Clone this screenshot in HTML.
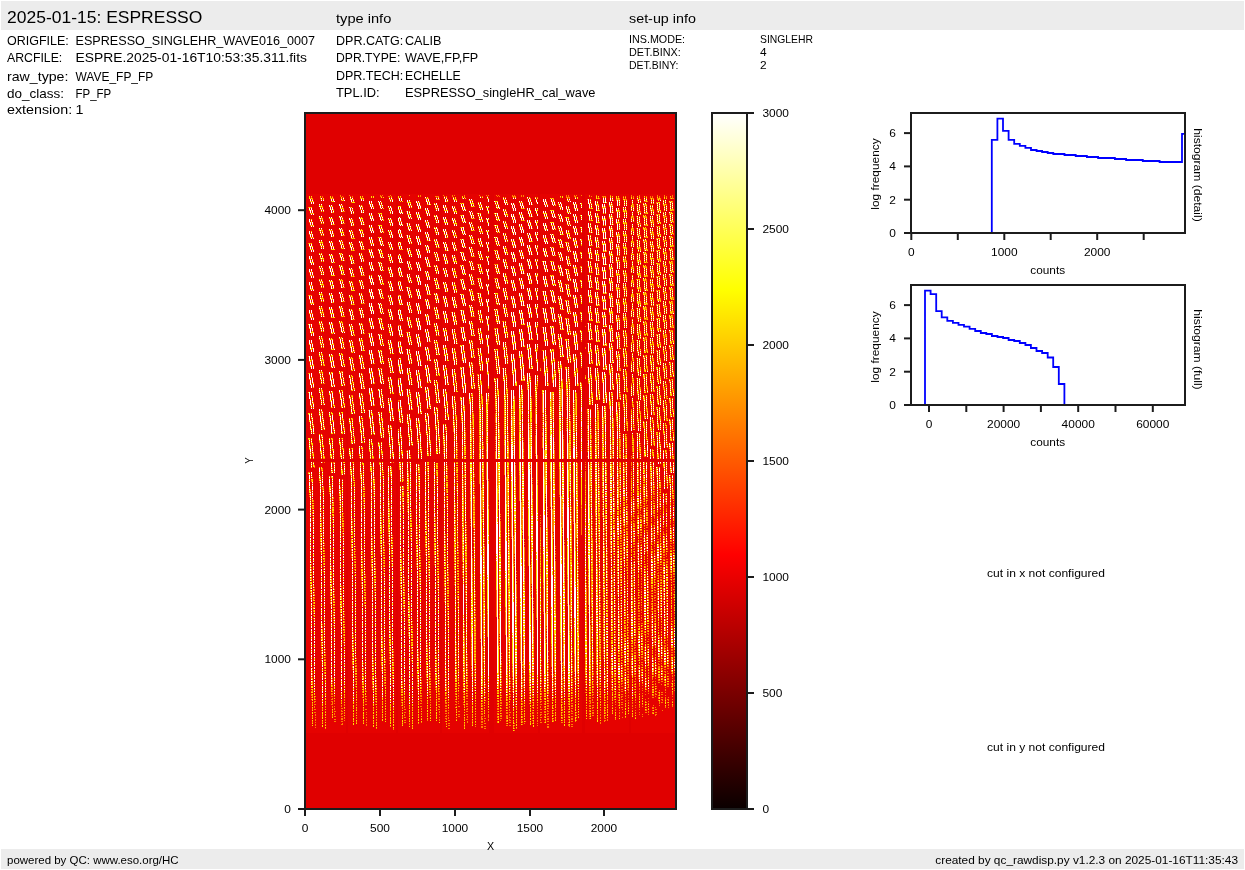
<!DOCTYPE html>
<html><head><meta charset="utf-8"><style>html,body{margin:0;padding:0;background:#fff;width:1245px;height:870px;overflow:hidden}svg{display:block;will-change:transform}text{font-family:"Liberation Sans",sans-serif}</style></head>
<body><svg width="1245" height="870" viewBox="0 0 1245 870" font-family="Liberation Sans, sans-serif" fill="#000"><rect x="1" y="1" width="1243" height="29" fill="#ececec"/>
<rect x="1" y="849" width="1243" height="20" fill="#ececec"/>
<text x="7" y="23" font-size="17.00" text-anchor="start" textLength="195.33" lengthAdjust="spacingAndGlyphs" >2025-01-15: ESPRESSO</text>
<text x="336" y="23" font-size="13.21" text-anchor="start" textLength="55.34" lengthAdjust="spacingAndGlyphs" >type info</text>
<text x="629" y="23" font-size="13.21" text-anchor="start" textLength="66.89" lengthAdjust="spacingAndGlyphs" >set-up info</text>
<text x="7" y="45.2" font-size="13.21" text-anchor="start" textLength="61.85" lengthAdjust="spacingAndGlyphs" >ORIGFILE:</text>
<text x="75.5" y="45.2" font-size="13.21" text-anchor="start" textLength="239.56" lengthAdjust="spacingAndGlyphs" >ESPRESSO_SINGLEHR_WAVE016_0007</text>
<text x="7" y="61.7" font-size="13.21" text-anchor="start" textLength="55.29" lengthAdjust="spacingAndGlyphs" >ARCFILE:</text>
<text x="75.5" y="61.7" font-size="13.21" text-anchor="start" textLength="231.44" lengthAdjust="spacingAndGlyphs" >ESPRE.2025-01-16T10:53:35.311.fits</text>
<text x="7" y="80.5" font-size="13.21" text-anchor="start" textLength="61.41" lengthAdjust="spacingAndGlyphs" >raw_type:</text>
<text x="75.5" y="80.5" font-size="13.21" text-anchor="start" textLength="77.83" lengthAdjust="spacingAndGlyphs" >WAVE_FP_FP</text>
<text x="7" y="97.7" font-size="13.21" text-anchor="start" textLength="57.07" lengthAdjust="spacingAndGlyphs" >do_class:</text>
<text x="75.5" y="97.7" font-size="13.21" text-anchor="start" textLength="35.71" lengthAdjust="spacingAndGlyphs" >FP_FP</text>
<text x="7" y="113.5" font-size="13.21" text-anchor="start" textLength="65.15" lengthAdjust="spacingAndGlyphs" >extension:</text>
<text x="75.5" y="113.5" font-size="13.21" text-anchor="start" textLength="7.95" lengthAdjust="spacingAndGlyphs" >1</text>
<text x="336" y="45" font-size="13.21" text-anchor="start" textLength="67.22" lengthAdjust="spacingAndGlyphs" >DPR.CATG:</text>
<text x="405" y="45" font-size="13.21" text-anchor="start" textLength="36.51" lengthAdjust="spacingAndGlyphs" >CALIB</text>
<text x="336" y="62.4" font-size="13.21" text-anchor="start" textLength="64.29" lengthAdjust="spacingAndGlyphs" >DPR.TYPE:</text>
<text x="405" y="62.4" font-size="13.21" text-anchor="start" textLength="73.28" lengthAdjust="spacingAndGlyphs" >WAVE,FP,FP</text>
<text x="336" y="80.3" font-size="13.21" text-anchor="start" textLength="67.25" lengthAdjust="spacingAndGlyphs" >DPR.TECH:</text>
<text x="405" y="80.3" font-size="13.21" text-anchor="start" textLength="55.75" lengthAdjust="spacingAndGlyphs" >ECHELLE</text>
<text x="336" y="97.2" font-size="13.21" text-anchor="start" textLength="43.63" lengthAdjust="spacingAndGlyphs" >TPL.ID:</text>
<text x="405" y="97.2" font-size="13.21" text-anchor="start" textLength="190.48" lengthAdjust="spacingAndGlyphs" >ESPRESSO_singleHR_cal_wave</text>
<text x="629" y="43.1" font-size="11.01" text-anchor="start" textLength="56.09" lengthAdjust="spacingAndGlyphs" >INS.MODE:</text>
<text x="760" y="43.1" font-size="11.01" text-anchor="start" textLength="53.01" lengthAdjust="spacingAndGlyphs" >SINGLEHR</text>
<text x="629" y="55.9" font-size="11.01" text-anchor="start" textLength="51.70" lengthAdjust="spacingAndGlyphs" >DET.BINX:</text>
<text x="760" y="55.9" font-size="11.01" text-anchor="start" textLength="6.63" lengthAdjust="spacingAndGlyphs" >4</text>
<text x="629" y="68.8" font-size="11.01" text-anchor="start" textLength="49.54" lengthAdjust="spacingAndGlyphs" >DET.BINY:</text>
<text x="760" y="68.8" font-size="11.01" text-anchor="start" textLength="6.63" lengthAdjust="spacingAndGlyphs" >2</text>
<text x="7" y="864" font-size="11.01" text-anchor="start" textLength="171.64" lengthAdjust="spacingAndGlyphs" >powered by QC: www.eso.org/HC</text>
<text x="1238" y="864" font-size="11.01" text-anchor="end" textLength="302.72" lengthAdjust="spacingAndGlyphs" >created by qc_rawdisp.py v1.2.3 on 2025-01-16T11:35:43</text>
<g id="img"><rect x="305" y="113" width="371" height="696" fill="#e00000"/><rect x="306" y="194" width="370" height="539" fill="#e50200"/><rect x="489" y="194" width="5" height="539" fill="#e00000"/><rect x="538" y="194" width="2" height="539" fill="#e00000"/><rect x="582" y="194" width="3" height="539" fill="#e00000"/><rect x="629" y="194" width="2" height="539" fill="#e00000"/><rect x="346" y="194" width="2" height="539" fill="#e00000"/><rect x="396" y="194" width="2" height="539" fill="#e00000"/><rect x="440" y="194" width="2" height="539" fill="#e00000"/><rect x="306" y="459" width="370" height="3" fill="#e00000"/><path d="M308.5 207v1m0 35v1m0 51v1m0 60v1m0 16v1m0 40v1m0 24v1m0 32v1M309.5 222v1m0 11v1m0 24v1m0 12v1m0 12v1m0 13v1m0 61v1m0 17v1m0 69v1m0 22v1m0 1v1m0 6v1m0 6v1m0 7v1M310.5 198v1m0 8v1m0 5v1m0 11v1m0 11v1m0 5v1m0 14v1m0 30v1m0 5v1m0 7v1m0 9v1m0 10v1m0 24v1m0 55v1m0 14v1m0 25v2m0 41v3m0 1v1m0 1v1m0 4v1m0 4v1m0 6v1m0 9v1m0 4v1m0 14v1m0 2v1m0 9v1m0 2v1m0 9v1m0 2v1m0 1v1m0 5v1m0 6v2m0 3v1m0 1v1m0 1v2m0 1v1M311.5 197v1m0 3v1m0 8v1m0 11v1m0 11v1m0 14v1m0 22v1m0 2v1m0 9v1m0 2v1m0 6v1m0 3v1m0 2v1m0 10v1m0 3v1m0 10v1m0 14v1m0 16v1m0 4v1m0 11v1m0 26v1m0 12v1m0 10v1m0 15v1m0 31v1m0 3v2m0 80v1m0 1v1m0 2v1m0 1v2m0 3v1m0 3v2m0 4v1m0 1v1m0 7v1m0 2v1m0 9v1m0 2v1m0 9v1m0 2v1m0 9v1m0 2v1m0 9v1m0 2v1m0 9v1m0 2v1m0 9v1m0 2v1m0 1v1m0 5v1m0 7v1m0 2v2m0 1v1m0 1v1M312.5 198v1m0 14v1m0 11v1m0 11v1m0 37v1m0 9v1m0 3v1m0 13v1m0 9v1m0 3v1m0 25v1m0 15v1m0 5v1m0 11v1m0 5v1m0 19v1m0 13v1m0 7v2m0 24v1m0 1v3m0 21v1m0 5v1m0 1v1m0 4v1m0 1v1m0 6v1m0 6v2m0 2v1m0 1v2m0 1v1m0 2v1m0 1v1m0 147v1m0 2v1m0 1v2m0 1v1m0 1v1m0 3v2m0 6v2m0 3v2m0 6v2m0 3v2m0 6v2m0 3v2M313.5 201v1m0 35v1m0 11v1m0 25v1m0 26v1m0 14v1m0 46v1m0 17v1m0 19v1m0 21v2m0 26v2m0 46v2m0 4v2m0 3v1m0 4v1m0 2v1m0 1v1m0 2v1m0 1v1m0 2v1m0 50v1m0 5v1m0 6v2m0 3v2m0 2v2m0 3v1m0 2v2m0 1v1m0 1v1m0 2v1M314.5 433v1m0 31v1m0 1v1m0 119v1m0 1v2m0 1v1m0 1v1m0 2v2m0 7v2m0 4v1m0 6v1m0 5v1m0 58v1m0 5v1m0 6v2m0 2v2m0 1v1m0 1v2m0 1v1m0 2v1M315.5 696v1m0 2v1m0 1v1m0 2v1m0 4v1m0 2v1m0 1v2m0 1v1m0 1v2m0 1v1m0 1v2m0 1v1M319.5 268v1m0 12v1m0 27v1m0 14v1m0 14v1m0 16v1m0 16v1m0 41v1m0 25v2m0 31v1m0 4v1m0 2v1M320.5 197v2m0 10v1m0 11v1m0 11v1m0 20v1m0 16v1m0 36v1m0 4v1m0 9v1m0 15v1m0 4v1m0 10v1m0 16v2m0 5v1m0 19v1m0 13v1m0 8v2m0 15v1m0 12v2m0 22v2m0 1v1m0 1v1m0 13v1m0 11v1m0 9v1m0 11v1m0 4v2m0 3v2m0 2v2m0 1v1m0 1v2m0 1v1M321.5 209v1m0 8v1m0 2v1m0 8v1m0 2v1m0 11v1m0 25v1m0 9v1m0 30v1m0 10v1m0 19v1m0 28v1m0 5v1m0 12v1m0 6v2m0 11v2m0 8v1m0 14v2m0 12v1m0 18v2m0 37v1m0 2v1m0 1v1m0 2v1m0 1v1m0 1v2m0 2v2m0 3v2m0 3v1m0 7v1m0 2v1m0 1v1m0 88v1m0 1v1m0 4v2m0 3v1m0 3v2m0 1v1m0 2v1m0 1v1M322.5 196v2m0 8v1m0 2v1m0 11v1m0 11v1m0 37v1m0 2v1m0 19v1m0 13v1m0 14v1m0 14v1m0 4v1m0 10v1m0 5v1m0 16v1m0 12v1m0 6v1m0 13v1m0 7v2m0 8v1m0 5v2m0 1v1m0 23v1m0 5v2m0 1v1m0 4v1m0 1v1m0 4v1m0 3v3m0 1v1m0 132v1m0 1v2m0 1v3m0 3v2m0 1v1m0 4v2m0 4v1m0 1v1m0 49v1m0 1v1m0 4v2m0 4v1m0 1v1m0 4v2M323.5 209v1m0 11v1m0 11v1m0 11v1m0 25v1m0 12v1m0 13v1m0 13v1m0 14v1m0 15v1m0 15v1m0 5v1m0 11v1m0 5v1m0 12v2m0 5v2m0 13v2m0 7v2m0 16v1m0 1v1m0 1v1m0 1v1m0 1v1m0 4v1m0 27v3m0 1v1m0 1v1m0 4v1m0 1v1m0 2v1m0 8v1m0 2v1m0 1v1m0 2v1m0 1v1m0 2v1m0 1v1m0 2v1m0 1v1m0 2v1m0 1v1m0 4v1m0 4v2m0 7v1m0 3v1m0 1v1m0 1v2m0 1v1m0 2v1m0 1v1M324.5 316v1m0 47v1m0 18v1m0 19v1m0 22v2m0 28v1m0 1v1m0 3v1m0 80v1m0 1v1m0 2v1m0 1v2m0 3v1m0 3v2m0 12v1m0 4v1m0 1v1m0 5v1m0 4v1m0 1v1m0 5v1m0 4v1m0 1v1m0 5v1m0 4v1m0 1v1m0 5v1m0 4v1m0 1v1m0 5v1m0 4v1m0 1v1m0 4v2m0 7v1m0 3v2m0 2v2m0 1v1m0 1v2m0 1v1m0 2v1M325.5 649v1m0 2v1m0 1v2m0 1v1m0 1v2m0 2v2m0 11v2m0 4v1m0 1v1m0 5v1m0 4v1m0 6v2m0 2v2m0 3v1m0 3v1m0 3v2m0 3v1m0 3v1M329.5 295v1m0 44v1m0 103v1m0 33v1m0 6v1m0 4v1m0 2v1M330.5 198v1m0 7v1m0 35v1m0 3v1m0 38v1m0 13v1m0 39v1m0 22v1m0 30v1m0 7v1m0 13v1m0 40v2m0 26v1m0 2v1m0 2v1m0 1v1m0 4v1m0 6v1m0 4v1m0 4v1m0 19v1m0 14v1m0 2v1m0 9v1m0 2v1m0 9v1m0 2v1m0 1v1m0 5v1m0 6v2m0 2v2m0 1v1m0 1v2M331.5 201v1m0 7v1m0 11v1m0 8v1m0 2v1m0 24v1m0 9v1m0 2v1m0 26v1m0 25v1m0 8v1m0 33v1m0 11v1m0 12v1m0 46v1m0 29v1m0 1v1m0 5v1m0 88v1m0 2v1m0 1v3m0 2v1m0 3v2m0 4v1m0 4v1m0 9v1m0 2v1m0 9v1m0 2v1m0 9v1m0 2v1m0 9v1m0 2v1m0 9v1m0 2v1m0 9v1m0 2v1m0 9v1m0 2v1m0 1v1m0 4v2m0 2v2m0 1v1m0 2v1m0 1v1m0 2v1M332.5 196v1m0 1v1m0 7v1m0 5v1m0 5v1m0 5v1m0 5v1m0 5v1m0 5v1m0 3v1m0 41v1m0 10v1m0 2v1m0 14v1m0 5v1m0 4v1m0 3v1m0 11v1m0 16v1m0 4v1m0 5v1m0 5v2m0 5v1m0 5v1m0 6v2m0 7v1m0 13v1m0 10v1m0 5v1m0 9v1m0 1v1m0 17v1m0 2v1m0 10v1m0 4v1m0 1v1m0 4v1m0 1v1m0 2v1m0 3v2m0 3v1m0 2v1m0 3v1m0 1v1m0 1v1m0 2v1m0 155v1m0 1v2m0 1v1m0 1v2m0 1v2m0 1v1m0 1v2m0 1v1m0 1v2m0 1v4m0 1v2m0 2v2m0 3v2M333.5 198v1m0 10v1m0 23v1m0 24v1m0 3v1m0 8v1m0 71v1m0 5v1m0 10v1m0 5v1m0 11v1m0 5v2m0 11v2m0 21v1m0 8v2m0 24v1m0 6v2m0 33v2m0 1v1m0 2v2m0 3v1m0 2v1m0 4v1m0 24v1m0 1v1m0 10v1m0 1v1m0 10v1m0 1v1m0 10v1m0 1v1m0 4v1m0 5v1m0 1v1m0 4v2m0 3v1m0 3v2m0 3v1m0 2v2m0 1v1m0 1v1m0 2v1M334.5 224v1m0 107v1m0 15v1m0 16v1m0 18v1m0 43v2m0 32v1m0 1v1m0 124v1m0 1v1m0 2v1m0 1v2m0 3v1m0 3v1m0 7v2m0 4v1m0 1v1m0 4v1m0 5v1m0 1v1m0 10v1m0 1v1m0 10v1m0 1v1m0 10v1m0 1v1m0 10v1m0 1v1m0 4v2m0 3v1m0 3v2m0 1v1m0 2v1m0 1v2m0 1v1m0 1v2m0 1v1m0 2v1m0 1v1M335.5 711v1m0 4v1m0 2v1m0 1v1M339.5 254v1m0 12v1m0 12v1m0 27v1m0 14v1m0 69v1m0 50v1m0 39v1m0 4v1m0 1v1m0 2v1m0 3v3m0 1v1m0 1v1m0 2v1m0 1v1m0 2v1M340.5 195v2m0 23v1m0 32v1m0 12v1m0 26v1m0 13v1m0 4v1m0 9v1m0 15v1m0 21v1m0 11v1m0 6v1m0 12v1m0 21v1m0 9v1m0 30v1m0 31v2m0 2v1m0 4v1m0 4v1m0 1v1m0 4v1m0 4v1m0 11v1m0 12v1m0 51v1m0 1v1m0 10v1m0 1v1m0 4v2m0 2v2m0 1v1m0 1v2m0 1v1M341.5 200v1m0 4v1m0 2v1m0 8v1m0 11v1m0 11v1m0 2v1m0 3v1m0 5v1m0 19v1m0 5v1m0 2v1m0 24v1m0 2v1m0 4v1m0 21v1m0 9v1m0 10v1m0 11v2m0 5v1m0 19v1m0 8v1m0 25v1m0 4v1m0 14v2m0 18v2m0 111v1m0 1v2m0 1v1m0 1v1m0 3v2m0 4v1m0 1v1m0 10v1m0 1v1m0 75v1m0 1v1m0 4v2m0 2v2m0 1v1m0 1v2m0 1v2m0 1v1m0 1v2m0 1v1m0 2v1M342.5 196v1m0 8v1m0 11v1m0 11v1m0 11v1m0 15v1m0 2v1m0 5v1m0 6v1m0 23v1m0 14v1m0 9v1m0 24v1m0 11v1m0 11v1m0 5v1m0 6v1m0 5v1m0 6v1m0 7v2m0 13v1m0 10v1m0 7v1m0 1v1m0 1v1m0 1v1m0 1v1m0 1v1m0 19v2m0 8v1m0 1v1m0 4v1m0 1v1m0 4v1m0 1v1m0 2v1m0 6v1m0 1v1m0 2v1m0 4v1m0 3v2m0 3v2m0 2v1m0 2v1m0 1v1m0 2v1m0 171v1m0 2v1m0 1v1m0 2v1m0 1v2m0 1v1m0 1v2M343.5 197v1m0 2v1m0 7v1m0 2v1m0 11v1m0 11v1m0 8v1m0 3v1m0 8v1m0 16v1m0 12v1m0 9v1m0 3v1m0 14v1m0 9v1m0 4v1m0 15v1m0 11v1m0 17v1m0 5v1m0 12v2m0 6v1m0 14v2m0 7v2m0 18v1m0 5v1m0 1v1m0 7v1m0 48v1m0 2v1m0 1v1m0 1v1m0 3v2m0 3v2m0 3v2m0 4v1m0 1v1m0 4v1m0 5v1m0 6v1m0 5v1m0 6v1m0 5v1m0 6v1m0 5v1m0 6v1m0 5v1m0 6v1m0 4v2m0 6v2m0 3v1m0 1v1m0 1v2m0 1v1m0 2v1m0 1v1M344.5 211v1m0 11v1m0 11v1m0 24v1m0 26v1m0 13v1m0 29v1m0 15v1m0 34v2m0 19v1m0 23v2m0 36v1m0 6v1m0 1v1m0 136v1m0 2v1m0 1v1m0 2v1m0 1v2m0 3v1m0 3v2m0 6v1m0 4v2m0 6v1m0 5v1m0 6v1m0 5v1m0 6v1m0 5v1m0 6v1m0 4v2m0 2v2m0 3v2m0 2v1m0 3v2m0 3v2m0 1v1M349.5 195v1m0 48v1m0 38v1m0 13v1m0 28v1m0 15v1m0 55v1m0 23v2m0 30v2M350.5 196v1m0 10v1m0 3v1m0 23v1m0 7v1m0 12v1m0 3v1m0 21v1m0 13v1m0 34v1m0 9v1m0 16v1m0 6v1m0 18v1m0 47v1m0 18v2m0 15v1m0 1v1m0 1v3M351.5 202v1m0 16v1m0 2v1m0 8v1m0 6v1m0 5v1m0 14v1m0 9v1m0 16v1m0 13v1m0 25v1m0 3v1m0 10v1m0 4v1m0 5v1m0 5v1m0 11v1m0 5v1m0 13v1m0 4v2m0 7v1m0 14v1m0 10v1m0 12v1m0 4v1m0 18v1m0 2v1m0 20v1m0 4v1m0 6v1m0 4v1m0 11v1m0 4v1m0 2v1m0 1v1m0 2v1m0 6v1m0 4v2m0 2v2m0 1v1m0 1v2m0 1v1M352.5 196v2m0 1v1m0 19v1m0 5v1m0 5v1m0 15v1m0 2v1m0 5v1m0 3v1m0 8v1m0 3v1m0 2v1m0 5v1m0 13v1m0 7v1m0 5v1m0 4v1m0 25v1m0 9v1m0 11v1m0 5v1m0 12v1m0 12v1m0 7v1m0 8v1m0 5v1m0 7v1m0 13v2m0 12v1m0 1v1m0 1v1m0 3v1m0 56v1m0 1v2m0 1v1m0 2v1m0 5v1m0 6v1m0 10v1m0 1v1m0 2v1m0 9v1m0 2v1m0 9v1m0 2v1m0 9v1m0 2v1m0 9v1m0 2v1m0 9v1m0 2v1m0 9v1m0 2v1m0 7v1m0 1v1m0 2v1m0 1v1m0 5v1m0 2v1m0 3v3m0 1v2m0 1v1M353.5 199v1m0 22v1m0 11v1m0 3v1m0 8v1m0 15v1m0 9v1m0 12v1m0 13v1m0 14v1m0 3v1m0 31v1m0 11v1m0 24v1m0 13v2m0 24v1m0 1v1m0 1v1m0 3v2m0 25v1m0 1v1m0 6v1m0 1v1m0 4v1m0 2v1m0 2v1m0 147v1m0 1v1m0 1v2m0 2v1m0 3v1m0 3v1m0 5v1m0 1v1m0 2v1m0 9v1m0 2v1m0 9v1m0 2v1m0 7v1m0 1v1m0 2v1m0 1v1m0 5v1m0 6v2m0 4v1M354.5 250v1m0 12v1m0 12v1m0 27v1m0 14v1m0 14v1m0 15v2m0 16v1m0 67v2m0 5v1m0 34v1m0 4v1m0 2v1m0 1v1m0 4v1m0 1v1m0 6v1m0 2v1m0 1v1m0 2v1m0 29v1m0 11v2m0 3v1m0 3v2m0 1v2m0 1v1m0 1v1m0 2v1m0 2v1M355.5 546v1m0 2v1m0 1v1m0 2v1m0 1v2m0 3v1m0 3v2m0 11v2m0 4v1m0 1v1m0 10v1m0 1v1m0 10v1m0 1v1m0 10v1m0 1v1m0 10v1m0 1v1m0 10v1m0 1v1m0 4v2m0 7v1m0 3v2m0 3v1m0 3v2m0 1v1m0 2v1m0 1v1M356.5 658v1m0 1v1m0 2v1m0 1v2m0 1v3m0 3v1m0 3v1m0 3v2m0 3v1m0 3v1m0 3v2m0 3v1m0 3v2m0 2v2m0 2v2m0 3v2m0 2v2M359.5 282v1m0 42v1m0 15v1m0 35v1m0 20v1m0 23v2m0 30v1m0 2v1M360.5 198v1m0 7v1m0 35v1m0 29v1m0 8v1m0 13v1m0 28v1m0 15v1m0 5v1m0 10v1m0 6v1m0 18v1m0 12v1m0 8v1m0 14v1m0 11v1m0 20v2m0 1v1m0 15v1m0 1v1m0 1v3M361.5 221v1m0 11v1m0 21v1m0 2v1m0 26v1m0 13v1m0 10v1m0 18v1m0 15v1m0 11v1m0 5v1m0 11v1m0 19v1m0 21v1m0 12v1m0 16v1m0 23v1m0 2v1m0 25v1m0 11v1m0 4v1m0 24v1m0 15v1m0 1v1m0 5v1m0 4v1m0 1v2m0 3v3m0 1v2m0 1v1m0 2v1M362.5 197v2m0 7v1m0 5v1m0 11v1m0 11v1m0 5v1m0 3v1m0 2v1m0 5v1m0 16v1m0 2v1m0 5v1m0 3v1m0 9v1m0 3v1m0 3v1m0 10v1m0 9v1m0 4v1m0 15v1m0 4v1m0 5v2m0 10v1m0 5v2m0 5v1m0 6v1m0 5v2m0 23v1m0 1v1m0 5v2m0 12v1m0 5v1m0 1v1m0 1v1m0 1v1m0 8v1m0 1v1m0 84v1m0 1v2m0 1v1m0 1v2m0 3v1m0 3v2m0 4v1m0 1v1m0 10v1m0 90v1m0 1v1m0 5v1m0 3v1m0 3v2m0 1v1m0 2v1M363.5 221v1m0 11v1m0 15v1m0 8v1m0 16v1m0 9v1m0 13v1m0 3v1m0 41v1m0 22v1m0 11v2m0 5v2m0 20v2m0 15v2m0 8v1m0 32v1m0 1v1m0 4v1m0 1v1m0 4v1m0 3v2m0 4v3m0 2v1m0 1v2m0 1v1m0 1v1m0 2v1m0 154v1m0 2v1m0 1v2m0 1v1m0 1v2m0 2v1m0 4v2m0 4v1m0 1v1m0 4v2m0 4v1m0 1v2m0 3v2m0 4v1m0 1v1m0 4v2M364.5 224v1m0 24v1m0 25v1m0 27v1m0 29v1m0 33v1m0 18v2m0 21v1m0 28v1m0 1v1m0 43v1m0 1v3m0 5v2m0 3v1m0 2v1m0 8v1m0 2v1m0 1v1m0 2v1m0 1v1m0 2v1m0 1v1m0 2v1m0 1v1m0 2v1m0 1v1m0 4v1m0 5v1m0 6v1m0 5v1m0 6v1m0 5v1m0 6v1m0 4v2m0 7v2m0 2v1m0 1v1m0 1v2m0 1v1M365.5 574v1m0 1v2m0 1v1m0 1v2m0 2v1m0 3v2m0 2v2m0 3v2m0 6v1m0 5v1m0 6v1m0 5v1m0 6v1m0 5v1m0 6v1m0 5v1m0 6v1m0 5v1m0 6v1m0 5v1m0 6v1m0 4v2m0 7v2m0 1v1m0 2v1m0 4v1M366.5 691v1m0 4v1m0 2v1m0 1v1m0 2v1m0 4v1m0 2v1m0 1v1m0 2v1m0 1v2m0 1v1m0 1v2M368.5 249v1m0 83v1m0 76v1M369.5 204v1m0 60v1m0 56v1m0 50v1m0 20v1m0 23v1m0 32v1M370.5 215v1m0 11v1m0 11v1m0 3v1m0 77v1m0 15v1m0 22v1m0 18v1m0 12v1m0 8v1m0 14v1m0 31v2m0 15v1m0 1v1m0 2v2M371.5 204v1m0 1v1m0 23v1m0 24v1m0 9v1m0 55v1m0 15v1m0 16v1m0 4v1m0 12v1m0 18v2m0 32v2m0 17v1m0 19v1m0 2v1m0 4v1m0 15v1m0 4v1m0 6v1m0 11v1m0 4v1m0 4v1m0 9v1m0 7v1m0 1v1m0 2v1m0 1v1m0 5v1m0 6v2m0 3v3m0 1v2m0 1v1m0 2v1M372.5 215v1m0 11v1m0 11v1m0 3v1m0 82v1m0 9v1m0 5v1m0 10v1m0 17v1m0 5v1m0 12v1m0 22v1m0 9v2m0 24v1m0 8v1m0 77v1m0 1v2m0 1v1m0 1v2m0 3v1m0 3v2m0 6v1m0 7v1m0 2v1m0 9v1m0 2v1m0 9v1m0 2v1m0 9v1m0 2v1m0 9v1m0 2v1m0 9v1m0 2v1m0 9v1m0 2v1m0 9v1m0 2v1m0 1v1m0 5v1m0 6v1m0 4v3m0 1v2m0 1v1M373.5 206v1m0 11v1m0 11v1m0 24v1m0 12v1m0 56v1m0 15v1m0 34v1m0 20v1m0 25v1m0 32v1m0 1v1m0 10v1m0 6v1m0 1v1m0 4v1m0 3v3m0 1v1m0 1v1m0 2v1m0 1v1m0 154v1m0 1v1m0 2v1m0 1v2m0 3v1m0 3v2m0 6v1m0 7v1m0 2v1m0 1v1m0 7v1m0 2v1m0 1v1m0 4v2m0 6v1m0 4v2M374.5 363v1m0 18v2m0 20v2m0 25v2m0 44v1m0 2v2m0 1v1m0 1v1m0 4v1m0 1v1m0 6v1m0 4v1m0 14v1m0 1v1m0 2v1m0 1v1m0 2v1m0 1v1m0 28v1m0 6v1m0 4v2m0 6v2m0 3v1m0 3v2m0 1v1m0 2v1m0 1v1M375.5 558v1m0 2v1m0 1v2m0 1v1m0 1v1m0 3v2m0 6v2m0 3v2m0 6v1m0 83v1m0 6v1m0 4v2m0 3v1m0 3v2m0 1v1m0 2v1M376.5 678v1m0 1v2m0 1v1m0 1v2m0 2v1m0 3v2m0 3v1m0 3v1m0 3v2m0 3v1m0 3v1m0 3v2m0 2v2m0 3v1M378.5 202v1m0 60v1m0 26v1m0 28v1m0 15v1m0 16v1m0 17v1m0 42v1m0 32v1M379.5 205v1m0 7v1m0 23v1m0 3v1m0 20v1m0 17v1m0 8v1m0 4v1m0 23v1m0 15v1m0 22v1m0 11v1m0 6v1m0 12v1m0 22v2m0 9v2m0 18v2m0 17v1m0 1v1M380.5 195v2m0 11v1m0 7v1m0 11v1m0 3v1m0 7v1m0 9v1m0 6v1m0 5v1m0 6v1m0 5v1m0 2v1m0 13v1m0 10v1m0 14v1m0 8v1m0 5v1m0 16v1m0 16v1m0 27v1m0 8v1m0 28v2m0 26v1m0 29v1m0 4v1m0 6v1m0 4v1m0 4v1m0 1v1m0 2v1m0 1v1m0 2v1m0 1v1m0 2v1m0 1v1m0 4v1m0 4v2m0 2v2m0 1v1m0 1v2m0 1v1M381.5 196v1m0 8v1m0 13v1m0 11v1m0 5v1m0 3v1m0 14v1m0 9v1m0 9v1m0 6v1m0 5v1m0 7v1m0 10v1m0 9v1m0 4v1m0 3v1m0 6v1m0 4v1m0 10v1m0 10v1m0 6v1m0 5v1m0 6v1m0 13v1m0 24v1m0 11v1m0 13v1m0 1v1m0 4v2m0 58v1m0 1v1m0 1v2m0 3v1m0 3v1m0 2v1m0 1v1m0 4v1m0 12v1m0 2v1m0 9v1m0 2v1m0 9v1m0 2v1m0 9v1m0 2v1m0 9v1m0 2v1m0 9v1m0 2v1m0 9v1m0 2v1m0 9v1m0 2v1m0 7v1m0 6v2m0 3v3m0 1v2m0 1v1M382.5 195v1m0 20v1m0 11v1m0 15v1m0 12v1m0 8v1m0 3v1m0 8v1m0 13v1m0 18v1m0 42v1m0 17v2m0 5v1m0 13v1m0 7v1m0 15v1m0 10v2m0 20v1m0 1v1m0 1v1m0 1v1m0 6v1m0 1v1m0 4v1m0 4v1m0 154v1m0 2v1m0 1v4m0 1v1m0 3v2m0 4v1m0 4v1m0 9v1m0 2v1m0 9v1m0 2v1m0 9v1m0 2v1m0 1v1m0 4v2m0 6v2m0 3v2M383.5 219v1m0 11v1m0 12v1m0 52v1m0 14v1m0 30v1m0 35v2m0 20v2m0 26v1m0 40v1m0 9v1m0 1v1m0 4v1m0 1v1m0 4v1m0 1v1m0 9v1m0 1v1m0 2v1m0 1v1m0 2v1m0 19v1m0 4v1m0 1v1m0 4v2m0 3v1m0 3v2m0 3v2m0 1v2m0 1v1m0 1v1m0 2v1M384.5 542v1m0 2v1m0 1v1m0 1v1m0 2v2m0 7v2m0 11v1m0 5v1m0 1v1m0 4v1m0 5v1m0 1v1m0 4v1m0 5v1m0 1v1m0 4v1m0 5v1m0 1v1m0 4v1m0 5v1m0 1v1m0 4v1m0 5v1m0 1v1m0 4v1m0 5v1m0 1v1m0 4v2m0 3v1m0 3v2m0 3v2m0 1v2m0 1v1M385.5 659v1m0 1v2m0 1v1m0 2v1m0 1v2m0 3v2m0 2v2m0 3v1m0 7v2m0 3v1m0 3v2m0 3v1m0 3v1m0 3v2m0 3v1M388.5 196v1m0 47v1m0 25v1m0 12v1m0 13v1m0 14v1m0 14v1m0 16v1m0 16v2m0 18v1m0 21v1m0 28v2m0 61v1m0 11v1m0 4v1m0 4v1m0 1v1m0 2v1m0 1v1m0 2v1m0 1v2m0 4v2m0 1v1m0 2v1m0 1v1M389.5 196v2m0 1v1m0 19v1m0 11v1m0 15v1m0 21v1m0 3v1m0 9v1m0 3v1m0 9v1m0 3v1m0 25v1m0 15v1m0 5v1m0 11v1m0 5v1m0 12v2m0 20v2m0 28v1m0 12v1m0 55v1m0 1v2m0 1v1m0 1v3m0 3v2m0 3v1m0 2v1m0 1v1m0 2v1m0 1v1m0 2v1m0 1v1m0 2v1m0 9v1m0 80v1m0 1v1m0 10v1m0 1v1m0 4v2m0 3v1m0 1v1m0 1v2m0 1v1m0 2v1M390.5 195v1m0 3v1m0 10v1m0 11v1m0 11v1m0 9v1m0 2v1m0 25v1m0 12v1m0 14v1m0 10v1m0 14v1m0 15v1m0 22v2m0 12v1m0 6v1m0 23v1m0 15v1m0 17v1m0 1v1m0 21v1m0 1v1m0 1v3m0 145v1m0 2v1m0 1v2m0 1v1m0 1v1m0 3v2m0 4v1m0 1v1m0 10v1m0 1v1m0 36v1m0 1v1m0 5v1m0 4v1m0 1v1m0 4v2m0 4v1m0 1v1m0 4v1M391.5 196v1m0 2v1m0 7v1m0 11v1m0 11v1m0 24v1m0 3v1m0 8v1m0 6v1m0 10v1m0 2v1m0 20v1m0 4v1m0 9v1m0 15v1m0 5v1m0 17v1m0 5v1m0 13v1m0 13v1m0 9v1m0 9v1m0 5v2m0 10v1m0 23v1m0 4v3m0 1v1m0 6v1m0 13v1m0 6v1m0 9v1m0 1v1m0 22v1m0 4v1m0 1v1m0 4v2m0 3v2m0 2v2m0 1v1m0 1v2m0 1v1m0 2v1M392.5 222v1m0 11v1m0 80v1m0 31v1m0 17v1m0 6v1m0 12v1m0 7v1m0 23v1m0 19v2m0 12v1m0 1v1m0 1v2m0 78v1m0 1v2m0 3v1m0 3v2m0 3v2m0 6v1m0 90v1m0 5v1m0 6v1m0 4v2m0 3v1m0 3v2m0 1v1m0 2v1m0 1v1M393.5 290v1m0 80v1m0 20v1m0 23v2m0 35v1m0 8v1m0 186v1m0 1v2m0 1v2m0 3v2m0 2v2m0 3v2m0 6v1m0 5v1m0 6v1m0 5v1m0 6v1m0 4v2m0 6v2m0 3v2m0 6v2M398.5 198v1m0 22v1m0 24v1m0 25v1m0 8v1m0 13v1m0 4v1m0 24v1m0 15v1m0 5v1m0 11v1m0 6v1m0 11v1m0 21v2m0 9v1m0 18v1m0 12v1M399.5 209v1m0 23v1m0 15v1m0 5v1m0 15v1m0 13v1m0 3v1m0 6v1m0 2v1m0 4v1m0 14v1m0 5v1m0 9v1m0 5v1m0 4v1m0 17v1m0 7v1m0 5v1m0 6v1m0 7v2m0 5v1m0 8v1m0 10v2m0 21v1m0 19v1m0 1v1m0 1v3M400.5 197v1m0 23v1m0 14v1m0 9v1m0 25v1m0 2v1m0 5v1m0 13v1m0 7v1m0 14v1m0 6v1m0 4v1m0 3v1m0 6v1m0 28v1m0 36v2m0 9v1m0 17v1m0 26v1m0 1v1m0 27v1m0 6v1m0 4v1m0 4v1m0 6v1m0 4v1m0 4v1m0 4v1m0 7v1m0 12v1m0 1v1m0 10v1m0 1v1m0 4v2m0 3v2m0 2v1m0 2v2m0 1v1m0 1v1m0 2v1M401.5 209v1m0 11v1m0 11v1m0 15v1m0 21v1m0 13v1m0 3v1m0 9v1m0 4v1m0 24v1m0 22v1m0 30v1m0 7v1m0 14v2m0 7v1m0 19v2m0 1v1m0 10v1m0 1v1m0 1v2m0 96v1m0 2v1m0 1v2m0 1v3m0 3v2m0 1v1m0 5v1m0 4v1m0 1v1m0 101v1m0 1v1m0 4v2m0 3v1m0 1v1m0 1v2m0 1v1m0 2v1M402.5 236v1m0 38v1m0 13v1m0 13v1m0 47v1m0 17v1m0 44v2m0 34v2m0 6v1m0 8v1m0 1v1m0 4v1m0 1v1m0 1v1m0 9v1m0 3v1m0 2v1m0 3v2m0 2v1m0 1v2m0 1v1m0 165v1m0 1v1m0 2v1m0 1v2m0 3v1m0 3v2m0 3v1m0 3v1m0 3v2m0 2v2m0 3v1m0 3v2m0 4v1m0 1v1M403.5 475v1m0 1v1m0 1v2m0 5v3m0 3v1m0 2v1m0 3v1m0 4v1m0 2v1m0 1v1m0 65v1m0 5v1m0 6v1m0 4v2m0 6v2m0 3v1m0 1v1m0 1v2m0 1v1M404.5 577v1m0 1v1m0 2v1m0 1v2m0 3v1m0 3v2m0 6v1m0 5v1m0 6v1m0 70v1m0 6v1m0 4v2m0 2v2m0 1v1m0 1v2m0 1v1m0 2v1m0 1v2m0 1v1m0 2v1m0 1v1M405.5 709v1m0 2v1m0 4v1m0 2v1m0 1v1M406.5 211v1m0 11v1m0 11v1m0 96v1m0 56v1m0 61v1M407.5 214v1m0 11v1m0 11v1m0 12v1m0 39v1m0 29v1m0 15v1m0 36v1m0 21v1m0 53v1m0 26v1m0 4v1m0 1v1m0 1v1m0 2v1m0 3v1m0 2v1m0 3v2m0 2v1m0 1v2m0 1v1m0 1v1M408.5 250v1m0 3v1m0 8v1m0 17v1m0 5v1m0 7v1m0 24v1m0 11v1m0 3v1m0 5v1m0 17v1m0 19v1m0 23v1m0 16v2m0 12v1m0 35v1m0 1v3m0 3v1m0 2v1m0 1v1m0 1v1m0 2v1m0 3v1m0 2v1m0 1v1m0 4v1m0 4v1m0 6v1m0 9v1m0 14v1m0 2v1m0 53v1m0 10v1m0 1v1m0 5v1m0 4v1m0 2v1m0 2v2m0 1v1m0 1v2m0 1v1M409.5 195v1m0 18v1m0 11v1m0 50v1m0 2v1m0 6v1m0 6v1m0 10v1m0 35v1m0 11v1m0 5v1m0 19v1m0 13v2m0 24v2m0 14v1m0 20v1m0 1v1m0 3v1m0 133v1m0 1v2m0 1v3m0 3v2m0 1v1m0 5v1m0 4v1m0 1v1m0 75v1m0 1v1m0 4v2m0 4v1m0 1v2m0 3v2m0 2v2M410.5 205v1m0 11v1m0 11v1m0 11v1m0 8v1m0 16v1m0 9v1m0 12v1m0 14v1m0 3v1m0 31v1m0 11v1m0 5v1m0 32v2m0 7v2m0 15v1m0 11v2m0 23v1m0 2v1m0 15v1m0 6v1m0 6v1m0 11v1m0 18v1m0 4v1m0 5v2m0 1v1m0 1v2m0 1v1M411.5 205v1m0 11v1m0 11v1m0 11v1m0 25v1m0 12v1m0 13v1m0 14v1m0 14v1m0 15v2m0 16v1m0 42v1m0 28v1m0 12v1m0 67v1m0 1v1m0 1v2m0 3v1m0 3v1m0 4v1m0 4v1m0 82v1m0 5v1m0 6v1m0 4v2m0 6v2m0 3v1m0 1v1m0 1v2m0 1v1m0 2v1m0 1v1M412.5 384v1m0 23v2m0 33v1m0 1v1m0 175v1m0 2v1m0 1v2m0 3v1m0 3v2m0 6v1m0 4v2m0 6v1m0 5v1m0 32v1m0 4v2m0 6v2m0 3v2m0 6v2m0 3v2M416.5 251v1m0 54v1m0 31v1m0 36v1m0 22v1m0 28v2m0 63v1m0 4v1m0 6v1m0 4v1m0 4v1m0 14v1m0 1v1m0 2v1m0 1v1m0 4v1m0 5v1m0 6v2m0 2v2m0 1v1m0 1v2m0 1v1M417.5 202v1m0 39v1m0 83v1m0 10v1m0 5v1m0 17v1m0 20v1m0 13v1m0 27v2m0 14v1m0 2v1m0 81v1m0 1v2m0 1v1m0 1v2m0 3v1m0 3v2m0 4v1m0 1v1m0 2v1m0 9v1m0 2v1m0 9v1m0 2v1m0 9v1m0 2v1m0 9v1m0 2v1m0 9v1m0 2v1m0 9v1m0 2v1m0 9v1m0 2v1m0 9v1m0 2v1m0 9v1m0 4v1m0 4v2m0 2v2m0 1v1m0 1v2m0 1v1M418.5 195v1m0 9v1m0 20v1m0 2v1m0 34v1m0 2v1m0 38v1m0 18v1m0 28v1m0 5v1m0 44v1m0 34v1m0 25v1m0 4v1m0 5v2m0 4v1m0 1v2m0 1v1m0 1v1m0 158v1m0 2v1m0 1v2m0 1v3m0 3v2m0 6v1m0 5v1m0 1v1m0 2v1m0 7v1m0 1v1m0 4v1m0 4v2m0 6v2m0 3v2m0 6v1M419.5 202v1m0 5v1m0 5v1m0 11v1m0 11v1m0 66v1m0 4v1m0 31v1m0 11v1m0 5v1m0 19v1m0 13v1m0 25v2m0 11v1m0 31v1m0 1v2m0 1v2m0 8v1m0 1v1m0 4v1m0 1v1m0 4v1m0 11v1m0 6v1m0 27v1m0 1v1m0 10v1m0 1v1m0 4v2m0 11v2m0 3v1m0 3v2m0 1v1m0 2v1M420.5 195v2m0 8v1m0 35v1m0 12v1m0 12v1m0 73v1m0 17v1m0 27v1m0 14v1m0 9v2m0 18v2m0 14v1m0 1v3m0 97v1m0 1v1m0 2v1m0 1v2m0 3v1m0 3v1m0 7v2m0 4v1m0 1v1m0 4v1m0 5v1m0 1v1m0 10v1m0 1v1m0 10v1m0 1v1m0 10v1m0 1v1m0 10v1m0 1v1m0 10v1m0 1v1m0 10v1m0 1v1m0 4v1m0 12v2m0 2v2m0 1v1m0 1v1m0 2v1m0 2v1M421.5 386v1m0 25v1m0 34v1m0 2v1m0 226v1m0 2v1m0 1v2m0 1v1m0 1v2m0 1v1m0 2v1m0 1v2m0 1v1m0 1v2m0 1v1m0 2v1m0 1v2m0 3v2m0 3v1m0 3v1M425.5 198v1m0 11v1m0 11v1m0 11v1m0 38v1m0 27v1m0 14v1m0 15v1m0 17v1m0 41v1m0 27v2m0 81v1m0 4v1m0 6v1m0 4v1m0 4v1m0 2v1m0 4v1m0 4v1m0 1v2m0 3v3m0 1v2m0 1v1m0 1v1M426.5 198v1m0 47v1m0 3v1m0 12v1m0 8v1m0 13v1m0 13v1m0 14v1m0 5v1m0 46v1m0 7v1m0 13v1m0 9v1m0 32v1m0 77v2m0 1v1m0 1v2m0 1v1m0 2v2m0 4v1m0 4v1m0 4v1m0 1v1m0 2v1m0 7v1m0 1v1m0 2v1m0 9v1m0 2v1m0 9v1m0 2v1m0 9v1m0 2v1m0 9v1m0 2v1m0 9v1m0 2v1m0 9v1m0 2v1m0 9v1m0 2v1m0 7v1m0 1v1m0 4v1m0 4v2m0 3v1m0 2v3m0 1v1m0 2v1M427.5 210v1m0 11v1m0 11v1m0 14v1m0 26v1m0 13v1m0 10v1m0 14v1m0 3v1m0 11v1m0 16v1m0 18v1m0 20v2m0 25v1m0 14v1m0 1v1m0 29v1m0 5v3m0 1v1m0 1v1m0 2v1m0 1v1m0 159v1m0 2v1m0 1v2m0 1v3m0 3v2m0 6v1m0 5v1m0 1v1m0 2v1m0 7v1m0 1v1m0 2v1m0 7v1m0 6v2m0 3v2m0 6v2m0 3v2M428.5 198v1m0 5v1m0 8v1m0 11v1m0 11v1m0 2v1m0 9v1m0 8v1m0 3v1m0 2v1m0 5v1m0 21v1m0 5v1m0 4v1m0 9v1m0 15v1m0 16v1m0 18v1m0 14v1m0 5v1m0 8v2m0 9v1m0 5v2m0 10v1m0 1v2m0 21v1m0 2v1m0 8v1m0 3v1m0 4v1m0 1v1m0 4v1m0 13v1m0 1v1m0 9v1m0 1v1m0 32v1m0 4v1m0 1v1m0 4v2m0 3v1m0 3v1m0 4v1m0 2v2m0 1v1m0 1v2m0 1v1m0 2v1M429.5 201v1m0 35v1m0 24v1m0 41v1m0 68v1m0 7v1m0 43v1m0 17v1m0 2v1m0 94v1m0 1v1m0 2v1m0 1v2m0 3v1m0 3v1m0 7v2m0 4v1m0 1v1m0 4v1m0 5v1m0 1v1m0 10v1m0 1v1m0 10v1m0 1v1m0 10v1m0 1v1m0 10v1m0 1v1m0 10v1m0 1v1m0 10v1m0 1v1m0 4v1m0 5v1m0 1v1m0 4v2m0 3v1m0 3v2m0 1v1m0 2v1M430.5 240v1m0 83v1m0 16v1m0 17v1m0 44v2m0 34v2m0 1v1m0 1v1m0 222v1m0 2v1m0 1v2m0 1v1m0 1v2m0 3v1m0 2v2m0 3v2m0 3v1m0 2v2m0 1v1m0 1v2m0 3v1m0 3v1m0 3v1M434.5 241v1m0 12v1m0 55v1m0 32v1m0 41v1m0 27v2m0 80v1m0 4v1m0 6v1m0 4v1m0 4v1m0 16v1m0 5v1m0 4v1m0 1v2m0 3v2m0 2v2m0 1v1m0 1v2m0 1v1M435.5 196v1m0 7v1m0 3v1m0 23v1m0 24v1m0 8v1m0 27v1m0 4v1m0 31v1m0 10v2m0 5v1m0 19v1m0 23v2m0 31v1m0 1v2m0 83v1m0 2v1m0 1v1m0 1v2m0 1v3m0 3v2m0 3v2m0 4v1m0 4v1m0 1v1m0 10v1m0 1v1m0 90v1m0 10v1m0 1v1m0 4v1m0 5v1m0 1v1m0 4v3m0 1v2m0 1v1M436.5 196v2m0 1v1m0 41v1m0 15v1m0 37v1m0 2v1m0 11v1m0 50v1m0 47v2m0 15v1m0 20v1m0 16v1m0 2v1m0 3v1m0 1v3m0 1v1m0 1v1m0 1v2m0 1v1m0 162v1m0 2v1m0 1v2m0 1v1m0 1v1m0 3v1m0 2v2m0 3v2m0 4v1m0 1v1m0 4v1m0 5v1m0 1v1m0 4v2m0 3v2m0 1v1m0 4v2m0 4v1m0 1v1M437.5 196v1m0 2v1m0 8v1m0 7v1m0 5v1m0 5v1m0 3v1m0 20v1m0 3v1m0 2v1m0 5v1m0 13v1m0 13v1m0 4v1m0 9v1m0 8v1m0 6v1m0 22v1m0 11v1m0 6v2m0 6v1m0 25v1m0 19v2m0 23v1m0 2v1m0 2v1m0 11v2m0 1v1m0 3v1m0 4v1m0 1v1m0 4v1m0 8v1m0 4v1m0 16v1m0 1v1m0 2v1m0 1v1m0 2v1m0 1v1m0 2v1m0 1v1m0 2v1m0 1v1m0 4v1m0 5v1m0 4v1m0 1v1m0 4v2m0 3v1m0 3v1m0 3v1m0 3v2m0 1v1m0 1v2m0 1v1m0 2v1m0 1v1M438.5 196v1m0 2v1m0 70v1m0 27v1m0 36v1m0 11v1m0 6v1m0 12v1m0 21v1m0 9v2m0 20v1m0 14v1m0 1v1m0 2v1m0 103v1m0 2v1m0 1v2m0 1v1m0 1v2m0 2v1m0 4v1m0 3v1m0 3v2m0 4v1m0 1v1m0 5v1m0 4v1m0 1v1m0 10v1m0 1v1m0 10v1m0 1v1m0 10v1m0 1v1m0 10v1m0 1v1m0 10v1m0 1v1m0 10v1m0 1v1m0 5v1m0 4v1m0 6v2m0 2v2m0 1v1m0 1v2m0 1v1m0 2v1m0 1v1m0 2v1M439.5 199v1m0 47v1m0 12v1m0 57v1m0 16v1m0 17v1m0 19v1m0 24v2m0 35v1m0 2v1m0 236v1m0 2v1m0 1v1m0 2v1m0 2v1m0 1v1m0 2v1m0 1v2m0 1v1m0 1v2m0 1v1m0 2v1m0 1v2m0 1v1m0 1v2m0 1v1m0 2v1m0 1v2M443.5 195v1m0 74v1m0 13v1m0 14v1m0 14v1m0 16v1m0 38v1m0 25v1m0 42v1m0 1v1m0 1v3m0 1v1m0 1v1m0 1v1m0 1v1M444.5 196v1m0 46v1m0 12v1m0 3v1m0 22v1m0 4v1m0 9v1m0 4v1m0 9v1m0 5v1m0 10v1m0 5v1m0 11v1m0 29v1m0 15v1m0 11v1m0 27v1m0 2v1m0 1v1m0 1v1m0 49v1m0 4v1m0 6v1m0 4v1m0 11v1m0 4v1m0 4v1m0 4v1m0 2v1m0 1v1m0 2v1m0 4v1m0 2v1m0 1v1m0 2v1m0 1v1m0 5v1m0 6v2m0 3v2m0 2v1m0 3v3m0 1v2m0 1v1m0 1v2m0 1v1m0 2v1m0 1v1M445.5 207v1m0 2v1m0 8v1m0 11v1m0 2v1m0 9v1m0 25v1m0 2v1m0 10v1m0 2v1m0 14v1m0 11v1m0 3v1m0 16v1m0 18v1m0 21v1m0 16v1m0 12v1m0 21v1m0 2v1m0 102v1m0 1v2m0 1v1m0 1v2m0 1v3m0 3v1m0 3v1m0 3v2m0 4v1m0 6v1m0 2v1m0 2v1m0 1v1m0 2v1m0 4v1m0 2v1m0 1v1m0 2v1m0 4v1m0 4v1m0 2v1m0 4v1m0 4v1m0 2v1m0 4v1m0 4v1m0 2v1m0 4v1m0 4v1m0 2v1m0 4v1m0 4v1m0 2v1m0 4v1m0 4v1m0 2v1m0 7v1m0 1v1m0 2v1m0 1v1m0 5v1m0 2v1m0 3v3m0 1v2m0 1v1m0 1v2m0 1v1m0 2v1m0 1v1m0 2v1M446.5 196v1m0 4v1m0 5v1m0 23v1m0 5v1m0 9v1m0 2v1m0 5v1m0 6v1m0 10v1m0 13v1m0 2v1m0 43v1m0 39v2m0 26v2m0 23v1m0 1v1m0 1v1m0 21v1m0 8v1m0 1v1m0 6v1m0 6v1m0 3v1m0 2v1m0 3v3m0 1v1m0 1v2m0 1v1m0 1v1m0 2v1m0 1v1m0 162v1m0 2v1m0 1v1m0 2v1m0 1v2m0 1v1m0 1v2m0 1v4m0 1v2m0 1v1m0 1v2m0 1v1m0 1v2m0 1v2m0 1v1m0 1v2m0 1v1m0 1v2m0 1v2m0 3v2M447.5 234v1m0 67v1m0 32v1m0 17v1m0 20v2m0 7v2m0 16v1m0 13v2m0 49v1m0 1v2m0 1v1m0 1v1m0 1v4m0 4v1m0 2v1m0 3v1m0 7v1m0 3v1m0 2v1m0 1v1m0 2v1m0 34v1m0 1v1m0 10v1m0 1v1m0 10v1m0 1v1m0 4v2m0 7v1m0 3v2m0 3v1m0 3v1m0 3v2m0 2v2m0 1v1m0 1v2m0 1v1m0 2v1m0 1v1m0 2v1M448.5 250v1m0 89v1m0 41v2m0 30v1m0 149v1m0 2v1m0 1v1m0 2v1m0 1v2m0 1v3m0 2v2m0 3v1m0 3v2m0 3v1m0 3v1m0 3v2m0 6v1m0 10v1m0 1v1m0 10v1m0 1v1m0 10v1m0 1v1m0 10v1m0 1v1m0 10v1m0 1v1m0 10v1m0 1v1m0 4v2m0 3v1m0 3v1m0 3v1m0 1v1m0 1v2m0 1v1m0 1v2m0 1v1m0 2v1m0 1v1m0 2v1M449.5 720v1m0 2v1m0 1v1m0 2v1M451.5 312v1M452.5 195v2m0 61v1m0 12v1m0 62v1m0 18v1m0 53v2M453.5 211v1m0 11v1m0 20v1m0 12v1m0 17v1m0 9v1m0 19v1m0 15v1m0 11v1m0 5v1m0 20v1m0 13v2m0 9v1m0 18v2m0 19v1m0 1v5M454.5 195v1m0 3v1m0 8v1m0 11v1m0 11v1m0 2v1m0 53v1m0 10v1m0 15v1m0 3v1m0 12v1m0 4v1m0 13v1m0 5v2m0 14v1m0 8v1m0 18v2m0 16v1m0 2v1m0 1v1m0 50v1m0 37v1m0 4v1m0 4v1m0 1v1m0 2v1m0 1v1m0 2v1m0 1v1m0 2v1m0 2v1m0 1v1m0 2v1m0 1v1m0 2v1m0 1v2m0 1v1m0 1v2m0 2v1m0 3v3m0 1v2m0 1v1m0 1v2m0 1v1m0 2v1m0 1v1M455.5 208v1m0 23v1m0 15v1m0 8v1m0 17v1m0 24v1m0 4v1m0 9v1m0 5v1m0 16v1m0 12v1m0 6v1m0 23v1m0 18v2m0 13v4m0 83v1m0 1v2m0 1v1m0 1v4m0 1v1m0 1v2m0 2v3m0 2v2m0 1v1m0 1v1m0 2v1m0 1v2m0 1v1m0 2v1m0 1v1m0 2v1m0 1v1m0 2v1m0 1v1m0 2v1m0 2v1m0 1v1m0 2v1m0 4v1m0 2v1m0 82v1m0 4v1m0 2v1m0 1v1m0 2v1m0 4v1m0 2v1m0 1v1m0 4v2m0 3v1m0 3v2m0 1v1m0 2v1m0 1v1m0 2v1m0 2v1M456.5 199v1m0 35v1m0 12v1m0 55v1m0 15v1m0 17v1m0 18v2m0 22v2m0 32v2m0 12v1m0 1v1m0 1v1m0 8v1m0 1v1m0 1v1m0 1v1m0 4v1m0 1v1m0 1v1m0 4v1m0 5v2m0 1v1m0 4v2m0 1v1m0 1v1m0 1v1m0 2v1m0 1v1m0 1v1m0 151v1m0 1v1m0 2v1m0 1v2m0 1v1m0 1v2m0 1v1m0 1v2m0 2v1m0 3v1m0 3v2m0 4v1m0 1v1m0 4v2m0 3v2m0 2v1m0 3v2m0 2v2m0 1v1m0 1v1m0 3v2m0 3v1m0 3v1M457.5 343v1m0 99v1m0 1v1m0 1v1m0 1v2m0 1v1m0 1v1m0 1v1m0 1v1m0 3v1m0 5v1m0 2v1m0 3v1m0 1v2m0 8v1m0 1v1m0 4v1m0 1v1m0 2v1m0 1v1m0 4v1m0 1v1m0 2v1m0 1v1m0 2v1m0 1v1m0 2v1m0 1v1m0 2v1m0 1v1m0 2v1m0 1v1m0 2v1m0 1v1m0 2v1m0 1v1m0 2v1m0 1v2m0 7v1m0 3v2m0 7v1m0 3v1m0 3v2m0 3v2m0 1v2m0 1v1m0 1v2m0 1v1m0 1v2m0 1v1m0 2v1m0 4v1M458.5 542v1m0 2v1m0 1v1m0 2v1m0 1v2m0 1v1m0 1v2m0 2v1m0 3v2m0 3v1m0 3v2m0 7v1m0 3v2m0 9v1m0 1v2m0 1v1m0 2v1m0 1v1m0 2v1m0 2v1m0 1v1m0 2v1m0 1v1m0 2v1m0 2v1m0 1v1m0 2v1m0 1v1m0 2v1m0 2v1m0 1v1m0 2v1m0 1v1m0 2v1m0 2v1m0 1v1m0 2v1m0 1v1m0 2v1m0 2v1m0 4v1m0 1v1m0 4v2m0 7v1m0 3v1m0 1v1m0 1v2m0 1v1m0 2v1m0 1v1m0 2v1m0 4v1m0 2v1m0 1v1M459.5 685v1m0 20v1m0 4v1m0 2v1m0 1v1M460.5 215v1m0 11v1m0 38v1m0 13v1m0 46v1m0 41v1m0 29v2M461.5 203v1m0 35v1m0 3v1m0 12v1m0 8v1m0 13v1m0 4v1m0 14v1m0 15v1m0 29v1m0 7v1m0 13v1m0 9v2m0 18v1m0 19v1m0 1v2m0 1v1M462.5 198v1m0 70v1m0 13v1m0 4v1m0 14v1m0 6v1m0 3v1m0 12v1m0 39v1m0 19v2m0 23v2m0 1v1m0 1v1m0 104v1m0 1v1m0 2v1m0 1v1m0 1v2m0 1v1m0 2v1m0 1v1m0 2v1m0 1v2m0 1v1m0 1v2m0 1v1m0 1v8m0 2v1m0 1v2m0 1v1m0 1v2m0 1v1m0 2v1M463.5 209v1m0 8v1m0 2v1m0 11v1m0 9v1m0 8v1m0 3v1m0 2v1m0 5v1m0 13v1m0 7v1m0 6v1m0 4v1m0 15v1m0 3v1m0 12v1m0 25v2m0 50v2m0 63v1m0 1v1m0 2v1m0 1v1m0 1v1m0 1v2m0 1v9m0 1v2m0 1v1m0 1v2m0 1v1m0 1v1m0 2v1m0 1v1m0 2v1m0 1v1m0 1v2m0 1v1m0 2v1m0 1v1m0 134v1m0 1v2m0 1v1m0 2v1m0 1v1m0 2v1m0 1v2m0 4v1m0 2v1m0 3v1m0 1v1m0 1v2m0 1v1m0 2v1m0 1v1M464.5 195v2m0 9v1m0 23v1m0 52v1m0 4v1m0 9v1m0 15v1m0 16v1m0 6v1m0 19v2m0 13v2m0 9v2m0 19v2m0 1v1m0 31v1m0 1v1m0 1v1m0 1v1m0 4v1m0 1v1m0 3v1m0 4v1m0 3v4m0 2v1m0 1v4m0 1v1m0 1v1m0 1v2m0 1v1m0 1v1m0 132v1m0 2v1m0 1v1m0 2v1m0 1v2m0 1v1m0 1v8m0 1v2m0 1v2m0 1v1m0 1v2m0 1v1m0 2v1m0 1v1m0 2v1m0 1v2m0 1v1m0 2v1m0 1v1m0 2v1m0 1v2m0 4v1m0 1v1m0 4v2m0 4v1m0 1v1m0 4v2m0 3v1m0 3v1m0 3v2m0 3v2m0 1v2M465.5 233v1m0 12v1m0 40v1m0 69v1m0 70v1m0 1v1m0 1v8m0 6v1m0 2v1m0 1v1m0 1v1m0 3v1m0 4v1m0 1v1m0 6v1m0 1v1m0 4v1m0 1v1m0 4v1m0 1v1m0 33v1m0 1v1m0 2v1m0 1v1m0 2v1m0 1v1m0 2v1m0 4v1m0 1v2m0 1v1m0 2v1m0 1v1m0 2v1m0 1v2m0 1v1m0 2v1m0 1v2m0 1v1m0 1v2m0 2v2m0 3v2m0 2v1m0 1v1m0 1v2m0 1v1m0 1v2m0 1v1m0 2v1m0 1v1m0 2v1M466.5 522v1m0 2v1m0 1v1m0 1v2m0 1v1m0 1v2m0 2v2m0 3v2m0 1v1m0 2v1m0 1v2m0 1v1m0 1v2m0 1v1m0 2v1m0 1v1m0 2v1m0 1v2m0 1v1m0 2v1m0 1v1m0 2v1m0 2v1m0 1v1m0 2v1m0 1v1m0 2v1m0 2v1m0 1v1m0 2v1m0 1v1m0 2v1m0 46v1m0 1v1m0 2v1m0 2v1m0 1v1m0 2v1m0 1v1m0 2v1m0 2v1m0 4v1m0 1v1m0 4v2m0 3v1m0 3v2m0 1v1m0 2v1m0 1v2m0 1v1m0 2v1m0 1v1m0 2v1m0 4v1M467.5 654v1m0 2v1m0 1v1m0 2v1m0 1v2m0 1v1m0 1v2m0 1v2m0 3v2m0 3v2m0 2v1m0 3v2m0 1v1m0 1v2m0 1v1m0 2v1m0 1v2m0 1v1m0 1v2m0 1v1m0 2v1m0 1v2m0 1v1m0 1v2M469.5 212v1m0 11v1m0 24v1m0 41v1m0 15v1m0 16v1m0 42v1m0 33v3M470.5 215v1m0 11v1m0 38v1m0 23v1m0 15v1m0 5v1m0 10v1m0 18v1m0 7v1m0 14v1m0 10v1m0 20v2m0 43v1m0 6v1m0 1v1m0 1v1m0 1v1m0 29v1m0 1v1m0 2v1m0 1v1m0 1v4m0 1v1m0 1v18m0 1v1m0 1v1m0 2v1M471.5 200v1m0 17v1m0 17v1m0 2v1m0 3v1m0 5v1m0 2v1m0 3v1m0 5v1m0 13v1m0 13v2m0 8v1m0 5v2m0 34v1m0 6v1m0 14v2m0 8v1m0 13v1m0 5v1m0 2v1m0 24v1m0 1v1m0 1v1m0 1v9m0 1v1m0 1v1m0 3v1m0 1v2m0 1v1m0 1v1m0 1v1m0 1v1m0 181v2m0 1v1m0 1v2m0 1v2m0 1v1m0 1v2m0 1v13m0 1v2m0 1v1m0 2v1m0 1v1M472.5 200v1m0 11v1m0 2v1m0 8v1m0 2v1m0 8v1m0 15v1m0 9v1m0 6v1m0 6v1m0 3v1m0 18v1m0 16v1m0 11v2m0 11v2m0 5v2m0 6v1m0 6v2m0 7v1m0 12v2m0 6v2m0 1v1m0 13v1m0 1v1m0 1v1m0 1v1m0 1v7m0 1v1m0 1v1m0 1v1m0 1v1m0 1v1m0 1v1m0 113v1m0 2v1m0 2v1m0 1v16m0 1v1m0 1v2m0 1v2m0 1v1m0 1v2m0 1v1m0 2v1m0 95v1m0 7v1m0 1v1m0 4v1m0 5v1m0 1v1m0 4v2m0 3v2m0 1v2M473.5 206v1m0 11v1m0 11v1m0 8v1m0 3v1m0 12v1m0 9v1m0 13v1m0 3v1m0 31v1m0 17v2m0 20v1m0 17v1m0 7v1m0 1v2m0 25v1m0 1v2m0 1v1m0 1v1m0 10v1m0 1v1m0 1v1m0 1v1m0 1v1m0 6v1m0 1v1m0 1v1m0 6v1m0 1v1m0 24v1m0 4v1m0 1v1m0 1v1m0 2v1m0 1v1m0 2v1m0 1v1m0 1v1m0 2v1m0 1v1m0 1v2m0 1v1m0 1v2m0 1v1m0 1v2m0 1v1m0 1v3m0 1v1m0 2v1m0 1v1m0 2v1m0 1v1m0 2v1m0 4v1M474.5 206v1m0 11v1m0 11v1m0 25v1m0 12v1m0 14v1m0 14v2m0 15v1m0 17v1m0 20v2m0 27v1m0 89v1m0 1v1m0 4v1m0 1v1m0 1v2m0 1v1m0 1v1m0 1v2m0 1v2m0 1v2m0 1v1m0 1v4m0 1v1m0 1v2m0 1v1m0 1v2m0 1v1m0 1v1m0 2v1m0 1v1m0 2v1m0 1v2m0 1v1m0 1v2m0 1v1m0 2v1m0 58v1m0 2v1m0 2v1m0 1v1m0 2v1m0 1v1m0 2v1m0 1v2m0 1v1m0 2v1m0 1v1m0 2v1m0 1v2m0 1v1m0 1v2m0 1v2m0 1v1m0 1v2m0 1v1m0 1v2m0 1v2m0 1v1m0 1v2m0 1v3m0 3v2m0 1v2m0 1v1m0 1v2m0 1v1m0 1v2m0 1v1m0 2v1m0 1v1m0 2v1M475.5 591v1m0 2v1m0 1v1m0 2v1m0 2v1m0 1v1m0 2v1m0 1v2m0 1v1m0 1v2m0 1v3m0 1v4m0 1v4m0 1v2m0 1v1m0 1v2m0 1v2m0 1v1m0 1v2m0 1v1m0 1v2m0 1v2m0 1v1m0 1v2m0 1v1m0 2v1m0 1v1m0 2v1m0 1v2m0 1v1m0 2v1m0 1v1m0 4v2m0 11v2m0 3v1m0 3v2m0 2v1m0 3v2m0 3v2m0 2v1m0 3v1M477.5 264v1m0 13v1m0 69v1m0 25v2M478.5 216v1m0 11v1m0 25v1m0 27v1m0 31v1m0 59v1m0 11v1m0 2v1M479.5 195v1m0 8v1m0 8v1m0 2v1m0 11v1m0 15v1m0 19v1m0 2v1m0 10v1m0 3v1m0 3v1m0 6v1m0 8v1m0 11v1m0 49v2m0 20v1m0 23v1m0 1v1m0 1v1m0 1v1m0 1v1m0 1v1m0 2v1m0 1v1m0 1v1m0 1v1m0 1v1m0 1v1m0 3v6m0 1v1m0 1v1m0 1v1m0 1v4m0 1v1m0 1v1m0 4v22M480.5 196v1m0 19v1m0 14v1m0 9v1m0 2v1m0 9v1m0 2v1m0 24v1m0 3v1m0 15v1m0 11v1m0 39v1m0 9v1m0 18v2m0 16v1m0 1v2m0 1v1m0 1v1m0 1v1m0 1v1m0 22v1m0 174v2m0 1v2m0 1v23m0 2v1M481.5 204v1m0 11v1m0 11v1m0 38v1m0 29v1m0 4v1m0 16v1m0 12v1m0 6v1m0 13v1m0 8v1m0 18v2m0 16v5m0 84v1m0 1v24m0 1v2m0 1v1m0 167v1m0 2v1m0 7v1m0 6v2m0 3v1m0 3v2m0 1v4m0 1v2m0 1v1m0 1v2M482.5 196v1m0 10v1m0 11v1m0 11v1m0 12v1m0 12v1m0 13v1m0 14v1m0 32v1m0 18v1m0 22v1m0 34v3m0 40v1m0 1v1m0 8v1m0 1v1m0 1v1m0 17v1m0 4v1m0 1v1m0 1v2m0 1v1m0 1v1m0 1v2m0 1v1m0 1v1m0 1v2m0 1v1m0 1v10m0 1v1m0 2v1m0 1v1m0 2v1m0 1v1m0 124v23m0 1v2m0 1v2m0 1v1m0 1v2m0 1v1m0 1v2m0 2v1m0 3v2m0 3v1m0 3v2m0 1v1m0 1v2m0 1v2m0 1v1m0 1v2m0 1v1m0 1v2m0 1v2m0 1v1m0 1v2M483.5 442v1m0 1v1m0 1v4m0 1v1m0 1v1m0 2v3m0 4v1m0 1v1m0 2v1m0 1v1m0 1v1m0 1v2m0 1v1m0 1v1m0 1v1m0 107v1m0 2v1m0 1v2m0 1v1m0 1v2m0 1v2m0 1v1m0 1v2m0 1v1m0 1v2m0 1v2m0 1v1m0 1v2m0 1v4m0 1v4m0 1v13m0 2v1m0 1v1m0 2v1m0 2v1m0 1v1m0 2v1M484.5 536v1m0 2v1m0 1v1m0 2v1m0 1v16m0 1v4m0 1v2m0 1v1m0 1v2m0 1v2m0 1v1m0 1v2m0 1v1m0 1v2m0 1v2m0 1v1m0 1v2m0 1v1m0 2v1m0 1v1m0 72v1m0 2v1m0 1v1m0 2v1m0 7v1m0 1v1m0 4v2m0 3v1m0 3v2m0 2v2m0 2v2m0 1v1m0 1v2m0 1v1m0 2v1m0 1v1M485.5 684v1m0 2v1m0 4v1m0 4v1m0 2v1m0 17v1m0 4v1m0 2v1m0 1v1M486.5 195v1m0 48v1m0 41v1m0 15v1m0 16v1m0 19v1m0 73v1m0 1v1m0 1v1m0 1v1m0 1v1m0 1v1m0 1v1m0 1v1m0 1v1m0 1v6m0 1v1m0 1v1m0 1v1m0 1v6m0 1v8m0 3v18M487.5 196v1m0 64v1m0 23v1m0 32v1m0 6v1m0 20v1m0 14v1m0 12v1m0 24v4m0 206v1m0 1v2m0 1v23M488.5 195v1m0 2v1m0 35v1m0 3v1m0 5v1m0 41v1m0 32v1m0 18v1m0 32v2m0 15v1m0 9v1m0 1v2m0 1v1m0 75v1m0 1v24m0 1v3m0 173v1m0 1v1m0 2v1m0 1v1m0 4v2m0 6v2m0 3v1m0 3v2m0 1v4m0 1v2M494.5 264v1m0 13v1m0 31v1m0 17v2m0 20v2m0 28v1M495.5 204v1m0 11v1m0 11v1m0 21v1m0 3v1m0 9v1m0 3v1m0 9v1m0 19v1m0 10v2m0 17v1m0 20v2m0 7v1m0 21v1m0 17v1m0 1v1m0 1v1m0 1v1m0 1v4m0 1v1m0 1v10m0 1v1m0 1v1m0 1v1m0 1v1m0 1v1m0 1v1m0 1v4m0 1v1m0 1v1m0 1v1m0 1v1m0 1v1m0 1v8M496.5 195v1m0 8v1m0 11v1m0 11v1m0 25v1m0 9v1m0 2v1m0 4v1m0 9v1m0 4v1m0 10v1m0 11v1m0 17v1m0 5v1m0 7v1m0 14v2m0 9v1m0 9v1m0 14v1m0 2v1m0 1v1m0 1v1m0 189v27M497.5 196v1m0 19v1m0 14v1m0 5v1m0 3v1m0 2v1m0 5v1m0 3v1m0 2v1m0 10v1m0 2v1m0 6v1m0 19v1m0 10v1m0 10v1m0 13v1m0 32v2m0 23v1m0 1v2m0 62v1m0 3v24m0 1v1m0 193v1m0 2v1m0 1v1m0 4v2m0 7v2m0 1v2m0 1v1m0 1v2m0 1v1m0 1v2m0 1v2m0 1v1m0 1v2M498.5 195v1m0 8v1m0 23v1m0 29v1m0 13v1m0 9v1m0 4v1m0 15v1m0 17v1m0 11v1m0 7v1m0 14v1m0 9v2m0 21v2m0 48v1m0 1v1m0 28v1m0 1v1m0 2v1m0 1v1m0 1v1m0 1v2m0 1v1m0 1v1m0 1v2m0 1v1m0 1v7m0 2v1m0 1v1m0 4v1m0 109v27m0 27v1m0 2v1m0 2v1m0 1v1m0 2v1m0 1v2m0 3v2m0 7v1m0 3v2m0 2v2m0 3v1m0 3v2M499.5 196v1m0 34v1m0 12v1m0 12v1m0 13v1m0 14v1m0 33v1m0 19v1m0 24v2m0 56v1m0 1v1m0 1v1m0 1v7m0 1v1m0 3v1m0 1v1m0 2v1m0 1v1m0 1v1m0 1v1m0 136v2m0 1v1m0 1v2m0 1v1m0 2v1m0 1v2m0 1v1m0 1v2m0 1v4m0 1v2m0 1v16m0 1v1m0 1v2m0 1v1m0 2v1m0 1v1m0 2v1M500.5 514v1m0 1v1m0 2v1m0 1v10m0 1v2m0 1v1m0 1v2m0 1v1m0 1v2m0 1v1m0 2v1m0 1v2m0 1v1m0 124v1m0 4v1m0 2v1m0 6v2m0 3v2m0 2v2m0 3v1m0 2v2m0 3v2m0 1v1m0 1v1M501.5 653v1m0 2v1m0 1v1m0 2v1m0 1v2m0 1v1m0 2v1m0 1v2m0 1v1m0 1v2m0 1v1m0 1v2m0 1v2m0 1v1m0 1v2m0 1v1m0 2v1m0 1v1m0 2v1m0 1v2m0 1v1m0 2v1m0 1v1m0 2v1m0 1v2m0 1v1M502.5 321v1m0 46v1M503.5 211v1m0 11v1m0 68v1m0 34v1m0 21v1m0 29v1M504.5 199v1m0 35v1m0 3v1m0 51v1m0 41v1m0 13v1m0 9v2m0 17v2m0 23v1m0 1v1m0 1v1m0 1v1m0 1v1m0 1v1m0 1v1m0 1v2m0 1v1m0 1v1m0 1v1m0 1v1m0 1v1m0 1v1m0 1v1m0 1v1m0 1v6m0 1v1m0 1v1m0 1v14m0 3v13M505.5 197v1m0 1v1m0 11v1m0 11v1m0 38v1m0 28v1m0 16v1m0 17v1m0 20v1m0 27v2m0 17v2m0 1v1m0 1v1m0 207v4m0 1v23M506.5 211v1m0 11v1m0 15v1m0 8v1m0 17v1m0 24v1m0 21v1m0 32v2m0 7v2m0 17v2m0 15v1m0 1v2m0 1v1m0 80v24m0 1v2m0 181v1m0 2v1m0 7v1m0 1v1m0 4v2m0 3v1m0 3v2m0 1v4m0 1v2m0 1v1m0 1v1M507.5 202v1m0 23v1m0 12v1m0 72v2m0 40v2m0 32v2m0 1v1m0 1v1m0 40v1m0 32v1m0 1v1m0 1v1m0 2v1m0 1v1m0 1v1m0 2v1m0 1v1m0 1v1m0 1v2m0 1v1m0 1v15m0 1v1m0 1v1m0 2v1m0 1v1m0 121v26m0 1v2m0 1v1m0 1v2m0 1v2m0 1v1m0 1v2m0 1v1m0 2v1m0 1v1m0 4v2m0 3v1m0 3v2m0 1v4m0 1v2m0 1v1m0 1v2m0 1v3m0 3v1m0 3v1M508.5 433v1m0 1v1m0 1v1m0 1v1m0 1v7m0 1v1m0 1v1m0 1v4m0 1v1m0 3v1m0 2v1m0 1v1m0 1v1m0 1v1m0 114v1m0 1v2m0 1v1m0 1v2m0 1v1m0 1v2m0 1v2m0 1v1m0 1v2m0 1v1m0 1v2m0 1v2m0 1v1m0 1v2m0 1v4m0 1v16m0 1v1m0 2v1m0 1v1m0 2v1m0 2v1m0 1v1m0 2v1M509.5 530v1m0 2v1m0 1v1m0 2v1m0 1v13m0 1v2m0 1v1m0 1v2m0 1v2m0 1v1m0 1v2m0 1v1m0 1v2m0 1v2m0 1v1m0 1v2m0 1v1m0 1v2m0 1v1m0 85v1m0 2v1m0 1v1m0 2v1m0 2v1m0 4v1m0 6v2m0 3v1m0 3v2m0 1v2m0 1v1m0 1v2m0 1v1m0 1v2m0 1v1m0 2v1M510.5 678v1m0 2v1m0 1v1m0 2v1m0 1v1m0 2v1m0 2v1m0 1v1m0 2v1m0 12v1m0 4v1m0 2v1m0 1v1m0 2v1M511.5 283v1m0 15v1m0 61v2m0 146v2m0 1v25m0 1v1M512.5 195v2m0 7v1m0 3v1m0 19v1m0 12v1m0 3v1m0 36v1m0 15v1m0 5v1m0 30v1m0 8v1m0 28v2m0 31v1m0 1v1m0 1v1m0 1v1m0 1v1m0 1v11m0 1v1m0 1v1m0 1v1m0 1v1m0 1v1m0 1v1m0 225v1m0 1v2m0 1v2m0 1v5m0 1v2m0 1v1m0 1v2m0 1v1m0 2v1m0 1v1M513.5 196v1m0 22v1m0 24v1m0 38v1m0 3v1m0 11v1m0 3v1m0 12v1m0 4v1m0 14v1m0 5v1m0 17v1m0 9v2m0 37v1m0 1v1m0 1v1m0 1v1m0 1v1m0 1v1m0 1v1m0 1v1m0 1v11m0 1v1m0 1v1m0 1v1m0 1v1m0 1v2m0 1v1m0 1v1m0 1v1m0 1v1m0 81v1m0 1v26m0 1v1m0 124v1m0 2v1m0 1v1m0 7v1m0 4v1m0 4v2m0 6v1m0 4v2M514.5 195v2m0 7v1m0 11v1m0 11v1m0 3v1m0 12v1m0 52v1m0 5v1m0 10v1m0 6v1m0 11v1m0 8v1m0 14v1m0 12v1m0 24v4m0 15v1m0 108v1m0 1v1m0 1v2m0 1v1m0 1v2m0 1v1m0 1v2m0 1v4m0 1v8m0 1v2m0 1v1m0 2v1m0 1v1m0 2v1m0 156v1m0 1v1m0 2v1m0 1v1M515.5 196v1m0 22v1m0 24v1m0 58v1m0 37v1m0 26v1m0 16v1m0 77v1m0 1v12m0 1v1m0 1v1m0 1v2m0 1v1m0 1v1m0 2v1m0 1v1m0 1v1m0 168v2m0 1v1m0 1v2m0 1v1m0 2v1m0 1v2m0 3v2m0 2v2m0 3v1m0 2v1m0 2v1m0 1v2m0 1v1m0 2v1m0 1v1M516.5 349v1m0 31v1m0 189v1m0 2v1m0 1v1m0 2v1m0 1v2m0 1v13m0 1v2m0 1v1m0 1v2m0 1v4m0 1v2m0 1v1m0 1v2m0 1v1m0 2v1m0 1v2m0 1v1m0 46v1m0 1v1m0 2v1m0 4v1m0 2v1m0 1v1m0 5v1m0 6v2m0 3v2m0 6v2m0 3v2m0 6v1M519.5 252v1m0 13v1m0 29v1m0 124v1m0 3v1m0 1v1m0 1v1m0 1v1m0 39v1m0 1v1m0 1v26M520.5 202v1m0 11v1m0 11v1m0 38v1m0 4v1m0 9v1m0 4v1m0 9v1m0 36v1m0 7v1m0 14v2m0 11v2m0 25v1m0 1v2m0 1v1m0 1v1m0 1v1m0 1v1m0 1v1m0 12v1m0 3v1m0 1v1m0 206v2m0 1v24m0 1v1M521.5 195v2m0 8v1m0 23v1m0 12v1m0 9v1m0 2v1m0 10v1m0 2v1m0 14v1m0 11v1m0 3v1m0 17v1m0 13v1m0 23v1m0 9v1m0 27v1m0 1v1m0 1v4m0 1v1m0 1v1m0 1v1m0 1v1m0 1v1m0 1v1m0 86v1m0 1v23m0 1v1m0 1v2m0 159v1m0 2v1m0 7v1m0 6v2m0 3v2m0 6v2M522.5 202v1m0 5v1m0 5v1m0 5v1m0 5v1m0 38v1m0 4v1m0 2v1m0 6v1m0 4v1m0 9v1m0 5v1m0 3v1m0 6v1m0 6v1m0 4v1m0 6v1m0 22v1m0 11v1m0 12v2m0 8v2m0 1v1m0 108v1m0 1v1m0 1v2m0 1v1m0 1v2m0 1v1m0 1v4m0 1v10m0 1v2m0 1v1m0 4v1m0 122v1m0 1v2m0 1v1m0 2v1m0 1v1m0 2v1m0 1v2m0 1v1m0 1v2m0 1v2m0 1v1m0 1v2m0 1v1m0 1v2m0 1v1m0 2v1m0 1v2m0 1v1m0 2v1m0 1v1m0 2v1m0 1v2m0 1v1m0 1v2m0 1v1M523.5 195v2m0 8v1m0 23v1m0 12v1m0 12v1m0 13v1m0 14v1m0 15v1m0 17v1m0 19v1m0 24v2m0 13v1m0 1v1m0 57v1m0 1v1m0 1v7m0 1v1m0 1v4m0 1v1m0 5v2m0 1v1m0 1v1m0 1v1m0 166v1m0 1v1m0 1v2m0 1v2m0 1v1m0 1v2m0 1v1m0 1v2m0 1v2m0 1v1m0 1v2m0 1v5m0 1v2m0 1v1m0 2v1m0 1v2m0 1v1m0 2v1m0 1v1M524.5 208v1m0 11v1m0 52v1m0 49v1m0 21v1m0 29v2m0 162v1m0 2v1m0 1v1m0 2v13m0 1v4m0 1v2m0 1v1m0 1v2m0 1v1m0 1v2m0 1v2m0 1v1m0 1v2m0 1v1m0 2v1m0 90v1m0 1v1m0 2v1m0 1v1m0 5v1m0 1v1m0 4v2m0 3v1m0 3v1m0 3v2m0 3v1m0 3v1M525.5 721v1M527.5 235v1m0 55v1m0 35v1m0 56v1m0 1v4M528.5 210v1m0 11v1m0 15v1m0 8v1m0 42v1m0 34v1m0 22v1m0 10v1m0 21v2m0 153v3m0 1v26M529.5 201v1m0 46v1m0 12v1m0 29v1m0 20v1m0 19v1m0 48v2m0 40v1m0 1v1m0 1v2m0 1v8m0 1v1m0 1v1m0 1v1m0 229v1m0 1v2m0 1v1m0 2v1m0 1v2m0 3v3m0 1v2m0 1v1m0 1v2m0 1v1m0 2v1M530.5 198v1m0 17v1m0 17v1m0 12v1m0 3v1m0 13v1m0 9v1m0 4v1m0 2v1m0 6v1m0 5v1m0 10v1m0 5v1m0 11v1m0 13v1m0 7v1m0 9v1m0 10v1m0 7v2m0 1v1m0 42v1m0 1v1m0 1v1m0 1v1m0 1v1m0 1v1m0 1v1m0 2v1m0 1v1m0 1v1m0 1v1m0 1v1m0 1v1m0 1v2m0 1v1m0 1v1m0 1v1m0 1v1m0 3v3m0 1v1m0 1v2m0 1v1m0 1v1m0 91v1m0 1v24m0 1v2m0 1v1m0 87v1m0 2v1m0 4v1m0 2v1m0 1v1m0 5v1m0 6v1m0 4v2m0 6v1M531.5 213v1m0 11v1m0 53v1m0 15v1m0 35v1m0 7v1m0 15v1m0 11v1m0 28v1m0 1v4m0 1v1m0 1v1m0 1v1m0 1v1m0 1v1m0 6v1m0 3v1m0 1v1m0 1v1m0 1v1m0 113v1m0 2v1m0 1v2m0 1v1m0 1v2m0 1v4m0 1v2m0 1v1m0 1v2m0 1v16m0 1v1m0 2v1m0 1v1m0 2v1m0 4v1M532.5 204v1m0 11v1m0 11v1m0 12v1m0 12v1m0 83v1m0 139v1m0 1v1m0 1v1m0 1v8m0 1v1m0 1v4m0 1v1m0 1v2m0 1v1m0 1v1m0 2v1m0 1v1m0 159v1m0 2v1m0 1v1m0 2v1m0 2v1m0 6v2m0 3v1m0 3v2m0 1v1m0 2v1m0 1v1m0 2v1m0 1v2m0 1v1m0 2v1m0 1v1m0 2v1M533.5 598v1m0 2v1m0 1v1m0 2v1m0 1v2m0 1v1m0 1v14m0 1v1m0 1v2m0 1v4m0 1v2m0 1v1m0 1v2m0 1v1m0 2v1m0 1v2m0 1v1m0 1v2m0 4v1m0 1v2m0 1v1m0 1v2m0 1v1m0 2v1m0 1v1m0 2v1m0 2v1m0 6v2m0 3v2m0 6v2m0 3v1m0 3v2m0 2v2m0 3v2M535.5 235v1m0 12v1m0 27v1m0 14v1m0 35v1m0 23v1m0 39v1m0 1v1m0 1v1m0 1v10m0 1v16m0 1v1m0 1v1m0 1v1m0 1v1m0 1v1m0 1v19m0 1v1M536.5 202v1m0 31v1m0 26v1m0 13v1m0 31v1m0 6v1m0 11v1m0 22v1m0 11v2m0 21v1m0 1v2m0 1v1m0 199v1m0 1v2m0 1v24m0 1v1M537.5 197v1m0 15v1m0 11v1m0 22v1m0 2v1m0 9v1m0 14v1m0 14v1m0 3v1m0 12v1m0 4v1m0 19v1m0 15v2m0 8v1m0 23v1m0 1v2m0 1v1m0 66v4m0 3v18m0 1v1m0 1v2m0 200v1m0 2v1m0 1v1m0 4v2m0 7v2m0 1v2m0 1v1m0 1v2m0 1v1m0 1v2m0 1v2m0 1v1m0 1v1M540.5 368v2m0 145v1m0 2v1m0 1v1m0 1v2m0 1v1m0 1v13m0 1v2m0 1v1m0 1v2m0 1v4m0 1v2m0 1v1m0 1v2m0 1v1m0 2v1m0 1v2m0 1v1m0 1v2m0 1v1m0 98v1m0 2v1m0 1v1m0 2v1m0 1v2m0 4v1m0 6v2m0 2v2m0 1v1m0 1v2m0 1v1m0 2v1m0 1v2m0 1v1m0 1v2m0 1v1M541.5 660v1m0 4v1m0 4v1m0 2v1m0 1v1m0 2v1m0 1v2m0 1v1m0 2v1m0 1v1m0 2v1m0 1v2m0 1v1m0 2v1m0 1v1m0 2v1m0 4v1m0 2v1m0 1v1m0 2v1m0 4v1M542.5 291v1m0 16v1m0 18v1m0 22v1m0 41v1m0 1v19m0 1v1m0 1v1m0 1v1m0 1v1m0 1v1m0 1v1m0 1v1m0 1v1m0 1v1m0 1v4m0 1v11M543.5 238v1m0 26v1m0 94v2m0 221v1m0 1v2m0 1v24m0 1v1M544.5 201v1m0 27v1m0 25v1m0 13v1m0 14v1m0 6v1m0 20v1m0 6v1m0 12v1m0 8v1m0 16v1m0 15v2m0 74v9m0 3v15m0 1v1m0 205v1m0 2v1m0 1v1m0 4v2m0 3v1m0 1v1m0 1v2m0 1v2m0 1v1m0 1v2m0 1v1m0 1v2m0 1v1m0 2v1M545.5 204v1m0 11v1m0 11v1m0 9v1m0 15v1m0 10v1m0 2v1m0 14v1m0 29v1m0 4v1m0 13v2m0 24v1m0 11v1m0 60v1m0 1v1m0 30v1m0 1v1m0 1v1m0 1v1m0 2v1m0 1v1m0 1v1m0 1v2m0 1v1m0 1v10m0 1v1m0 1v1m0 2v1m0 1v1m0 110v26m0 1v1m0 1v1m0 33v1m0 2v1m0 2v1m0 1v1m0 4v2m0 3v2m0 6v2m0 3v2m0 2v2m0 2v2m0 3v2M546.5 201v1m0 27v1m0 25v1m0 13v1m0 14v1m0 15v1m0 11v1m0 5v2m0 12v1m0 7v1m0 15v1m0 13v2m0 43v1m0 1v1m0 1v1m0 1v7m0 1v1m0 1v1m0 1v1m0 1v1m0 1v1m0 1v1m0 137v1m0 1v2m0 1v1m0 1v2m0 1v1m0 2v1m0 1v2m0 1v1m0 1v2m0 1v4m0 1v2m0 1v4m0 1v13m0 1v2m0 1v1m0 2v1m0 1v1m0 2v1m0 4v1M547.5 204v1m0 11v1m0 66v1m0 16v1m0 17v1m0 48v2m0 138v1m0 1v1m0 2v1m0 1v1m0 2v12m0 1v2m0 1v1m0 1v2m0 1v1m0 1v2m0 1v1m0 1v2m0 1v1m0 2v1m0 124v1m0 1v1m0 2v1m0 1v1m0 2v1m0 2v1m0 1v1m0 4v2m0 3v1m0 3v2m0 3v2m0 1v2m0 1v1m0 1v2m0 1v1m0 2v1m0 1v2M548.5 383v3m0 265v1m0 4v1m0 2v1m0 1v1m0 2v1m0 1v2m0 1v1m0 2v1m0 1v2m0 1v1m0 1v2m0 3v1m0 2v2m0 3v2m0 1v1m0 2v1m0 1v2m0 1v1m0 1v2m0 1v1m0 2v1m0 1v1m0 2v1m0 1v2m0 1v1m0 2v1m0 1v2M550.5 276v1m0 51v1m0 23v1m0 63v1m0 1v1m0 1v1m0 3v1m0 54v1m0 1v26m0 2v1M551.5 198v1m0 35v1m0 12v1m0 27v1m0 4v1m0 15v1m0 10v1m0 6v1m0 11v1m0 8v1m0 14v1m0 12v2m0 27v15m0 1v1m0 3v1m0 1v1m0 1v1m0 1v1m0 1v1m0 3v1m0 219v1m0 1v2m0 1v18m0 2v1m0 1v1m0 2v1M552.5 201v1m0 23v1m0 3v1m0 25v1m0 5v1m0 14v1m0 2v1m0 11v1m0 3v1m0 5v1m0 6v1m0 11v1m0 6v1m0 5v1m0 9v1m0 16v2m0 17v4m0 10v1m0 1v6m0 1v1m0 1v1m0 1v1m0 1v1m0 1v1m0 1v1m0 1v1m0 1v1m0 1v1m0 87v1m0 2v25m0 1v1m0 1v1m0 150v1m0 2v1m0 1v1m0 5v1m0 6v1m0 4v2m0 6v2M553.5 198v1m0 5v1m0 8v1m0 2v1m0 11v1m0 5v1m0 6v1m0 5v1m0 3v1m0 9v1m0 3v1m0 9v1m0 4v1m0 15v1m0 3v1m0 6v1m0 5v1m0 12v1m0 7v1m0 6v1m0 7v1m0 24v2m0 25v1m0 95v1m0 2v1m0 1v1m0 1v2m0 1v1m0 1v2m0 1v1m0 1v4m0 1v13m0 1v1m0 1v2m0 1v1m0 135v1m0 1v1m0 2v1m0 2v1m0 1v1m0 2v1m0 1v1m0 2v1m0 2v1m0 1v1m0 2v1m0 4v1m0 2v1m0 1v1m0 2v1m0 1v1m0 2v1m0 1v2M554.5 201v1m0 11v1m0 11v1m0 25v1m0 3v1m0 13v1m0 25v1m0 5v1m0 11v1m0 5v1m0 13v1m0 7v2m0 15v2m0 13v1m0 1v2m0 65v1m0 1v1m0 1v1m0 1v1m0 1v9m0 3v2m0 1v1m0 1v1m0 1v2m0 1v1m0 1v1m0 1v1m0 1v2m0 1v1m0 1v1m0 151v2m0 1v1m0 1v2m0 1v1m0 2v1m0 1v2m0 1v1m0 1v2m0 1v4m0 1v2m0 1v1m0 1v2m0 1v3m0 1v1m0 1v2m0 1v1m0 2v1m0 1v2m0 1v1m0 2v1M555.5 204v1m0 11v1m0 11v1m0 12v1m0 58v1m0 17v2m0 20v2m0 28v2m0 1v1m0 172v1m0 1v1m0 2v1m0 1v2m0 1v1m0 2v1m0 1v16m0 1v4m0 1v2m0 1v1m0 1v2m0 1v4m0 1v2m0 1v1m0 1v2m0 1v1m0 2v1m0 1v2m0 1v1m0 64v1m0 2v1m0 1v1m0 2v1m0 1v1m0 4v2m0 6v2m0 3v2m0 2v2m0 2v2m0 3v2M558.5 204v1m0 23v1m0 25v1m0 13v1m0 30v1m0 17v1m0 21v1m0 29v1m0 1v2M559.5 215v1m0 15v1m0 25v1m0 9v1m0 4v1m0 14v1m0 10v1m0 17v1m0 6v2m0 22v2m0 20v1m0 25v1m0 1v1m0 1v1m0 1v1m0 1v1m0 1v1m0 5v1m0 3v1m0 1v1m0 49v1m0 1v26m0 1v1M560.5 197v1m0 8v1m0 11v1m0 35v1m0 2v1m0 10v1m0 14v1m0 2v2m0 11v1m0 9v1m0 7v1m0 4v2m0 14v1m0 8v1m0 19v2m0 17v1m0 1v2m0 1v1m0 1v1m0 1v1m0 1v1m0 1v1m0 1v1m0 1v1m0 1v1m0 1v1m0 1v1m0 1v1m0 3v1m0 1v1m0 215v1m0 1v2m0 1v23m0 2v1M561.5 203v1m0 3v1m0 7v1m0 11v1m0 3v1m0 12v1m0 2v1m0 5v1m0 13v1m0 4v1m0 9v1m0 8v1m0 6v1m0 5v1m0 4v1m0 6v1m0 6v1m0 5v1m0 16v1m0 17v2m0 21v20m0 1v1m0 1v1m0 3v1m0 81v27m0 1v3m0 158v1m0 4v1m0 2v1m0 1v1m0 4v2m0 4v1m0 1v2m0 3v2m0 3v1m0 3v1M562.5 218v1m0 52v1m0 31v1m0 18v1m0 33v1m0 22v4m0 116v1m0 1v2m0 1v1m0 1v1m0 2v1m0 1v1m0 1v2m0 1v12m0 2v1m0 1v1m0 2v1m0 127v1m0 1v1m0 2v1m0 1v2m0 1v1m0 2v1m0 1v2m0 1v1m0 1v2m0 1v2m0 1v1m0 1v2m0 1v1m0 1v2m0 1v1m0 2v1m0 1v1m0 2v1m0 1v2m0 1v1m0 2v1m0 1v2m0 1v1m0 1v1M563.5 234v1m0 12v1m0 27v1m0 15v1m0 36v1m0 25v1m0 80v1m0 1v1m0 1v11m0 1v1m0 1v1m0 1v1m0 2v1m0 3v1m0 1v1m0 172v1m0 2v1m0 1v2m0 1v1m0 2v1m0 1v2m0 1v1m0 1v2m0 1v4m0 1v4m0 1v2m0 2v2m0 1v1m0 1v2m0 1v1m0 2v1m0 1v1m0 2v1M564.5 540v1m0 1v2m0 1v13m0 1v4m0 1v2m0 1v4m0 1v2m0 1v1m0 1v2m0 1v1m0 2v1m0 1v1m0 98v1m0 2v1m0 7v1m0 6v1m0 4v2m0 6v2m0 3v2M565.5 301v1m0 17v1m0 20v1m0 27v2M566.5 195v3m0 11v1m0 11v1m0 24v1m0 27v1m0 9v1m0 15v1m0 5v1m0 11v1m0 29v2m0 38v1m0 1v6m0 1v1m0 1v1m0 1v1m0 1v1m0 1v1m0 1v1m0 1v1m0 8v1m0 1v1m0 1v1m0 1v1m0 1v1m0 1v1m0 1v1M567.5 197v1m0 39v1m0 4v1m0 7v1m0 8v1m0 4v1m0 8v1m0 5v1m0 4v1m0 15v1m0 4v1m0 6v1m0 5v1m0 5v1m0 7v2m0 5v1m0 7v1m0 33v4m0 190v1m0 1v2m0 1v24m0 1v1M568.5 195v3m0 2v1m0 8v1m0 10v2m0 2v1m0 17v1m0 3v1m0 16v1m0 5v1m0 8v1m0 5v1m0 15v1m0 10v1m0 6v1m0 5v2m0 5v1m0 14v2m0 9v2m0 17v1m0 1v1m0 1v2m0 1v1m0 59v16m0 3v8m0 214v1m0 2v1m0 1v1m0 4v2m0 3v1m0 3v2m0 1v1m0 2v1m0 1v2m0 1v1m0 1v2m0 1v1m0 2v1m0 1v2M569.5 197v2m0 1v1m0 11v1m0 11v1m0 12v1m0 8v1m0 3v1m0 8v2m0 12v2m0 3v1m0 15v1m0 10v2m0 17v1m0 5v1m0 15v1m0 9v2m0 19v1m0 2v1m0 1v1m0 1v1m0 27v1m0 3v1m0 1v1m0 1v1m0 10v1m0 1v1m0 1v1m0 1v1m0 1v1m0 4v1m0 1v1m0 1v1m0 1v1m0 1v1m0 2v1m0 1v1m0 5v2m0 1v1m0 1v1m0 1v12m0 1v1m0 1v1m0 2v1m0 1v1m0 114v26m0 1v1m0 1v1m0 44v1m0 4v1m0 2v1m0 1v1m0 4v2m0 4v1m0 1v2m0 3v2m0 3v1m0 3v1m0 3v2m0 3v2M570.5 212v1m0 11v1m0 25v1m0 12v2m0 13v1m0 15v1m0 16v2m0 19v1m0 22v2m0 58v1m0 1v1m0 1v1m0 1v9m0 1v1m0 1v1m0 1v1m0 1v1m0 1v1m0 1v1m0 2v1m0 1v1m0 1v1m0 1v1m0 97v1m0 2v1m0 1v2m0 1v1m0 1v2m0 1v1m0 2v1m0 1v2m0 1v1m0 1v2m0 1v4m0 1v2m0 1v1m0 1v2m0 1v4m0 1v18m0 2v1m0 1v2m0 1v1m0 2v1m0 1v1m0 2v1M571.5 507v1m0 1v1m0 2v1m0 1v1m0 1v2m0 1v10m0 1v4m0 1v2m0 1v1m0 1v2m0 1v1m0 1v2m0 1v1m0 2v1m0 1v2m0 1v1m0 1v2m0 1v1m0 111v1m0 2v1m0 1v1m0 2v1m0 1v1m0 4v2m0 7v1m0 3v1m0 1v1m0 1v2m0 1v1m0 1v2m0 1v1m0 2v1m0 1v2m0 1v1m0 2v1m0 1v1M572.5 648v1m0 2v1m0 4v1m0 2v1m0 1v1m0 2v1m0 1v2m0 1v1m0 1v2m0 1v1m0 2v1m0 1v2m0 3v2m0 1v2m0 1v1m0 1v2m0 1v1m0 1v2m0 1v1m0 2v1m0 1v2m0 1v1m0 2v1m0 1v1m0 2v1m0 1v2m0 1v1m0 2v1m0 1v1M573.5 241v1m0 26v1m0 47v1m0 18v2m0 24v1m0 70v1m0 60v1m0 1v1m0 1v25m0 1v1M574.5 195v2m0 43v1m0 4v1m0 7v1m0 13v1m0 20v1m0 8v1m0 16v1m0 43v2m0 15v2m0 23v1m0 1v1m0 1v1m0 1v1m0 1v6m0 1v1m0 1v1m0 1v1m0 1v1m0 1v1m0 2v1m0 1v1m0 1v1m0 1v1m0 1v1m0 219v1m0 1v16m0 1v1m0 2v1m0 1v1m0 2v1M575.5 196v1m0 7v1m0 11v1m0 11v1m0 12v1m0 2v1m0 9v1m0 13v1m0 13v1m0 4v1m0 10v1m0 4v1m0 11v1m0 5v1m0 12v2m0 6v2m0 14v2m0 11v1m0 26v1m0 1v15m0 1v1m0 1v1m0 1v1m0 1v1m0 1v1m0 1v1m0 1v1m0 1v1m0 92v25m0 1v2m0 134v1m0 4v1m0 2v1m0 1v1m0 4v2m0 4v1m0 1v1m0 4v2m0 4v1m0 1v1M576.5 195v1m0 12v1m0 11v1m0 11v1m0 7v1m0 4v1m0 7v1m0 13v1m0 5v1m0 8v1m0 5v1m0 8v1m0 6v1m0 9v1m0 7v1m0 10v1m0 9v1m0 13v1m0 12v2m0 21v4m0 1v1m0 18v1m0 1v1m0 1v1m0 79v1m0 2v1m0 1v1m0 2v1m0 1v1m0 1v2m0 1v1m0 1v2m0 1v1m0 1v2m0 1v1m0 1v10m0 2v1m0 1v1m0 2v1m0 166v1m0 2v1m0 1v1m0 2v1M577.5 258v1m0 13v1m0 14v1m0 15v1m0 17v1m0 19v2m0 25v2m0 82v1m0 1v1m0 1v1m0 6v9m0 1v4m0 1v1m0 1v1m0 1v2m0 1v1m0 1v1m0 1v2m0 1v1m0 1v1m0 2v1m0 1v1m0 137v1m0 2v1m0 1v2m0 1v1m0 1v2m0 1v2m0 1v1m0 1v2m0 1v1m0 1v2m0 1v2m0 1v1m0 1v2m0 1v3m0 1v1m0 1v2m0 1v1m0 2v1m0 1v1m0 2v1M578.5 383v3m0 177v1m0 2v1m0 1v1m0 2v1m0 2v1m0 1v1m0 2v18m0 1v4m0 1v2m0 1v1m0 1v2m0 1v2m0 1v1m0 1v2m0 1v1m0 1v2m0 1v2m0 1v1m0 1v2m0 1v1m0 38v1m0 2v1m0 1v1m0 2v1m0 1v2m0 7v1m0 3v2m0 3v1m0 3v1m0 3v1m0 4v1m0 3v1M580.5 240v1m0 25v2m0 28v2m0 34v1m0 21v2m0 30v1m0 1v2M581.5 195v1m0 36v1m0 6v1m0 5v1m0 6v1m0 5v1m0 7v1m0 5v1m0 7v1m0 14v2m0 15v1m0 7v2m0 18v2m0 12v1m0 11v2m0 15v2m0 1v1m0 118v2m0 1v27M585.5 326v1m0 20v2m0 26v2m0 85v1m0 1v1m0 1v2m0 1v1m0 1v9m0 1v4m0 1v1m0 1v2m0 1v1m0 1v1m0 1v2m0 1v1m0 1v1m0 2v1m0 148v1m0 1v1m0 2v1m0 1v2m0 1v1m0 1v2m0 1v1m0 2v1m0 1v2m0 3v1m0 3v2m0 1v1m0 2v1m0 1v1m0 2v1M586.5 570v1m0 4v1m0 4v1m0 2v1m0 1v2m0 1v13m0 1v4m0 1v2m0 1v1m0 1v2m0 1v4m0 1v2m0 1v1m0 1v2m0 1v1m0 2v1m0 1v2m0 1v1m0 2v1m0 30v1m0 1v1m0 2v1m0 2v1m0 1v1m0 2v1m0 1v2m0 11v2m0 3v1m0 3v2m0 2v2m0 3v1M587.5 199v1m0 35v1m0 25v1m0 13v1m0 47v1m0 19v1m0 23v1m0 42v4m0 1v1m0 1v1m0 1v1m0 1v1m0 1v1m0 1v4m0 1v1m0 1v1m0 1v1m0 1v1m0 1v1m0 1v1m0 2v1m0 1v1m0 1v1m0 1v1m0 1v1m0 4v1M588.5 240v1m0 26v1m0 28v1m0 16v1m0 38v2m0 28v2m0 185v1m0 1v2m0 1v1m0 2v1m0 1v2m0 1v1m0 1v2m0 1v18m0 2v1m0 1v1m0 2v1M589.5 195v2m0 42v1m0 12v1m0 13v1m0 13v1m0 30v2m0 16v2m0 47v1m0 86v1m0 1v1m0 1v16m0 1v2m0 1v1m0 1v4m0 1v1m0 1v2m0 1v1m0 1v1m0 2v1m0 171v1m0 2v1m0 1v1m0 4v2m0 7v2m0 1v2m0 1v1m0 1v2m0 1v1m0 1v2m0 1v2m0 1v1m0 1v1M590.5 203v1m0 4v1m0 6v1m0 4v1m0 6v1m0 4v1m0 7v1m0 12v1m0 4v1m0 13v1m0 8v1m0 20v1m0 16v2m0 30v1m0 25v2m0 18v1m0 1v2m0 1v1m0 1v1m0 21v1m0 1v1m0 3v1m0 6v1m0 1v1m0 1v1m0 1v1m0 6v1m0 1v1m0 1v1m0 6v1m0 1v1m0 1v1m0 2v1m0 1v1m0 1v1m0 1v2m0 1v1m0 1v4m0 2v1m0 1v2m0 1v1m0 1v1m0 1v2m0 1v1m0 1v1m0 2v1m0 1v1m0 110v1m0 2v1m0 1v1m0 2v18m0 1v2m0 1v1m0 1v2m0 1v1m0 2v1m0 1v2m0 1v1m0 1v2m0 1v1m0 2v1m0 1v2m0 1v1m0 1v2m0 1v1m0 2v1m0 1v2m0 3v2m0 7v2m0 1v4m0 1v2m0 3v1m0 3v2M591.5 196v1m0 6v1m0 11v1m0 11v1m0 17v1m0 6v1m0 27v1m0 6v1m0 7v1m0 33v1m0 9v1m0 9v1m0 11v1m0 12v2m0 19v1m0 1v2m0 1v1m0 28v1m0 1v1m0 1v1m0 1v4m0 1v3m0 4v4m0 1v1m0 1v1m0 1v1m0 6v1m0 1v1m0 4v1m0 1v1m0 1v1m0 4v1m0 1v1m0 58v1m0 1v1m0 2v1m0 1v1m0 2v1m0 2v1m0 1v1m0 2v1m0 1v2m0 1v1m0 2v1m0 1v1m0 2v1m0 1v2m0 1v1m0 1v2m0 1v4m0 1v2m0 1v1m0 1v2m0 1v4m0 1v2m0 1v5m0 1v2m0 1v1m0 2v1m0 1v2m0 1v1m0 1v2m0 1v1m0 2v1m0 1v1m0 2v1m0 4v1m0 2v1M592.5 232v1m0 12v1m0 12v1m0 13v1m0 14v1m0 14v1m0 16v1m0 18v2m0 20v2m0 30v2m0 1v1m0 120v1m0 1v1m0 2v1m0 1v1m0 2v1m0 1v2m0 1v1m0 1v2m0 1v1m0 1v3m0 1v2m0 1v1m0 1v2m0 1v1m0 1v2m0 1v1m0 2v1m0 1v2m0 1v1m0 1v2m0 1v1m0 2v1m0 1v2m0 1v1m0 2v1m0 1v1m0 2v1m0 1v2m0 1v1m0 2v1m0 1v1m0 2v1m0 1v1m0 2v1m0 64v1m0 2v1m0 1v1m0 2v1m0 1v2m0 4v1m0 6v2m0 2v2m0 1v1m0 1v2m0 1v1m0 2v1m0 1v2m0 1v1m0 1v2m0 1v1M593.5 653v1m0 1v1m0 2v1m0 2v1m0 1v1m0 2v1m0 1v1m0 2v1m0 1v2m0 1v1m0 2v1m0 1v1m0 2v1m0 1v2m0 1v1m0 2v1m0 1v1m0 2v1m0 4v1m0 2v1m0 1v1m0 2v1m0 1v2m0 1v1M595.5 205v1m0 11v1m0 11v1m0 12v1m0 55v1m0 15v1m0 17v1m0 20v1m0 25v2m0 62v1m0 8v1m0 1v1m0 8v1m0 6v1m0 1v1m0 4v1m0 1v1m0 1v1m0 2v1m0 1v1m0 1v1m0 2v1m0 1v1m0 1v2m0 1v1m0 1v1m0 2v1m0 1v1m0 1v2m0 1v1m0 1v5m0 1v2m0 1v1m0 1v2m0 1v1m0 1v2m0 1v1m0 1v2m0 1v1m0 2v1m0 1v1M596.5 195v1m0 8v1m0 35v1m0 12v1m0 13v1m0 13v1m0 14v1m0 15v1m0 17v1m0 19v2m0 24v1m0 44v1m0 1v1m0 1v1m0 1v1m0 1v1m0 1v7m0 1v1m0 1v1m0 3v1m0 2v1m0 1v1m0 1v1m0 1v1m0 8v1m0 6v1m0 144v1m0 2v1m0 4v1m0 2v1m0 1v1m0 2v1m0 1v1m0 2v1m0 2v1m0 1v1m0 2v1m0 1v2m0 1v1m0 1v2m0 1v2m0 1v1m0 1v2m0 1v1m0 1v1m0 3v2m0 2v3m0 1v2m0 1v1m0 2v1m0 1v1M597.5 198v1m0 6v1m0 23v1m0 4v1m0 6v1m0 5v1m0 12v1m0 6v2m0 19v1m0 8v2m0 5v1m0 8v2m0 6v1m0 9v1m0 8v1m0 8v1m0 13v1m0 9v1m0 1v2m0 18v3m0 9v1m0 1v1m0 1v1m0 1v1m0 1v1m0 1v1m0 1v11m0 1v1m0 1v1m0 1v1m0 1v1m0 1v1m0 2v1m0 1v1m0 1v1m0 1v1m0 95v1m0 1v1m0 2v1m0 2v1m0 1v1m0 2v1m0 1v2m0 1v1m0 1v2m0 1v3m0 1v1m0 1v2m0 1v2m0 1v1m0 1v2m0 1v1m0 2v1m0 1v1m0 2v1m0 1v1m0 2v1m0 2v1m0 1v1m0 2v1m0 1v1m0 2v1m0 2v1m0 1v1m0 2v1m0 56v1m0 7v1m0 7v1m0 1v1m0 4v1m0 5v1m0 1v1m0 4v2m0 3v2m0 1v1M598.5 197v1m0 6v1m0 23v1m0 11v2m0 5v1m0 19v1m0 13v1m0 7v1m0 6v2m0 7v1m0 6v2m0 7v2m0 18v1m0 6v2m0 13v1m0 8v2m0 17v1m0 1v2m0 13v1m0 1v2m0 1v1m0 1v1m0 1v1m0 1v1m0 1v1m0 8v1m0 1v1m0 1v1m0 1v1m0 1v1m0 6v1m0 1v1m0 1v1m0 6v1m0 1v1m0 6v1m0 1v1m0 1v1m0 4v1m0 1v1m0 4v1m0 1v1m0 4v1m0 1v1m0 4v1m0 1v1m0 2v1m0 1v1m0 1v1m0 2v1m0 1v1m0 2v1m0 1v1m0 1v2m0 3v2m0 3v2m0 3v1m0 3v2m0 3v2m0 1v1m0 1v2m0 1v1m0 2v1m0 1v1m0 2v1m0 4v1M599.5 198v1m0 35v1m0 12v1m0 12v1m0 13v1m0 14v1m0 14v2m0 15v1m0 38v2m0 28v2m0 1v1m0 74v1m0 1v1m0 2v1m0 1v1m0 1v1m0 1v2m0 1v1m0 1v1m0 1v2m0 1v1m0 2v2m0 5v2m0 3v2m0 3v3m0 2v1m0 1v2m0 1v1m0 2v1m0 1v1m0 2v1m0 1v1m0 2v1m0 1v1m0 2v1m0 1v1m0 2v1m0 1v1m0 2v1m0 2v1m0 1v1m0 2v1m0 1v1m0 2v1m0 2v1m0 1v1m0 2v1m0 1v1m0 2v1m0 2v1m0 1v1m0 2v1m0 1v1m0 2v1m0 2v1m0 1v1m0 2v1m0 1v1m0 2v1m0 2v1m0 1v1m0 2v1m0 1v1m0 2v1m0 2v1m0 1v1m0 2v1m0 1v1m0 2v1m0 1v2m0 1v1m0 2v1m0 1v1m0 2v1m0 1v2m0 1v1m0 1v2m0 1v2m0 3v2m0 3v1m0 3v1m0 3v2m0 3v1m0 3v2m0 2v1m0 1v1m0 1v2m0 1v1m0 2v1m0 1v1m0 2v1m0 1v1M600.5 582v1m0 2v1m0 1v1m0 2v1m0 1v1m0 2v1m0 1v2m0 1v1m0 2v1m0 1v2m0 1v1m0 1v2m0 2v1m0 3v2m0 3v1m0 3v1m0 4v1m0 3v1m0 3v2m0 3v2m0 1v2m0 1v1m0 1v2m0 1v1m0 2v1m0 1v1m0 2v1m0 1v2m0 4v1m0 1v1m0 4v2m0 7v1m0 3v2m0 3v1m0 3v1m0 3v1m0 3v2m0 1v1m0 1v2m0 1v2m0 3v2M602.5 196v1m0 11v1m0 11v1m0 11v1m0 24v2m0 12v1m0 13v2m0 14v1m0 15v1m0 17v2m0 18v2m0 24v2m0 45v1m0 1v1m0 1v1m0 6v1m0 1v1m0 1v1m0 1v1m0 1v1m0 2v1m0 1v1m0 1v1m0 1v1m0 1v1m0 4v1m0 1v1m0 1v1m0 2v1m0 1v1m0 1v1m0 2v1m0 1v1m0 3v2m0 4v3m0 2v4m0 1v1m0 1v1m0 2v1m0 1v1m0 2v1m0 1v1m0 1v2m0 1v1M603.5 196v1m0 9v2m0 10v1m0 11v2m0 11v1m0 12v1m0 42v1m0 15v1m0 16v2m0 19v1m0 24v2m0 37v4m0 1v1m0 1v1m0 1v1m0 1v1m0 1v1m0 1v1m0 1v1m0 2v1m0 1v1m0 1v1m0 1v1m0 1v1m0 6v1m0 3v1m0 6v1m0 1v1m0 27v1m0 6v1m0 4v1m0 4v1m0 6v1m0 4v1m0 4v1m0 4v1m0 2v1m0 1v1m0 2v1m0 4v1m0 4v1m0 7v1m0 4v1m0 4v1m0 2v1m0 4v1m0 2v1m0 1v1m0 2v1m0 2v1m0 1v1m0 2v1m0 1v1m0 4v2m0 4v1m0 1v1m0 4v2m0 3v2m0 1v2m0 3v2m0 3v1m0 3v1m0 3v2m0 2v2m0 1v1m0 1v2m0 1v2m0 1v1m0 1v1m0 2v1M604.5 196v1m0 11v1m0 11v1m0 11v1m0 17v2m0 5v2m0 12v1m0 13v2m0 5v2m0 7v1m0 6v2m0 23v2m0 9v2m0 7v2m0 14v1m0 7v2m0 19v2m0 1v1m0 7v1m0 1v1m0 1v1m0 1v1m0 1v2m0 1v1m0 1v1m0 93v1m0 1v1m0 2v1m0 1v2m0 1v1m0 1v2m0 1v1m0 1v2m0 1v1m0 1v2m0 1v1m0 1v2m0 2v2m0 3v2m0 1v1m0 4v2m0 4v1m0 1v1m0 5v1m0 4v1m0 1v1m0 5v1m0 1v1m0 2v1m0 1v1m0 2v1m0 2v1m0 1v1m0 2v1m0 1v1m0 2v1m0 4v1m0 2v1m0 1v1m0 2v1m0 4v1m0 7v1m0 4v1m0 7v1m0 4v1m0 7v1m0 4v1m0 23v1m0 4v1m0 1v2m0 3v2m0 3v2m0 1v2m0 3v3m0 1v2M605.5 196v1m0 9v2m0 10v1m0 11v2m0 11v1m0 12v1m0 42v1m0 14v2m0 29v1m0 4v2m0 15v2m0 6v1m0 19v1m0 1v2m0 7v2m0 1v1m0 1v1m0 46v1m0 8v1m0 1v1m0 6v1m0 1v1m0 6v1m0 6v1m0 2v1m0 3v1m0 4v1m0 2v1m0 3v2m0 3v2m0 3v2m0 4v2m0 1v1m0 2v1m0 1v1m0 2v1m0 1v1m0 2v1m0 127v1m0 2v1m0 1v2m0 1v1m0 1v2m0 1v1m0 1v2m0 1v1m0 2v1m0 1v1m0 2v1m0 2v1m0 1v1m0 2v1m0 1v2m0 1v1m0 1v2m0 1v1m0 2v1m0 1v1M606.5 250v2m0 40v2m0 14v1m0 15v2m0 17v1m0 20v2m0 26v2m0 63v1m0 5v4m0 4v2m0 1v1m0 3v1m0 2v1m0 3v1m0 2v1m0 3v1m0 2v1m0 3v1m0 4v1m0 2v1m0 21v1m0 4v1m0 4v1m0 4v1m0 2v1m0 4v1m0 4v1m0 2v1m0 4v1m0 4v1m0 2v1m0 7v1m0 6v1m0 5v1m0 6v1m0 4v2m0 6v1m0 4v2m0 6v1m0 4v2m0 6v1m0 4v2m0 6v2m0 3v1m0 3v2m0 1v1m0 1v2m0 1v1m0 2v1m0 1v2m0 1v1m0 1v2m0 1v1m0 2v1M607.5 548v1m0 2v1m0 1v1m0 2v1m0 1v2m0 1v1m0 1v2m0 1v2m0 1v1m0 1v2m0 3v2m0 2v1m0 3v2m0 3v1m0 3v1m0 3v2m0 2v2m0 3v2m0 6v1m0 4v2m0 6v1m0 5v1m0 6v1m0 18v1m0 6v1m0 25v1m0 4v2m0 2v2m0 2v2m0 3v2m0 7v2M609.5 206v1m0 11v1m0 11v1m0 11v1m0 12v1m0 13v1m0 13v1m0 14v1m0 14v2m0 16v1m0 18v1m0 22v2m0 30v4M610.5 195v1m0 8v1m0 11v1m0 11v1m0 12v1m0 11v1m0 13v1m0 13v1m0 13v2m0 14v1m0 16v1m0 18v1m0 21v2m0 28v2m0 49v1m0 3v1m0 8v1m0 6v1m0 1v1m0 4v1m0 1v1m0 4v1m0 1v1m0 6v1m0 2v1m0 3v1m0 2v1m0 1v1m0 2v1m0 4v1m0 3v2m0 3v2m0 3v2m0 3v2m0 3v2m0 3v3m0 1v2m0 1v1m0 1v2m0 1v1m0 2v1M611.5 205v2m0 5v1m0 4v2m0 5v1m0 4v2m0 10v1m0 7v1m0 5v1m0 20v1m0 20v2m0 7v1m0 6v1m0 15v2m0 10v1m0 5v2m0 13v1m0 4v1m0 1v2m0 18v1m0 3v1m0 1v1m0 2v1m0 45v1m0 2v1m0 1v1m0 1v1m0 1v1m0 1v4m0 6v1m0 2v1m0 1v1m0 1v1m0 4v1m0 6v1m0 1v1m0 6v1m0 2v1m0 1v1m0 4v1m0 1v1m0 4v1m0 9v1m0 1v1m0 2v1m0 4v1m0 14v1m0 2v1m0 9v1m0 2v1m0 1v1m0 7v1m0 2v1m0 9v1m0 2v1m0 9v1m0 2v1m0 9v1m0 2v1m0 1v1m0 7v1m0 2v1m0 1v1m0 4v2m0 6v1m0 4v2m0 6v1m0 5v1m0 6v1m0 4v3m0 1v2m0 1v1m0 1v2m0 1v1m0 2v1m0 1v1M612.5 197v1m0 6v2m0 10v2m0 10v2m0 10v2m0 25v1m0 13v1m0 15v1m0 13v1m0 17v1m0 11v1m0 5v1m0 13v1m0 4v2m0 17v1m0 1v2m0 3v2m0 1v1m0 32v1m0 1v1m0 1v1m0 1v1m0 1v1m0 1v1m0 1v2m0 1v1m0 6v4m0 1v1m0 1v1m0 4v1m0 1v1m0 1v1m0 1v1m0 1v1m0 2v1m0 1v1m0 4v1m0 89v1m0 4v1m0 1v2m0 1v2m0 1v1m0 1v2m0 1v1m0 1v1m0 3v2m0 3v1m0 2v1m0 4v2m0 6v1m0 4v2m0 6v1m0 4v2m0 6v1m0 5v1m0 1v1m0 2v1m0 1v1m0 7v1m0 2v1m0 9v1m0 4v1m0 5v1m0 1v1m0 4v1m0 4v2m0 2v2m0 3v1m0 3v2M613.5 200v1m0 11v1m0 11v1m0 11v1m0 25v1m0 13v1m0 29v1m0 15v1m0 18v1m0 19v1m0 23v1m0 32v7m0 1v1m0 1v1m0 1v1m0 1v1m0 1v1m0 1v1m0 8v1m0 1v1m0 1v1m0 6v1m0 1v1m0 15v1m0 6v1m0 1v1m0 4v1m0 1v1m0 6v1m0 14v1m0 1v1m0 2v1m0 4v1m0 4v1m0 4v1m0 1v1m0 9v2m0 3v1m0 3v2m0 1v1m0 2v1m0 1v1m0 2v1m0 1v2m0 1v1m0 2v1m0 1v1m0 2v1m0 1v2m0 1v1m0 2v1m0 1v1m0 2v1M614.5 482v1m0 1v1m0 2v1m0 1v1m0 1v1m0 2v1m0 1v1m0 1v2m0 4v2m0 3v2m0 4v2m0 4v1m0 4v2m0 4v1m0 1v1m0 2v1m0 1v1m0 4v1m0 5v1m0 6v2m0 4v1m0 6v1m0 5v1m0 45v1m0 5v1m0 6v2m0 3v2m0 6v1m0 5v1m0 6v1m0 5v1m0 6v2m0 3v1m0 3v2m0 3v1m0 2v1m0 2v1m0 1v2m0 1v1M615.5 595v1m0 2v1m0 1v1m0 2v1m0 1v2m0 1v1m0 2v1m0 1v1m0 2v1m0 1v2m0 1v1m0 1v2m0 1v2m0 1v1m0 1v2m0 1v1m0 1v2m0 2v1m0 3v2m0 2v2m0 3v2m0 6v2m0 4v1m0 6v2m0 3v2m0 6v2m0 3v2m0 3v1m0 3v2m0 1v1m0 2v1m0 1v2m0 2v2m0 3v2M616.5 199v2m0 10v1m0 11v1m0 11v2m0 24v2m0 12v1m0 13v2m0 30v1m0 35v2m0 22v3m0 32v1m0 1v1m0 1v2m0 1v1m0 1v1M617.5 198v2m0 34v1m0 11v2m0 25v1m0 13v1m0 14v2m0 14v2m0 16v1m0 18v1m0 22v2m0 30v3m0 66v1m0 6v1m0 11v1m0 6v1m0 6v1m0 4v1m0 2v1m0 1v1m0 2v1m0 1v1m0 2v1m0 1v1m0 4v2m0 3v2m0 3v1m0 7v2m0 3v2m0 6v2m0 3v1m0 3v2m0 1v1m0 1v2m0 1v1m0 2v1m0 1v2m0 1v1M618.5 197v1m0 1v2m0 10v1m0 23v2m0 5v1m0 4v2m0 10v1m0 13v1m0 13v1m0 15v2m0 12v1m0 1v2m0 14v1m0 17v1m0 1v2m0 18v1m0 2v1m0 24v1m0 1v2m0 1v1m0 60v1m0 1v1m0 1v1m0 1v2m0 1v1m0 1v6m0 2v2m0 1v1m0 1v1m0 1v2m0 3v1m0 2v1m0 3v2m0 3v2m0 3v1m0 2v1m0 1v1m0 2v1m0 1v1m0 2v1m0 1v1m0 4v1m0 4v2m0 4v1m0 1v1m0 2v1m0 9v1m0 2v1m0 9v1m0 2v1m0 9v1m0 2v1m0 7v1m0 1v1m0 2v1m0 9v1m0 2v1m0 9v1m0 2v1m0 9v1m0 2v1m0 7v1m0 6v2m0 4v1m0 1v1m0 2v1m0 7v1m0 5v1m0 1v2m0 1v1m0 2v1m0 1v2m0 1v1m0 2v1m0 1v1m0 2v1M619.5 198v2m0 10v2m0 10v2m0 10v2m0 10v2m0 7v1m0 4v2m0 13v1m0 13v1m0 12v2m0 14v2m0 9v1m0 4v2m0 1v1m0 9v1m0 7v1m0 11v1m0 1v2m0 3v2m0 1v1m0 15v1m0 1v1m0 2v1m0 3v2m0 1v1m0 26v1m0 1v1m0 1v1m0 1v1m0 1v1m0 2v1m0 1v1m0 1v1m0 1v1m0 1v1m0 1v2m0 1v1m0 5v4m0 4v4m0 1v1m0 1v1m0 1v2m0 1v1m0 1v1m0 1v2m0 1v1m0 1v1m0 2v1m0 1v1m0 109v1m0 2v1m0 1v1m0 2v1m0 1v2m0 1v3m0 3v1m0 7v2m0 3v2m0 6v2m0 3v1m0 3v2m0 2v2m0 3v2m0 1v1m0 2v1m0 7v1m0 6v2m0 3v1m0 7v2m0 3v2m0 3v1m0 1v1m0 1v2m0 1v2M620.5 368v2m0 22v1m0 1v2m0 1v1m0 35v1m0 1v1m0 1v1m0 1v8m0 4v4m0 1v1m0 1v1m0 3v1m0 2v1m0 1v1m0 1v1m0 4v1m0 1v1m0 4v1m0 1v1m0 1v1m0 2v1m0 6v1m0 1v1m0 6v1m0 7v1m0 4v1m0 14v1m0 3v2m0 2v2m0 3v2m0 3v1m0 3v1m0 3v1m0 3v2m0 3v1m0 3v1m0 3v2m0 2v2m0 3v2m0 1v1m0 2v1m0 1v2m0 1v1m0 2v1m0 1v1m0 2v1m0 1v1m0 2v1m0 2v1m0 1v1m0 2v1M621.5 518v1m0 1v1m0 2v1m0 1v1m0 2v1m0 1v4m0 1v2m0 1v1m0 1v2m0 1v1m0 1v2m0 3v1m0 3v1m0 7v2m0 11v2m0 4v1m0 6v2m0 11v2m0 4v1m0 1v1m0 4v1m0 5v1m0 1v1m0 4v1m0 5v1m0 1v1m0 4v1m0 5v1m0 1v1m0 4v2m0 3v1m0 3v1m0 3v2m0 4v1m0 1v1m0 4v2m0 2v2m0 1v1m0 2v1m0 1v1m0 2v1m0 1v2m0 1v1m0 2v1m0 1v1m0 2v1M622.5 634v1m0 2v1m0 1v1m0 2v1m0 1v1m0 2v1m0 2v1m0 1v1m0 2v1m0 1v1m0 2v1m0 2v1m0 1v1m0 1v1m0 2v2m0 3v1m0 4v2m0 1v1m0 2v1m0 2v1m0 1v1m0 2v1m0 1v1m0 2v1m0 2v1m0 1v1m0 2v1m0 1v1m0 2v1m0 4v1M623.5 196v1m0 1v1m0 49v1m0 25v2m0 12v2m0 14v1m0 15v1m0 15v2m0 18v2m0 18v1m0 1v2m0 24v1m0 1v2m0 1v1m0 54v1m0 1v1m0 6v1m0 1v1m0 4v1m0 1v1m0 4v1m0 1v1m0 4v1m0 1v1m0 2v1m0 3v2m0 3v1m0 2v1m0 1v1m0 2v1m0 4v1m0 3v1m0 1v1m0 1v2m0 1v1m0 1v2m0 3v2m0 2v2m0 3v3m0 1v2m0 1v1m0 1v2m0 1v1M624.5 210v1m0 11v1m0 11v1m0 24v2m0 12v2m0 12v2m0 13v1m0 14v2m0 16v2m0 16v2m0 20v2m0 24v1m0 1v2m0 1v1m0 49v1m0 1v1m0 4v1m0 1v1m0 1v5m0 5v2m0 3v1m0 1v2m0 3v1m0 4v1m0 1v1m0 2v1m0 3v2m0 3v1m0 2v1m0 1v1m0 2v1m0 1v1m0 4v1m0 2v1m0 4v1m0 4v1m0 1v1m0 2v1m0 9v1m0 2v1m0 9v1m0 4v1m0 5v1m0 1v1m0 2v1m0 1v1m0 7v1m0 2v1m0 1v1m0 7v1m0 2v1m0 1v1m0 5v1m0 6v1m0 4v2m0 3v1m0 2v1m0 4v2m0 4v1m0 1v1m0 5v1m0 6v1m0 4v1m0 1v1m0 1v2m0 1v1m0 1v2m0 1v4m0 1v2m0 1v1m0 1v2m0 1v1M625.5 196v1m0 1v2m0 11v1m0 11v1m0 11v1m0 12v1m0 11v2m0 12v2m0 12v2m0 13v1m0 14v2m0 14v2m0 16v2m0 18v3m0 23v2m0 35v1m0 1v1m0 1v1m0 3v5m0 1v1m0 1v1m0 1v1m0 1v4m0 3v1m0 1v1m0 2v1m0 1v1m0 1v1m0 109v1m0 2v1m0 1v1m0 2v1m0 1v2m0 1v1m0 1v2m0 1v4m0 1v2m0 3v1m0 3v2m0 2v2m0 3v2m0 1v3m0 2v2m0 3v1m0 3v2m0 4v1m0 1v1m0 7v1m0 2v1m0 1v1m0 5v1m0 6v1m0 7v1m0 2v1m0 1v1m0 4v2m0 2v2m0 1v1m0 1v2m0 2v2m0 6v1m0 4v1M626.5 199v1m0 10v1m0 11v1m0 11v1m0 12v1m0 12v1m0 12v2m0 12v2m0 13v2m0 13v2m0 14v2m0 16v2m0 13v1m0 4v2m0 17v2m0 3v4m0 19v1m0 1v1m0 1v1m0 1v2m0 1v1m0 6v1m0 1v2m0 1v1m0 1v1m0 1v1m0 4v1m0 1v1m0 1v1m0 1v1m0 8v1m0 4v1m0 1v1m0 6v1m0 1v1m0 4v1m0 1v1m0 9v1m0 3v1m0 7v1m0 13v2m0 4v1m0 3v2m0 3v2m0 3v1m0 7v2m0 3v1m0 1v1m0 1v2m0 1v1m0 2v1m0 1v1m0 2v1M627.5 346v1m0 18v2m0 21v3m0 28v1m0 1v2m0 1v1m0 1v1m0 1v1m0 63v1m0 4v1m0 1v1m0 4v1m0 1v2m0 1v1m0 1v3m0 3v2m0 3v3m0 1v1m0 1v2m0 1v3m0 3v2m0 4v1m0 1v1m0 4v1m0 5v1m0 6v2m0 3v2m0 6v2m0 3v2m0 6v2m0 4v1m0 6v1m0 4v2m0 6v2m0 3v2m0 6v2m0 3v2m0 6v2m0 4v1m0 6v2m0 3v2m0 3v1m0 3v2m0 1v1m0 2v1m0 1v2m0 3v1m0 2v1m0 2v1m0 1v1M628.5 614v1m0 2v1m0 1v1m0 2v1m0 4v1m0 2v1m0 1v1m0 2v1m0 1v2m0 1v1m0 1v1m0 3v2m0 6v2m0 3v2m0 2v2m0 3v2m0 1v2m0 3v2m0 2v2m0 3v2m0 2v2m0 1v1m0 2v1m0 1v1m0 2v1m0 1v2m0 3v1m0 3v1M631.5 195v2m0 19v1m0 11v1m0 24v2m0 25v1m0 13v1m0 14v2m0 14v2m0 15v1m0 18v2m0 20v2m0 24v2m0 1v1m0 1v1m0 41v1m0 1v1m0 3v4m0 1v1m0 1v1m0 1v3m0 5v2m0 1v1m0 1v1m0 1v1m0 2v1m0 3v2m0 3v1m0 2v1m0 1v1m0 4v1m0 1v1m0 2v1m0 1v1m0 1v2m0 4v1m0 1v1m0 4v1m0 4v1m0 2v1m0 12v1m0 14v1m0 2v1m0 9v1m0 2v1m0 9v1m0 2v1m0 9v1m0 2v1m0 7v1m0 1v1m0 2v1m0 7v1m0 1v1m0 2v1m0 1v2m0 3v1m0 3v2m0 1v1m0 1v2m0 1v2m0 3v1m0 3v2m0 3v1m0 3v2m0 1v1M632.5 205v2m0 10v1m0 11v2m0 10v2m0 10v1m0 13v2m0 12v2m0 12v2m0 12v2m0 14v2m0 14v2m0 16v2m0 18v1m0 1v2m0 20v1m0 1v2m0 27v1m0 4v1m0 1v1m0 1v1m0 3v5m0 1v1m0 1v1m0 1v1m0 107v1m0 2v1m0 1v1m0 2v1m0 1v2m0 1v1m0 1v2m0 2v2m0 3v1m0 3v1m0 3v2m0 4v1m0 6v1m0 5v1m0 1v1m0 2v1m0 7v1m0 1v1m0 2v1m0 1v1m0 5v1m0 2v1m0 3v2m0 4v1m0 1v1m0 2v1m0 9v1m0 2v1m0 6v2m0 6v1m0 5v1m0 7v2m0 1v2m0 1v1m0 1v1m0 3v2M633.5 196v2m0 6v2m0 10v2m0 10v2m0 11v1m0 13v1m0 10v2m0 12v2m0 12v2m0 13v1m0 1v1m0 12v2m0 14v2m0 1v1m0 14v2m0 1v1m0 16v2m0 1v1m0 13v1m0 6v1m0 1v2m0 1v1m0 1v1m0 14v1m0 1v1m0 11v2m0 1v1m0 1v1m0 1v1m0 1v1m0 4v1m0 1v1m0 1v1m0 6v1m0 1v1m0 6v1m0 1v1m0 4v1m0 1v1m0 4v1m0 11v1m0 3v1m0 2v1m0 1v1m0 2v1m0 3v2m0 2v1m0 1v2m0 2v2m0 3v2m0 3v2m0 3v2m0 2v2m0 1v1m0 2v1m0 1v1m0 2v1m0 1v1m0 2v1m0 2v1m0 1v1m0 2v1m0 1v2m0 1v1m0 2v1m0 1v1m0 2v1m0 1v1m0 2v1M634.5 425v1m0 1v1m0 71v1m0 1v1m0 1v2m0 3v2m0 3v1m0 2v1m0 1v1m0 2v1m0 1v3m0 3v2m0 3v2m0 3v2m0 3v1m0 3v2m0 2v2m0 3v1m0 13v1m0 1v1m0 10v1m0 1v1m0 10v1m0 1v1m0 10v1m0 1v1m0 10v1m0 1v1m0 13v1m0 3v3m0 1v2m0 1v1m0 1v2m0 2v2m0 3v1m0 3v1m0 3v2m0 2v2m0 1v1m0 4v1m0 2v1m0 1v1m0 2v1m0 2v1m0 1v1M635.5 598v1m0 2v1m0 1v1m0 2v1m0 1v2m0 1v1m0 1v2m0 1v1m0 1v2m0 1v2m0 3v2m0 2v2m0 3v1m0 3v2m0 1v1m0 2v1m0 1v1m0 2v1m0 1v2m0 2v2m0 11v2m0 3v1m0 3v2m0 1v1m0 1v1m0 3v1m0 3v1m0 3v2m0 2v2m0 1v1m0 2v1m0 1v1m0 2v1m0 1v2m0 3v1M636.5 204v1m0 11v1m0 11v1m0 11v1m0 25v1m0 12v1m0 13v1m0 14v1m0 31v1m0 17v1m0 19v1m0 22v2m0 30v1M637.5 197v1m0 1v2m0 10v2m0 10v2m0 10v2m0 24v2m0 40v1m0 13v2m0 14v1m0 17v2m0 18v2m0 20v2m0 24v1m0 1v2m0 1v1m0 11v1m0 30v1m0 1v1m0 6v1m0 1v1m0 6v1m0 2v1m0 1v1m0 1v1m0 2v1m0 8v1m0 1v3m0 1v1m0 2v1m0 1v3m0 3v1m0 4v1m0 5v2m0 1v1m0 7v1m0 1v2m0 1v1m0 1v2m0 1v1m0 2v1m0 1v1m0 2v1M638.5 199v1m0 10v2m0 10v2m0 10v2m0 11v1m0 25v1m0 5v1m0 7v1m0 5v1m0 7v1m0 14v2m0 14v2m0 16v2m0 16v2m0 20v2m0 1v1m0 24v2m0 1v1m0 1v1m0 39v4m0 1v1m0 2v4m0 5v2m0 4v3m0 3v1m0 2v1m0 6v1m0 1v1m0 2v1m0 2v3m0 3v1m0 7v1m0 11v2m0 3v2m0 1v1m0 2v1m0 9v1m0 2v1m0 9v1m0 4v1m0 4v2m0 3v1m0 3v1m0 3v2m0 3v1m0 3v1m0 3v2m0 2v2m0 1v1m0 1v2m0 1v2m0 1v1m0 1v2m0 3v1m0 3v2m0 6v1m0 5v1m0 7v2m0 1v1m0 2v1m0 4v1m0 1v2m0 1v2m0 1v1m0 1v2m0 1v1M639.5 195v2m0 1v1m0 5v1m0 5v1m0 5v1m0 5v2m0 4v1m0 5v1m0 5v1m0 7v1m0 11v2m0 12v2m0 12v1m0 13v2m0 12v2m0 14v2m0 14v2m0 16v2m0 18v1m0 1v2m0 16v1m0 1v1m0 1v1m0 1v2m0 19v1m0 8v1m0 1v1m0 1v1m0 1v1m0 1v3m0 1v1m0 1v1m0 1v1m0 102v1m0 2v1m0 1v1m0 2v1m0 20v1m0 1v1m0 2v1m0 1v1m0 2v1m0 1v2m0 1v1m0 2v1m0 1v2m0 1v1m0 1v2m0 1v2m0 1v1m0 1v2m0 2v1m0 5v1m0 1v1m0 2v1m0 1v1m0 7v1m0 2v1m0 1v1m0 4v2m0 3v1m0 2v1m0 7v1m0 2v1m0 1v1m0 4v3m0 1v2m0 1v1m0 1v1m0 3v2m0 6v3m0 1v1m0 2v1m0 1v1M640.5 199v2m0 10v2m0 10v2m0 10v2m0 10v2m0 11v1m0 12v2m0 12v2m0 12v2m0 15v1m0 12v2m0 17v1m0 17v1m0 18v2m0 22v2m0 1v1m0 8v1m0 1v1m0 1v1m0 1v1m0 13v1m0 1v1m0 2v1m0 2v1m0 1v1m0 1v1m0 1v1m0 6v1m0 1v1m0 4v1m0 1v1m0 1v1m0 6v1m0 2v1m0 3v1m0 2v1m0 1v1m0 4v1m0 1v1m0 2v1m0 3v3m0 1v1m0 1v2m0 5v1m0 4v1m0 3v1m0 1v1m0 1v2m0 1v1m0 2v1m0 1v1m0 2v1m0 1v2m0 3v2m0 1v1m0 2v1m0 1v1m0 2v1m0 1v1m0 2v1M641.5 500v1m0 1v1m0 2v1m0 1v1m0 7v1m0 1v1m0 1v1m0 1v1m0 4v1m0 3v1m0 3v2m0 1v1m0 2v1m0 1v1m0 1v1m0 3v2m0 6v1m0 5v1m0 6v2m0 3v1m0 3v2m0 1v1m0 1v2m0 1v2m0 1v1m0 1v2m0 3v1m0 3v1m0 3v2m0 1v1m0 1v2m0 1v1m0 2v1m0 1v2m0 1v1m0 2v1m0 2v1m0 3v1m0 3v2m0 3v2m0 6v2m0 3v1m0 3v2m0 1v1m0 2v1m0 1v1m0 2v1m0 1v2m0 3v1m0 2v1m0 2v1M642.5 623v1m0 1v1m0 2v1m0 1v2m0 3v1m0 3v2m0 6v2m0 3v2m0 2v2m0 1v1m0 2v1m0 1v2m0 7v1m0 4v2m0 3v1m0 1v1m0 2v1m0 1v1m0 2v1m0 1v2m0 3v1m0 3v1m0 1v1m0 7v1m0 1v1M643.5 205v2m0 10v1m0 11v1m0 11v2m0 10v2m0 12v1m0 41v1m0 13v1m0 15v1m0 17v2m0 18v2m0 20v2m0 25v2m0 37v1m0 1v1m0 1v1m0 6v1m0 1v2m0 5v2m0 1v1m0 1v1m0 1v2m0 4v2m0 1v1m0 1v1m0 2v1m0 1v1m0 1v2m0 1v1m0 1v2m0 1v1m0 1v2m0 1v1m0 14v1m0 2v1M644.5 197v1m0 3v1m0 2v2m0 7v1m0 11v1m0 11v1m0 2v2m0 7v2m0 1v2m0 25v1m0 9v2m0 1v2m0 13v1m0 11v1m0 2v2m0 11v1m0 2v2m0 16v2m0 13v1m0 2v2m0 15v1m0 4v2m0 17v1m0 1v2m0 3v4m0 23v1m0 6v1m0 5v3m0 4v1m0 2v1m0 3v1m0 4v1m0 3v1m0 2v1m0 1v1m0 4v1m0 1v1m0 2v1m0 3v2m0 3v1m0 2v1m0 6v1m0 2v1m0 3v1m0 5v1m0 1v1m0 2v1m0 12v1m0 1v1m0 4v2m0 3v1m0 7v1m0 5v1m0 1v1m0 2v1m0 7v1m0 1v1m0 2v1m0 7v1m0 1v1m0 2v1m0 1v1m0 5v1m0 6v2m0 3v1m0 1v1m0 1v2m0 1v1m0 12v1m0 2v1m0 1v2m0 1v1m0 1v2m0 1v1M645.5 200v2m0 3v1m0 6v2m0 2v2m0 6v2m0 2v2m0 6v2m0 3v1m0 6v2m0 4v1m0 11v2m0 7v1m0 4v1m0 7v2m0 4v1m0 7v2m0 4v2m0 9v1m0 2v2m0 11v1m0 2v2m0 10v2m0 3v2m0 12v1m0 4v1m0 15v2m0 3v1m0 18v1m0 2v1m0 30v1m0 2v1m0 4v1m0 84v1m0 1v1m0 2v1m0 1v1m0 2v1m0 12v1m0 1v2m0 1v1m0 1v1m0 3v2m0 6v1m0 5v1m0 1v1m0 2v1m0 7v1m0 1v1m0 2v1m0 7v1m0 1v1m0 2v1m0 7v1m0 6v2m0 3v1m0 5v1m0 9v1m0 2v1m0 7v1m0 3v1m0 2v2m0 4v1m0 1v1m0 2v1m0 1v2m0 2v1m0 2v1m0 4v1m0 1v1m0 3v1m0 4v1m0 1v1M646.5 196v1m0 7v1m0 8v1m0 2v1m0 8v1m0 2v1m0 8v1m0 2v1m0 9v1m0 2v1m0 8v1m0 3v1m0 9v1m0 2v2m0 9v1m0 2v2m0 9v1m0 2v2m0 9v2m0 2v1m0 11v1m0 2v2m0 11v2m0 16v1m0 18v2m0 20v3m0 26v1m0 2v1m0 1v1m0 27v1m0 6v1m0 1v1m0 4v1m0 1v1m0 4v1m0 1v1m0 2v1m0 3v3m0 1v1m0 1v3m0 4v1m0 3v2m0 5v1m0 1v1m0 2v1m0 1v1m0 2v1m0 2v1m0 3v2m0 1v1m0 1v2m0 1v1m0 127v1m0 2v1m0 1v2m0 1v1m0 2v1m0 12v1m0 1v1m0 2v1m0 1v2m0 1v1M647.5 201v1m0 10v1m0 11v1m0 11v1m0 12v1m0 12v1m0 12v2m0 12v1m0 13v2m0 12v2m0 14v1m0 15v2m0 15v3m0 17v2m0 20v3m0 26v1m0 2v1m0 1v1m0 1v1m0 8v1m0 37v1m0 1v1m0 1v2m0 1v1m0 1v1m0 4v1m0 1v2m0 4v2m0 3v2m0 3v3m0 1v1m0 2v1m0 2v2m0 4v1m0 4v1m0 1v1m0 4v2m0 3v1m0 3v2m0 3v1m0 6v1m0 4v1m0 5v1m0 1v1m0 4v1m0 5v1m0 1v1m0 4v1m0 5v1m0 1v1m0 4v2m0 7v1m0 4v2m0 1v1m0 2v1m0 4v1m0 2v1m0 1v2m0 1v1m0 1v1m0 4v1m0 2v2m0 1v1m0 2v1M648.5 576v1m0 2v1m0 1v2m0 1v1m0 1v2m0 1v1m0 1v1m0 2v2m0 3v1m0 3v2m0 3v1m0 3v1m0 3v2m0 7v1m0 4v1m0 2v2m0 1v1m0 2v1m0 1v1m0 5v1m0 2v1m0 4v1m0 5v1m0 1v1m0 5v1m0 2v2m0 7v1m0 8v2m0 1v1m0 4v1m0 2v1m0 1v1m0 4v1m0 2v2m0 1v1M650.5 196v3m0 10v2m0 10v2m0 10v2m0 10v2m0 12v1m0 11v2m0 12v2m0 12v2m0 12v2m0 14v2m0 14v2m0 16v2m0 16v1m0 21v2m0 23v1m0 1v2m0 31v1m0 1v1m0 4v1m0 3v5m0 1v1m0 1v2m0 1v1m0 1v1M651.5 208v2m0 10v2m0 10v2m0 10v2m0 24v2m0 13v1m0 13v1m0 12v2m0 31v1m0 15v1m0 18v2m0 19v1m0 1v1m0 23v2m0 1v1m0 31v1m0 1v1m0 2v1m0 2v1m0 1v1m0 6v1m0 1v1m0 4v1m0 6v1m0 1v1m0 2v1m0 6v1m0 9v1m0 3v2m0 6v1m0 4v1m0 4v1m0 2v1m0 1v1m0 4v2m0 4v1m0 1v1m0 10v1m0 1v1m0 10v1m0 1v1m0 4v3m0 1v2m0 1v1m0 1v2m0 1v1m0 2v1m0 1v2m0 1v1m0 1v2m0 1v1m0 2v1m0 1v2m0 1v1m0 1v2m0 1v1m0 1v2m0 1v2m0 1v1m0 2v1m0 1v1M652.5 196v3m0 10v2m0 10v2m0 10v2m0 10v2m0 10v1m0 13v2m0 12v1m0 13v1m0 13v2m0 12v2m0 14v2m0 14v2m0 16v2m0 18v2m0 18v1m0 1v1m0 1v2m0 26v1m0 1v1m0 1v3m0 72v1m0 2v1m0 1v2m0 1v1m0 1v2m0 1v1m0 2v1m0 4v1m0 1v2m0 1v1m0 1v1m0 3v1m0 5v1m0 1v1m0 4v1m0 5v1m0 1v1m0 4v2m0 3v1m0 3v1m0 3v2m0 3v2m0 1v1m0 4v1m0 5v1m0 1v1m0 23v1m0 1v1m0 4v2m0 4v1m0 1v1m0 12v1m0 4v3m0 1v2m0 3v1m0 3v2m0 3v1m0 1v1m0 9v2m0 1v1m0 1v2M653.5 198v1m0 10v1m0 10v2m0 10v2m0 11v1m0 13v1m0 10v2m0 12v2m0 12v2m0 12v2m0 13v1m0 14v2m0 9v1m0 4v2m0 1v1m0 9v1m0 4v2m0 1v1m0 11v1m0 4v2m0 1v1m0 11v1m0 1v2m0 5v2m0 1v1m0 14v1m0 1v1m0 1v3m0 8v1m0 4v1m0 8v1m0 1v1m0 6v1m0 1v1m0 2v1m0 1v1m0 1v1m0 2v1m0 3v3m0 1v1m0 1v1m0 1v2m0 3v2m0 3v4m0 1v1m0 9v1m0 2v1m0 1v1m0 2v1m0 1v1m0 2v1m0 98v1m0 2v1m0 1v1m0 2v1m0 12v1m0 1v2m0 2v2m0 4v1m0 2v2m0 1v1m0 4v1m0 2v1m0 1v2m0 2v2m0 2v2m0 1v1m0 7v1m0 1v2m0 3v1M654.5 390v2m0 20v2m0 25v1m0 2v1m0 39v1m0 1v1m0 1v2m0 1v1m0 1v1m0 1v2m0 1v1m0 1v1m0 2v1m0 5v1m0 3v2m0 3v3m0 1v1m0 1v2m0 2v1m0 4v1m0 9v2m0 2v2m0 1v1m0 1v1m0 3v2m0 4v1m0 1v1m0 5v1m0 4v1m0 1v1m0 4v2m0 3v1m0 3v2m0 1v1m0 2v1m0 1v2m0 1v1m0 2v1m0 1v1m0 2v1m0 1v2m0 1v1m0 1v2m0 1v1m0 2v1m0 1v2m0 3v2m0 2v1m0 1v1m0 1v2m0 1v1m0 1v2m0 1v1M655.5 556v1m0 1v1m0 2v1m0 1v2m0 1v1m0 2v1m0 1v2m0 1v1m0 1v2m0 1v1m0 2v1m0 1v1m0 2v1m0 2v1m0 1v1m0 2v1m0 1v1m0 2v1m0 2v1m0 1v1m0 2v1m0 1v2m0 3v1m0 3v2m0 4v1m0 1v1m0 5v1m0 4v1m0 1v1m0 4v2m0 2v2m0 1v1m0 1v2m0 2v2m0 4v1m0 1v1m0 5v1m0 3v1m0 1v1m0 2v1m0 1v2m0 4v1m0 3v2m0 1v1m0 10v1m0 1v1m0 2v1m0 1v2M656.5 202v2m0 10v2m0 10v1m0 11v2m0 10v2m0 24v2m0 12v2m0 12v2m0 12v2m0 14v2m0 14v2m0 16v2m0 16v1m0 21v2m0 23v1m0 2v1m0 31v1m0 1v1m0 1v3m0 1v1m0 188v1m0 2v1m0 1v1m0 2v1m0 12v1m0 1v1m0 2v1m0 2v1m0 14v1m0 2v1m0 1v1M657.5 195v2m0 1v2m0 2v1m0 7v2m0 2v1m0 7v2m0 2v1m0 7v2m0 2v1m0 7v2m0 2v1m0 21v2m0 2v1m0 9v1m0 3v1m0 9v1m0 3v1m0 9v2m0 2v1m0 11v1m0 3v1m0 11v1m0 3v1m0 11v2m0 16v1m0 5v1m0 15v2m0 4v1m0 15v1m0 1v2m0 5v1m0 1v1m0 21v1m0 10v1m0 1v1m0 4v1m0 13v1m0 1v1m0 4v1m0 6v1m0 4v1m0 1v1m0 1v1m0 5v1m0 1v1m0 4v1m0 4v1m0 2v1m0 2v2m0 1v1m0 1v1m0 9v1m0 1v1m0 2v1m0 1v1m0 4v1m0 1v1m0 1v2m0 1v1m0 2v1m0 1v1m0 2v1m0 1v2m0 1v1m0 1v2m0 1v2m0 1v1m0 1v2m0 1v1m0 1v2m0 1v1m0 2v1m0 1v2m0 1v1M658.5 198v1m0 10v2m0 3v1m0 6v2m0 3v1m0 6v2m0 10v2m0 16v2m0 6v2m0 17v1m0 13v1m0 8v2m0 13v1m0 5v1m0 9v1m0 16v2m0 16v2m0 18v2m0 22v2m0 28v3m0 1v1m0 63v2m0 1v1m0 1v4m0 1v2m0 1v1m0 4v1m0 1v2m0 2v1m0 5v1m0 1v1m0 2v1m0 1v1m0 4v1m0 3v2m0 1v1m0 1v2m0 2v2m0 12v1m0 1v1m0 2v1m0 9v1m0 2v1m0 7v1m0 1v1m0 4v2m0 3v1m0 7v1m0 7v1m0 2v1m0 7v1m0 3v1m0 1v1m0 1v2m0 1v3m0 6v2m0 2v2m0 1v1m0 9v1m0 2v1m0 1v2m0 1v1M659.5 196v2m0 1v1m0 47v1m0 3v1m0 7v2m0 2v1m0 13v1m0 7v2m0 12v2m0 12v2m0 12v1m0 15v2m0 14v2m0 16v2m0 16v1m0 1v2m0 19v2m0 23v1m0 1v1m0 2v1m0 23v1m0 1v1m0 4v1m0 3v1m0 2v1m0 2v1m0 2v1m0 1v1m0 1v1m0 2v1m0 1v1m0 1v2m0 1v1m0 128v1m0 1v2m0 2v2m0 6v1m0 4v2m0 2v2m0 1v1m0 2v1m0 1v3m0 6v2m0 3v1m0 1v1m0 7v1m0 2v2m0 6v3m0 1v1M660.5 198v2m0 46v2m0 10v2m0 25v1m0 12v2m0 12v2m0 15v1m0 12v2m0 14v2m0 16v2m0 17v1m0 1v1m0 18v3m0 7v1m0 1v1m0 13v1m0 2v1m0 34v1m0 2v2m0 1v1m0 3v2m0 6v1m0 3v1m0 2v1m0 3v1m0 1v1m0 1v1m0 1v1m0 13v1m0 4v2m0 3v2m0 4v1m0 1v1m0 4v1m0 5v1m0 2v1m0 5v1m0 1v1m0 2v1m0 1v2m0 1v1m0 1v2m0 1v2m0 3v1m0 3v2m0 3v1m0 3v2m0 3v2m0 1v2m0 1v1m0 2v1m0 1v1M661.5 543v1m0 2v1m0 1v2m0 3v1m0 3v1m0 3v2m0 1v1m0 2v1m0 1v1m0 2v1m0 2v1m0 1v1m0 1v1m0 3v1m0 3v1m0 3v2m0 4v1m0 1v1m0 4v1m0 5v1m0 1v1m0 4v2m0 3v1m0 3v2m0 3v1m0 3v1m0 2v1m0 10v1m0 1v1m0 4v2m0 2v2m0 1v1m0 1v1m0 3v2m0 7v1m0 2v1m0 2v1m0 7v1m0 1v1m0 2v1m0 1v1m0 2v1M662.5 642v1m0 2v1m0 1v2m0 1v1m0 1v2m0 1v1m0 2v1m0 7v1m0 1v1m0 1v1m0 3v1m0 3v2m0 1v1m0 10v1m0 1v1m0 2v1m0 1v2m0 1v1m0 7v1M663.5 205v1m0 10v2m0 10v2m0 10v2m0 24v1m0 25v2m0 12v2m0 28v2m0 14v2m0 16v2m0 16v2m0 18v1m0 1v2m0 21v2m0 28v1m0 2v2m0 30v1m0 4v1m0 1v1m0 2v1m0 1v1m0 4v1m0 11v1m0 1v1m0 1v3m0 4v1m0 1v1m0 2v1m0 1v1m0 4v2m0 2v2m0 1v1m0 1v2m0 2v2m0 4v1m0 1v1m0 4v2m0 4v1m0 2v1m0 3v3m0 1v2m0 1v1m0 1v2m0 1v1m0 2v1M664.5 195v2m0 7v1m0 10v2m0 10v2m0 11v1m0 11v1m0 12v2m0 11v1m0 12v2m0 12v2m0 13v1m0 14v2m0 14v2m0 15v1m0 18v2m0 18v2m0 22v1m0 1v1m0 1v1m0 3v1m0 23v1m0 4v1m0 52v1m0 12v1m0 1v3m0 6v1m0 4v3m0 1v2m0 1v1m0 1v1m0 3v2m0 4v1m0 64v1m0 1v1m0 4v3m0 1v3m0 1v1m0 10v1m0 1v1m0 3v2m0 1v1m0 1v1m0 2v1m0 1v1m0 3v1m0 1v1m0 1v2M665.5 203v1m0 11v1m0 11v1m0 11v1m0 11v1m0 1v1m0 11v2m0 10v1m0 13v1m0 13v1m0 13v1m0 13v1m0 1v2m0 12v1m0 15v1m0 1v2m0 14v1m0 2v1m0 14v1m0 1v2m0 19v1m0 2v1m0 24v2m0 1v1m0 40v1m0 1v2m0 1v1m0 107v1m0 2v1m0 1v1m0 2v1m0 1v2m0 1v1m0 1v1m0 3v2m0 2v2m0 1v1m0 1v2m0 1v1m0 2v1m0 1v2m0 1v1m0 1v1m0 4v1m0 4v1m0 1v1m0 4v1m0 1v1m0 1v2m0 2v1m0 5v1m0 5v1m0 1v2m0 1v1m0 2v1m0 1v3m0 1v1m0 4v2M666.5 196v2m0 6v2m0 10v2m0 11v1m0 10v2m0 10v2m0 13v1m0 10v2m0 12v2m0 13v1m0 12v2m0 12v2m0 1v1m0 12v2m0 14v2m0 1v1m0 7v1m0 6v2m0 1v1m0 7v1m0 1v2m0 3v1m0 2v1m0 11v1m0 1v2m0 5v1m0 1v1m0 1v1m0 1v1m0 1v1m0 6v1m0 1v1m0 2v1m0 3v3m0 1v1m0 1v1m0 1v1m0 6v1m0 1v1m0 4v1m0 3v1m0 1v3m0 1v1m0 10v1m0 3v1m0 2v1m0 1v1m0 1v1m0 1v1m0 1v3m0 8v1m0 4v1m0 3v1m0 1v2m0 2v1m0 10v1m0 7v2m0 1v1m0 2v1m0 1v2m0 2v1m0 4v2m0 6v1m0 4v2m0 7v1m0 3v1m0 1v1m0 1v2m0 1v1m0 1v2m0 1v1m0 2v1m0 1v2m0 1v1m0 2v1m0 1v1m0 2v1M667.5 378v1m0 17v1m0 21v2m0 22v1m0 2v1m0 1v1m0 25v1m0 1v3m0 1v1m0 1v1m0 1v1m0 2v1m0 1v1m0 52v1m0 1v1m0 2v1m0 1v2m0 1v1m0 7v1m0 1v2m0 1v1m0 1v1m0 3v2m0 6v1m0 4v2m0 6v1m0 4v2m0 6v1m0 5v1m0 6v1m0 5v1m0 6v1m0 4v2m0 2v2m0 1v1m0 1v2m0 2v2m0 6v1m0 5v1m0 3v1m0 1v1m0 2v1m0 1v1m0 4v2m0 3v2m0 1v1m0 12v1m0 2v1M668.5 650v1m0 1v2m0 3v2m0 2v1m0 3v2m0 1v1m0 4v1m0 2v1m0 1v2m0 3v2m0 1v1m0 10v1m0 1v2m0 3v2m0 1v1M669.5 202v1m0 10v2m0 10v2m0 10v2m0 11v1m0 12v1m0 11v2m0 12v1m0 13v1m0 13v2m0 12v2m0 14v2m0 14v1m0 17v2m0 18v2m0 18v1m0 1v2m0 22v1m0 2v1m0 25v1m0 4v1m0 2v1M670.5 197v2m0 2v1m0 10v2m0 7v2m0 1v2m0 7v2m0 1v2m0 11v1m0 9v1m0 11v2m0 1v2m0 9v1m0 27v1m0 13v1m0 2v2m0 11v1m0 2v2m0 11v1m0 2v2m0 11v1m0 4v2m0 13v1m0 2v2m0 15v2m0 3v2m0 16v1m0 1v1m0 3v2m0 1v1m0 1v1m0 17v1m0 1v1m0 1v2m0 2v1m0 1v2m0 2v1m0 8v1m0 6v1m0 4v1m0 1v1m0 2v1m0 6v1m0 6v3m0 2v2m0 1v1m0 11v1m0 1v1m0 1v2m0 1v1m0 1v1m0 4v1m0 6v1m0 5v1m0 2v2m0 1v1m0 2v1m0 1v1M671.5 202v1m0 6v1m0 10v2m0 10v2m0 11v1m0 4v1m0 11v2m0 6v2m0 16v2m0 7v1m0 4v2m0 7v1m0 4v2m0 8v2m0 2v2m0 9v1m0 4v1m0 10v1m0 16v2m0 3v1m0 12v2m0 21v1m0 21v2m0 27v1m0 2v1m0 45v1m0 12v1m0 1v3m0 3v2m0 2v2m0 1v1m0 2v1m0 1v1m0 1v1m0 4v1m0 1v1m0 2v1m0 7v1m0 1v1m0 4v2m0 3v1m0 3v1m0 3v2m0 4v1m0 6v2m0 4v1m0 2v1m0 3v2m0 3v1m0 7v1m0 7v1m0 2v1m0 7v1m0 2v2m0 1v1m0 1v2m0 2v2m0 6v2m0 3v1m0 1v1m0 9v1m0 2v1M672.5 195v4m0 2v2m0 7v1m0 3v1m0 23v1m0 7v1m0 2v2m0 7v2m0 1v2m0 13v1m0 7v2m0 2v1m0 9v2m0 1v2m0 9v2m0 1v2m0 9v2m0 2v1m0 9v2m0 4v1m0 9v2m0 4v1m0 9v2m0 16v2m0 16v1m0 1v2m0 17v1m0 2v1m0 20v1m0 1v1m0 1v2m0 19v1m0 1v1m0 4v1m0 1v1m0 4v1m0 3v3m0 122v1m0 2v1m0 1v1m0 1v1m0 4v1m0 6v1m0 5v1m0 2v2m0 1v1m0 1v2m0 3v1m0 1v1m0 2v1m0 7v1m0 2v2m0 1v1m0 1v1m0 4v1m0 6v3m0 1v1m0 2v1m0 1v1m0 3v2M673.5 198v1m0 10v2m0 10v2m0 10v2m0 10v2m0 10v2m0 13v1m0 10v2m0 12v2m0 12v2m0 12v2m0 13v1m0 14v2m0 14v2m0 16v2m0 18v2m0 19v1m0 2v1m0 20v1m0 2v1m0 6v1m0 6v1m0 18v2m0 4v2m0 4v2m0 14v1m0 3v1m0 1v2m0 2v1m0 4v1m0 4v2m0 3v1m0 1v1m0 1v2m0 3v1m0 3v2m0 4v1m0 1v1m0 4v2m0 2v2m0 1v1m0 2v1m0 1v1m0 2v1m0 4v1m0 4v1m0 2v1M674.5 550v1m0 2v1m0 2v2m0 3v1m0 3v1m0 3v2m0 2v2m0 1v1m0 1v2m0 1v1m0 2v1m0 1v2m0 1v1m0 1v2m0 2v2m0 3v1m0 3v1m0 3v2m0 2v2m0 1v1m0 1v2m0 2v2m0 6v1m0 10v1m0 1v1m0 4v2m0 2v2m0 1v1m0 1v1m0 3v2m0 4v1m0 2v1m0 2v1m0 2v1m0 4v1m0 2v1m0 1v1m0 2v1m0 1v1M675.5 631v1m0 1v1m0 2v1m0 1v2m0 1v1m0 1v2m0 1v1m0 2v1m0 4v1m0 2v1m0 2v2m0 7v1m0 2v1m0 2v1m0 4v1m0 1v2m0 2v2m0 2v2m0 1v1m0 7v1m0 1v2m0 3v1" stroke="#ff8000" stroke-width="1" fill="none"/><path d="M308.5 324v1m0 67v1m0 20v1m0 24v1m0 34v1M309.5 196v3m0 8v1m0 2v1m0 32v1m0 2v1m0 48v1m0 17v1m0 14v1m0 15v1m0 28v1m0 39v1m0 6v2m0 16v2m0 1v1m0 1v1m0 1v1m0 1v2m0 30v1m0 6v1m0 3v3m0 1v1M310.5 201v1m0 47v1m0 9v1m0 15v1m0 9v1m0 13v1m0 17v1m0 42v2m0 3v2m0 11v2m0 18v2m0 24v1m0 1v1m0 1v2m0 18v1m0 3v1m0 1v1m0 1v1m0 1v1m0 39v1m0 3v1m0 4v1m0 2v1m0 4v1m0 19v1m0 4v1m0 6v1m0 5v1m0 6v1m0 4v2m0 7v1m0 3v1m0 3v2m0 1v1m0 2v1m0 1v1M311.5 196v1m0 1v1m0 8v1m0 5v1m0 5v1m0 1v1m0 3v1m0 5v1m0 1v1m0 3v1m0 5v1m0 2v1m0 15v1m0 8v1m0 17v1m0 13v1m0 23v1m0 4v2m0 14v2m0 9v1m0 24v1m0 10v2m0 8v1m0 1v1m0 5v1m0 1v1m0 2v1m0 11v1m0 1v1m0 5v1m0 1v1m0 1v2m0 19v1m0 1v1m0 1v1m0 6v1m0 4v1m0 92v1m0 2v1m0 1v1m0 2v1m0 1v2m0 3v1m0 3v2m0 6v1m0 5v1m0 6v1m0 5v1m0 6v1m0 5v1m0 6v1m0 5v1m0 6v1m0 5v1m0 6v1m0 5v1m0 7v1m0 3v1m0 3v2m0 1v1m0 2v1M312.5 199v1m0 1v1m0 44v1m0 2v1m0 9v1m0 2v1m0 36v1m0 31v2m0 14v2m0 47v2m0 3v1m0 17v1m0 1v1m0 1v1m0 19v3m0 1v1m0 1v1m0 29v3m0 13v1m0 4v2m0 1v1m0 1v1m0 2v1m0 170v1m0 1v1m0 2v1m0 1v2m0 1v1m0 2v1m0 1v1m0 2v1m0 1v2m0 1v1m0 2v1m0 1v1m0 2v1m0 1v2m0 1v1m0 2v1m0 1v1m0 2v1m0 1v1M313.5 213v1m0 11v1m0 36v1m0 26v1m0 13v1m0 28v1m0 32v1m0 17v1m0 3v1m0 15v1m0 3v1m0 19v1m0 4v1m0 21v3m0 1v1m0 3v1m0 1v3m0 36v1m0 1v1m0 2v1m0 3v1m0 4v1m0 13v1m0 4v1m0 4v2m0 4v1m0 6v2m0 4v1m0 6v2m0 4v1m0 7v1m0 3v1m0 3v2m0 6v1m0 2v1m0 4v1m0 2v1M314.5 466v1m0 128v1m0 4v1m0 1v2m0 1v1m0 4v2m0 3v2m0 3v1m0 3v1m0 7v2m0 4v1m0 6v2m0 4v1m0 6v2m0 4v1m0 6v2m0 4v1m0 7v1m0 3v1m0 3v2m0 1v1m0 2v1M319.5 205v1m0 11v2m0 10v2m0 10v1m0 11v1m0 13v1m0 11v1m0 13v1m0 13v1m0 13v1m0 1v1m0 13v1m0 15v1m0 1v1m0 15v1m0 17v1m0 1v1m0 19v1m0 1v1m0 20v1m0 5v1m0 26v1m0 4v1m0 3v1m0 1v1m0 1v1M320.5 196v1m0 9v2m0 11v1m0 11v1m0 10v2m0 1v1m0 9v1m0 1v2m0 10v1m0 11v1m0 1v1m0 10v2m0 1v1m0 11v1m0 1v1m0 13v1m0 1v2m0 12v1m0 1v1m0 13v1m0 1v1m0 15v1m0 1v1m0 14v2m0 1v1m0 1v1m0 16v2m0 24v2m0 1v1m0 1v1m0 1v1m0 3v1m0 26v1m0 4v1m0 2v1m0 1v1m0 4v1m0 6v1m0 1v1m0 2v1m0 4v1m0 8v2m0 3v2m0 4v1m0 2v1m0 2v1m0 1v1m0 2v1M321.5 199v1m0 5v2m0 4v1m0 5v1m0 5v1m0 5v1m0 5v1m0 5v2m0 4v1m0 5v1m0 5v1m0 1v1m0 5v1m0 5v1m0 5v1m0 4v2m0 1v1m0 5v2m0 3v2m0 1v1m0 5v2m0 4v1m0 1v1m0 5v1m0 7v1m0 1v1m0 5v2m0 6v1m0 1v1m0 5v2m0 5v2m0 1v1m0 1v1m0 5v1m0 7v1m0 1v1m0 1v1m0 5v2m0 10v1m0 1v1m0 5v1m0 12v1m0 3v1m0 1v1m0 5v1m0 16v2m0 1v1m0 1v1m0 1v1m0 8v2m0 54v1m0 2v1m0 1v1m0 2v1m0 3v1m0 3v2m0 11v2m0 4v1m0 1v1m0 4v2m0 4v1m0 1v1m0 4v2m0 4v1m0 1v1m0 4v2m0 4v1m0 1v1m0 4v2m0 4v1m0 1v1m0 4v2m0 4v1m0 1v1m0 4v2m0 3v1m0 3v1m0 2v1m0 2v1m0 1v1m0 2v1M322.5 207v1m0 10v2m0 10v2m0 10v2m0 1v1m0 9v1m0 1v2m0 10v1m0 11v1m0 1v2m0 10v1m0 1v2m0 10v1m0 1v2m0 12v1m0 1v1m0 11v1m0 1v1m0 13v1m0 1v1m0 1v1m0 12v2m0 1v1m0 15v1m0 1v1m0 1v2m0 16v1m0 1v1m0 1v1m0 22v1m0 1v1m0 1v3m0 23v1m0 2v2m0 5v1m0 151v1m0 1v1m0 2v1m0 1v2m0 7v1m0 7v2m0 4v1m0 1v1m0 4v2m0 4v1m0 1v1m0 4v2m0 4v1m0 1v1m0 4v2m0 3v1m0 3v2m0 1v1m0 2v1m0 1v2m0 1v1m0 1v2m0 1v1m0 2v1m0 1v2M323.5 198v2m0 11v1m0 11v1m0 11v1m0 11v1m0 10v2m0 1v1m0 11v1m0 11v1m0 1v1m0 11v1m0 1v1m0 11v1m0 1v1m0 13v1m0 1v1m0 13v1m0 1v1m0 12v2m0 1v2m0 14v1m0 1v1m0 17v1m0 1v1m0 19v1m0 1v1m0 1v1m0 20v1m0 8v3m0 31v1m0 4v2m0 10v2m0 4v1m0 24v1m0 4v1m0 5v1m0 1v2m0 1v1m0 2v1m0 1v1M324.5 365v1m0 63v1m0 27v1m0 95v1m0 2v1m0 1v1m0 2v1m0 1v2m0 3v1m0 3v1m0 8v1m0 3v1m0 8v1m0 3v1m0 8v1m0 3v1m0 8v1m0 3v1m0 8v1m0 3v1m0 8v1m0 7v2m0 1v1m0 2v1m0 1v1m0 2v1M325.5 662v1m0 2v1m0 1v2m0 1v1m0 1v2m0 6v2m0 3v1m0 3v1m0 3v2m0 3v2m0 1v1m0 2v1m0 4v1m0 2v1m0 1v1m0 2v1m0 4v1m0 2v1m0 1v1M329.5 218v1m0 11v1m0 24v1m0 12v1m0 12v1m0 27v1m0 14v1m0 31v1m0 17v1m0 18v2m0 18v1m0 1v2m0 21v1m0 1v1m0 1v1m0 33v1m0 6v1m0 3v3m0 1v1M330.5 196v2m0 20v1m0 2v1m0 8v1m0 24v1m0 25v1m0 13v1m0 13v1m0 3v1m0 10v1m0 31v1m0 4v1m0 12v1m0 5v1m0 19v1m0 16v1m0 3v1m0 1v2m0 18v2m0 4v1m0 1v1m0 1v1m0 1v1m0 30v1m0 1v1m0 10v1m0 2v1m0 8v1m0 4v1m0 2v1m0 1v1m0 2v1m0 1v1m0 2v1m0 1v1m0 4v1m0 4v1m0 5v1m0 6v1m0 5v1m0 6v1m0 4v2m0 7v1m0 3v1m0 1v1m0 1v2m0 1v1m0 2v1M331.5 198v1m0 7v1m0 11v1m0 23v1m0 6v1m0 5v1m0 6v1m0 12v1m0 5v1m0 3v1m0 8v2m0 13v1m0 3v1m0 3v1m0 10v1m0 9v2m0 4v1m0 4v1m0 5v1m0 5v1m0 10v2m0 12v1m0 13v1m0 6v1m0 4v2m0 11v1m0 7v1m0 4v1m0 15v3m0 1v1m0 3v1m0 4v1m0 4v1m0 3v1m0 97v1m0 2v1m0 1v1m0 2v1m0 1v2m0 7v2m0 3v2m0 6v1m0 5v1m0 6v1m0 5v1m0 6v1m0 5v1m0 6v1m0 5v1m0 6v1m0 5v1m0 6v1m0 5v1m0 7v2m0 1v1m0 2v1M332.5 197v1m0 3v1m0 47v1m0 5v1m0 2v1m0 9v1m0 6v1m0 5v1m0 2v2m0 12v1m0 10v1m0 3v1m0 10v1m0 8v1m0 5v1m0 9v1m0 5v2m0 3v1m0 31v1m0 20v2m0 5v1m0 12v1m0 5v2m0 1v1m0 1v1m0 1v1m0 2v1m0 20v1m0 6v2m0 1v1m0 3v1m0 13v1m0 6v1m0 1v1m0 1v2m0 1v1m0 1v1m0 194v1m0 2v1m0 1v1m0 2v1M333.5 201v1m0 8v1m0 1v1m0 8v1m0 2v1m0 9v1m0 1v1m0 9v1m0 2v1m0 22v1m0 2v1m0 12v1m0 13v1m0 10v1m0 3v1m0 10v1m0 3v1m0 11v1m0 3v1m0 55v2m0 15v1m0 5v1m0 21v2m0 2v1m0 3v1m0 44v1m0 2v1m0 1v1m0 1v2m0 1v1m0 1v2m0 4v2m0 3v2m0 3v2m0 4v1m0 11v2m0 11v2m0 11v2m0 12v1m0 3v1m0 3v2m0 4v1m0 1v1m0 2v1m0 4v1m0 2v1M334.5 249v1m0 12v1m0 12v1m0 41v1m0 48v1m0 38v2m0 24v1m0 1v1m0 32v1m0 1v1m0 2v1m0 127v1m0 2v1m0 1v1m0 2v1m0 1v2m0 7v1m0 3v1m0 4v1m0 3v1m0 7v2m0 11v2m0 11v2m0 11v2m0 3v1m0 3v2m0 6v1m0 2v1M339.5 217v1m0 11v1m0 36v1m0 55v1m0 15v1m0 15v2m0 16v2m0 18v1m0 19v1m0 1v2m0 23v1m0 1v1m0 1v1m0 38v1m0 10v1m0 1v1m0 1v1M340.5 205v1m0 2v1m0 23v1m0 8v1m0 2v1m0 9v1m0 2v1m0 12v1m0 9v1m0 27v1m0 18v1m0 15v1m0 34v1m0 19v2m0 16v1m0 3v1m0 1v1m0 19v3m0 1v1m0 1v1m0 1v1m0 1v1m0 1v1m0 1v1m0 33v1m0 1v3m0 3v1m0 6v2m0 3v1m0 4v1m0 2v1m0 1v1m0 2v1m0 4v1m0 1v1m0 2v1m0 1v1m0 4v1m0 5v1m0 4v1m0 1v1m0 5v1m0 4v1m0 1v1m0 5v1m0 4v1m0 1v1m0 5v1m0 11v2m0 2v2m0 3v2m0 1v1m0 2v1M341.5 197v2m0 21v1m0 11v1m0 20v1m0 6v1m0 4v1m0 4v1m0 8v1m0 13v1m0 3v1m0 9v1m0 4v1m0 8v2m0 14v1m0 15v2m0 5v1m0 23v2m0 4v1m0 15v1m0 5v1m0 10v2m0 6v1m0 23v1m0 1v1m0 8v1m0 1v1m0 1v3m0 121v1m0 1v1m0 2v1m0 1v2m0 1v1m0 1v1m0 3v2m0 12v1m0 4v1m0 1v1m0 5v1m0 4v1m0 1v1m0 5v1m0 4v1m0 1v1m0 5v1m0 4v1m0 1v1m0 5v1m0 4v1m0 1v1m0 5v1m0 3v1m0 3v1m0 2v1m0 2v1M342.5 200v1m0 6v2m0 2v1m0 7v2m0 2v1m0 7v2m0 2v1m0 7v1m0 4v1m0 6v1m0 11v1m0 1v2m0 3v1m0 5v2m0 1v1m0 3v1m0 7v1m0 5v1m0 7v1m0 1v1m0 4v1m0 6v1m0 1v1m0 5v1m0 7v1m0 1v2m0 5v1m0 5v2m0 1v1m0 7v1m0 7v1m0 1v1m0 15v1m0 1v1m0 1v1m0 16v2m0 4v2m0 12v2m0 4v1m0 9v1m0 22v3m0 9v2m0 5v2m0 10v2m0 4v2m0 3v2m0 1v1m0 1v1m0 2v1m0 1v1m0 2v1M343.5 199v1m0 9v1m0 10v2m0 10v2m0 11v1m0 1v1m0 11v1m0 10v2m0 1v1m0 11v1m0 13v1m0 13v1m0 1v1m0 11v1m0 1v1m0 12v2m0 1v1m0 15v1m0 1v2m0 14v1m0 1v1m0 17v1m0 1v1m0 1v1m0 18v1m0 1v1m0 1v1m0 22v2m0 1v1m0 5v1m0 3v1m0 58v1m0 1v1m0 2v1m0 1v1m0 2v1m0 7v1m0 8v1m0 3v1m0 8v1m0 3v1m0 8v1m0 3v1m0 8v1m0 3v1m0 8v1m0 3v1m0 3v2m0 3v2m0 4v1m0 1v2m0 1v1m0 2v1m0 1v1M344.5 316v1m0 47v2m0 19v1m0 18v2m0 1v1m0 21v2m0 1v1m0 29v1m0 4v1m0 2v1m0 153v1m0 2v1m0 1v1m0 2v1m0 1v2m0 1v1m0 1v2m0 6v2m0 3v1m0 3v1m0 8v1m0 3v1m0 8v1m0 3v1m0 3v2m0 3v2m0 1v1m0 2v1m0 4v1m0 4v1m0 2v1m0 4v1M349.5 256v1m0 25v1m0 13v1m0 14v1m0 46v2m0 58v1m0 1v1m0 27v1m0 1v1m0 1v1M350.5 198v2m0 19v1m0 2v1m0 8v1m0 2v1m0 9v1m0 2v1m0 21v1m0 3v1m0 12v1m0 13v1m0 14v1m0 10v1m0 3v1m0 11v1m0 3v2m0 16v1m0 12v2m0 18v2m0 5v2m0 15v2m0 1v1m0 6v1m0 21v2m0 2v1m0 8v1m0 4v1M351.5 207v1m0 35v1m0 6v1m0 4v2m0 3v1m0 15v1m0 4v1m0 8v1m0 4v2m0 7v1m0 4v1m0 15v1m0 9v1m0 21v1m0 6v1m0 10v1m0 7v2m0 21v1m0 1v1m0 3v2m0 4v1m0 12v1m0 1v1m0 1v1m0 1v1m0 1v1m0 1v2m0 26v1m0 2v2m0 1v1m0 1v1m0 4v1m0 1v1m0 1v1m0 2v1m0 8v1m0 2v1m0 8v1m0 2v1m0 1v1m0 2v1m0 4v1m0 8v1m0 3v2m0 1v1m0 1v2m0 1v1m0 2v1M352.5 202v1m0 6v1m0 11v1m0 11v1m0 4v1m0 6v1m0 11v1m0 1v1m0 3v1m0 7v1m0 11v1m0 1v2m0 3v1m0 6v1m0 1v2m0 10v1m0 1v1m0 5v1m0 7v1m0 1v2m0 12v1m0 1v2m0 5v1m0 5v2m0 1v1m0 8v1m0 5v2m0 1v1m0 1v1m0 7v2m0 5v2m0 1v1m0 1v2m0 16v2m0 1v1m0 1v1m0 2v1m0 14v1m0 5v2m0 2v1m0 73v1m0 2v1m0 1v2m0 1v1m0 1v2m0 3v1m0 3v2m0 11v1m0 5v1m0 6v1m0 5v1m0 6v1m0 5v1m0 6v1m0 5v1m0 6v1m0 5v1m0 6v1m0 5v1m0 6v2m0 7v1m0 4v2m0 1v2m0 1v1m0 2v1m0 1v1M353.5 201v2m0 8v1m0 1v1m0 9v1m0 1v1m0 9v1m0 1v1m0 11v2m0 10v1m0 13v2m0 10v1m0 1v2m0 10v1m0 1v2m0 12v1m0 12v2m0 1v2m0 11v2m0 1v1m0 15v1m0 1v2m0 13v2m0 1v1m0 1v1m0 17v1m0 1v1m0 1v2m0 16v1m0 6v1m0 27v1m0 4v1m0 2v1m0 5v3m0 1v1m0 159v1m0 2v1m0 2v1m0 1v1m0 1v1m0 3v1m0 3v1m0 3v2m0 4v1m0 6v1m0 5v1m0 6v2m0 7v1m0 4v2m0 1v2m0 1v1m0 1v2m0 1v1m0 2v1m0 1v2m0 1v1m0 1v2M354.5 202v1m0 35v1m0 51v1m0 44v1m0 33v1m0 18v2m0 20v2m0 1v1m0 24v2m0 1v1m0 38v1m0 1v1m0 1v2m0 4v2m0 5v2m0 4v1m0 5v1m0 4v2m0 3v2m0 3v2m0 3v2m0 3v2m0 3v1m0 3v2m0 3v2m0 1v1m0 2v1m0 1v1m0 2v1M355.5 559v1m0 2v1m0 1v1m0 2v1m0 1v2m0 3v2m0 7v1m0 3v1m0 3v2m0 3v1m0 3v1m0 3v2m0 3v1m0 3v1m0 3v2m0 3v1m0 3v1m0 3v2m0 3v1m0 3v1m0 3v2m0 3v1m0 3v1m0 7v2m0 1v1m0 2v1m0 1v1m0 2v1m0 1v1m0 2v1M356.5 671v1m0 1v1m0 2v1m0 2v1m0 1v1m0 2v1m0 1v1m0 2v1m0 2v1m0 1v1m0 2v1m0 1v1m0 2v1m0 4v1m0 2v1m0 4v1m0 4v1m0 2v1M359.5 255v1m0 12v1m0 12v1m0 13v1m0 13v2m0 46v2m0 38v1m0 49v1m0 7v1M360.5 196v2m0 11v1m0 8v1m0 2v1m0 8v1m0 2v1m0 12v1m0 8v1m0 29v1m0 13v1m0 14v1m0 10v1m0 3v1m0 11v1m0 3v1m0 17v1m0 12v2m0 19v1m0 23v2m0 3v1m0 1v1m0 1v2m0 26v1m0 4v1m0 1v1m0 1v1m0 7v1M361.5 198v1m0 6v1m0 11v2m0 10v2m0 10v1m0 7v1m0 3v1m0 13v2m0 6v1m0 5v1m0 11v1m0 1v1m0 7v1m0 5v1m0 13v1m0 15v2m0 14v1m0 17v1m0 8v2m0 9v1m0 10v2m0 3v1m0 1v1m0 6v1m0 13v1m0 1v1m0 6v1m0 6v1m0 24v1m0 2v1m0 2v1m0 1v1m0 1v1m0 2v1m0 1v1m0 4v1m0 1v1m0 6v1m0 2v1m0 1v1m0 2v1m0 13v1m0 4v1m0 10v1m0 4v1m0 1v1m0 4v2m0 7v1m0 3v1m0 3v2m0 1v1m0 2v1m0 1v1M362.5 196v1m0 10v1m0 1v1m0 8v2m0 1v1m0 8v2m0 1v1m0 9v1m0 1v1m0 11v1m0 10v2m0 1v1m0 11v1m0 13v1m0 13v1m0 1v1m0 11v1m0 1v1m0 12v2m0 1v1m0 15v1m0 1v2m0 14v1m0 1v1m0 17v1m0 1v1m0 1v2m0 9v1m0 5v1m0 4v1m0 1v1m0 16v1m0 5v1m0 6v1m0 2v1m0 4v1m0 95v1m0 2v1m0 1v1m0 2v1m0 1v2m0 3v1m0 3v2m0 6v1m0 5v1m0 4v1m0 1v1m0 5v1m0 4v1m0 1v1m0 5v1m0 4v1m0 1v1m0 5v1m0 4v1m0 1v1m0 5v1m0 4v1m0 1v1m0 5v1m0 4v1m0 1v1m0 4v2m0 3v1m0 3v1m0 3v1m0 1v1m0 1v1m0 2v1M363.5 198v2m0 11v1m0 11v1m0 11v1m0 11v1m0 11v1m0 1v1m0 11v1m0 13v1m0 13v1m0 13v1m0 1v1m0 11v1m0 1v1m0 1v1m0 13v1m0 1v2m0 11v2m0 1v1m0 1v1m0 15v1m0 1v1m0 16v2m0 1v1m0 1v1m0 24v1m0 1v1m0 2v1m0 25v3m0 1v1m0 5v2m0 5v2m0 7v1m0 1v1m0 4v1m0 179v1m0 1v2m0 1v1m0 2v1m0 1v2m0 1v1m0 1v2m0 1v1m0 2v1m0 1v2m0 1v1m0 2v1m0 1v1m0 2v1m0 1v2m0 1v1m0 1v2m0 1v1m0 2v1M364.5 350v1m0 60v1m0 25v1m0 4v1m0 46v1m0 1v1m0 1v1m0 2v1m0 3v2m0 4v2m0 4v1m0 24v1m0 4v1m0 3v1m0 8v1m0 3v1m0 8v1m0 3v1m0 3v2m0 3v2m0 1v1m0 2v1m0 1v2m0 1v1m0 4v1M365.5 584v1m0 2v1m0 4v1m0 2v1m0 1v1m0 4v2m0 3v1m0 3v1m0 8v1m0 3v1m0 8v1m0 3v1m0 8v1m0 3v1m0 8v1m0 3v1m0 8v1m0 3v1m0 8v1m0 5v1m0 1v2m0 1v1M369.5 215v1m0 11v1m0 11v1m0 9v1m0 2v1m0 22v1m0 16v1m0 28v1m0 11v1m0 3v1m0 16v1m0 38v1m0 23v1m0 23v1m0 1v1m0 1v1m0 1v1m0 1v2M370.5 255v1m0 9v1m0 12v1m0 3v1m0 13v1m0 9v1m0 18v2m0 15v1m0 16v1m0 12v2m0 19v1m0 23v1m0 6v1m0 1v2m0 22v1m0 1v1m0 1v1m0 1v1m0 1v1m0 4v1m0 4v2M371.5 196v2m0 5v1m0 11v1m0 2v1m0 8v1m0 11v1m0 3v1m0 5v1m0 2v1m0 15v1m0 6v1m0 16v1m0 17v1m0 42v1m0 17v1m0 6v2m0 20v2m0 9v1m0 1v2m0 13v1m0 1v1m0 1v1m0 1v1m0 5v1m0 1v2m0 22v1m0 1v3m0 3v1m0 4v1m0 1v1m0 4v1m0 8v1m0 2v1m0 3v1m0 2v1m0 1v1m0 2v1m0 4v1m0 19v1m0 12v1m0 3v1m0 3v2m0 1v1m0 2v1m0 1v1M372.5 255v1m0 9v1m0 12v1m0 3v1m0 13v1m0 9v1m0 14v1m0 3v1m0 11v1m0 3v1m0 49v1m0 5v2m0 15v2m0 3v1m0 1v1m0 21v3m0 1v1m0 3v1m0 1v1m0 1v3m0 88v1m0 2v1m0 1v1m0 2v1m0 1v2m0 3v1m0 3v2m0 6v1m0 5v1m0 6v1m0 5v1m0 6v1m0 5v1m0 6v1m0 5v1m0 6v1m0 5v1m0 6v1m0 5v1m0 6v1m0 4v2m0 7v1m0 3v1m0 3v2m0 1v1m0 1v2m0 1v1M373.5 196v2m0 9v1m0 35v1m0 66v1m0 47v2m0 3v1m0 13v1m0 5v1m0 15v1m0 5v1m0 16v1m0 2v1m0 6v2m0 23v1m0 4v1m0 4v1m0 3v1m0 8v3m0 1v1m0 1v1m0 176v1m0 2v1m0 1v1m0 2v1m0 1v2m0 3v1m0 3v2m0 3v1m0 3v1m0 3v2m0 3v1m0 3v2m0 1v1m0 2v1m0 1v2m0 1v1m0 1v2m0 1v1m0 2v1m0 1v2M374.5 434v1m0 44v1m0 2v1m0 4v2m0 5v2m0 6v1m0 4v1m0 3v1m0 4v1m0 19v1m0 4v2m0 4v1m0 6v2m0 3v1m0 8v1m0 7v2m0 1v1m0 2v1m0 1v1m0 2v1M375.5 569v1m0 1v1m0 2v1m0 1v2m0 1v1m0 9v2m0 3v1m0 3v2m0 6v2m0 3v2m0 6v2m0 3v2m0 6v2m0 3v2m0 6v2m0 3v2m0 6v2m0 3v2m0 6v2m0 3v1m0 8v1m0 5v1m0 1v1m0 2v1M376.5 688v1m0 2v1m0 4v1m0 2v1m0 1v1m0 2v1m0 4v1m0 2v1m0 1v1m0 2v1m0 4v1m0 2v1m0 1v1M378.5 213v1m0 11v1m0 11v1m0 12v1m0 25v1m0 27v1m0 46v1m0 17v1m0 20v1m0 23v1m0 27v1m0 1v2M379.5 225v1m0 27v1m0 12v1m0 41v1m0 10v1m0 3v1m0 15v1m0 11v1m0 23v1m0 21v1m0 19v1m0 3v1m0 23v1m0 3v1m0 1v1m0 1v1m0 4v1m0 4v1M380.5 213v1m0 11v1m0 18v1m0 8v1m0 8v1m0 3v1m0 16v1m0 13v1m0 14v1m0 5v1m0 4v1m0 15v1m0 4v1m0 5v1m0 5v1m0 5v1m0 12v1m0 6v1m0 14v1m0 24v2m0 1v1m0 1v1m0 5v1m0 30v1m0 2v1m0 1v1m0 1v1m0 4v1m0 1v1m0 4v1m0 1v1m0 4v1m0 8v1m0 2v1m0 8v1m0 16v1m0 3v2m0 1v1m0 1v2m0 1v1m0 2v1M381.5 197v1m0 4v1m0 1v1m0 8v2m0 1v1m0 8v2m0 1v1m0 9v1m0 1v1m0 9v1m0 1v2m0 10v1m0 13v1m0 11v1m0 1v1m0 11v1m0 1v1m0 5v1m0 7v1m0 1v1m0 13v1m0 1v1m0 5v1m0 7v1m0 1v1m0 7v1m0 7v1m0 1v1m0 17v1m0 1v1m0 1v1m0 9v2m0 6v1m0 1v1m0 1v1m0 1v2m0 13v2m0 1v1m0 5v1m0 1v1m0 5v3m0 67v1m0 2v1m0 1v1m0 1v2m0 1v1m0 1v2m0 3v1m0 3v2m0 3v2m0 6v1m0 5v1m0 6v1m0 5v1m0 6v1m0 5v1m0 6v1m0 5v1m0 6v1m0 5v1m0 6v1m0 5v1m0 6v1m0 4v2m0 6v2m0 3v1m0 1v1m0 1v2m0 1v1m0 2v1m0 1v1M382.5 206v1m0 11v1m0 11v1m0 11v1m0 10v2m0 1v1m0 11v1m0 11v1m0 1v2m0 10v1m0 1v2m0 10v1m0 1v1m0 12v2m0 1v2m0 12v1m0 1v2m0 12v1m0 1v1m0 1v2m0 14v1m0 1v1m0 17v1m0 1v1m0 1v1m0 18v2m0 2v1m0 1v1m0 1v2m0 23v1m0 9v1m0 5v1m0 1v1m0 1v1m0 1v1m0 167v1m0 1v1m0 2v1m0 1v2m0 3v2m0 2v2m0 3v2m0 6v1m0 5v1m0 6v1m0 4v2m0 7v2m0 1v1m0 2v1m0 1v2m0 1v1m0 2v1m0 1v1m0 2v1m0 1v2M383.5 197v1m0 10v1m0 11v1m0 11v1m0 37v1m0 12v2m0 13v1m0 28v2m0 15v1m0 16v2m0 19v1m0 21v1m0 1v1m0 21v1m0 2v1m0 1v1m0 1v1m0 1v1m0 34v1m0 1v1m0 2v2m0 5v2m0 5v2m0 6v1m0 3v2m0 10v1m0 4v2m0 3v2m0 3v2m0 3v1m0 4v1m0 3v2m0 4v1m0 1v1m0 2v1m0 4v1M384.5 550v1m0 4v1m0 1v2m0 1v1m0 2v1m0 1v2m0 3v2m0 3v1m0 3v1m0 8v1m0 3v1m0 8v1m0 3v1m0 8v1m0 3v1m0 8v1m0 3v1m0 8v1m0 3v1m0 8v1m0 3v1m0 3v2m0 4v1m0 1v1m0 2v1m0 4v1M385.5 672v1m0 4v1m0 2v1m0 1v1m0 2v1m0 1v2m0 1v1m0 2v1m0 1v1m0 2v1m0 4v1m0 2v1m0 1v1m0 2v1m0 4v1m0 2v1m0 1v1M388.5 207v1m0 11v1m0 11v1m0 11v1m0 11v1m0 11v1m0 1v1m0 11v1m0 13v1m0 13v1m0 1v1m0 13v1m0 15v1m0 1v1m0 15v1m0 17v1m0 1v1m0 19v1m0 1v1m0 2v1m0 23v1m0 1v1m0 36v1m0 4v1m0 1v1m0 1v1m0 4v1m0 1v1m0 4v1m0 1v1m0 2v1m0 3v1m0 2v1m0 1v1m0 2v1m0 3v2m0 3v2m0 4v2m0 1v1m0 1v2m0 1v1m0 2v1m0 1v1M389.5 209v1m0 11v1m0 11v1m0 11v1m0 10v2m0 1v2m0 10v1m0 13v1m0 13v1m0 13v1m0 1v2m0 12v1m0 1v2m0 12v1m0 1v1m0 15v1m0 1v1m0 17v1m0 1v1m0 1v2m0 22v2m0 18v1m0 2v1m0 1v1m0 6v1m0 2v1m0 64v1m0 1v1m0 2v1m0 1v1m0 1v2m0 3v2m0 3v1m0 8v1m0 5v1m0 4v1m0 1v1m0 5v1m0 4v1m0 1v1m0 5v1m0 4v1m0 1v1m0 5v1m0 4v1m0 1v1m0 5v1m0 4v1m0 1v1m0 5v1m0 4v1m0 1v1m0 5v1m0 11v2m0 2v2m0 3v2m0 1v1m0 2v1m0 1v1M390.5 201v1m0 9v1m0 1v1m0 5v1m0 3v1m0 1v1m0 5v1m0 3v1m0 1v1m0 11v1m0 6v1m0 4v1m0 13v1m0 7v1m0 3v1m0 1v1m0 7v1m0 5v1m0 13v1m0 1v1m0 13v1m0 1v1m0 12v2m0 1v1m0 1v1m0 6v1m0 8v1m0 1v1m0 7v1m0 9v1m0 1v1m0 1v1m0 7v1m0 11v1m0 1v1m0 9v1m0 2v1m0 15v1m0 4v1m0 4v1m0 1v1m0 1v1m0 8v1m0 4v1m0 159v1m0 1v1m0 2v1m0 1v2m0 1v1m0 1v1m0 3v2m0 12v1m0 4v1m0 1v1m0 5v1m0 4v1m0 1v1m0 5v1m0 11v1m0 3v2m0 1v1m0 1v2m0 1v1m0 2v1m0 1v2m0 1v1m0 1v2m0 1v1M391.5 197v1m0 49v1m0 25v1m0 9v1m0 13v1m0 3v1m0 25v1m0 3v1m0 11v1m0 16v1m0 18v1m0 5v1m0 15v1m0 7v1m0 19v1m0 6v1m0 2v1m0 30v1m0 2v1m0 2v1m0 3v1m0 2v1m0 3v1m0 2v1m0 3v1m0 2v1m0 4v1m0 3v1m0 7v1m0 4v1m0 4v1m0 4v1m0 8v1m0 3v2m0 4v1m0 1v1m0 2v1M392.5 199v1m0 47v1m0 12v1m0 12v1m0 27v1m0 14v1m0 14v1m0 16v1m0 4v1m0 12v1m0 4v1m0 14v1m0 5v1m0 15v2m0 5v1m0 2v1m0 21v1m0 1v1m0 1v1m0 4v1m0 4v1m0 85v1m0 2v1m0 1v1m0 9v2m0 3v1m0 3v2m0 6v1m0 4v2m0 6v1m0 4v2m0 6v1m0 4v2m0 6v1m0 4v2m0 6v1m0 4v2m0 6v1m0 4v2m0 7v1m0 3v1m0 3v2m0 3v2m0 1v1m0 2v1m0 1v1m0 2v1M393.5 353v1m0 39v1m0 25v1m0 32v1m0 2v1m0 201v1m0 4v1m0 2v1m0 1v1m0 4v2m0 3v1m0 3v1m0 8v1m0 3v1m0 4v1m0 3v2m0 4v1m0 1v2m0 1v1m0 2v1m0 1v1m0 2v1m0 1v2m0 1v1M398.5 196v2m0 8v1m0 2v1m0 23v1m0 8v1m0 2v1m0 9v1m0 15v1m0 13v1m0 13v1m0 30v1m0 34v1m0 13v1m0 5v2m0 22v2m0 18v1m0 2v1m0 6v1m0 1v1m0 2v1M399.5 206v1m0 11v1m0 2v1m0 8v1m0 27v1m0 3v1m0 5v1m0 6v1m0 5v1m0 13v1m0 7v1m0 5v2m0 3v1m0 32v1m0 4v1m0 12v1m0 5v1m0 38v1m0 7v1m0 23v1m0 2v1m0 6v1m0 1v1m0 1v1m0 7v1m0 1v1M400.5 196v1m0 4v1m0 4v1m0 2v1m0 2v1m0 11v1m0 8v1m0 8v1m0 2v1m0 3v1m0 5v1m0 15v1m0 13v1m0 3v1m0 9v1m0 14v1m0 4v1m0 9v1m0 5v1m0 9v2m0 11v2m0 3v2m0 6v1m0 11v2m0 7v2m0 25v2m0 1v1m0 9v1m0 1v1m0 2v1m0 24v1m0 4v1m0 2v1m0 1v1m0 1v1m0 2v1m0 1v1m0 1v1m0 4v1m0 1v1m0 2v1m0 3v1m0 2v1m0 8v1m0 4v1m0 2v1m0 4v1m0 4v1m0 4v1m0 4v1m0 1v1m0 4v1m0 5v1m0 11v2m0 3v1m0 3v1m0 2v1m0 2v1m0 1v1m0 2v1m0 2v1M401.5 258v1m0 3v1m0 12v1m0 27v1m0 10v1m0 31v1m0 4v1m0 17v2m0 38v1m0 3v1m0 2v1m0 23v1m0 4v1m0 1v1m0 4v1m0 109v1m0 1v1m0 2v1m0 1v2m0 2v1m0 4v1m0 7v2m0 4v1m0 1v1m0 5v1m0 4v1m0 1v1m0 5v1m0 4v1m0 1v1m0 5v1m0 4v1m0 1v1m0 5v1m0 4v1m0 1v1m0 5v1m0 4v1m0 1v1m0 5v1m0 4v1m0 1v1m0 4v2m0 7v1m0 2v1m0 2v1m0 1v1M402.5 201v1m0 10v1m0 11v1m0 24v1m0 68v2m0 14v2m0 54v2m0 25v1m0 1v1m0 1v1m0 30v2m0 2v1m0 5v1m0 2v1m0 5v1m0 7v3m0 5v1m0 5v2m0 1v1m0 1v1m0 2v1m0 182v1m0 2v1m0 1v1m0 2v1m0 1v1m0 2v1m0 2v1m0 1v1m0 2v1m0 4v1m0 2v1m0 1v1m0 2v1m0 1v2m0 1v1m0 1v1M403.5 489v1m0 1v1m0 1v2m0 1v1m0 3v1m0 4v1m0 5v2m0 3v2m0 3v1m0 4v1m0 4v2m0 3v2m0 4v1m0 6v1m0 4v2m0 6v1m0 4v2m0 7v1m0 3v1m0 3v2m0 3v2m0 4v1m0 1v2m0 1v1m0 2v1m0 1v1M404.5 587v1m0 2v1m0 1v1m0 2v1m0 1v2m0 3v2m0 2v1m0 3v1m0 4v1m0 3v2m0 6v1m0 4v2m0 6v1m0 4v2m0 6v1m0 4v2m0 6v1m0 4v2m0 6v1m0 4v1m0 4v1m0 3v2m0 1v1m0 2v1M406.5 287v1m0 61v1M407.5 202v1m0 47v1m0 26v1m0 27v1m0 14v1m0 11v1m0 3v1m0 17v1m0 18v1m0 21v1m0 18v1m0 1v1m0 3v1m0 1v2m0 28v1m0 10v1m0 4v1m0 1v1m0 1v1m0 2v1m0 3v1m0 1v1m0 5v2m0 3v1m0 1v2m0 1v1m0 1v1m0 2v1M408.5 202v1m0 2v1m0 8v1m0 2v1m0 8v1m0 2v1m0 8v1m0 28v1m0 12v1m0 13v1m0 10v1m0 19v1m0 28v1m0 18v2m0 20v2m0 27v1m0 1v1m0 6v1m0 2v1m0 39v1m0 1v1m0 1v2m0 1v1m0 1v1m0 1v2m0 1v1m0 3v1m0 5v2m0 3v1m0 4v1m0 2v1m0 4v1m0 9v1m0 4v1m0 4v1m0 6v1m0 5v1m0 4v1m0 1v1m0 5v1m0 4v1m0 1v1m0 5v1m0 4v1m0 1v1m0 5v1m0 4v1m0 6v2m0 3v1m0 3v1m0 3v1m0 1v1m0 1v2m0 1v1m0 2v1M409.5 201v2m0 2v1m0 5v1m0 1v1m0 9v1m0 1v1m0 9v1m0 1v2m0 2v1m0 7v1m0 4v1m0 6v1m0 1v1m0 3v1m0 7v1m0 13v1m0 13v1m0 5v1m0 7v1m0 1v2m0 4v1m0 7v1m0 1v2m0 5v1m0 6v1m0 1v1m0 8v1m0 8v1m0 1v2m0 7v1m0 8v1m0 1v1m0 11v2m0 12v1m0 16v1m0 2v1m0 1v1m0 1v1m0 12v1m0 149v1m0 1v1m0 2v1m0 1v2m0 1v2m0 4v1m0 3v1m0 3v2m0 4v1m0 1v1m0 5v1m0 4v1m0 1v1m0 5v1m0 4v1m0 1v1m0 5v1m0 4v1m0 1v1m0 5v1m0 4v1m0 1v1m0 4v2m0 3v1m0 3v1m0 2v1m0 2v1m0 1v2m0 1v1m0 2v1m0 1v1m0 2v1m0 4v1M410.5 202v2m0 11v1m0 11v1m0 11v1m0 11v1m0 1v2m0 10v1m0 13v1m0 11v1m0 1v1m0 13v1m0 12v2m0 1v1m0 12v2m0 1v1m0 15v1m0 1v1m0 15v1m0 1v1m0 1v2m0 16v1m0 1v1m0 1v1m0 19v1m0 6v1m0 1v1m0 28v1m0 5v1m0 1v1m0 1v1m0 4v1m0 3v1m0 2v1m0 3v1m0 2v1m0 3v1m0 2v1m0 3v1m0 4v1m0 2v1m0 3v2m0 3v2m0 4v2m0 1v1m0 1v2m0 1v1M411.5 207v1m0 35v1m0 11v1m0 13v1m0 11v1m0 13v1m0 1v1m0 13v1m0 13v1m0 1v1m0 15v1m0 15v1m0 1v1m0 1v1m0 14v2m0 1v1m0 1v1m0 16v1m0 2v1m0 1v1m0 3v1m0 19v1m0 2v1m0 1v1m0 1v1m0 4v1m0 2v1m0 73v1m0 2v1m0 1v1m0 1v2m0 3v1m0 4v1m0 3v2m0 4v1m0 6v1m0 4v2m0 6v1m0 4v2m0 6v1m0 4v2m0 6v1m0 4v2m0 6v1m0 4v2m0 7v1m0 3v1m0 3v2m0 3v2m0 4v1m0 1v2m0 1v1m0 2v1m0 1v1M412.5 442v1m0 186v1m0 2v1m0 1v1m0 2v1m0 1v2m0 1v1m0 1v2m0 6v2m0 3v1m0 3v1m0 7v1m0 4v2m0 6v1m0 4v2m0 7v1m0 7v2m0 1v1m0 2v1m0 1v1m0 2v1m0 1v2m0 1v1m0 2v1m0 1v1m0 2v1M416.5 214v1m0 11v1m0 37v1m0 12v1m0 13v1m0 29v1m0 15v1m0 17v1m0 41v1m0 23v1m0 1v1m0 1v1m0 41v1m0 1v1m0 1v1m0 4v1m0 1v1m0 4v1m0 1v1m0 4v1m0 8v1m0 2v1m0 8v1m0 4v1m0 2v1m0 1v1m0 2v1m0 1v1m0 10v1m0 4v1m0 2v2m0 1v1m0 1v2m0 1v1m0 2v1M417.5 214v1m0 2v1m0 8v1m0 2v1m0 8v1m0 12v1m0 25v1m0 3v1m0 9v1m0 3v1m0 14v1m0 10v1m0 33v1m0 18v2m0 5v1m0 15v1m0 7v2m0 19v2m0 8v1m0 1v1m0 2v1m0 93v1m0 2v1m0 1v1m0 2v1m0 2v1m0 7v2m0 3v2m0 6v1m0 5v1m0 6v1m0 5v1m0 6v1m0 5v1m0 6v1m0 5v1m0 6v1m0 5v1m0 6v1m0 5v1m0 6v1m0 5v1m0 6v2m0 3v2m0 2v2m0 3v2m0 1v1m0 2v1M418.5 196v1m0 5v1m0 11v1m0 2v1m0 20v1m0 12v1m0 2v1m0 26v1m0 13v1m0 14v1m0 9v2m0 14v2m0 4v1m0 18v1m0 10v2m0 7v1m0 12v2m0 17v1m0 7v2m0 16v1m0 2v1m0 6v1m0 1v1m0 1v1m0 4v1m0 5v1m0 3v1m0 1v1m0 1v1m0 1v1m0 1v1m0 2v1m0 1v1m0 178v1m0 1v1m0 2v1m0 1v2m0 1v1m0 1v1m0 3v1m0 7v2m0 3v1m0 4v1m0 3v1m0 2v1m0 2v1m0 1v2m0 1v1m0 2v1m0 1v1m0 2v1m0 1v2m0 1v1M419.5 254v1m0 9v1m0 12v1m0 3v1m0 9v1m0 14v1m0 66v2m0 21v1m0 5v2m0 18v2m0 3v1m0 1v1m0 1v1m0 2v1m0 34v1m0 2v1m0 4v2m0 5v2m0 10v1m0 2v1m0 3v1m0 4v1m0 2v1m0 4v1m0 4v1m0 3v2m0 3v2m0 4v1m0 11v2m0 3v1m0 3v2m0 6v2m0 3v2m0 1v1m0 2v1m0 1v1m0 2v1M420.5 208v1m0 8v1m0 11v1m0 12v1m0 52v1m0 14v1m0 14v1m0 16v1m0 3v1m0 13v1m0 18v2m0 5v1m0 17v1m0 1v1m0 1v1m0 26v1m0 6v1m0 1v1m0 1v1m0 113v1m0 2v1m0 1v1m0 2v1m0 1v2m0 7v1m0 3v1m0 4v1m0 3v1m0 7v2m0 11v2m0 11v2m0 11v2m0 11v2m0 11v2m0 12v1m0 3v1m0 3v2m0 1v1m0 2v1M421.5 365v1m0 45v1m0 37v1m0 1v1m0 1v1m0 1v1m0 1v1m0 253v1m0 4v1m0 2v1m0 1v1M425.5 246v1m0 25v1m0 13v1m0 13v1m0 67v2m0 20v2m0 22v1m0 3v1m0 47v1m0 1v1m0 1v1m0 4v1m0 1v1m0 1v1m0 2v1m0 1v1m0 1v1m0 2v1m0 1v1m0 4v1m0 1v1m0 2v1m0 3v1m0 4v1m0 2v1m0 4v1m0 3v2m0 3v1m0 4v1m0 1v1m0 1v2m0 1v1m0 2v1m0 1v1M426.5 210v1m0 2v1m0 8v1m0 2v1m0 8v1m0 2v1m0 21v1m0 16v1m0 13v1m0 14v1m0 10v1m0 3v1m0 11v1m0 4v1m0 11v2m0 4v1m0 36v1m0 5v1m0 20v2m0 1v1m0 1v1m0 6v1m0 2v1m0 86v1m0 2v1m0 1v2m0 1v1m0 1v2m0 3v2m0 3v1m0 3v2m0 3v1m0 7v1m0 5v1m0 6v1m0 5v1m0 6v1m0 5v1m0 6v1m0 5v1m0 6v1m0 5v1m0 6v1m0 5v1m0 6v1m0 5v1m0 6v2m0 3v1m0 3v2m0 3v2m0 1v1m0 2v1m0 1v1m0 2v1M427.5 197v2m0 2v1m0 2v1m0 16v1m0 18v1m0 9v1m0 8v1m0 6v1m0 27v1m0 20v1m0 15v1m0 28v1m0 6v1m0 7v2m0 5v1m0 16v2m0 7v1m0 6v1m0 16v1m0 2v1m0 1v1m0 1v1m0 1v1m0 6v1m0 1v1m0 1v1m0 1v2m0 6v1m0 1v1m0 1v1m0 1v1m0 182v1m0 1v1m0 2v1m0 1v2m0 1v1m0 1v1m0 3v1m0 7v2m0 3v1m0 7v2m0 3v1m0 3v2m0 1v1m0 2v1m0 1v1m0 2v1m0 1v2m0 1v1m0 2v1m0 1v1M428.5 201v1m0 44v1m0 2v1m0 23v1m0 2v1m0 9v1m0 3v1m0 10v1m0 18v1m0 28v1m0 3v2m0 18v2m0 14v1m0 34v1m0 2v1m0 25v1m0 1v1m0 6v1m0 1v1m0 4v2m0 5v2m0 5v1m0 2v1m0 3v1m0 7v1m0 3v1m0 7v1m0 3v2m0 3v1m0 4v1m0 4v1m0 4v2m0 3v1m0 4v1m0 3v1m0 7v1m0 2v1m0 2v1m0 1v1m0 2v1M429.5 213v1m0 11v1m0 37v1m0 12v1m0 13v1m0 3v1m0 10v1m0 14v1m0 15v2m0 3v1m0 12v1m0 4v2m0 35v2m0 7v2m0 20v2m0 1v1m0 1v1m0 1v1m0 6v1m0 2v1m0 106v1m0 2v1m0 1v1m0 2v1m0 1v2m0 7v1m0 3v1m0 4v1m0 11v2m0 11v2m0 11v2m0 11v2m0 11v2m0 11v2m0 7v1m0 4v1m0 3v1m0 3v2m0 1v1m0 2v1m0 1v1m0 2v1M430.5 204v1m0 61v1m0 27v1m0 85v2m0 25v1m0 34v1m0 4v1m0 4v1m0 1v1m0 226v1m0 2v1m0 4v1m0 4v1m0 2v1m0 9v1m0 2v1m0 1v1m0 2v1m0 2v1m0 1v1M434.5 203v1m0 11v1m0 11v1m0 11v1m0 13v1m0 11v1m0 13v1m0 13v1m0 13v1m0 1v1m0 13v1m0 1v2m0 14v1m0 17v1m0 1v2m0 18v1m0 1v1m0 27v1m0 51v1m0 1v1m0 1v1m0 4v1m0 1v1m0 4v1m0 1v1m0 1v1m0 2v1m0 1v1m0 1v1m0 2v1m0 8v1m0 2v1m0 4v1m0 8v2m0 3v2m0 3v2m0 4v1m0 3v1m0 1v1m0 1v2m0 1v1m0 2v1m0 1v1m0 2v1M435.5 205v1m0 1v1m0 8v2m0 1v1m0 8v2m0 1v1m0 9v1m0 1v1m0 11v1m0 11v1m0 1v1m0 10v2m0 1v1m0 11v1m0 1v1m0 13v1m0 1v1m0 13v1m0 1v1m0 15v1m0 1v1m0 15v1m0 1v1m0 1v1m0 16v2m0 1v1m0 1v1m0 1v1m0 20v2m0 10v1m0 2v1m0 98v1m0 1v1m0 2v1m0 1v1m0 2v1m0 1v2m0 3v2m0 3v1m0 3v2m0 11v1m0 5v1m0 1v1m0 4v1m0 5v1m0 1v1m0 4v1m0 5v1m0 1v1m0 4v1m0 5v1m0 1v1m0 4v1m0 5v1m0 1v1m0 4v1m0 5v1m0 1v1m0 4v1m0 5v1m0 6v2m0 3v1m0 3v1m0 4v1m0 3v1m0 1v1m0 1v2m0 1v1M436.5 209v1m0 11v1m0 11v1m0 10v2m0 1v1m0 5v1m0 5v1m0 10v2m0 1v1m0 6v1m0 3v2m0 1v1m0 11v1m0 1v1m0 7v1m0 4v2m0 1v1m0 7v1m0 4v2m0 1v1m0 1v1m0 5v2m0 5v2m0 1v1m0 1v1m0 14v2m0 1v1m0 1v1m0 1v1m0 5v2m0 9v2m0 1v1m0 1v1m0 1v1m0 1v2m0 4v1m0 17v1m0 2v1m0 1v1m0 1v1m0 1v1m0 6v1m0 1v1m0 1v1m0 3v1m0 1v3m0 9v1m0 1v2m0 1v1m0 1v1m0 1v1m0 185v1m0 1v1m0 2v1m0 2v1m0 1v1m0 2v1m0 1v2m0 3v2m0 3v1m0 3v1m0 1v1m0 1v2m0 1v1m0 2v1m0 1v1m0 2v1m0 1v2m0 1v1m0 2v1m0 1v2m0 1v1m0 1v2m0 1v1M437.5 205v1m0 1v1m0 11v1m0 11v1m0 9v1m0 2v1m0 22v1m0 2v1m0 10v1m0 2v1m0 3v1m0 6v1m0 17v2m0 14v2m0 11v2m0 3v1m0 6v1m0 6v1m0 20v2m0 5v2m0 17v2m0 1v1m0 1v1m0 3v1m0 1v2m0 27v1m0 1v2m0 11v1m0 2v1m0 1v1m0 1v1m0 1v4m0 4v2m0 5v1m0 2v1m0 8v1m0 2v1m0 3v2m0 3v1m0 30v1m0 3v1m0 4v1m0 3v2m0 4v1m0 1v1m0 2v1m0 2v1m0 1v1m0 2v1M438.5 197v1m0 46v1m0 2v1m0 9v1m0 26v1m0 3v1m0 10v1m0 14v1m0 3v1m0 11v2m0 21v1m0 19v2m0 15v2m0 5v1m0 22v1m0 2v1m0 1v1m0 1v1m0 6v1m0 2v1m0 1v1m0 118v1m0 2v1m0 1v1m0 2v1m0 2v1m0 1v1m0 4v2m0 3v1m0 3v1m0 4v1m0 3v1m0 3v2m0 11v2m0 11v2m0 11v2m0 11v2m0 11v2m0 3v1m0 3v1m0 3v1m0 4v1m0 3v2m0 1v1m0 2v1M439.5 288v1m0 85v2m0 61v1m0 2v1m0 1v1m0 4v1m0 1v1m0 1v1m0 1v1m0 268v1M443.5 219v1m0 11v1m0 24v1m0 41v1m0 31v1m0 17v2m0 44v1m0 29v1m0 8v1m0 1v1m0 1v1m0 2v1m0 1v1M444.5 198v1m0 8v1m0 2v1m0 11v1m0 11v1m0 12v1m0 22v1m0 13v1m0 17v1m0 11v1m0 3v1m0 35v2m0 13v2m0 5v2m0 17v2m0 10v1m0 28v1m0 1v1m0 4v1m0 2v1m0 1v1m0 1v1m0 1v1m0 4v1m0 8v1m0 1v1m0 1v1m0 4v1m0 1v1m0 4v1m0 1v1m0 1v1m0 2v1m0 8v1m0 2v1m0 8v1m0 2v1m0 1v1m0 2v1m0 4v1m0 4v1m0 4v1m0 11v2m0 3v1m0 3v1m0 4v1m0 3v1m0 3v2m0 1v1m0 2v1m0 1v1m0 2v1m0 2v1m0 1v1M445.5 222v1m0 20v1m0 6v1m0 9v1m0 8v1m0 4v1m0 8v1m0 4v1m0 24v1m0 15v2m0 5v1m0 10v2m0 18v2m0 9v1m0 12v2m0 12v1m0 2v1m0 3v1m0 1v1m0 3v1m0 5v1m0 1v1m0 2v1m0 117v1m0 1v1m0 2v1m0 2v1m0 1v1m0 2v1m0 1v2m0 1v1m0 1v2m0 3v1m0 3v1m0 3v1m0 3v2m0 11v1m0 5v1m0 6v1m0 5v1m0 6v1m0 5v1m0 6v1m0 5v1m0 6v1m0 5v1m0 6v1m0 5v1m0 6v2m0 12v1m0 2v2m0 1v1m0 2v1m0 1v1M446.5 197v1m0 12v1m0 8v1m0 2v1m0 34v1m0 2v1m0 12v1m0 13v1m0 10v2m0 18v1m0 11v2m0 16v2m0 3v2m0 13v2m0 22v2m0 7v2m0 16v1m0 7v1m0 1v1m0 4v1m0 6v1m0 1v1m0 1v1m0 1v1m0 4v1m0 3v1m0 1v1m0 8v1m0 1v2m0 5v3m0 1v1m0 1v1m0 1v2m0 1v1m0 1v1m0 231v1m0 4v1M447.5 199v1m0 1v1m0 8v1m0 11v1m0 12v1m0 1v1m0 9v1m0 12v1m0 2v1m0 27v1m0 11v1m0 14v2m0 35v1m0 3v2m0 41v2m0 1v1m0 1v1m0 5v2m0 65v1m0 1v1m0 1v2m0 1v1m0 1v1m0 1v2m0 3v2m0 5v1m0 5v1m0 4v2m0 3v2m0 3v1m0 4v2m0 3v2m0 4v1m0 7v1m0 3v2m0 3v1m0 3v1m0 3v2m0 3v1m0 3v2m0 6v2m0 1v1m0 2v1m0 1v1m0 2v1m0 1v1m0 2v1m0 2v1m0 1v1m0 2v1M448.5 360v1m0 54v2m0 163v1m0 4v1m0 2v1m0 1v1m0 2v1m0 1v1m0 2v1m0 2v1m0 1v1m0 4v2m0 3v1m0 3v2m0 3v1m0 3v1m0 3v2m0 3v1m0 3v1m0 3v2m0 11v2m0 11v2m0 11v2m0 3v1m0 3v1m0 7v1m0 2v1m0 2v1m0 1v1M452.5 208v1m0 11v1m0 11v1m0 24v1m0 27v1m0 14v1m0 15v1m0 16v1m0 41v2m0 28v1M453.5 197v1m0 1v1m0 35v1m0 12v1m0 12v1m0 9v1m0 17v1m0 62v2m0 5v1m0 23v1m0 22v2m0 1v1m0 5v1m0 3v1m0 1v1m0 1v1m0 2v1M454.5 206v1m0 4v1m0 6v1m0 4v1m0 6v1m0 11v1m0 1v1m0 11v1m0 4v1m0 6v1m0 1v2m0 3v1m0 6v1m0 1v2m0 12v1m0 5v2m0 6v1m0 1v1m0 6v1m0 8v1m0 1v1m0 6v1m0 8v1m0 1v2m0 18v1m0 1v2m0 10v2m0 10v1m0 1v1m0 1v2m0 20v1m0 1v1m0 2v1m0 6v1m0 1v1m0 1v1m0 1v1m0 6v1m0 1v1m0 1v1m0 1v1m0 4v1m0 3v1m0 4v1m0 1v1m0 1v1m0 6v1m0 4v1m0 1v1m0 4v1m0 1v1m0 2v1m0 1v1m0 1v1m0 2v1m0 1v1m0 2v1m0 1v1m0 1v2m0 3v1m0 4v1m0 5v1m0 4v1m0 4v1m0 3v1m0 1v1m0 1v2m0 1v1m0 1v2m0 1v1m0 2v1m0 1v1m0 2v1m0 2v1m0 1v1M455.5 197v3m0 10v2m0 8v1m0 1v2m0 10v2m0 10v1m0 11v1m0 1v2m0 9v2m0 1v1m0 10v2m0 1v2m0 12v1m0 1v1m0 11v1m0 1v1m0 1v1m0 12v2m0 1v1m0 15v1m0 1v1m0 1v1m0 16v2m0 1v1m0 1v1m0 1v2m0 22v1m0 1v1m0 1v1m0 1v1m0 1v1m0 1v2m0 104v1m0 4v1m0 2v1m0 1v1m0 1v2m0 1v1m0 2v1m0 1v2m0 3v2m0 3v1m0 4v1m0 3v1m0 3v1m0 3v2m0 6v1m0 2v1m0 1v2m0 1v1m0 2v1m0 1v1m0 2v1m0 1v2m0 1v1m0 2v1m0 1v1m0 2v1m0 1v2m0 1v1m0 2v1m0 1v1m0 2v1m0 1v2m0 1v1m0 2v1m0 1v1m0 2v1m0 1v2m0 1v1m0 2v1m0 1v1m0 2v1m0 1v2m0 1v1m0 2v1m0 1v1m0 4v2m0 7v1m0 3v2m0 3v1m0 3v2m0 1v1m0 2v1m0 1v1m0 2v1M456.5 200v1m0 10v2m0 10v2m0 11v1m0 13v1m0 10v2m0 12v2m0 12v2m0 1v1m0 13v1m0 15v1m0 1v1m0 15v1m0 1v1m0 17v1m0 1v1m0 1v1m0 19v1m0 1v1m0 1v1m0 1v2m0 25v3m0 1v1m0 1v1m0 1v1m0 1v1m0 7v1m0 4v1m0 9v3m0 3v1m0 1v1m0 4v1m0 1v1m0 1v1m0 2v1m0 1v1m0 1v1m0 187v1m0 2v1m0 2v1m0 1v1m0 2v1m0 1v2m0 1v1m0 1v2m0 1v1m0 2v1m0 1v1m0 2v1m0 2v1m0 1v1m0 2v1m0 7v1m0 1v1m0 2v1m0 1v1m0 2v1m0 2v1M457.5 391v1m0 71v1m0 1v1m0 1v1m0 1v2m0 1v1m0 1v1m0 1v1m0 2v1m0 3v3m0 5v2m0 4v2m0 4v2m0 4v1m0 10v1m0 4v1m0 4v1m0 3v2m0 3v2m0 3v2m0 6v2m0 1v1m0 2v1m0 1v1m0 2v1m0 1v2m0 1v1m0 2v1m0 1v1m0 2v1m0 4v1M458.5 560v1m0 2v1m0 4v1m0 2v1m0 1v1m0 2v1m0 1v2m0 1v1m0 2v1m0 1v1m0 2v1m0 1v2m0 3v2m0 6v2m0 3v1m0 3v1m0 3v1m0 4v1m0 3v1m0 8v1m0 3v1m0 8v1m0 3v1m0 8v1m0 3v1m0 3v2m0 3v1m0 5v1m0 1v2m0 1v1m0 2v1m0 1v1M460.5 203v1m0 35v1m0 25v1m0 13v1m0 30v1m0 34v2m0 20v2m0 28v2M461.5 215v1m0 2v1m0 8v1m0 24v1m0 16v1m0 13v1m0 10v1m0 32v1m0 41v1m0 29v1m0 5v1m0 1v1m0 5v1m0 1v2m0 1v1M462.5 196v2m0 5v1m0 2v1m0 2v1m0 5v1m0 5v1m0 5v1m0 2v1m0 2v1m0 9v1m0 8v1m0 6v1m0 13v1m0 13v1m0 6v1m0 3v2m0 15v1m0 3v2m0 11v2m0 4v1m0 6v1m0 6v2m0 5v2m0 15v2m0 36v1m0 4v1m0 1v1m0 10v1m0 1v1m0 1v1m0 1v1m0 6v1m0 1v1m0 1v1m0 1v1m0 4v1m0 1v1m0 6v1m0 1v1m0 1v1m0 4v1m0 1v1m0 1v1m0 2v1m0 1v1m0 1v1m0 2v1m0 1v1m0 1v1m0 2v1m0 1v1m0 2v1m0 1v1m0 1v2m0 1v1m0 1v1m0 1v2m0 1v1m0 1v2m0 1v1m0 1v1m0 4v1m0 1v1m0 1v1m0 2v1m0 1v2m0 1v1m0 1v2m0 1v1m0 2v1m0 1v1m0 2v1m0 1v1M463.5 203v1m0 2v1m0 23v1m0 8v1m0 6v1m0 19v1m0 6v1m0 6v1m0 17v1m0 4v1m0 6v1m0 3v1m0 35v2m0 22v2m0 10v2m0 18v1m0 1v2m0 88v1m0 2v1m0 1v1m0 2v1m0 1v1m0 1v2m0 1v1m0 1v2m0 1v1m0 1v1m0 2v1m0 1v2m0 4v2m0 1v1m0 1v2m0 1v1m0 2v1m0 1v2m0 1v1m0 1v2m0 1v1m0 2v1m0 1v1m0 2v1m0 1v2m0 1v1m0 2v1m0 1v1m0 2v1m0 1v2m0 1v1m0 2v1m0 1v1m0 31v1m0 1v1m0 2v1m0 1v1m0 2v1m0 1v2m0 1v1m0 2v1m0 1v1m0 2v1m0 1v2m0 1v1m0 2v1m0 1v2m0 1v1m0 1v2m0 1v1m0 1v2m0 1v2m0 8v1m0 1v1m0 1v2m0 1v1m0 2v1m0 1v2m0 1v1m0 2v1m0 1v1M464.5 197v1m0 20v1m0 27v1m0 9v1m0 12v1m0 3v1m0 10v1m0 18v1m0 28v1m0 18v2m0 54v1m0 1v2m0 10v1m0 1v1m0 1v1m0 1v1m0 1v1m0 1v1m0 1v1m0 2v1m0 1v1m0 8v4m0 1v1m0 1v1m0 1v1m0 1v1m0 4v1m0 1v1m0 4v1m0 173v1m0 2v1m0 2v1m0 1v1m0 2v1m0 1v2m0 1v1m0 1v2m0 1v1m0 2v1m0 1v2m0 3v1m0 8v1m0 3v1m0 5v1m0 1v2m0 1v1m0 1v2m0 1v1m0 2v1m0 1v1m0 2v1m0 2v1m0 1v1m0 2v1m0 1v1m0 2v1m0 2v1M465.5 198v1m0 10v1m0 11v1m0 37v1m0 13v1m0 14v1m0 30v2m0 16v2m0 19v1m0 24v2m0 56v1m0 1v1m0 1v1m0 1v2m0 1v1m0 1v1m0 1v1m0 3v1m0 7v1m0 1v2m0 5v2m0 5v1m0 6v1m0 2v1m0 1v1m0 2v1m0 1v1m0 1v1m0 2v1m0 1v1m0 2v1m0 1v1m0 1v1m0 2v1m0 1v1m0 5v1m0 4v1m0 4v1m0 3v2m0 7v2m0 3v2m0 1v1m0 2v1m0 1v2m0 1v1m0 2v1m0 1v1m0 2v1m0 4v1m0 4v1M466.5 537v1m0 2v1m0 1v1m0 2v1m0 1v2m0 1v1m0 2v1m0 1v1m0 2v1m0 1v2m0 3v2m0 6v2m0 3v1m0 3v1m0 8v1m0 3v1m0 8v1m0 3v2m0 1v1m0 2v1m0 1v1m0 2v1m0 1v2m0 1v1m0 2v1m0 1v1m0 2v1m0 1v2m0 1v1m0 2v1m0 1v1m0 2v1m0 1v2m0 1v1m0 5v1m0 3v1m0 8v1m0 3v1m0 3v2m0 3v2m0 1v1m0 2v1m0 1v1m0 2v1M467.5 675v1m0 4v1m0 4v1m0 2v1M469.5 200v1m0 35v1m0 25v1m0 13v1m0 29v1m0 36v1m0 22v1m0 32v2M470.5 200v1m0 2v1m0 32v1m0 2v1m0 12v1m0 9v1m0 13v1m0 3v1m0 10v1m0 3v1m0 15v1m0 17v1m0 13v1m0 5v1m0 16v1m0 8v1m0 23v3m0 13v1m0 1v1m0 1v1m0 3v1m0 1v1m0 1v1m0 1v1m0 4v1m0 1v1m0 1v1m0 1v1m0 3v1m0 1v2m0 8v3m0 3v1m0 1v4m0 1v1m0 1v1m0 1v12m0 1v1m0 1v2m0 1v1m0 1v1m0 4v1m0 1v1M471.5 203v1m0 2v1m0 15v1m0 4v1m0 2v1m0 17v1m0 17v1m0 7v1m0 5v1m0 3v1m0 10v1m0 15v1m0 4v1m0 5v2m0 5v1m0 5v1m0 4v1m0 9v1m0 6v1m0 4v1m0 12v2m0 9v2m0 7v1m0 41v1m0 1v1m0 1v1m0 1v1m0 1v1m0 2v1m0 1v1m0 1v1m0 1v1m0 1v3m0 3v1m0 1v4m0 1v1m0 1v1m0 1v2m0 1v1m0 1v1m0 1v1m0 112v1m0 2v1m0 1v2m0 1v1m0 1v2m0 1v2m0 1v1m0 1v2m0 1v1m0 1v2m0 1v4m0 1v13m0 2v1m0 1v1m0 2v1m0 2v1m0 1v1m0 2v1M472.5 202v2m0 2v1m0 7v1m0 3v1m0 7v1m0 3v1m0 7v2m0 9v2m0 5v1m0 7v1m0 13v1m0 5v1m0 6v2m0 1v2m0 12v1m0 1v2m0 11v2m0 1v1m0 8v1m0 8v1m0 1v1m0 10v1m0 8v1m0 1v1m0 1v1m0 2v1m0 13v1m0 7v1m0 2v1m0 1v1m0 1v1m0 1v1m0 1v1m0 1v1m0 4v1m0 1v1m0 1v1m0 156v1m0 1v1m0 2v1m0 2v1m0 1v1m0 2v1m0 1v2m0 1v13m0 1v4m0 1v2m0 1v1m0 1v2m0 1v2m0 1v1m0 1v2m0 1v1m0 2v1m0 1v1m0 38v1m0 2v1m0 1v1m0 2v1m0 2v1m0 1v1m0 4v1m0 8v1m0 4v2m0 1v2m0 1v1m0 1v2m0 1v1m0 2v1m0 1v1m0 2v1m0 2v1M473.5 203v2m0 11v1m0 10v2m0 11v1m0 1v1m0 11v1m0 13v1m0 13v1m0 12v2m0 1v1m0 12v2m0 1v1m0 14v2m0 1v1m0 16v2m0 1v1m0 1v2m0 17v1m0 2v1m0 1v1m0 1v1m0 2v1m0 31v1m0 1v1m0 1v9m0 11v2m0 1v1m0 7v1m0 2v1m0 10v1m0 1v1m0 1v1m0 1v2m0 1v1m0 1v1m0 1v4m0 3v3m0 5v2m0 4v1m0 1v1m0 1v1m0 1v2m0 1v1m0 1v1m0 2v1m0 1v1m0 2v1m0 1v1m0 2v1m0 1v1M474.5 383v1m0 2v1m0 1v1m0 108v1m0 2v1m0 1v1m0 4v1m0 1v1m0 2v1m0 1v1m0 2v1m0 1v1m0 1v2m0 3v2m0 12v1m0 2v4m0 1v2m0 1v1m0 1v2m0 1v1m0 1v2m0 1v2m0 1v1m0 1v2m0 1v1m0 1v2m0 1v2m0 1v1m0 1v2m0 1v1m0 1v2m0 1v2m0 1v1m0 1v2m0 1v1m0 1v2m0 2v1m0 3v1m0 4v1m0 3v2m0 6v2m0 3v2m0 1v1m0 2v1m0 1v1m0 2v1m0 2v1m0 1v1m0 2v1m0 1v1m0 2v1m0 2v1m0 1v1m0 2v1m0 4v1M475.5 620v1m0 4v1m0 4v1m0 2v1m0 1v1m0 2v1m0 2v1m0 1v1m0 2v1m0 1v1m0 2v1m0 2v1m0 1v1m0 2v1m0 1v2m0 3v2m0 6v2m0 3v1m0 7v2m0 3v2m0 1v1m0 2v1m0 1v1m0 2v1m0 4v1m0 2v1m0 4v1m0 4v1m0 2v1M477.5 213v1m0 79v1M478.5 202v1m0 1v1m0 9v1m0 11v1m0 11v1m0 1v2m0 10v1m0 11v1m0 1v1m0 11v1m0 1v1m0 13v1m0 1v1m0 13v1m0 1v1m0 15v1m0 1v1m0 1v2m0 14v1m0 1v1m0 1v1m0 1v2m0 20v1m0 1v1m0 1v1m0 1v1m0 1v1m0 2v1M479.5 206v1m0 11v1m0 11v1m0 11v1m0 11v1m0 1v1m0 11v1m0 1v1m0 13v1m0 12v2m0 1v1m0 15v1m0 1v1m0 15v1m0 1v1m0 1v1m0 17v1m0 1v1m0 1v1m0 1v1m0 22v1m0 2v1m0 1v1m0 1v1m0 1v1m0 1v1m0 1v1m0 1v1m0 1v1m0 1v1m0 1v1m0 1v2m0 1v1m0 1v1m0 1v1m0 1v1m0 1v1m0 1v2m0 1v1m0 1v1m0 1v1m0 1v1m0 1v1m0 1v1m0 1v1m0 6v1m0 1v1m0 1v1m0 1v1m0 4v1m0 1v1m0 1v1M480.5 204v1m0 2v2m0 4v1m0 5v2m0 7v1m0 3v1m0 13v1m0 11v1m0 5v1m0 2v1m0 3v2m0 5v1m0 9v1m0 4v1m0 3v1m0 6v1m0 8v1m0 5v2m0 1v1m0 8v2m0 6v2m0 1v1m0 10v1m0 9v1m0 2v1m0 1v1m0 1v1m0 9v3m0 22v1m0 1v1m0 6v1m0 1v1m0 1v1m0 1v1m0 1v2m0 1v1m0 1v1m0 1v1m0 1v1m0 1v1m0 3v1m0 4v1m0 1v1m0 1v1m0 1v1m0 125v2m0 1v1m0 1v2m0 1v28m0 2v1m0 2v1M481.5 207v1m0 11v1m0 11v1m0 9v1m0 2v1m0 9v1m0 2v1m0 10v1m0 2v1m0 10v1m0 3v1m0 11v1m0 15v1m0 3v1m0 14v1m0 4v1m0 15v2m0 5v1m0 21v2m0 9v5m0 115v1m0 2v1m0 1v28m0 1v2m0 1v1m0 1v2m0 121v1m0 1v1m0 2v1m0 2v1m0 6v2m0 3v1m0 3v2m0 1v1m0 2v1m0 1v1m0 2v1M482.5 197v1m0 34v1m0 25v1m0 13v1m0 29v1m0 17v1m0 18v1m0 22v2m0 6v1m0 28v6m0 1v1m0 3v1m0 1v1m0 1v1m0 1v1m0 1v1m0 1v1m0 1v1m0 1v1m0 1v1m0 1v1m0 1v1m0 4v1m0 1v1m0 5v1m0 1v4m0 7v2m0 5v1m0 1v4m0 1v1m0 2v4m0 1v1m0 1v1m0 2v1m0 1v1m0 1v1m0 2v1m0 1v1m0 1v1m0 2v1m0 1v1m0 169v1m0 2v1m0 2v1m0 1v1m0 2v1m0 1v1m0 2v1m0 2v1m0 1v1m0 2v1m0 1v1m0 2v1M483.5 455v1m0 6v1m0 1v1m0 1v2m0 1v1m0 1v1m0 1v1m0 2v1m0 1v1m0 3v3m0 1v1m0 1v2m0 1v1m0 1v1m0 1v2m0 1v1m0 1v2m0 1v1m0 1v1m0 1v2m0 1v1m0 1v2m0 1v1m0 1v2m0 1v1m0 1v1m0 2v1m0 1v1m0 2v1m0 1v2m0 1v1m0 1v2m0 1v1m0 1v2m0 1v1m0 1v2m0 1v2m0 1v1m0 1v2m0 1v1m0 1v2m0 1v2m0 1v1m0 1v2m0 1v1m0 1v2m0 1v4m0 1v2m0 1v4m0 2v2m0 1v1m0 2v1m0 1v1m0 2v1m0 2v1m0 1v1m0 2v1m0 1v1m0 2v1m0 2v1m0 1v1m0 2v1m0 4v1m0 4v1M484.5 562v1m0 4v1m0 2v1m0 1v1m0 2v1m0 2v1m0 1v1m0 2v1m0 1v1m0 2v1m0 2v1m0 1v1m0 2v1m0 1v2m0 3v3m0 1v2m0 1v4m0 1v2m0 1v1m0 1v2m0 1v1m0 1v2m0 1v2m0 1v1m0 1v2m0 1v1m0 1v2m0 1v2m0 1v1m0 1v2m0 1v1m0 1v2m0 1v2m0 1v1m0 1v2m0 1v1m0 1v2m0 1v2m0 1v1m0 1v2m0 3v1m0 3v1m0 3v2m0 3v1m0 3v2m0 4v1m0 1v1m0 2v1m0 4v1m0 2v1M486.5 207v1m0 11v1m0 11v1m0 25v1m0 13v1m0 66v1m0 23v2m0 38v1m0 1v9m0 1v1m0 1v1m0 1v1m0 1v1m0 1v1m0 1v1m0 1v1m0 1v1m0 1v1m0 6v1m0 1v1m0 1v1m0 1v1m0 6v1M487.5 198v1m0 8v1m0 2v1m0 11v1m0 8v1m0 12v1m0 12v1m0 17v1m0 14v1m0 10v1m0 4v1m0 17v1m0 13v1m0 6v1m0 16v1m0 9v2m0 29v7m0 1v1m0 1v1m0 1v1m0 1v1m0 1v1m0 1v1m0 1v1m0 1v1m0 1v1m0 1v1m0 1v1m0 4v1m0 1v1m0 1v1m0 1v1m0 132v1m0 1v2m0 1v29m0 1v1m0 2v1M488.5 207v1m0 2v1m0 2v1m0 5v1m0 2v1m0 8v1m0 15v1m0 3v1m0 5v1m0 13v1m0 7v1m0 10v1m0 3v1m0 11v1m0 11v1m0 5v1m0 5v1m0 14v1m0 7v1m0 6v2m0 11v1m0 12v2m0 6v1m0 1v2m0 1v1m0 105v1m0 3v26m0 1v4m0 1v3m0 132v1m0 2v1m0 1v1m0 8v1m0 2v1m0 2v1m0 1v2m0 1v1m0 2v1m0 1v1m0 2v1M494.5 213v1m0 11v1m0 24v1m0 127v1m0 2v1M495.5 201v2m0 11v1m0 11v1m0 10v2m0 1v2m0 10v1m0 13v1m0 13v1m0 1v1m0 10v2m0 1v1m0 15v1m0 1v1m0 15v1m0 1v1m0 1v2m0 16v1m0 1v1m0 1v1m0 2v1m0 19v1m0 2v1m0 1v1m0 1v1m0 1v1m0 1v1m0 1v1m0 1v1m0 1v1m0 2v1m0 1v1m0 1v1m0 1v1M496.5 201v1m0 4v1m0 6v1m0 4v1m0 6v1m0 4v1m0 11v1m0 1v1m0 5v1m0 5v1m0 11v1m0 1v1m0 7v1m0 5v1m0 1v1m0 6v1m0 6v1m0 1v2m0 11v2m0 1v1m0 1v2m0 14v1m0 1v1m0 1v1m0 8v1m0 10v1m0 1v1m0 1v1m0 1v1m0 2v1m0 25v1m0 1v1m0 4v1m0 1v1m0 1v1m0 1v1m0 1v1m0 1v1m0 1v1m0 1v1m0 6v1m0 1v1m0 3v1m0 1v1m0 1v1m0 1v1m0 118v1m0 1v2m0 1v1m0 1v29M497.5 201v1m0 2v1m0 2v2m0 10v2m0 4v1m0 2v1m0 3v1m0 25v1m0 5v1m0 7v1m0 9v1m0 5v1m0 4v2m0 9v1m0 5v1m0 3v2m0 6v1m0 5v1m0 12v2m0 1v1m0 4v2m0 5v2m0 12v1m0 1v1m0 5v1m0 9v1m0 1v2m0 1v1m0 92v1m0 1v29m0 1v4m0 1v1m0 149v2m0 1v1m0 1v2m0 7v1m0 2v1m0 2v1m0 1v2m0 1v1M498.5 216v1m0 2v1m0 24v1m0 9v1m0 13v1m0 17v1m0 11v1m0 3v1m0 12v1m0 4v1m0 13v1m0 5v1m0 16v2m0 32v4m0 1v1m0 15v1m0 3v1m0 1v1m0 1v1m0 1v1m0 1v1m0 1v1m0 1v1m0 4v1m0 1v1m0 1v1m0 5v1m0 1v2m0 1v1m0 1v1m0 1v1m0 1v1m0 1v2m0 5v6m0 2v1m0 1v2m0 1v1m0 1v1m0 1v1m0 2v1m0 1v1m0 1v1m0 2v1m0 1v1m0 153v27m0 1v1m0 3v1m0 3v2m0 1v1m0 2v1m0 1v1m0 2v1m0 1v2m0 1v1m0 2v1m0 1v1m0 2v1m0 4v1m0 2v1m0 1v1m0 2v1m0 1v2M499.5 207v1m0 11v1m0 12v1m0 25v1m0 13v1m0 163v1m0 1v1m0 1v1m0 1v1m0 1v2m0 1v1m0 1v1m0 4v4m0 5v1m0 1v2m0 1v1m0 1v1m0 1v1m0 2v1m0 1v1m0 1v1m0 1v2m0 1v1m0 52v2m0 1v1m0 1v2m0 1v1m0 2v1m0 1v2m0 1v1m0 1v2m0 1v4m0 1v2m0 1v1m0 1v2m0 1v4m0 1v2m0 1v4m0 1v5m0 2v1m0 1v1m0 2v1m0 1v2m0 1v1m0 2v1m0 1v1m0 2v1m0 4v1m0 2v1M500.5 531v1m0 2v1m0 1v1m0 2v1m0 1v1m0 2v1m0 1v2m0 1v1m0 2v1m0 1v3m0 1v4m0 1v2m0 1v1m0 1v2m0 1v4m0 1v2m0 1v1m0 1v2m0 1v1m0 2v1m0 1v2m0 1v1m0 1v2m0 1v1m0 2v1m0 1v2m0 1v1m0 2v1m0 1v1m0 54v1m0 1v2m0 1v1m0 2v1m0 1v1m0 4v2m0 3v1m0 3v2m0 4v1m0 1v1m0 2v1m0 4v1m0 2v1m0 4v1M503.5 197v1m0 1v1m0 35v1m0 26v1m0 28v1m0 15v2m0 12v1m0 25v2m0 28v1m0 2v1M504.5 211v1m0 11v1m0 24v1m0 3v1m0 13v1m0 9v1m0 19v1m0 16v1m0 12v2m0 21v1m0 28v2m0 15v1m0 1v1m0 1v2m0 1v1m0 1v1m0 1v1m0 1v1m0 1v1m0 1v1m0 1v1m0 2v1m0 1v1m0 1v1m0 1v1m0 1v1m0 1v1m0 1v1m0 1v1m0 1v1m0 6v1m0 1v1m0 1v1M505.5 202v1m0 6v1m0 4v1m0 6v1m0 4v1m0 6v1m0 1v1m0 3v1m0 7v2m0 10v1m0 1v1m0 11v1m0 1v2m0 3v1m0 8v1m0 15v1m0 1v1m0 5v1m0 7v1m0 1v1m0 1v1m0 6v2m0 9v1m0 1v1m0 10v2m0 11v1m0 1v1m0 1v1m0 22v1m0 1v1m0 2v1m0 1v1m0 1v1m0 1v1m0 1v1m0 1v1m0 1v1m0 1v2m0 1v1m0 1v1m0 1v1m0 1v1m0 1v1m0 1v1m0 1v1m0 1v1m0 1v1m0 4v1m0 131v1m0 1v2m0 1v1m0 1v29m0 4v1M506.5 201v1m0 11v2m0 10v2m0 10v1m0 11v1m0 1v2m0 9v2m0 1v1m0 10v2m0 1v2m0 12v1m0 1v2m0 11v2m0 1v1m0 14v2m0 1v1m0 1v2m0 16v1m0 1v1m0 1v1m0 22v2m0 1v1m0 1v1m0 1v1m0 1v1m0 1v1m0 1v2m0 1v1m0 108v1m0 2v29m0 1v2m0 1v4m0 134v1m0 1v1m0 2v1m0 2v1m0 6v2m0 3v1m0 1v1m0 1v2m0 1v1m0 2v1m0 1v1m0 2v1M507.5 203v1m0 10v2m0 11v1m0 13v1m0 10v2m0 13v1m0 12v2m0 1v1m0 12v2m0 1v1m0 15v1m0 16v2m0 1v1m0 1v1m0 19v1m0 1v1m0 1v1m0 1v1m0 26v1m0 1v1m0 2v1m0 1v1m0 1v1m0 1v1m0 1v1m0 1v1m0 1v1m0 1v1m0 1v1m0 1v1m0 1v1m0 1v1m0 1v1m0 1v1m0 1v1m0 1v1m0 4v1m0 1v1m0 3v1m0 1v1m0 1v1m0 1v4m0 1v1m0 1v1m0 1v1m0 1v4m0 1v1m0 3v4m0 2v1m0 1v1m0 1v2m0 1v1m0 1v1m0 1v2m0 1v1m0 1v1m0 1v1m0 2v1m0 1v1m0 171v1m0 2v1m0 1v1m0 2v1m0 2v1m0 1v1m0 2v1m0 1v2m0 1v1m0 1v2m0 1v1m0 2v1m0 1v1m0 2v1m0 20v1m0 1v1m0 2v1M508.5 448v1m0 1v1m0 1v1m0 4v1m0 5v2m0 1v1m0 1v1m0 1v1m0 1v3m0 1v1m0 1v4m0 1v1m0 1v1m0 1v2m0 1v1m0 1v4m0 1v1m0 1v2m0 1v1m0 1v1m0 2v1m0 1v1m0 1v2m0 1v1m0 1v2m0 1v1m0 1v2m0 1v1m0 1v2m0 1v1m0 1v2m0 1v1m0 1v2m0 1v1m0 1v2m0 1v1m0 2v1m0 1v2m0 1v1m0 1v2m0 1v1m0 1v2m0 1v2m0 1v1m0 1v2m0 1v4m0 1v4m0 1v2m0 1v3m0 1v1m0 2v1m0 1v1m0 2v1m0 1v1m0 2v1m0 2v1m0 1v1m0 2v1m0 1v1m0 2v1m0 2v1m0 1v1m0 2v1m0 4v1M509.5 553v1m0 2v1m0 1v1m0 2v1m0 2v1m0 1v1m0 2v1m0 1v1m0 2v1m0 2v1m0 1v1m0 2v1m0 1v1m0 2v1m0 1v3m0 1v2m0 1v4m0 1v4m0 1v2m0 1v1m0 1v2m0 1v2m0 1v1m0 1v2m0 1v1m0 1v2m0 1v2m0 1v1m0 1v2m0 1v1m0 1v2m0 1v2m0 1v1m0 1v2m0 1v1m0 1v2m0 1v2m0 1v1m0 1v2m0 1v1m0 1v2m0 1v2m0 1v1m0 1v2m0 3v1m0 3v1m0 3v1m0 4v1m0 3v2m0 1v1m0 2v1m0 1v1m0 2v1M511.5 241v1m0 74v1m0 18v2m0 72v1m0 1v1m0 1v1m0 1v1m0 1v1m0 1v1m0 6v1m0 1v1m0 1v1m0 1v1m0 1v1m0 1v1m0 1v1m0 2v1m0 1v1m0 28v1m0 1v1m0 1v4m0 1v28m0 2v1M512.5 216v1m0 2v1m0 12v1m0 21v1m0 3v1m0 9v1m0 14v1m0 3v1m0 11v1m0 3v1m0 17v2m0 20v1m0 16v2m0 9v1m0 55v1m0 1v1m0 1v1m0 1v1m0 1v1m0 1v1m0 1v3m0 1v1m0 1v1m0 1v1m0 1v1m0 183v1m0 1v2m0 1v26m0 1v1m0 2v1m0 2v1M513.5 197v1m0 43v1m0 3v1m0 22v1m0 3v1m0 62v1m0 7v1m0 15v1m0 12v2m0 25v1m0 1v8m0 1v1m0 1v1m0 1v1m0 1v1m0 1v1m0 1v1m0 1v1m0 1v1m0 139v1m0 1v27m0 1v1m0 1v2m0 1v3m0 78v1m0 1v1m0 2v1m0 2v1m0 11v2m0 3v1m0 3v2m0 1v1m0 2v1m0 1v2m0 1v1m0 1v2m0 1v1m0 2v1m0 1v1M514.5 241v1m0 12v1m0 3v1m0 9v1m0 3v1m0 10v1m0 3v1m0 15v1m0 17v1m0 13v1m0 6v1m0 16v1m0 9v2m0 29v12m0 1v1m0 3v1m0 1v1m0 1v1m0 1v1m0 1v1m0 1v1m0 1v1m0 1v1m0 4v1m0 1v1m0 1v1m0 1v1m0 1v1m0 42v1m0 2v1m0 1v1m0 1v1m0 2v1m0 1v1m0 1v2m0 1v1m0 1v2m0 1v1m0 1v4m0 1v4m0 1v3m0 1v1m0 1v1m0 2v1m0 1v1m0 2v1m0 1v1m0 2v1m0 4v1M515.5 197v1m0 60v1m0 13v1m0 14v1m0 33v1m0 20v1m0 6v1m0 19v1m0 13v2m0 92v1m0 1v1m0 1v1m0 2v1m0 1v1m0 1v2m0 1v1m0 1v1m0 1v3m0 1v4m0 1v1m0 1v2m0 1v1m0 1v4m0 1v1m0 1v2m0 1v1m0 1v2m0 1v1m0 1v2m0 1v1m0 84v2m0 1v1m0 2v1m0 1v2m0 1v1m0 1v2m0 1v1m0 2v1m0 1v2m0 1v1m0 1v2m0 1v4m0 1v2m0 1v1m0 1v2m0 1v4m0 8v1m0 1v2m0 1v1m0 2v1m0 1v1m0 2v1m0 4v1m0 2v1M516.5 382v4m0 211v1m0 2v1m0 1v1m0 2v1m0 4v1m0 2v1m0 1v1m0 2v1m0 1v2m0 1v1m0 2v1m0 2v2m0 1v4m0 1v2m0 1v1m0 1v2m0 1v4m0 1v2m0 1v1m0 1v2m0 1v1m0 2v1m0 1v2m0 1v1m0 1v2m0 1v1m0 5v1m0 3v2m0 7v1m0 3v1m0 3v2m0 6v1m0 2v1m0 1v2m0 1v1m0 2v1m0 1v1m0 2v1m0 1v2m0 1v1M519.5 202v1m0 11v1m0 11v1m0 12v1m0 40v1m0 32v1m0 18v2m0 22v2m0 40v1m0 1v1m0 1v1m0 1v1m0 1v1m0 1v13m0 1v3m0 1v1m0 1v1m0 1v1m0 1v27m0 3v9m0 1v1m0 1v1M520.5 242v1m0 9v1m0 13v1m0 17v1m0 11v1m0 3v2m0 16v2m0 38v1m0 7v1m0 32v1m0 1v1m0 1v1m0 1v1m0 1v1m0 1v11m0 3v1m0 5v1m0 1v1m0 1v1m0 4v1m0 1v1m0 157v4m0 1v2m0 1v28m0 2v1M521.5 202v1m0 5v1m0 5v1m0 2v1m0 2v1m0 5v1m0 12v1m0 16v1m0 13v1m0 9v1m0 31v2m0 10v1m0 14v2m0 13v2m0 11v2m0 11v1m0 9v1m0 1v1m0 2v1m0 1v1m0 127v1m0 1v1m0 2v28m0 1v4m0 1v2m0 113v1m0 1v1m0 2v1m0 2v1m0 6v2m0 3v1m0 1v1m0 1v2m0 1v1m0 2v1m0 1v1m0 2v1m0 1v2m0 1v1m0 2v1m0 1v1M522.5 242v1m0 9v1m0 13v1m0 17v1m0 11v1m0 3v1m0 17v1m0 13v1m0 5v2m0 15v2m0 7v2m0 25v1m0 1v2m0 1v1m0 1v1m0 1v1m0 1v1m0 1v1m0 3v1m0 1v1m0 3v1m0 1v1m0 1v1m0 3v1m0 8v1m0 1v1m0 1v1m0 1v1m0 1v1m0 26v1m0 1v1m0 1v1m0 1v2m0 1v1m0 1v1m0 1v2m0 1v1m0 1v1m0 1v2m0 1v1m0 1v1m0 1v2m0 1v1m0 1v3m0 1v1m0 1v1m0 2v1m0 1v1m0 2v1m0 1v1m0 4v1M523.5 208v1m0 8v1m0 2v1m0 35v1m0 13v1m0 53v1m0 21v1m0 19v1m0 9v1m0 2v1m0 69v1m0 1v1m0 4v1m0 1v1m0 3v1m0 2v1m0 1v1m0 1v1m0 1v3m0 1v1m0 1v1m0 1v2m0 1v1m0 1v1m0 1v2m0 1v1m0 1v1m0 1v2m0 1v1m0 1v1m0 2v1m0 1v1m0 1v2m0 75v1m0 1v2m0 1v1m0 1v2m0 1v2m0 1v1m0 1v2m0 1v1m0 1v2m0 1v2m0 1v1m0 1v2m0 1v1m0 1v2m0 1v2m0 1v1m0 1v2m0 1v4m0 1v4m0 1v1m0 1v1m0 1v1m0 2v1m0 2v1m0 1v1m0 2v1m0 1v1m0 2v1m0 2v1m0 1v1m0 2v1M524.5 305v1m0 18v1m0 21v1m0 30v2m0 1v1m0 179v1m0 4v1m0 2v1m0 1v1m0 2v1m0 1v1m0 2v1m0 2v1m0 1v1m0 2v1m0 1v2m0 2v4m0 1v2m0 1v4m0 1v2m0 1v1m0 1v2m0 1v1m0 1v2m0 1v2m0 1v1m0 1v2m0 1v1m0 1v2m0 1v2m0 1v1m0 1v2m0 1v1m0 2v1m0 1v1m0 20v1m0 2v1m0 1v1m0 2v1m0 1v2m0 1v1m0 10v1m0 3v1m0 3v2m0 4v1m0 1v1m0 2v1m0 2v1m0 1v1m0 2v1m0 1v1m0 2v1M527.5 198v1m0 11v1m0 11v1m0 11v1m0 26v1m0 28v1m0 35v1m0 21v2m0 32v1m0 2v1M528.5 251v1m0 13v1m0 9v1m0 31v1m0 4v2m0 12v1m0 5v2m0 24v1m0 24v2m0 1v1m0 1v1m0 21v1m0 3v1m0 1v1m0 1v1m0 3v1m0 77v2m0 1v1m0 1v2m0 1v28m0 3v1M529.5 197v1m0 15v1m0 2v1m0 8v1m0 12v1m0 8v1m0 27v1m0 3v2m0 14v1m0 11v1m0 17v2m0 20v2m0 8v2m0 9v1m0 8v1m0 1v2m0 57v1m0 1v1m0 1v1m0 1v15m0 4v2m0 1v1m0 1v1m0 193v2m0 1v4m0 1v3m0 1v1m0 2v1m0 1v2m0 1v1m0 2v1m0 1v1M530.5 199v1m0 1v1m0 8v1m0 2v1m0 8v1m0 2v1m0 9v1m0 2v1m0 2v1m0 19v1m0 17v1m0 11v1m0 3v1m0 35v2m0 22v1m0 22v1m0 2v1m0 15v1m0 1v1m0 1v1m0 1v1m0 1v1m0 1v1m0 1v1m0 1v11m0 1v1m0 1v1m0 1v1m0 1v1m0 1v1m0 1v1m0 1v2m0 1v1m0 1v1m0 1v1m0 1v1m0 1v1m0 1v1m0 2v1m0 1v1m0 1v1m0 1v1m0 133v1m0 2v1m0 1v29m0 1v4m0 1v1m0 41v1m0 2v1m0 1v1m0 2v1m0 6v2m0 3v1m0 3v1m0 3v1m0 1v1m0 1v2m0 1v1m0 1v2m0 1v1m0 2v1m0 1v2m0 1v1m0 1v2M531.5 241v1m0 9v1m0 13v1m0 17v1m0 28v2m0 3v1m0 38v2m0 7v1m0 2v1m0 33v1m0 1v1m0 1v1m0 1v1m0 1v1m0 1v6m0 1v3m0 8v1m0 1v1m0 1v1m0 2v1m0 1v1m0 1v1m0 1v1m0 1v1m0 59v1m0 1v1m0 2v1m0 1v1m0 1v2m0 1v1m0 1v2m0 1v1m0 1v2m0 1v1m0 1v2m0 1v1m0 1v2m0 1v4m0 2v2m0 1v1m0 2v1m0 1v1m0 2v1m0 4v1m0 2v1m0 1v1m0 2v1M532.5 339v1m0 26v2m0 124v1m0 1v1m0 4v1m0 1v1m0 2v1m0 1v1m0 1v2m0 1v1m0 1v3m0 1v1m0 1v2m0 1v1m0 1v2m0 1v1m0 1v2m0 1v1m0 1v2m0 1v1m0 1v2m0 1v1m0 2v1m0 1v2m0 1v1m0 93v1m0 1v1m0 2v1m0 1v2m0 1v1m0 1v2m0 1v1m0 2v1m0 1v2m0 1v1m0 1v2m0 2v2m0 3v1m0 3v1m0 3v2m0 1v1m0 2v1m0 1v1m0 2v1M533.5 627v1m0 1v1m0 2v1m0 4v1m0 2v1m0 1v1m0 2v1m0 1v2m0 1v1m0 2v1m0 1v1m0 3v3m0 11v2m0 3v1m0 3v1m0 3v2m0 9v1m0 1v2m0 1v1m0 2v1m0 1v1m0 2v1m0 4v1m0 2v1m0 1v1m0 2v1m0 1v2M535.5 197v1m0 63v1m0 13v1m0 31v2m0 40v1m0 35v1m0 1v1m0 1v1m0 2v1m0 1v1m0 1v1M536.5 199v1m0 10v1m0 2v1m0 8v1m0 2v1m0 9v1m0 2v1m0 12v1m0 13v1m0 14v1m0 10v1m0 3v2m0 16v1m0 13v1m0 5v2m0 15v2m0 7v1m0 28v1m0 1v2m0 1v1m0 1v1m0 1v1m0 1v1m0 1v1m0 1v1m0 1v1m0 1v1m0 1v1m0 1v1m0 1v1m0 10v1m0 1v1m0 1v1m0 123v2m0 1v4m0 1v29m0 1v1m0 2v1M537.5 198v1m0 10v2m0 10v2m0 10v1m0 11v1m0 1v1m0 11v1m0 5v1m0 7v1m0 1v1m0 13v1m0 15v1m0 1v1m0 15v1m0 1v2m0 18v1m0 1v2m0 11v2m0 13v1m0 1v1m0 1v1m0 1v2m0 1v1m0 95v1m0 1v1m0 2v28m0 1v2m0 1v1m0 1v2m0 154v1m0 1v2m0 1v1m0 1v2m0 7v1m0 2v1m0 2v1m0 1v2m0 1v1M540.5 370v1m0 169v1m0 2v1m0 1v1m0 2v1m0 4v1m0 2v1m0 1v1m0 2v1m0 1v2m0 1v1m0 2v1m0 1v1m0 2v1m0 1v3m0 1v2m0 1v4m0 1v4m0 1v2m0 1v1m0 1v2m0 1v4m0 1v2m0 1v1m0 1v2m0 1v2m0 1v1m0 1v2m0 1v1m0 1v2m0 1v1m0 2v1m0 1v2m0 1v1m0 1v2m0 1v1m0 2v1m0 1v2m0 1v1m0 1v2m0 1v1m0 2v1m0 1v2m0 1v1m0 1v2m0 1v1m0 2v1m0 1v2m0 3v1m0 4v1m0 6v2m0 1v1m0 1v2m0 1v1m0 2v1M542.5 261v1m0 128v2m0 1v1M543.5 213v1m0 37v1m0 43v1m0 17v1m0 19v1m0 16v1m0 8v1m0 30v1m0 1v1m0 20v1m0 3v1m0 1v1m0 1v1m0 3v1m0 1v1m0 119v1m0 1v1m0 1v2m0 1v29m0 1v1m0 2v1M544.5 213v1m0 2v1m0 8v1m0 12v1m0 22v1m0 17v1m0 15v1m0 4v1m0 17v1m0 14v1m0 6v1m0 18v2m0 11v2m0 103v1m0 1v31m0 1v4m0 159v1m0 1v2m0 1v1m0 1v2m0 7v2m0 1v1m0 2v1m0 1v1M545.5 213v1m0 27v1m0 6v1m0 2v1m0 12v1m0 19v1m0 10v1m0 4v1m0 7v1m0 3v1m0 27v1m0 15v2m0 13v2m0 35v1m0 1v1m0 1v1m0 1v1m0 1v1m0 1v1m0 1v1m0 1v1m0 4v1m0 1v1m0 5v1m0 1v1m0 1v1m0 1v2m0 1v1m0 1v1m0 1v1m0 1v6m0 1v1m0 4v2m0 1v1m0 1v1m0 1v1m0 1v2m0 1v1m0 1v1m0 1v1m0 2v1m0 1v1m0 155v1m0 1v1m0 1v32m0 2v1m0 3v1m0 3v2m0 1v1m0 2v1m0 1v1m0 2v1m0 1v2m0 1v1m0 2v1m0 1v1m0 2v1m0 4v1m0 2v1m0 1v1m0 2v1M546.5 204v1m0 8v1m0 2v1m0 8v1m0 2v1m0 9v1m0 12v1m0 2v1m0 13v1m0 10v2m0 14v2m0 41v1m0 18v2m0 7v1m0 1v2m0 58v1m0 1v1m0 1v1m0 1v1m0 1v1m0 1v1m0 1v5m0 1v1m0 1v1m0 1v4m0 1v1m0 1v1m0 4v3m0 1v1m0 1v1m0 1v1m0 2v1m0 1v1m0 1v1m0 2v1m0 1v1m0 1v1m0 43v1m0 1v2m0 1v1m0 1v2m0 1v1m0 1v2m0 1v1m0 1v2m0 1v4m0 1v2m0 1v1m0 1v2m0 1v4m0 1v2m0 1v4m0 1v3m0 1v1m0 2v1m0 1v1m0 2v1m0 1v2m0 1v1m0 2v1m0 1v1m0 2v1m0 4v1m0 2v1m0 4v1M547.5 241v1m0 42v1m0 54v2m0 28v2m0 1v1m0 9v1m0 1v1m0 144v1m0 2v1m0 1v1m0 2v1m0 1v1m0 2v1m0 1v1m0 2v1m0 1v2m0 2v2m0 1v4m0 1v4m0 1v2m0 1v1m0 1v2m0 1v4m0 1v2m0 1v1m0 1v2m0 1v1m0 2v1m0 1v2m0 1v1m0 1v2m0 1v1m0 2v1m0 1v2m0 1v1m0 2v1m0 1v1m0 49v1m0 1v1m0 2v1m0 1v2m0 1v1m0 10v1m0 3v1m0 3v2m0 4v1m0 1v1m0 2v1m0 4v1M548.5 682v1m0 2v1m0 4v1M550.5 198v1m0 11v1m0 11v1m0 38v1m0 13v1m0 15v1m0 16v1m0 18v1m0 23v1m0 47v1m0 1v6m0 1v1m0 1v1m0 1v1m0 1v1m0 7v1m0 3v1m0 1v1m0 1v6m0 1v1m0 1v1m0 1v1m0 1v1m0 1v4m0 1v9m0 3v17m0 1v1M551.5 210v1m0 2v1m0 8v1m0 2v1m0 12v1m0 12v1m0 9v1m0 3v1m0 25v1m0 21v1m0 13v1m0 6v1m0 16v1m0 9v2m0 44v1m0 1v3m0 1v1m0 1v1m0 1v1m0 4v1m0 3v1m0 1v1m0 1v1m0 1v2m0 173v2m0 1v4m0 1v29m0 1v1m0 2v1M552.5 198v1m0 11v1m0 2v1m0 8v1m0 24v1m0 3v1m0 13v1m0 3v1m0 5v1m0 8v1m0 22v1m0 5v1m0 5v1m0 14v1m0 7v1m0 6v2m0 11v1m0 14v2m0 13v1m0 1v1m0 139v1m0 1v1m0 1v29m0 1v2m0 1v4m0 103v1m0 1v1m0 2v1m0 2v1m0 7v1m0 3v1m0 1v1m0 1v2m0 1v1m0 1v2m0 1v1m0 2v1m0 1v2m0 1v1m0 2v1M553.5 199v1m0 1v1m0 8v1m0 11v1m0 2v1m0 9v1m0 2v1m0 30v1m0 9v1m0 4v1m0 6v1m0 3v1m0 23v1m0 7v1m0 5v1m0 8v1m0 7v2m0 7v2m0 15v4m0 12v2m0 1v1m0 1v1m0 1v1m0 3v1m0 1v1m0 1v1m0 1v1m0 1v1m0 1v1m0 1v1m0 1v1m0 1v1m0 1v1m0 6v1m0 1v1m0 1v1m0 1v1m0 1v1m0 17v1m0 1v1m0 1v1m0 4v1m0 1v1m0 1v1m0 1v1m0 2v1m0 1v1m0 1v1m0 1v2m0 1v1m0 1v1m0 1v2m0 1v1m0 1v4m0 1v1m0 2v2m0 1v1m0 1v1m0 2v1m0 1v1m0 2v1m0 1v1m0 4v1M554.5 241v1m0 23v1m0 17v2m0 54v1m0 20v2m0 7v1m0 1v2m0 1v1m0 89v1m0 1v1m0 1v1m0 2v1m0 1v1m0 1v1m0 1v1m0 2v1m0 1v1m0 2v4m0 1v4m0 1v1m0 1v4m0 1v1m0 1v2m0 1v1m0 1v2m0 1v1m0 1v1m0 2v1m0 1v1m0 1v2m0 1v1m0 45v2m0 1v1m0 1v2m0 1v1m0 2v1m0 1v2m0 1v1m0 1v2m0 1v1m0 2v1m0 1v2m0 1v1m0 1v2m0 1v4m0 1v2m0 1v1m0 1v2m0 1v4m0 1v2m0 1v1m0 1v2m0 1v5m0 2v1m0 1v1m0 2v1m0 1v2m0 1v1m0 2v1m0 1v1m0 2v1m0 4v1m0 2v1m0 1v1m0 2v1M555.5 205v1m0 23v1m0 25v1m0 13v1m0 14v1m0 16v1m0 70v1m0 2v1m0 1v1m0 199v1m0 4v1m0 2v1m0 1v1m0 2v1m0 4v1m0 2v1m0 1v1m0 2v1m0 1v2m0 1v1m0 2v1m0 1v3m0 1v4m0 1v2m0 1v1m0 1v2m0 1v4m0 1v2m0 1v1m0 1v2m0 1v4m0 1v2m0 1v1m0 1v2m0 1v1m0 2v1m0 1v2m0 1v1m0 1v2m0 1v1m0 2v1m0 1v2m0 3v1m0 8v1m0 7v2m0 1v1m0 2v1m0 1v1m0 2v1m0 4v1m0 2v1m0 1v1m0 2v1M558.5 203v1m0 11v1m0 11v1m0 11v1m0 13v1m0 11v1m0 1v1m0 13v1m0 15v1m0 17v1m0 19v1m0 1v1m0 23v1m0 1v1m0 1v1m0 1v1m0 2v1M559.5 205v1m0 11v1m0 11v1m0 10v2m0 1v2m0 10v1m0 13v1m0 1v1m0 10v2m0 1v1m0 13v1m0 1v1m0 1v2m0 12v1m0 1v1m0 1v1m0 16v2m0 1v1m0 1v1m0 1v1m0 22v1m0 2v1m0 1v1m0 1v1m0 1v1m0 1v1m0 1v1m0 1v1m0 1v1m0 1v1m0 1v1m0 1v1m0 1v1m0 13v1m0 1v1m0 3v1m0 5v40m0 3v5m0 1v1M560.5 196v1m0 10v1m0 1v1m0 9v1m0 1v1m0 9v1m0 1v1m0 6v1m0 4v1m0 1v1m0 11v1m0 13v1m0 1v1m0 6v1m0 6v1m0 1v1m0 13v1m0 1v1m0 8v1m0 8v1m0 1v1m0 1v1m0 7v1m0 8v1m0 2v1m0 1v1m0 1v1m0 1v1m0 9v2m0 23v1m0 1v1m0 1v1m0 1v1m0 1v1m0 1v1m0 1v1m0 1v1m0 1v1m0 1v1m0 1v1m0 2v1m0 5v1m0 1v1m0 1v2m0 1v1m0 1v1m0 1v1m0 165v2m0 1v4m0 1v29m0 1v1m0 2v1M561.5 234v1m0 5v1m0 16v1m0 29v1m0 34v1m0 14v1m0 7v1m0 10v1m0 9v2m0 13v6m0 136v1m0 3v29m0 1v2m0 1v4m0 116v1m0 1v1m0 4v2m0 7v1m0 2v1m0 2v1m0 1v2m0 1v1m0 2v1m0 1v1m0 2v1m0 1v1m0 2v1M562.5 196v2m0 33v1m0 2v1m0 12v1m0 9v1m0 29v1m0 16v1m0 4v1m0 19v1m0 15v2m0 8v1m0 27v6m0 28v1m0 1v1m0 1v1m0 1v1m0 1v1m0 1v1m0 1v1m0 32v1m0 1v1m0 1v2m0 1v1m0 1v1m0 1v1m0 2v1m0 1v1m0 1v1m0 1v2m0 1v1m0 1v1m0 1v2m0 1v1m0 1v4m0 2v1m0 2v1m0 1v1m0 1v2m0 1v1m0 1v1m0 2v1M563.5 309v1m0 19v1m0 25v1m0 94v1m0 1v1m0 1v1m0 1v2m0 5v1m0 1v5m0 1v1m0 1v4m0 1v1m0 1v1m0 1v2m0 1v1m0 1v1m0 2v1m0 1v1m0 1v1m0 2v1m0 1v1m0 2v1m0 80v1m0 1v1m0 2v1m0 1v2m0 1v1m0 2v1m0 1v2m0 1v1m0 1v2m0 1v1m0 2v1m0 1v2m0 1v1m0 1v2m0 1v4m0 1v4m0 1v2m0 1v4m0 2v2m0 1v1m0 2v1m0 1v2m0 1v1m0 2v1m0 1v1m0 2v1m0 4v1m0 4v1m0 2v1M564.5 558v1m0 4v1m0 2v1m0 4v1m0 2v1m0 1v1m0 2v1m0 1v2m0 1v1m0 1v3m0 1v2m0 1v4m0 1v2m0 1v1m0 1v2m0 1v4m0 1v2m0 1v1m0 1v2m0 1v1m0 2v1m0 1v2m0 1v1m0 1v2m0 1v1m0 2v1m0 1v1m0 2v1m0 1v2m0 22v1m0 1v2m0 1v1m0 2v1m0 1v1m0 2v1m0 1v2m0 6v2m0 3v1m0 3v2m0 3v2m0 1v1m0 2v1m0 1v2m0 1v1m0 2v1m0 1v1m0 2v1m0 1v2M565.5 217v1m0 24v1m0 41v1m0 15v1m0 17v1m0 20v1m0 27v1M566.5 217v1m0 15v1m0 8v1m0 26v1m0 19v1m0 34v2m0 13v2m0 26v2m0 13v1m0 1v4m0 1v1M567.5 198v1m0 1v1m0 11v1m0 4v1m0 6v1m0 8v1m0 12v1m0 22v1m0 4v1m0 3v1m0 10v1m0 4v1m0 11v1m0 41v1m0 9v2m0 25v4m0 1v1m0 1v1m0 1v1m0 1v1m0 22v1m0 1v1m0 1v1m0 1v1m0 1v1m0 110v2m0 1v4m0 1v29m0 1v1m0 2v1M568.5 206v1m0 1v1m0 3v1m0 4v2m0 11v1m0 1v2m0 10v1m0 5v1m0 5v1m0 1v2m0 4v1m0 5v1m0 1v1m0 13v1m0 1v2m0 4v1m0 7v1m0 1v1m0 7v1m0 7v1m0 1v1m0 9v1m0 7v1m0 1v1m0 1v1m0 23v1m0 1v1m0 1v1m0 1v1m0 4v1m0 90v28m0 1v1m0 1v2m0 1v1m0 1v1m0 164v1m0 2v1m0 1v1m0 2v1m0 1v2m0 3v1m0 3v2m0 1v1m0 2v1m0 1v1m0 2v1M569.5 210v1m0 11v1m0 10v2m0 1v1m0 11v1m0 13v1m0 13v1m0 12v2m0 1v1m0 15v1m0 1v2m0 14v1m0 1v1m0 2v1m0 15v2m0 1v1m0 1v1m0 1v1m0 24v1m0 1v1m0 4v1m0 1v1m0 1v1m0 1v1m0 1v1m0 1v1m0 1v1m0 1v1m0 1v1m0 1v1m0 1v1m0 1v1m0 1v1m0 3v1m0 7v8m0 6v1m0 1v1m0 1v4m0 1v1m0 1v1m0 1v1m0 1v1m0 1v2m0 1v1m0 1v1m0 3v1m0 2v1m0 1v1m0 1v1m0 161v1m0 1v1m0 1v27m0 1v2m0 1v1m0 1v2m0 1v1m0 1v2m0 1v2m0 3v2m0 3v1m0 3v1m0 5v1m0 1v2m0 1v1m0 2v1m0 1v1m0 2v1m0 1v1m0 2v1m0 2v1m0 1v1m0 2v1m0 1v1M570.5 237v2m0 41v1m0 15v1m0 34v1m0 2v1m0 22v2m0 1v1m0 1v1m0 67v1m0 1v1m0 1v1m0 1v1m0 1v1m0 1v1m0 1v2m0 1v1m0 1v1m0 1v1m0 1v5m0 1v1m0 5v2m0 1v1m0 1v1m0 1v4m0 1v1m0 1v1m0 1v2m0 1v1m0 1v1m0 1v2m0 1v1m0 1v1m0 1v2m0 1v1m0 1v1m0 2v1m0 1v1m0 1v2m0 1v1m0 1v2m0 1v1m0 1v1m0 2v1m0 1v1m0 2v1m0 1v4m0 1v4m0 1v2m0 1v1m0 1v2m0 1v1m0 1v2m0 2v2m0 1v1m0 2v1m0 1v1m0 2v1m0 1v2m0 1v1m0 2v1m0 1v1m0 2v1m0 4v1m0 2v1m0 1v1m0 2v1m0 4v1M571.5 529v1m0 4v1m0 2v1m0 1v1m0 2v1m0 1v1m0 2v1m0 1v2m0 1v1m0 2v1m0 1v1m0 2v1m0 1v3m0 1v4m0 1v2m0 1v4m0 1v2m0 1v1m0 1v2m0 1v4m0 1v2m0 1v1m0 1v2m0 1v2m0 1v1m0 1v2m0 1v1m0 1v2m0 1v1m0 2v1m0 1v2m0 1v1m0 1v2m0 1v1m0 2v1m0 1v2m0 1v1m0 1v2m0 1v1m0 2v1m0 1v2m0 1v1m0 1v2m0 1v1m0 2v1m0 1v2m0 1v1m0 1v2m0 1v1m0 2v1m0 1v2m0 3v1m0 3v2m0 3v1m0 5v1m0 1v2m0 1v1m0 2v1m0 1v1M572.5 682v1M573.5 204v1m0 11v1m0 11v1m0 24v2m0 12v1m0 14v1m0 14v2m0 16v1m0 43v2m0 42v1m0 1v1m0 1v1m0 1v1m0 1v1m0 1v1m0 1v1m0 1v1m0 1v1m0 1v1m0 1v2m0 1v1m0 1v1m0 1v1m0 3v1m0 1v1m0 1v1m0 1v2m0 1v1m0 1v1m0 1v1m0 10v1m0 3v2m0 1v28m0 1v1m0 1v1M574.5 208v1m0 11v1m0 11v1m0 8v1m0 45v1m0 15v2m0 10v1m0 5v2m0 11v2m0 7v2m0 16v1m0 9v1m0 1v2m0 39v1m0 1v1m0 1v1m0 1v1m0 1v1m0 1v2m0 1v1m0 1v1m0 1v1m0 4v1m0 1v1m0 1v2m0 1v1m0 1v1m0 172v3m0 1v2m0 1v1m0 1v27m0 1v1M575.5 197v1m0 42v1m0 4v1m0 12v1m0 8v1m0 4v2m0 40v1m0 18v1m0 22v2m0 14v2m0 1v1m0 16v6m0 1v1m0 148v1m0 2v31m0 1v2m0 1v1m0 90v1m0 2v1m0 1v1m0 4v2m0 3v1m0 3v2m0 1v1m0 2v1m0 1v2m0 1v1m0 1v2m0 1v1m0 2v1m0 1v2m0 1v1M576.5 204v1m0 11v1m0 11v1m0 15v1m0 9v1m0 3v1m0 9v1m0 3v1m0 14v1m0 10v1m0 4v1m0 11v1m0 5v1m0 12v1m0 7v1m0 15v1m0 9v2m0 27v1m0 1v17m0 7v1m0 1v1m0 1v1m0 1v1m0 1v1m0 4v1m0 1v1m0 1v1m0 1v1m0 1v1m0 1v1m0 2v1m0 1v1m0 1v1m0 1v1m0 1v2m0 3v1m0 1v1m0 1v2m0 1v1m0 1v1m0 1v1m0 2v1m0 1v1m0 1v1m0 1v2m0 1v1m0 1v1m0 1v2m0 1v1m0 1v4m0 1v1m0 2v2m0 1v1m0 1v2m0 1v1m0 1v1m0 2v1m0 1v1m0 2v1m0 1v1m0 2v1m0 1v1M577.5 197v2m0 9v1m0 11v1m0 11v1m0 12v1m0 42v1m0 15v1m0 17v1m0 20v1m0 26v3m0 11v2m0 86v1m0 4v1m0 1v1m0 1v1m0 2v1m0 1v1m0 1v1m0 2v1m0 1v1m0 1v2m0 1v1m0 2v2m0 1v1m0 1v4m0 1v1m0 1v2m0 1v1m0 1v2m0 1v1m0 1v2m0 1v1m0 1v2m0 1v1m0 1v2m0 1v1m0 1v2m0 1v1m0 2v1m0 1v2m0 1v1m0 1v2m0 1v1m0 1v2m0 1v2m0 1v1m0 1v2m0 1v1m0 1v2m0 1v2m0 1v1m0 1v2m0 1v1m0 1v2m0 1v2m0 1v1m0 1v2m0 1v1m0 1v2m0 1v2m0 1v1m0 1v2m0 1v1m0 1v2m0 1v2m0 1v1m0 1v2m0 1v1m0 1v2m0 1v4m0 1v2m0 1v5m0 1v2m0 1v1m0 2v1m0 1v1m0 2v1m0 2v1m0 1v1m0 2v1m0 1v1m0 2v1m0 2v1m0 1v1m0 2v1M578.5 597v1m0 4v1m0 2v1m0 1v1m0 2v1m0 2v1m0 1v1m0 2v1m0 1v1m0 2v1m0 2v1m0 1v1m0 2v1m0 1v3m0 1v4m0 1v2m0 1v4m0 1v2m0 1v1m0 1v2m0 1v1m0 1v2m0 1v2m0 1v1m0 1v2m0 3v1m0 3v1m0 7v2m0 4v1m0 1v1m0 2v1m0 1v1m0 2v1m0 2v1m0 1v1m0 2v1m0 1v1m0 2v1m0 2v1M580.5 215v1m0 11v1m0 24v2m0 26v2m0 30v2m0 16v1m0 21v1m0 29v1m0 1v1m0 2v1M581.5 203v2m0 1v1m0 9v1m0 1v1m0 9v1m0 1v1m0 9v1m0 1v1m0 1v1m0 9v1m0 1v1m0 11v1m0 1v1m0 11v1m0 1v1m0 1v2m0 10v1m0 1v1m0 1v2m0 10v1m0 1v1m0 1v1m0 12v2m0 1v1m0 1v1m0 1v1m0 14v1m0 2v1m0 1v1m0 1v1m0 1v1m0 1v1m0 20v1m0 2v1m0 1v1m0 1v1m0 1v1m0 1v1m0 1v1m0 1v1m0 1v1m0 1v1m0 1v1m0 5v1m0 1v1m0 1v1m0 1v1m0 1v1m0 6v1m0 1v1m0 1v1m0 1v1m0 1v1m0 1v1m0 4v1m0 1v1m0 1v1m0 1v1m0 1v1m0 19v2m0 1v1m0 1v1m0 1v28m0 2v1M585.5 377v2m0 101v1m0 4v1m0 1v1m0 2v1m0 1v1m0 1v1m0 2v1m0 1v1m0 1v2m0 2v4m0 1v1m0 1v2m0 1v1m0 1v2m0 1v1m0 1v4m0 1v1m0 2v1m0 1v2m0 1v1m0 1v2m0 1v1m0 1v2m0 1v1m0 2v1m0 1v1m0 2v1m0 1v2m0 1v1m0 2v1m0 1v1m0 2v1m0 1v2m0 1v1m0 2v1m0 1v1m0 2v1m0 1v2m0 1v1m0 2v1m0 1v1m0 2v1m0 1v2m0 1v1m0 1v2m0 1v1m0 2v1m0 1v2m0 1v1m0 1v2m0 1v1m0 2v1m0 1v2m0 1v1m0 1v2m0 1v4m0 1v2m0 1v1m0 1v2m0 1v4m0 1v2m0 1v3m0 3v2m0 1v1m0 2v1m0 1v1m0 2v1m0 1v2m0 1v1m0 2v1m0 1v1m0 2v1M586.5 601v1m0 4v1m0 2v1m0 1v1m0 2v1m0 4v1m0 2v1m0 1v1m0 2v1m0 1v2m0 1v1m0 2v1m0 1v2m0 2v4m0 1v2m0 1v4m0 1v4m0 1v2m0 1v1m0 1v2m0 1v2m0 4v1m0 3v1m0 3v2m0 6v2m0 1v1m0 1v2m0 1v1m0 2v1m0 1v1m0 2v1m0 4v1m0 2v1m0 1v1m0 2v1M587.5 409v1M588.5 215v1m0 36v2m0 12v1m0 13v2m0 30v1m0 17v2m0 46v1m0 1v2m0 28v1m0 1v1m0 1v1m0 1v1m0 1v1m0 1v1m0 1v1m0 1v1m0 6v1m0 1v1m0 1v1m0 1v1m0 1v1m0 6v1m0 1v1m0 1v1m0 72v1m0 1v1m0 2v1m0 1v2m0 1v1m0 1v2m0 1v1m0 1v2m0 1v1m0 1v2m0 1v1m0 1v2m0 1v2m0 1v1m0 1v11m0 1v1m0 2v1m0 1v2m0 1v1m0 2v1m0 1v1m0 2v1M589.5 203v1m0 4v1m0 11v1m0 6v1m0 4v1m0 7v1m0 17v1m0 13v1m0 22v2m0 5v1m0 17v1m0 30v2m0 26v2m0 1v1m0 15v1m0 1v1m0 1v1m0 1v1m0 80v1m0 2v1m0 1v1m0 4v1m0 1v1m0 2v1m0 1v1m0 1v2m0 1v12m0 1v4m0 1v4m0 1v4m0 1v2m0 1v1m0 1v2m0 1v1m0 1v2m0 1v1m0 2v1m0 1v2m0 110v1m0 2v1m0 1v2m0 1v1m0 1v2m0 7v1m0 2v1m0 2v1m0 1v2m0 1v1M590.5 199v1m0 1v1m0 9v1m0 1v1m0 9v1m0 1v1m0 9v1m0 1v1m0 1v1m0 5v1m0 3v1m0 1v1m0 9v1m0 1v1m0 1v2m0 8v1m0 1v1m0 1v1m0 7v1m0 3v1m0 1v1m0 1v2m0 10v1m0 1v1m0 1v2m0 10v1m0 1v1m0 1v1m0 1v2m0 8v1m0 3v1m0 1v1m0 1v1m0 1v2m0 12v1m0 3v1m0 1v1m0 1v1m0 1v1m0 1v2m0 24v1m0 1v1m0 5v1m0 8v1m0 1v1m0 1v1m0 1v1m0 5v1m0 3v5m0 8v4m0 6v2m0 3v1m0 1v1m0 1v1m0 1v2m0 1v1m0 1v1m0 1v1m0 2v1m0 1v1m0 4v1m0 157v1m0 2v1m0 1v1m0 2v1m0 1v2m0 1v1m0 2v1m0 1v1m0 2v1m0 1v2m0 1v1m0 2v1m0 1v1m0 2v1m0 1v2m0 1v1m0 2v1m0 1v1m0 2v1m0 1v2m0 1v1m0 12v1m0 2v1m0 1v1m0 2v1m0 1v1M591.5 205v1m0 1v2m0 8v1m0 1v2m0 8v1m0 1v1m0 8v2m0 1v1m0 9v1m0 1v1m0 1v1m0 8v2m0 1v1m0 1v2m0 8v1m0 1v1m0 1v1m0 10v2m0 1v1m0 1v1m0 10v2m0 1v1m0 1v1m0 1v2m0 9v2m0 1v1m0 1v1m0 1v1m0 12v2m0 1v1m0 1v1m0 1v1m0 1v1m0 2v1m0 13v2m0 1v1m0 1v1m0 1v1m0 1v1m0 1v1m0 1v1m0 1v1m0 1v2m0 1v1m0 47v1m0 1v1m0 4v1m0 1v1m0 1v1m0 1v2m0 8v2m0 7v2m0 5v2m0 1v1m0 1v1m0 1v2m0 1v1m0 1v1m0 2v1m0 1v1m0 1v2m0 1v1m0 1v1m0 2v1m0 1v1m0 2v1m0 1v1m0 1v2m0 1v1m0 1v2m0 1v1m0 1v2m0 1v1m0 1v2m0 1v3m0 3v1m0 4v1m0 3v1m0 3v2m0 6v2m0 1v1m0 1v2m0 1v1m0 2v1m0 1v1m0 2v1m0 4v1m0 2v1m0 1v1m0 2v1m0 4v1m0 2v1M592.5 208v1m0 11v1m0 99v1m0 41v2m0 30v1m0 1v2m0 1v1m0 1v1m0 1v1m0 137v1m0 2v1m0 1v1m0 2v1m0 1v1m0 2v1m0 1v2m0 1v1m0 2v1m0 1v1m0 2v1m0 1v2m0 1v1m0 2v1m0 1v2m0 3v2m0 6v2m0 3v2m0 3v1m0 3v2m0 1v4m0 1v2m0 1v1m0 1v2m0 1v1m0 2v1m0 1v2m0 1v1m0 1v2m0 1v1m0 2v1m0 1v2m0 1v1m0 1v2m0 1v1m0 2v1m0 1v2m0 1v1m0 1v2m0 1v1m0 2v1m0 1v2m0 3v1m0 3v2m0 6v2m0 1v1m0 1v2m0 1v1m0 2v1M595.5 241v1m0 12v1m0 12v2m0 13v1m0 14v1m0 15v1m0 17v1m0 19v2m0 24v2m0 39v1m0 3v1m0 1v1m0 1v1m0 1v1m0 1v1m0 1v1m0 2v1m0 1v1m0 1v1m0 1v1m0 3v1m0 1v2m0 1v1m0 5v1m0 1v1m0 6v1m0 1v2m0 5v2m0 6v2m0 1v1m0 1v1m0 1v2m0 1v1m0 1v1m0 2v1m0 1v1m0 1v2m0 1v1m0 1v1m0 2v1m0 1v1M596.5 196v3m0 17v1m0 11v1m0 12v1m0 5v1m0 6v1m0 34v1m0 7v1m0 7v1m0 7v1m0 8v1m0 8v1m0 9v1m0 10v1m0 12v1m0 11v3m0 17v3m0 38v1m0 1v1m0 1v1m0 1v1m0 1v2m0 1v1m0 1v1m0 1v1m0 2v3m0 6v1m0 1v2m0 3v1m0 1v1m0 2v1m0 1v1m0 1v1m0 2v1m0 1v1m0 1v1m0 2v1m0 1v1m0 4v1m0 1v1m0 2v1m0 1v1m0 4v1m0 1v1m0 2v1m0 1v1m0 2v1m0 1v1m0 2v1m0 1v1m0 2v1m0 1v1m0 2v1m0 1v1m0 2v1m0 2v1m0 1v1m0 2v1m0 1v1m0 2v1m0 1v1m0 2v1m0 2v1m0 1v1m0 2v1m0 1v1m0 2v1m0 2v1m0 1v1m0 2v1m0 1v1m0 2v1m0 2v1m0 1v1m0 2v1m0 1v1m0 2v1m0 2v1m0 1v1m0 2v1m0 1v2m0 1v1m0 2v1m0 2v1m0 3v2m0 3v1m0 3v2m0 3v2m0 1v2m0 1v1m0 1v2m0 1v1m0 2v1m0 1v1m0 2v1m0 2v1m0 1v1m0 2v1m0 1v1m0 2v1m0 4v1M597.5 201v1m0 1v2m0 5v1m0 2v1m0 1v2m0 5v1m0 2v1m0 1v2m0 8v1m0 1v1m0 11v1m0 1v2m0 8v1m0 1v1m0 8v1m0 2v1m0 1v1m0 1v2m0 6v1m0 3v1m0 1v1m0 9v1m0 3v1m0 1v1m0 10v1m0 2v1m0 1v1m0 1v2m0 10v1m0 3v1m0 1v1m0 2v1m0 13v2m0 3v1m0 1v1m0 2v1m0 23v2m0 5v1m0 4v1m0 1v1m0 1v1m0 1v1m0 1v1m0 151v1m0 1v1m0 2v1m0 2v1m0 1v1m0 2v1m0 1v2m0 1v1m0 1v2m0 1v1m0 1v1m0 3v1m0 3v2m0 3v1m0 3v1m0 3v1m0 3v2m0 1v1m0 2v1m0 1v1m0 2v1m0 1v2m0 1v1m0 2v1m0 1v1m0 2v1m0 1v2m0 1v1m0 2v1m0 1v1m0 2v1m0 1v1m0 2v1m0 2v1m0 1v1m0 2v1m0 1v1m0 5v1m0 1v1m0 4v2m0 3v1m0 3v1m0 4v2m0 1v2m0 1v1m0 1v2m0 1v1m0 2v1m0 1v1m0 2v1m0 1v2M598.5 196v1m0 1v1m0 6v1m0 1v1m0 1v2m0 5v2m0 1v1m0 1v2m0 6v1m0 1v1m0 1v1m0 9v1m0 1v1m0 8v2m0 1v1m0 1v1m0 8v2m0 1v1m0 1v2m0 7v2m0 1v1m0 1v1m0 11v1m0 1v1m0 1v1m0 11v1m0 1v1m0 1v1m0 10v2m0 1v1m0 1v1m0 1v1m0 1v2m0 9v2m0 1v1m0 1v1m0 1v1m0 1v1m0 1v2m0 11v2m0 1v1m0 1v1m0 1v1m0 1v1m0 1v1m0 1v1m0 1v2m0 1v1m0 19v1m0 1v1m0 1v1m0 1v1m0 1v1m0 1v7m0 11v2m0 1v1m0 7v1m0 2v1m0 7v2m0 7v2m0 5v2m0 5v2m0 5v2m0 5v1m0 5v2m0 1v1m0 1v2m0 1v1m0 1v1m0 2v1m0 1v1m0 2v1m0 1v1m0 2v1m0 1v1m0 2v1m0 4v1M599.5 210v1m0 11v1m0 99v1m0 17v2m0 20v2m0 1v1m0 26v1m0 2v1m0 1v1m0 1v1m0 91v1m0 2v1m0 1v1m0 1v1m0 2v1m0 1v1m0 2v1m0 1v1m0 4v1m0 1v1m0 2v1m0 1v2m0 3v2m0 4v1m0 4v1m0 3v2m0 3v1m0 3v1m0 4v1m0 3v1m0 3v1m0 4v1m0 3v1m0 3v1m0 4v1m0 3v1m0 3v1m0 4v1m0 3v1m0 3v1m0 4v1m0 3v1m0 3v1m0 4v1m0 3v1m0 7v2m0 3v2m0 1v1m0 2v1m0 1v1m0 2v1m0 2v1m0 1v1m0 2v1m0 1v1m0 2v1m0 2v1m0 1v1m0 2v1m0 1v1m0 2v1m0 4v1M600.5 613v1m0 2v1m0 4v1m0 2v1m0 1v1m0 2v1m0 1v1m0 2v1m0 2v1m0 1v1m0 2v1m0 1v1m0 2v1m0 2v1m0 1v1m0 2v1m0 1v2m0 3v2m0 7v1m0 3v1m0 7v2m0 1v1m0 2v1m0 1v1m0 2v1m0 1v1m0 2v1m0 2v1m0 1v1m0 2v1m0 12v1M602.5 207v1m0 11v1m0 11v1m0 11v2m0 54v2m0 14v1m0 17v1m0 19v1m0 25v2m0 37v1m0 1v1m0 1v1m0 1v1m0 1v1m0 7v4m0 6v1m0 1v1m0 1v2m0 1v1m0 1v1m0 1v1m0 1v1m0 4v1m0 1v1m0 1v1m0 1v2m0 1v1m0 1v1m0 1v2m0 1v1m0 1v1m0 1v1m0 2v1m0 1v1m0 4v1M603.5 197v1m0 15v1m0 5v1m0 5v1m0 25v1m0 5v1m0 12v2m0 12v2m0 7v1m0 7v1m0 7v1m0 6v2m0 7v1m0 8v2m0 9v1m0 8v2m0 11v1m0 1v1m0 11v1m0 17v1m0 1v1m0 19v1m0 1v1m0 1v1m0 1v1m0 1v1m0 1v1m0 1v1m0 1v2m0 1v1m0 1v1m0 1v1m0 4v4m0 3v1m0 3v1m0 8v1m0 2v1m0 1v1m0 1v1m0 2v1m0 1v1m0 1v1m0 4v1m0 1v1m0 2v1m0 3v1m0 2v1m0 4v1m0 3v1m0 4v1m0 2v1m0 4v1m0 4v1m0 4v1m0 11v1m0 5v1m0 4v1m0 1v1m0 5v1m0 4v1m0 6v2m0 3v1m0 3v1m0 3v1m0 3v2m0 1v1m0 1v2m0 1v1m0 2v1m0 1v2m0 1v1m0 1v2m0 1v1m0 2v1m0 1v1m0 2v1m0 2v1m0 1v1m0 2v1m0 1v1m0 2v1m0 2v1m0 1v1m0 2v1M604.5 202v1m0 4v1m0 11v1m0 11v1m0 6v1m0 4v2m0 19v1m0 13v1m0 20v2m0 14v2m0 9v1m0 24v1m0 16v1m0 6v2m0 23v1m0 1v1m0 4v1m0 4v1m0 1v1m0 1v1m0 129v1m0 2v1m0 1v1m0 2v1m0 1v2m0 1v1m0 2v1m0 1v2m0 1v1m0 1v2m0 1v2m0 1v1m0 1v2m0 1v1m0 1v2m0 1v2m0 3v2m0 3v1m0 3v1m0 4v1m0 3v1m0 3v2m0 11v2m0 4v1m0 1v1m0 5v1m0 4v1m0 1v1m0 5v1m0 4v1m0 1v1m0 4v2m0 4v1m0 1v1m0 5v1m0 4v1m0 1v1m0 4v1m0 3v2m0 1v1m0 2v1m0 1v1m0 2v1m0 1v1m0 2v1m0 2v1m0 1v1M605.5 197v1m0 15v1m0 5v1m0 5v1m0 25v1m0 5v1m0 12v2m0 12v2m0 7v1m0 7v1m0 7v1m0 7v1m0 7v2m0 5v2m0 9v1m0 8v2m0 11v2m0 7v1m0 2v1m0 15v1m0 2v1m0 11v1m0 1v1m0 2v1m0 1v1m0 1v1m0 1v1m0 1v1m0 1v1m0 8v1m0 1v1m0 1v1m0 1v1m0 1v1m0 4v1m0 1v1m0 1v1m0 1v1m0 4v1m0 5v1m0 2v1m0 5v1m0 2v1m0 6v1m0 6v1m0 5v1m0 5v2m0 1v1m0 1v2m0 1v1m0 1v1m0 2v1m0 1v1m0 2v1m0 1v1m0 2v1m0 1v1M606.5 202v1m0 35v1m0 25v1m0 13v1m0 30v1m0 34v2m0 21v1m0 26v2m0 1v1m0 70v1m0 1v1m0 2v1m0 1v1m0 1v1m0 1v2m0 1v1m0 3v2m0 5v2m0 5v1m0 4v2m0 4v2m0 3v2m0 3v1m0 4v1m0 4v2m0 3v2m0 4v1m0 6v1m0 4v2m0 6v1m0 4v2m0 6v1m0 4v1m0 8v1m0 3v1m0 3v2m0 3v1m0 7v2m0 3v2m0 6v2m0 3v2m0 6v2m0 3v2m0 1v1m0 2v1m0 1v2m0 1v1m0 2v1m0 1v1m0 2v1M607.5 574v1m0 4v1m0 2v1m0 4v1m0 2v1m0 1v1m0 2v1m0 4v1m0 2v1m0 1v1m0 2v1m0 1v2m0 1v1m0 1v2m0 6v2m0 3v1m0 3v1m0 8v1m0 3v2m0 6v2m0 3v1m0 8v1m0 3v2m0 6v1m0 4v2m0 3v1m0 3v2m0 1v1m0 2v1m0 4v1m0 2v1m0 1v1m0 2v1m0 1v2m0 1v1M609.5 205v1m0 11v1m0 11v1m0 11v1m0 12v1m0 12v2m0 12v2m0 13v2m0 14v1m0 16v2m0 17v2m0 20v3m0 28v4M610.5 196v2m0 7v1m0 11v1m0 11v1m0 12v1m0 11v2m0 12v1m0 13v1m0 14v1m0 14v2m0 15v2m0 17v2m0 21v2m0 28v5m0 10v1m0 3v1m0 1v1m0 1v1m0 1v1m0 1v1m0 8v1m0 1v1m0 1v1m0 1v1m0 8v1m0 3v1m0 8v1m0 2v1m0 6v1m0 5v1m0 6v2m0 4v2m0 5v2m0 3v2m0 4v1m0 1v1m0 1v1m0 2v1m0 1v1m0 2v1m0 1v1m0 2v1m0 1v1m0 2v1m0 1v1m0 2v1m0 1v1M611.5 203v1m0 11v1m0 11v1m0 11v1m0 2v1m0 8v1m0 1v1m0 11v1m0 1v2m0 10v1m0 1v2m0 10v1m0 1v1m0 13v1m0 1v2m0 12v1m0 1v1m0 15v1m0 1v1m0 19v1m0 2v1m0 25v1m0 1v1m0 65v1m0 1v1m0 1v2m0 1v1m0 1v1m0 1v3m0 5v2m0 5v2m0 4v2m0 4v1m0 7v1m0 3v2m0 3v2m0 4v1m0 3v1m0 4v1m0 4v1m0 5v1m0 6v1m0 4v2m0 11v2m0 6v1m0 5v1m0 6v1m0 5v1m0 6v1m0 5v1m0 11v2m0 3v1m0 3v1m0 2v1m0 2v1m0 1v2m0 1v1m0 1v2m0 1v1m0 2v1m0 1v2m0 3v1m0 3v1m0 1v1m0 1v2m0 1v1m0 1v2m0 1v1M612.5 196v1m0 2v1m0 7v1m0 1v1m0 1v1m0 7v1m0 1v1m0 1v1m0 7v1m0 1v1m0 1v1m0 7v1m0 1v1m0 1v1m0 1v1m0 4v2m0 1v1m0 1v1m0 1v1m0 7v1m0 1v1m0 1v1m0 1v1m0 7v1m0 1v1m0 1v1m0 1v1m0 6v1m0 2v1m0 1v1m0 1v1m0 1v1m0 6v2m0 1v1m0 1v1m0 1v1m0 1v1m0 6v1m0 2v1m0 1v1m0 1v1m0 1v1m0 1v1m0 6v1m0 2v1m0 1v1m0 1v1m0 1v1m0 1v1m0 1v1m0 2v1m0 6v1m0 1v1m0 1v1m0 1v1m0 1v1m0 1v1m0 1v1m0 1v1m0 2v1m0 7v1m0 2v1m0 1v1m0 1v1m0 1v1m0 1v1m0 5v1m0 1v1m0 1v1m0 1v1m0 1v1m0 1v1m0 1v4m0 2v1m0 1v1m0 1v1m0 1v1m0 1v1m0 1v1m0 2v1m0 1v1m0 1v1m0 1v1m0 142v1m0 1v1m0 2v1m0 1v1m0 2v1m0 1v2m0 1v1m0 2v1m0 1v2m0 1v1m0 1v2m0 1v1m0 2v1m0 1v2m0 1v1m0 1v2m0 1v1m0 2v1m0 1v2m0 1v1m0 1v2m0 2v1m0 4v1m0 7v2m0 6v1m0 4v2m0 2v2m0 3v1m0 3v1m0 3v2m0 1v1m0 1v2m0 1v1m0 2v1m0 4v1m0 2v1m0 1v1m0 2v1M613.5 340v1m0 19v1m0 23v1m0 2v1m0 1v1m0 35v1m0 1v1m0 1v1m0 8v1m0 1v2m0 1v1m0 7v1m0 2v1m0 10v1m0 1v1m0 1v1m0 2v1m0 3v1m0 15v2m0 6v1m0 4v1m0 3v1m0 5v2m0 3v2m0 1v1m0 1v2m0 3v2m0 3v2m0 3v2m0 1v1m0 2v1m0 1v1m0 2v1M614.5 501v1m0 1v1m0 2v1m0 1v1m0 2v1m0 1v1m0 4v1m0 1v1m0 2v1m0 1v1m0 2v1m0 1v2m0 8v1m0 4v1m0 3v1m0 3v2m0 7v1m0 3v2m0 3v1m0 3v1m0 7v2m0 3v2m0 6v2m0 3v2m0 6v2m0 3v2m0 7v1m0 3v1m0 3v2m0 11v2m0 3v1m0 3v1m0 8v1m0 3v1m0 3v2m0 1v1m0 2v1m0 1v1m0 2v1m0 4v1m0 2v1M615.5 639v1m0 2v1m0 4v1m0 2v1m0 1v1m0 4v2m0 7v1m0 3v2m0 4v1m0 1v1m0 2v1m0 1v2m0 6v1m0 2v1m0 1v1m0 2v1m0 12v1m0 2v1m0 1v1M616.5 196v3m0 48v2m0 24v2m0 12v2m0 14v2m0 14v2m0 16v2m0 16v1m0 23v2m0 31v1m0 1v2m0 1v1m0 1v1M617.5 210v2m0 10v2m0 11v1m0 19v1m0 4v2m0 12v2m0 12v2m0 31v1m0 15v1m0 1v1m0 16v2m0 1v1m0 20v2m0 1v1m0 15v1m0 13v4m0 1v1m0 1v1m0 1v1m0 1v1m0 1v1m0 1v1m0 1v1m0 8v1m0 1v1m0 1v1m0 1v1m0 4v1m0 1v1m0 1v1m0 1v1m0 6v1m0 1v1m0 4v1m0 1v1m0 4v1m0 3v1m0 2v1m0 3v1m0 2v1m0 1v1m0 6v1m0 2v1m0 3v3m0 1v1m0 1v2m0 18v2m0 1v1m0 2v1m0 1v1m0 2v1m0 1v1m0 2v1m0 1v2m0 1v1m0 2v1m0 1v1m0 2v1m0 1v2m0 1v1m0 2v1m0 1v1m0 2v1M618.5 196v1m0 1v1m0 10v2m0 8v1m0 1v2m0 10v2m0 10v1m0 11v1m0 2v1m0 10v1m0 2v1m0 10v1m0 2v1m0 10v1m0 1v1m0 13v1m0 2v1m0 14v1m0 2v1m0 14v1m0 2v1m0 18v1m0 2v1m0 25v1m0 1v1m0 82v1m0 2v1m0 1v1m0 1v1m0 2v1m0 1v1m0 1v2m0 1v1m0 1v1m0 2v1m0 1v1m0 2v1m0 1v1m0 1v2m0 18v2m0 1v1m0 2v1m0 2v1m0 7v1m0 5v1m0 6v1m0 5v1m0 6v1m0 5v1m0 6v1m0 4v1m0 7v1m0 5v1m0 6v1m0 5v1m0 6v1m0 5v1m0 6v2m0 3v1m0 1v1m0 1v2m0 1v1m0 2v1m0 2v1m0 7v2m0 3v1m0 1v1m0 1v2M619.5 201v1m0 1v1m0 1v1m0 7v1m0 1v1m0 1v1m0 7v1m0 1v1m0 1v1m0 7v1m0 1v1m0 1v1m0 6v2m0 1v1m0 1v1m0 9v1m0 1v1m0 1v1m0 6v1m0 2v1m0 1v1m0 1v1m0 6v1m0 2v1m0 1v1m0 1v1m0 1v1m0 6v2m0 1v1m0 1v1m0 1v1m0 9v1m0 1v1m0 1v1m0 1v1m0 8v1m0 2v1m0 1v1m0 1v1m0 1v1m0 2v1m0 5v1m0 2v1m0 1v1m0 1v1m0 1v1m0 1v1m0 2v1m0 7v1m0 2v1m0 1v1m0 1v1m0 1v1m0 1v1m0 1v1m0 1v1m0 2v1m0 1v1m0 7v1m0 1v2m0 1v1m0 1v1m0 1v1m0 1v1m0 1v1m0 1v1m0 1v1m0 1v1m0 4v1m0 1v1m0 8v1m0 1v2m0 1v1m0 1v1m0 1v1m0 1v1m0 1v1m0 2v1m0 1v1m0 8v1m0 1v1m0 153v1m0 1v1m0 2v1m0 1v2m0 1v1m0 2v1m0 1v1m0 2v1m0 1v2m0 1v1m0 2v1m0 1v1m0 2v1m0 4v1m0 2v1m0 1v1m0 8v2m0 3v1m0 3v2m0 1v1m0 2v1m0 1v1m0 2v1m0 1v2m0 1v1m0 2v1m0 1v1m0 2v1m0 1v1m0 10v1M620.5 348v1m0 21v1m0 25v1m0 2v1m0 48v1m0 1v1m0 4v1m0 1v1m0 5v2m0 1v1m0 3v4m0 4v2m0 6v2m0 4v2m0 5v2m0 4v2m0 1v1m0 1v2m0 1v1m0 1v2m0 4v2m0 3v2m0 3v1m0 3v1m0 2v1m0 4v1m0 4v1m0 2v1m0 1v1m0 2v1m0 2v1m0 1v1m0 2v1m0 1v1m0 2v1m0 2v1m0 1v1m0 2v1m0 4v1M621.5 548v1m0 2v1m0 1v1m0 2v1m0 1v2m0 6v2m0 3v2m0 6v2m0 3v2m0 6v2m0 3v2m0 7v1m0 3v1m0 4v1m0 3v1m0 3v1m0 4v1m0 3v1m0 3v1m0 4v1m0 3v1m0 3v2m0 1v1m0 2v1m0 1v1m0 2v1m0 2v1m0 7v1m0 3v2m0 4v1M622.5 668v1m0 4v1m0 2v1m0 1v1M623.5 197v1m0 1v1m0 8v1m0 1v2m0 8v1m0 1v2m0 8v1m0 1v2m0 8v1m0 1v2m0 8v1m0 1v1m0 1v2m0 8v1m0 1v1m0 11v1m0 1v1m0 11v1m0 1v1m0 1v2m0 10v1m0 1v1m0 1v2m0 10v1m0 1v1m0 1v1m0 13v1m0 1v1m0 1v1m0 1v2m0 14v1m0 1v1m0 1v1m0 2v1m0 16v1m0 1v1m0 1v1m0 1v1m0 1v1m0 2v1m0 29v1m0 1v1m0 4v1m0 1v1m0 1v1m0 1v1m0 4v1m0 1v1m0 1v1m0 4v1m0 5v1m0 2v1m0 5v2m0 5v2m0 6v1m0 4v2m0 1v1m0 1v1m0 2v1m0 1v1m0 1v2m0 3v2m0 3v2m0 1v1m0 1v1m0 12v1m0 4v1m0 2v1m0 1v1M624.5 199v2m0 1v1m0 1v1m0 6v2m0 1v1m0 1v1m0 6v2m0 1v1m0 1v1m0 6v2m0 1v1m0 1v1m0 6v2m0 1v1m0 1v1m0 1v1m0 6v2m0 1v1m0 1v1m0 9v1m0 1v1m0 1v1m0 9v1m0 1v1m0 1v1m0 1v1m0 6v2m0 1v1m0 1v1m0 1v1m0 8v2m0 1v1m0 1v1m0 1v1m0 11v1m0 1v1m0 1v1m0 1v1m0 1v1m0 8v2m0 1v1m0 1v1m0 1v1m0 1v1m0 1v1m0 10v2m0 1v1m0 1v1m0 1v1m0 1v1m0 1v1m0 1v1m0 14v1m0 2v1m0 1v1m0 1v1m0 1v1m0 1v1m0 6v1m0 1v1m0 1v1m0 1v1m0 42v1m0 1v1m0 1v1m0 2v1m0 1v1m0 1v1m0 2v1m0 4v2m0 4v2m0 1v1m0 1v1m0 2v1m0 3v1m0 11v1m0 3v1m0 1v1m0 1v2m0 4v1m0 7v1m0 5v1m0 6v1m0 4v2m0 3v1m0 3v1m0 3v1m0 4v1m0 3v1m0 3v2m0 11v2m0 3v1m0 3v1m0 3v1m0 3v2m0 1v1m0 1v2m0 1v1m0 2v1m0 1v1m0 2v1m0 1v2m0 1v1m0 2v1m0 1v2m0 3v1m0 3v1m0 3v2m0 1v1m0 1v2m0 1v1M625.5 197v1m0 10v1m0 1v1m0 9v1m0 1v1m0 9v1m0 1v1m0 9v1m0 1v2m0 8v1m0 1v2m0 10v1m0 1v2m0 10v1m0 1v2m0 10v1m0 1v3m0 11v1m0 1v2m0 12v1m0 1v2m0 14v1m0 1v2m0 18v2m0 22v4m0 36v1m0 1v1m0 1v1m0 1v1m0 1v1m0 164v1m0 2v1m0 1v1m0 2v1m0 4v1m0 7v1m0 4v1m0 2v1m0 1v1m0 5v1m0 7v2m0 11v1m0 1v1m0 1v2m0 3v1m0 3v2m0 13v1m0 9v1m0 2v1m0 1v2m0 1v1m0 1v2m0 1v1M626.5 200v1m0 1v1m0 1v1m0 6v2m0 1v1m0 1v1m0 6v2m0 1v1m0 1v1m0 6v2m0 1v1m0 1v1m0 7v3m0 1v1m0 1v1m0 6v2m0 1v1m0 1v1m0 8v2m0 1v1m0 1v1m0 8v2m0 1v1m0 1v1m0 1v1m0 7v1m0 1v1m0 1v1m0 1v1m0 8v2m0 1v1m0 1v1m0 1v1m0 8v2m0 1v1m0 1v1m0 1v1m0 1v3m0 6v2m0 1v1m0 1v1m0 1v1m0 1v1m0 1v2m0 7v4m0 1v1m0 1v1m0 1v1m0 1v1m0 1v4m0 9v4m0 1v1m0 1v1m0 1v1m0 1v1m0 1v1m0 1v1m0 1v1m0 2v1m0 1v1m0 1v1m0 14v1m0 1v1m0 1v1m0 1v4m0 7v3m0 7v2m0 5v1m0 2v1m0 5v2m0 6v1m0 3v1m0 7v2m0 1v1m0 1v2m0 4v2m0 3v2m0 5v1m0 1v1m0 2v1m0 1v1m0 2v1m0 1v1m0 2v1m0 1v1m0 2v1m0 1v2m0 1v1m0 2v1m0 1v1M627.5 391v1m0 31v1m0 1v1m0 1v1m0 1v2m0 83v1m0 1v1m0 2v1m0 1v1m0 12v1m0 1v1m0 5v1m0 3v2m0 3v1m0 3v1m0 3v2m0 1v1m0 2v1m0 1v1m0 2v1m0 1v2m0 1v1m0 2v1m0 1v1m0 4v2m0 7v1m0 3v2m0 3v1m0 7v2m0 6v1m0 2v1m0 1v2m0 1v1m0 2v1m0 1v1m0 2v1m0 1v2m0 7v1m0 3v2m0 9v1m0 1v1m0 2v1m0 12v1m0 2v1M628.5 643v1m0 1v1m0 2v1m0 1v2m0 1v1m0 2v1m0 1v1m0 2v1m0 4v1m0 7v1m0 4v1m0 2v1m0 1v1m0 2v1m0 17v1m0 2v1m0 1v1m0 2v1M631.5 197v2m0 6v2m0 1v1m0 1v1m0 6v2m0 1v1m0 8v2m0 1v1m0 1v1m0 6v2m0 1v1m0 1v1m0 9v1m0 1v1m0 8v2m0 1v1m0 1v1m0 8v2m0 1v1m0 1v1m0 8v2m0 1v1m0 1v1m0 11v1m0 1v1m0 1v1m0 11v1m0 1v1m0 1v1m0 10v2m0 1v1m0 1v1m0 1v1m0 12v2m0 1v1m0 1v1m0 1v1m0 14v2m0 1v1m0 1v1m0 1v1m0 1v1m0 16v1m0 1v1m0 2v1m0 1v1m0 1v1m0 1v1m0 1v1m0 1v1m0 47v1m0 1v1m0 1v1m0 2v1m0 1v1m0 1v1m0 1v2m0 1v1m0 1v1m0 2v1m0 1v1m0 1v2m0 4v2m0 9v1m0 2v1m0 1v2m0 5v1m0 4v1m0 6v1m0 4v2m0 2v2m0 1v1m0 1v2m0 2v2m0 4v1m0 6v1m0 5v1m0 6v1m0 5v1m0 6v1m0 5v1m0 6v2m0 11v2m0 3v1m0 3v1m0 5v1m0 1v1m0 2v1m0 12v1m0 2v1m0 1v1m0 2v1m0 1v1m0 2v1M632.5 201v1m0 1v2m0 8v1m0 1v2m0 8v1m0 1v2m0 8v1m0 1v2m0 8v1m0 1v1m0 2v1m0 6v1m0 1v1m0 1v2m0 8v1m0 1v1m0 1v2m0 8v1m0 1v1m0 1v2m0 8v1m0 1v1m0 1v1m0 11v1m0 1v1m0 1v2m0 10v1m0 1v1m0 1v2m0 12v1m0 1v1m0 1v2m0 16v1m0 1v2m0 1v1m0 18v1m0 1v2m0 1v1m0 30v4m0 1v1m0 1v1m0 1v1m0 1v1m0 136v1m0 2v1m0 1v1m0 2v1m0 2v1m0 1v1m0 2v1m0 1v2m0 1v1m0 1v2m0 1v1m0 1v1m0 3v1m0 3v1m0 3v2m0 3v1m0 3v1m0 4v1m0 2v2m0 1v1m0 2v1m0 1v1m0 2v1m0 1v2m0 7v1m0 5v1m0 6v3m0 1v1m0 2v1m0 1v2m0 3v1m0 3v1m0 3v2m0 1v1m0 10v1m0 1v1m0 2v1M633.5 198v1m0 7v2m0 1v1m0 8v2m0 1v1m0 8v2m0 1v1m0 8v2m0 1v1m0 8v1m0 2v1m0 1v1m0 8v2m0 1v1m0 10v2m0 1v1m0 10v2m0 1v1m0 1v1m0 8v1m0 2v1m0 1v1m0 10v2m0 1v1m0 1v1m0 1v1m0 8v1m0 2v1m0 1v1m0 1v1m0 1v1m0 8v1m0 2v1m0 1v1m0 1v1m0 1v1m0 1v1m0 8v1m0 1v2m0 1v1m0 1v1m0 1v1m0 1v1m0 1v1m0 12v1m0 4v1m0 1v1m0 1v1m0 1v2m0 1v1m0 1v1m0 2v1m0 1v1m0 1v1m0 10v1m0 1v1m0 1v1m0 1v1m0 1v4m0 6v1m0 8v1m0 2v1m0 5v2m0 5v1m0 6v3m0 3v2m0 11v1m0 3v1m0 2v1m0 6v1m0 2v1m0 1v1m0 4v1m0 2v1m0 1v1m0 2v1M634.5 429v1m0 76v1m0 4v1m0 14v1m0 1v1m0 12v1m0 1v1m0 2v1m0 4v1m0 2v1m0 1v1m0 2v1m0 1v1m0 3v2m0 3v1m0 3v1m0 3v2m0 3v1m0 3v1m0 3v2m0 3v1m0 3v1m0 3v2m0 3v1m0 3v1m0 3v2m0 3v1m0 3v1m0 3v2m0 3v1m0 1v1m0 2v1m0 1v1m0 12v1m0 2v1m0 1v1m0 2v1m0 2v1m0 1v1m0 2v1M635.5 624v1m0 4v1m0 2v1m0 1v1m0 2v1m0 17v1m0 2v1m0 1v2m0 3v2m0 6v1m0 2v1m0 7v1m0 1v1m0 2v1m0 2v1m0 1v1m0 2v1m0 17v1m0 2v1M637.5 196v1m0 8v1m0 1v1m0 1v1m0 7v1m0 1v1m0 1v1m0 7v1m0 1v1m0 1v1m0 7v1m0 1v1m0 1v1m0 1v2m0 4v1m0 1v1m0 1v1m0 1v2m0 6v1m0 1v1m0 1v1m0 1v2m0 4v1m0 1v1m0 1v1m0 1v1m0 1v2m0 4v1m0 1v1m0 1v1m0 1v1m0 1v2m0 6v1m0 1v1m0 1v1m0 1v1m0 9v1m0 1v1m0 1v1m0 1v1m0 2v1m0 6v1m0 1v1m0 1v1m0 1v1m0 1v1m0 9v1m0 1v1m0 1v1m0 1v1m0 1v1m0 1v2m0 8v1m0 1v1m0 1v1m0 1v1m0 1v1m0 1v1m0 1v2m0 8v1m0 1v1m0 1v1m0 1v1m0 1v1m0 1v1m0 1v1m0 1v1m0 1v1m0 2v1m0 13v1m0 3v1m0 1v1m0 6v1m0 1v1m0 1v1m0 6v1m0 3v1m0 2v1m0 5v1m0 2v1m0 5v2m0 4v2m0 1v1m0 1v1m0 1v2m0 4v2m0 2v1m0 1v1m0 12v1m0 1v1m0 1v2m0 1v1m0 1v2m0 1v1M638.5 201v1m0 11v1m0 11v1m0 11v1m0 10v2m0 1v1m0 8v2m0 1v1m0 10v2m0 1v1m0 10v2m0 1v1m0 10v2m0 1v1m0 13v1m0 1v1m0 12v2m0 1v1m0 15v1m0 1v1m0 14v2m0 1v1m0 1v1m0 16v1m0 2v1m0 1v1m0 1v1m0 20v1m0 4v1m0 1v1m0 42v1m0 4v1m0 1v1m0 1v1m0 2v1m0 1v1m0 4v1m0 1v1m0 1v2m0 4v2m0 4v2m0 1v1m0 4v1m0 1v1m0 1v1m0 3v1m0 4v1m0 4v2m0 2v1m0 2v1m0 1v1m0 8v1m0 5v1m0 6v1m0 4v2m0 3v1m0 1v1m0 1v2m0 1v1m0 2v1m0 1v1m0 2v1m0 2v1m0 1v1m0 2v1m0 1v1m0 2v1m0 2v1m0 1v1m0 2v1m0 17v1m0 2v1m0 1v1m0 2v1m0 1v2m0 3v1m0 2v2m0 1v1m0 1v2m0 1v1M639.5 197v1m0 1v1m0 6v1m0 1v1m0 2v1m0 6v1m0 1v1m0 9v1m0 1v1m0 2v1m0 6v1m0 1v1m0 1v2m0 5v2m0 1v1m0 1v1m0 7v1m0 1v1m0 1v1m0 1v2m0 5v2m0 1v1m0 1v1m0 1v2m0 5v2m0 1v1m0 1v1m0 1v2m0 6v1m0 1v1m0 1v1m0 1v2m0 8v1m0 1v1m0 1v1m0 1v2m0 8v1m0 1v1m0 1v1m0 1v2m0 10v1m0 1v1m0 1v1m0 1v2m0 12v1m0 1v1m0 1v1m0 1v2m0 1v1m0 14v1m0 1v1m0 4v1m0 1v1m0 23v1m0 1v2m0 1v1m0 4v1m0 1v1m0 1v1m0 176v1m0 1v2m0 1v2m0 13v1m0 7v1m0 2v1m0 2v1m0 1v1m0 2v1m0 1v1m0 4v1m0 10v1m0 10v1m0 1v1m0 2v1m0 1v2m0 1v1M640.5 202v1m0 11v1m0 11v1m0 11v1m0 10v2m0 10v2m0 1v1m0 10v2m0 12v2m0 12v2m0 1v1m0 10v1m0 2v1m0 12v2m0 1v1m0 1v1m0 10v1m0 2v1m0 1v1m0 12v1m0 1v2m0 1v1m0 1v1m0 14v2m0 1v1m0 1v1m0 1v1m0 1v1m0 14v1m0 1v5m0 1v1m0 25v1m0 1v2m0 1v1m0 9v1m0 5v1m0 9v1m0 5v1m0 5v2m0 4v1m0 6v1m0 1v1m0 1v1m0 9v1m0 1v2m0 3v2m0 3v1m0 20v1M641.5 520v1m0 1v1m0 1v2m0 1v1m0 1v1m0 2v1m0 12v1m0 6v1m0 4v1m0 3v1m0 3v2m0 4v1m0 1v1m0 2v1m0 17v1m0 2v1m0 1v1m0 2v1m0 22v1m0 2v1m0 2v1m0 1v1m0 9v2m0 4v1m0 1v1m0 2v1m0 17v1m0 2v1M642.5 633v1m0 2v1m0 1v1m0 2v1m0 1v2m0 1v1m0 2v1m0 1v1m0 2v1m0 12v1m0 1v2m0 3v1m0 7v1m0 15v1m0 2v1m0 1v1M643.5 203v1m0 11v2m0 10v2m0 10v1m0 25v2m0 12v2m0 12v2m0 12v2m0 12v1m0 2v1m0 12v1m0 2v1m0 14v1m0 19v2m0 18v1m0 1v2m0 22v1m0 1v3m0 37v1m0 6v3m0 2v1m0 1v1m0 2v1m0 1v1m0 1v1m0 2v1m0 1v1m0 1v1m0 2v1m0 1v1M644.5 196v1m0 2v1m0 7v1m0 1v1m0 1v1m0 4v2m0 1v1m0 1v1m0 1v1m0 4v2m0 1v1m0 1v1m0 1v1m0 7v1m0 1v1m0 1v1m0 7v1m0 1v1m0 1v1m0 1v2m0 3v2m0 1v1m0 1v1m0 1v1m0 1v2m0 3v2m0 1v1m0 1v1m0 1v1m0 6v2m0 1v1m0 1v1m0 1v1m0 1v2m0 3v2m0 1v1m0 1v1m0 1v1m0 1v2m0 5v2m0 1v1m0 1v1m0 1v1m0 1v2m0 5v2m0 1v1m0 1v1m0 1v1m0 1v1m0 1v2m0 6v1m0 1v1m0 1v1m0 1v1m0 1v1m0 1v2m0 5v2m0 1v1m0 1v1m0 1v1m0 1v1m0 1v1m0 1v1m0 2v1m0 5v2m0 1v1m0 1v1m0 1v1m0 1v1m0 1v1m0 1v1m0 1v1m0 2v1m0 9v3m0 1v1m0 1v1m0 1v1m0 1v1m0 1v1m0 6v1m0 1v1m0 3v1m0 1v3m0 10v1m0 1v1m0 1v2m0 1v1m0 4v3m0 1v1m0 1v1m0 1v1m0 5v2m0 4v2m0 1v1m0 1v1m0 2v1m0 7v1m0 2v1m0 7v1m0 2v1m0 1v2m0 7v1m0 4v1m0 9v1m0 1v1m0 2v1m0 1v1m0 2v1m0 1v2m0 3v1m0 3v1m0 7v2m0 3v1m0 7v2m0 3v1m0 8v1m0 3v1m0 3v2m0 1v1m0 2v1m0 1v1M645.5 204v1m0 10v1m0 11v1m0 12v1m0 11v2m0 8v1m0 2v1m0 10v1m0 1v2m0 12v2m0 10v1m0 1v2m0 10v1m0 2v1m0 12v1m0 2v1m0 14v1m0 17v2m0 20v1m0 23v1m0 33v1m0 1v3m0 117v1m0 1v1m0 2v1m0 1v2m0 1v1m0 1v1m0 3v1m0 7v2m0 3v1m0 7v2m0 3v1m0 7v2m0 3v1m0 3v2m0 1v1m0 2v1m0 1v1m0 2v1m0 1v2m0 2v2m0 4v1m0 6v1m0 4v1m0 1v1m0 1v1m0 2v1m0 2v1m0 2v1m0 9v1m0 12v1m0 1v1m0 2v1m0 1v1M646.5 197v2m0 1v2m0 3v2m0 1v1m0 1v1m0 1v1m0 4v2m0 1v1m0 1v1m0 1v1m0 4v2m0 1v1m0 1v1m0 1v1m0 4v2m0 1v1m0 1v1m0 1v2m0 4v1m0 1v1m0 1v1m0 1v2m0 5v2m0 1v1m0 1v1m0 1v2m0 5v2m0 1v1m0 1v1m0 1v2m0 5v2m0 1v1m0 1v1m0 1v2m0 5v2m0 1v1m0 1v1m0 1v2m0 5v2m0 1v1m0 1v1m0 1v1m0 1v2m0 5v2m0 1v1m0 1v1m0 1v1m0 1v2m0 5v2m0 1v1m0 1v1m0 1v1m0 1v4m0 6v3m0 1v1m0 1v1m0 1v1m0 1v3m0 8v2m0 1v1m0 1v1m0 1v1m0 1v1m0 1v3m0 12v1m0 1v1m0 1v1m0 1v1m0 1v1m0 1v1m0 1v5m0 1v1m0 22v1m0 1v1m0 4v1m0 3v1m0 8v2m0 5v2m0 5v1m0 1v1m0 1v1m0 9v1m0 1v2m0 1v1m0 1v1m0 2v1m0 1v1m0 14v1m0 2v1M647.5 213v1m0 11v1m0 11v1m0 12v1m0 39v1m0 28v1m0 14v2m0 15v2m0 16v2m0 17v3m0 1v1m0 18v3m0 1v1m0 1v1m0 21v1m0 11v1m0 3v1m0 54v1m0 1v1m0 2v1m0 1v1m0 2v1m0 1v1m0 9v1m0 5v1m0 4v1m0 9v1m0 1v1m0 2v1m0 4v1m0 2v1m0 1v2m0 3v1m0 4v1m0 12v1m0 3v1m0 3v1m0 4v1m0 3v1m0 3v1m0 7v2m0 1v1m0 2v1m0 1v1m0 23v1m0 1v1m0 2v1M648.5 592v1m0 4v1m0 2v1m0 1v1m0 2v1m0 1v1m0 2v1m0 2v1m0 1v1m0 2v1m0 1v2m0 1v1m0 2v1m0 1v1m0 2v1m0 12v1m0 1v1m0 4v1m0 4v1m0 3v1m0 3v2m0 1v1m0 2v1m0 4v1m0 1v2m0 3v1m0 3v1m0 17v1m0 1v1m0 2v1M650.5 205v1m0 1v1m0 9v1m0 1v1m0 9v1m0 1v1m0 9v1m0 1v1m0 9v1m0 1v1m0 1v2m0 8v1m0 1v1m0 9v1m0 1v1m0 1v2m0 8v1m0 1v1m0 1v2m0 8v1m0 1v1m0 1v1m0 11v1m0 1v1m0 1v2m0 10v1m0 1v1m0 1v2m0 10v1m0 1v1m0 1v1m0 1v2m0 10v1m0 1v1m0 1v1m0 1v1m0 2v1m0 12v1m0 1v1m0 1v1m0 1v2m0 17v1m0 1v1m0 1v1m0 1v1m0 2v1m0 22v1m0 1v1m0 1v1m0 10v3m0 1v1m0 1v1M651.5 198v2m0 1v1m0 1v1m0 7v1m0 1v1m0 9v1m0 1v1m0 9v1m0 1v1m0 9v1m0 1v1m0 1v1m0 6v2m0 1v1m0 1v1m0 9v1m0 1v1m0 1v1m0 6v1m0 2v1m0 1v1m0 1v1m0 6v1m0 2v1m0 1v1m0 1v1m0 9v1m0 1v1m0 1v1m0 8v2m0 1v1m0 1v1m0 1v1m0 8v1m0 2v1m0 1v1m0 1v1m0 1v1m0 8v2m0 1v1m0 1v1m0 1v1m0 1v1m0 10v2m0 1v1m0 1v1m0 1v1m0 1v1m0 10v1m0 2v1m0 1v1m0 1v1m0 1v1m0 17v1m0 2v1m0 1v1m0 4v1m0 1v1m0 1v1m0 1v1m0 20v1m0 1v2m0 4v1m0 1v2m0 10v1m0 2v1m0 4v2m0 1v1m0 2v2m0 3v1m0 2v1m0 1v1m0 5v1m0 2v1m0 1v3m0 4v1m0 4v1m0 7v2m0 1v1m0 2v1m0 1v2m0 7v1m0 12v2m0 3v1m0 1v1m0 1v2m0 1v1M652.5 205v1m0 1v2m0 8v1m0 1v2m0 8v1m0 1v2m0 8v1m0 1v1m0 9v1m0 1v1m0 2v1m0 8v1m0 1v2m0 8v1m0 1v1m0 1v2m0 8v1m0 1v1m0 1v2m0 8v1m0 1v1m0 1v2m0 10v1m0 1v2m0 12v1m0 1v2m0 12v1m0 1v2m0 14v1m0 1v2m0 18v2m0 23v1m0 29v1m0 1v1m0 104v1m0 1v1m0 1v1m0 3v1m0 3v1m0 4v1m0 3v1m0 1v1m0 1v2m0 1v1m0 2v1m0 1v1m0 2v1m0 2v1m0 1v1m0 2v1m0 1v1m0 2v1m0 1v2m0 1v1m0 1v1m0 3v1m0 7v1m0 5v1m0 1v1m0 4v1m0 8v2m0 1v1m0 2v1m0 1v2m0 7v1m0 5v1m0 2v2m0 1v1m0 7v1m0 2v1m0 1v1m0 2v1m0 1v1M653.5 199v1m0 1v1m0 1v1m0 6v2m0 1v1m0 8v2m0 1v1m0 8v2m0 1v1m0 8v2m0 1v1m0 1v1m0 6v1m0 2v1m0 1v1m0 8v2m0 1v1m0 1v1m0 8v2m0 1v1m0 1v1m0 8v2m0 1v1m0 1v1m0 8v2m0 1v1m0 1v1m0 8v2m0 1v1m0 1v1m0 1v1m0 8v2m0 1v1m0 1v1m0 1v1m0 8v1m0 2v1m0 1v1m0 1v1m0 1v1m0 8v1m0 2v1m0 1v1m0 1v1m0 1v1m0 1v2m0 7v1m0 2v1m0 1v1m0 1v1m0 1v1m0 1v1m0 2v1m0 9v1m0 2v1m0 1v2m0 1v1m0 1v1m0 1v1m0 1v1m0 2v1m0 1v1m0 8v1m0 1v1m0 1v3m0 5v1m0 2v1m0 5v1m0 2v1m0 5v1m0 5v2m0 1v1m0 1v1m0 11v1m0 4v1m0 154v1m0 2v1m0 1v2m0 1v1m0 17v1m0 2v1m0 17v1m0 2v1M654.5 414v1m0 26v1m0 1v3m0 57v1m0 1v2m0 1v1m0 1v1m0 2v1m0 1v1m0 9v1m0 1v1m0 4v1m0 3v2m0 5v1m0 7v1m0 1v1m0 5v1m0 3v1m0 3v1m0 4v1m0 3v2m0 1v1m0 2v1m0 1v1m0 2v1m0 38v1m0 4v1M655.5 613v1m0 2v1m0 1v1m0 2v1m0 1v2m0 3v1m0 3v1m0 4v1m0 3v1m0 5v1m0 9v1m0 5v1m0 3v1m0 3v1m0 3v1m0 10v1m0 1v1m0 2v1M656.5 263v1m0 103v1m0 19v1m0 19v1m0 24v1m0 1v1m0 34v1m0 1v1M657.5 197v1m0 6v1m0 1v1m0 1v1m0 7v1m0 1v1m0 1v1m0 7v1m0 1v1m0 1v1m0 7v1m0 1v1m0 1v1m0 7v1m0 1v1m0 1v1m0 1v2m0 3v2m0 1v1m0 1v1m0 1v1m0 7v1m0 1v1m0 1v1m0 1v2m0 6v1m0 1v1m0 1v1m0 1v2m0 6v1m0 1v1m0 1v1m0 1v1m0 7v1m0 1v1m0 1v1m0 1v1m0 1v2m0 6v1m0 1v1m0 1v1m0 1v1m0 1v2m0 6v1m0 1v1m0 1v1m0 1v1m0 1v1m0 6v2m0 1v1m0 1v1m0 1v1m0 1v1m0 1v1m0 2v1m0 5v2m0 1v1m0 1v1m0 1v1m0 1v1m0 1v1m0 1v2m0 5v1m0 2v1m0 1v1m0 1v1m0 1v1m0 1v1m0 1v1m0 1v1m0 2v1m0 6v1m0 1v1m0 2v1m0 1v1m0 1v1m0 6v1m0 1v1m0 1v1m0 1v3m0 1v1m0 8v1m0 4v1m0 4v1m0 1v1m0 2v1m0 1v1m0 1v1m0 6v2m0 3v1m0 2v1m0 3v1m0 5v1m0 2v1m0 1v2m0 5v1m0 4v1m0 3v1m0 1v1m0 7v1m0 2v2m0 3v1m0 8v2m0 1v1M658.5 199v2m0 1v1m0 9v1m0 23v1m0 1v1m0 9v1m0 1v1m0 8v2m0 13v1m0 1v1m0 8v2m0 12v2m0 15v1m0 1v1m0 10v2m0 14v2m0 17v1m0 16v2m0 18v2m0 1v1m0 20v4m0 27v1m0 87v1m0 1v1m0 3v1m0 8v1m0 2v1m0 2v1m0 9v1m0 2v1m0 1v2m0 2v2m0 3v1m0 7v1m0 5v1m0 6v2m0 3v1m0 3v2m0 1v1m0 2v1m0 1v1m0 2v1m0 1v2m0 1v1m0 1v1m0 3v2m0 6v1m0 4v1m0 3v1m0 10v1m0 1v2m0 1v1m0 2v1M659.5 198v1m0 3v2m0 1v1m0 1v1m0 1v2m0 3v2m0 1v1m0 1v1m0 1v2m0 3v2m0 1v1m0 1v1m0 1v2m0 3v2m0 1v1m0 1v1m0 1v2m0 3v1m0 2v1m0 1v1m0 1v2m0 5v2m0 1v1m0 1v1m0 1v2m0 3v1m0 2v1m0 1v1m0 1v1m0 6v2m0 1v1m0 1v1m0 1v1m0 6v2m0 1v1m0 1v1m0 1v1m0 6v2m0 1v1m0 1v1m0 1v1m0 2v1m0 6v1m0 1v1m0 1v1m0 1v1m0 9v1m0 1v1m0 1v1m0 1v1m0 9v1m0 1v1m0 1v1m0 1v1m0 1v2m0 10v1m0 1v1m0 1v1m0 1v1m0 2v1m0 10v1m0 1v1m0 1v1m0 1v1m0 1v3m0 14v1m0 1v1m0 1v1m0 2v1m0 1v1m0 2v1m0 1v1m0 20v1m0 8v2m0 6v2m0 1v1m0 152v1m0 2v1m0 1v2m0 1v1m0 1v1m0 2v1m0 2v1m0 12v1m0 1v2m0 1v1m0 2v1m0 1v1m0 12v1m0 2v1m0 1v2m0 1v1M660.5 210v2m0 10v2m0 10v2m0 24v2m0 10v2m0 12v2m0 12v2m0 12v2m0 12v1m0 2v1m0 12v2m0 1v1m0 12v2m0 1v1m0 14v2m0 1v1m0 1v1m0 12v1m0 2v1m0 1v1m0 1v1m0 15v2m0 1v1m0 1v1m0 19v1m0 2v1m0 1v1m0 2v1m0 1v1m0 1v1m0 1v1m0 4v1m0 18v1m0 2v1m0 1v1m0 1v1m0 2v1m0 1v1m0 1v2m0 5v1m0 4v1m0 7v1m0 2v2m0 3v1m0 5v1m0 2v1m0 2v1m0 1v1m0 2v1m0 1v2m0 3v1m0 4v1m0 3v1m0 4v1m0 1v1m0 20v1m0 2v1m0 1v1m0 2v1m0 1v1m0 2v1m0 4v1M661.5 551v1m0 2v1m0 1v1m0 2v1m0 20v1m0 1v1m0 2v1m0 2v1m0 7v1m0 3v1m0 4v1m0 3v1m0 3v1m0 5v1m0 1v1m0 2v1m0 4v1m0 2v1m0 1v1m0 4v1m0 3v2m0 13v1m0 7v1m0 1v1m0 5v1m0 4v1M662.5 671v1m0 1v1m0 2v1M663.5 200v1m0 1v1m0 1v1m0 7v1m0 1v1m0 9v1m0 1v1m0 9v1m0 1v1m0 9v1m0 1v1m0 1v2m0 8v1m0 1v2m0 8v1m0 1v1m0 1v2m0 8v1m0 1v1m0 11v1m0 1v1m0 11v1m0 1v1m0 1v2m0 8v1m0 1v1m0 1v2m0 10v1m0 1v1m0 1v2m0 12v1m0 1v1m0 1v2m0 12v1m0 1v1m0 1v2m0 12v1m0 1v1m0 1v1m0 1v1m0 2v1m0 14v1m0 1v1m0 1v1m0 1v3m0 17v1m0 1v1m0 11v2m0 27v1m0 2v1m0 9v2m0 1v1m0 1v3m0 4v1m0 3v2m0 2v1m0 7v1m0 2v1m0 8v1m0 2v1m0 2v1m0 9v1m0 2v1m0 1v2m0 3v2m0 1v1m0 2v1m0 1v2m0 1v1m0 2v1m0 1v1M664.5 197v2m0 6v2m0 1v1m0 1v1m0 6v2m0 1v1m0 1v1m0 6v2m0 1v1m0 1v1m0 6v2m0 1v1m0 1v1m0 6v2m0 1v1m0 1v1m0 9v1m0 1v1m0 1v1m0 6v2m0 1v1m0 1v1m0 8v2m0 1v1m0 1v1m0 8v2m0 1v1m0 1v1m0 8v2m0 1v1m0 1v1m0 1v1m0 8v2m0 1v1m0 1v1m0 1v1m0 8v2m0 1v1m0 1v1m0 1v1m0 8v2m0 1v1m0 1v1m0 1v1m0 1v1m0 10v2m0 1v1m0 1v1m0 1v1m0 1v1m0 10v2m0 1v1m0 1v1m0 1v1m0 1v1m0 1v1m0 11v1m0 4v1m0 3v1m0 20v1m0 1v3m0 3v1m0 4v1m0 1v1m0 1v1m0 2v1m0 1v1m0 1v1m0 52v1m0 1v2m0 1v1m0 1v2m0 1v1m0 10v1m0 1v1m0 8v1m0 5v1m0 4v1m0 1v1m0 5v1m0 4v1m0 1v1m0 5v1m0 4v1m0 1v1m0 5v1m0 4v1m0 1v1m0 5v1m0 7v2m0 1v1m0 7v1m0 1v1m0 3v2m0 7v2m0 12v1m0 1v1M665.5 201v1m0 2v1m0 8v1m0 2v1m0 8v1m0 2v1m0 8v1m0 2v1m0 8v1m0 2v1m0 8v1m0 1v1m0 11v1m0 2v1m0 8v1m0 1v1m0 2v1m0 8v1m0 1v1m0 2v1m0 8v1m0 1v1m0 2v1m0 10v1m0 2v1m0 12v1m0 2v1m0 12v1m0 2v1m0 14v1m0 2v1m0 17v1m0 20v1m0 1v1m0 24v2m0 42v1m0 130v1m0 1v1m0 2v1m0 20v1m0 2v1m0 4v1m0 3v2m0 1v1m0 7v1m0 1v2m0 2v1m0 1v1m0 1v2m0 14v1m0 1v2m0 1v1M666.5 198v1m0 8v1m0 1v1m0 9v1m0 1v1m0 6v1m0 2v1m0 1v1m0 9v1m0 1v1m0 8v2m0 1v1m0 1v1m0 6v1m0 2v1m0 1v1m0 9v1m0 1v1m0 1v1m0 9v1m0 1v1m0 1v1m0 6v1m0 2v1m0 1v1m0 1v1m0 9v1m0 1v1m0 1v1m0 8v1m0 2v1m0 1v1m0 1v1m0 9v1m0 1v1m0 1v1m0 1v1m0 8v1m0 2v1m0 1v1m0 1v1m0 2v1m0 7v1m0 2v1m0 1v1m0 1v1m0 2v1m0 7v1m0 2v1m0 1v1m0 1v1m0 1v1m0 1v2m0 1v1m0 6v1m0 1v1m0 8v1m0 1v2m0 4v1m0 18v1m0 5v2m0 6v1m0 16v1m0 3v1m0 4v1m0 7v1m0 2v2m0 4v1m0 4v2m0 6v1m0 1v1m0 3v2m0 3v1m0 3v2m0 1v1m0 12v1m0 1v2m0 6v2m0 3v2m0 1v1m0 2v1m0 1v2m0 1v1m0 2v1m0 1v1M667.5 398v1m0 21v1m0 23v1m0 33v1m0 5v2m0 81v1m0 1v1m0 2v1m0 1v2m0 3v2m0 6v2m0 3v1m0 7v2m0 3v1m0 3v1m0 8v1m0 3v1m0 8v1m0 5v1m0 9v1m0 4v1m0 4v1m0 3v1m0 3v1m0 10v1m0 4v1M668.5 655v1m0 4v1m0 2v1m0 17v1m0 20v1M669.5 201v1m0 47v1m0 11v2m0 24v2m0 12v2m0 12v2m0 28v1m0 18v1m0 14v1m0 19v2m0 18v1m0 2v1m0 22v1m0 2v1m0 29v3m0 1v1M670.5 196v1m0 6v1m0 1v1m0 1v1m0 1v2m0 4v1m0 1v1m0 1v1m0 7v1m0 1v1m0 1v1m0 7v1m0 1v1m0 1v1m0 1v2m0 4v1m0 1v1m0 1v1m0 1v2m0 3v2m0 1v1m0 1v1m0 1v1m0 7v1m0 1v1m0 1v1m0 1v2m0 3v2m0 1v1m0 1v1m0 1v1m0 1v2m0 3v2m0 1v1m0 1v1m0 1v1m0 1v2m0 3v2m0 1v1m0 1v1m0 1v1m0 1v1m0 7v1m0 1v1m0 1v1m0 1v1m0 1v2m0 6v1m0 1v1m0 1v1m0 1v1m0 1v2m0 5v2m0 1v1m0 1v1m0 1v1m0 1v1m0 2v1m0 6v1m0 1v1m0 1v1m0 1v1m0 1v1m0 1v2m0 5v2m0 1v1m0 1v1m0 1v1m0 1v1m0 1v1m0 1v2m0 7v2m0 1v1m0 4v1m0 1v1m0 1v1m0 1v1m0 2v1m0 6v1m0 4v1m0 4v1m0 1v1m0 11v1m0 8v2m0 1v1m0 2v1m0 2v1m0 3v1m0 2v1m0 3v2m0 2v1m0 1v1m0 3v1m0 2v1m0 3v2m0 2v1m0 4v1m0 5v2m0 3v2m0 2v1m0 10v1m0 1v2m0 3v2m0 1v1m0 1v2m0 1v2m0 1v1M671.5 198v1m0 2v1m0 8v1m0 1v2m0 10v2m0 10v2m0 8v1m0 1v2m0 8v2m0 1v1m0 12v2m0 8v2m0 12v2m0 1v1m0 10v2m0 1v1m0 26v2m0 1v1m0 12v2m0 16v1m0 17v2m0 18v1m0 24v2m0 27v1m0 2v1m0 61v1m0 1v1m0 2v1m0 12v1m0 1v2m0 7v2m0 7v2m0 1v1m0 2v1m0 1v1m0 2v1m0 2v1m0 1v1m0 2v1m0 1v2m0 1v1m0 1v2m0 1v1m0 2v1m0 1v2m0 1v1m0 2v1m0 1v1m0 2v1m0 1v1m0 2v1m0 1v2m0 3v1m0 4v1m0 6v2m0 3v1m0 1v1m0 9v1m0 2v1m0 1v2m0 1v1m0 2v1m0 1v1M672.5 204v1m0 1v1m0 1v2m0 3v1m0 2v1m0 1v1m0 1v2m0 3v2m0 1v1m0 1v1m0 1v2m0 3v1m0 2v1m0 1v1m0 1v2m0 6v1m0 1v1m0 1v1m0 6v2m0 1v1m0 1v1m0 1v2m0 3v1m0 2v1m0 1v1m0 1v1m0 6v2m0 1v1m0 1v1m0 1v2m0 5v2m0 1v1m0 1v1m0 1v2m0 5v2m0 1v1m0 1v1m0 1v2m0 5v2m0 1v1m0 1v1m0 1v1m0 6v1m0 2v1m0 1v1m0 1v1m0 1v2m0 8v1m0 1v1m0 1v1m0 1v1m0 8v2m0 1v1m0 1v1m0 1v1m0 1v2m0 8v1m0 1v1m0 1v1m0 1v1m0 1v1m0 2v1m0 9v1m0 1v1m0 1v1m0 1v1m0 1v1m0 2v1m0 13v1m0 1v1m0 4v1m0 4v1m0 18v1m0 6v3m0 4v3m0 1v1m0 1v1m0 133v1m0 1v2m0 1v1m0 1v2m0 3v1m0 3v1m0 1v1m0 9v2m0 7v2m0 3v1m0 1v1m0 7v1m0 1v2m0 1v1m0 1v2m0 1v1m0 10v1m0 1v1M673.5 259v1m0 11v1m0 13v1m0 13v1m0 27v1m0 13v2m0 14v2m0 14v2m0 1v1m0 14v2m0 1v1m0 16v2m0 1v3m0 15v1m0 1v3m0 1v1m0 1v1m0 15v1m0 1v1m0 3v1m0 3v1m0 26v1m0 1v1m0 2v1m0 1v1m0 4v1m0 2v2m0 3v1m0 5v2m0 13v1m0 7v1m0 7v1m0 2v1m0 7v1m0 3v2m0 1v1m0 2v1M674.5 555v1m0 2v1m0 1v1m0 2v1m0 2v1m0 1v1m0 2v1m0 22v1m0 2v1m0 1v1m0 2v1m0 2v1m0 1v1m0 2v1m0 9v1m0 2v1m0 1v2m0 3v1m0 3v2m0 7v1m0 5v1m0 7v1m0 1v1m0 5v1m0 4v1M675.5 659v1m0 2v1m0 1v2m0 1v1m0 2v1m0 14v1m0 2v1m0 17v1m0 2v1" stroke="#ffe000" stroke-width="1" fill="none"/><path d="M309.5 208v2m0 9v3m0 9v3m0 10v2m0 10v3m0 10v3m0 10v3m0 11v3m0 11v3m0 11v4m0 12v4m0 12v5m0 13v5m0 13v7m0 15v6m0 20v1m0 1v1m0 1v1m0 1v1m0 26v1m0 1v4m0 1v1m0 1v4m0 1v1m0 1v1M310.5 199v2m0 9v3m0 9v3m0 9v3m0 9v3m0 11v3m0 9v3m0 11v3m0 11v3m0 11v3m0 11v5m0 11v5m0 13v3m0 15v5m0 15v5m0 16v3m0 1v1m0 1v1m0 21v3m0 1v1m0 1v1m0 1v1m0 34v1m0 1v1m0 1v2m0 1v1m0 1v1m0 1v2m0 1v1m0 1v2m0 1v1m0 1v2m0 1v1m0 1v4m0 1v4m0 1v4m0 1v2m0 1v1m0 1v2m0 1v1m0 1v2m0 1v1m0 1v2m0 1v2m0 1v1m0 1v2m0 1v1m0 1v2m0 1v1m0 2v1m0 1v2m0 1v1m0 2v1m0 1v1m0 2v1M311.5 202v2m0 4v2m0 4v1m0 5v1m0 5v1m0 5v1m0 5v1m0 5v2m0 4v2m0 4v3m0 4v2m0 4v2m0 5v2m0 4v3m0 5v1m0 5v3m0 5v1m0 5v3m0 5v2m0 4v3m0 7v2m0 4v3m0 7v2m0 4v3m0 7v3m0 4v4m0 8v3m0 4v3m0 11v1m0 1v1m0 5v1m0 1v1m0 12v1m0 1v1m0 1v1m0 5v1m0 1v1m0 20v1m0 1v1m0 1v1m0 5v2m0 1v1m0 1v1m0 107v1m0 2v1m0 1v1m0 2v1m0 1v2m0 1v1m0 1v2m0 1v2m0 1v1m0 1v2m0 1v1m0 1v2m0 1v2m0 1v1m0 1v2m0 1v1m0 1v2m0 1v2m0 1v1m0 1v2m0 1v1m0 1v2m0 1v2m0 1v1m0 1v2m0 1v1m0 1v2m0 1v2m0 1v1m0 1v2m0 1v1m0 1v2m0 1v2m0 1v1m0 1v2m0 1v1m0 2v1m0 1v1m0 2v1M312.5 200v1m0 9v3m0 9v3m0 9v3m0 10v2m0 11v2m0 10v3m0 11v3m0 11v3m0 11v3m0 11v3m0 13v3m0 13v5m0 13v5m0 15v3m0 1v1m0 15v1m0 1v1m0 1v1m0 1v1m0 21v1m0 1v1m0 1v1m0 1v1m0 29v1m0 1v1m0 1v4m0 1v1m0 1v2m0 1v1m0 1v1M313.5 202v2m0 10v1m0 11v1m0 11v1m0 11v2m0 11v2m0 11v2m0 12v1m0 13v1m0 13v2m0 13v3m0 12v4m0 14v3m0 15v3m0 17v3m0 1v1m0 17v1m0 1v4m0 1v1m0 23v1m0 5v1m0 46v1m0 2v1m0 1v1m0 2v1m0 1v1m0 1v2m0 1v1m0 1v2m0 1v1m0 1v2m0 1v1m0 1v2m0 1v1m0 2v1m0 1v2m0 1v1m0 1v2m0 1v1m0 2v1m0 1v2m0 1v1m0 1v2m0 1v1m0 2v1m0 1v2m0 1v1m0 1v2m0 1v1m0 2v1m0 1v1m0 2v1m0 4v1m0 2v1M314.5 608v1m0 4v1m0 4v1m0 2v1m0 1v1m0 2v1m0 1v2m0 1v1m0 2v1m0 1v2m0 1v1m0 1v2m0 1v1m0 2v1m0 1v2m0 1v1m0 1v2m0 1v1m0 2v1m0 1v2m0 1v1m0 1v2m0 1v1m0 2v1m0 1v2m0 1v1m0 1v2m0 1v1m0 2v1m0 1v1m0 2v1M319.5 204v1m0 1v1m0 9v1m0 11v1m0 11v1m0 1v1m0 11v1m0 11v1m0 13v1m0 11v1m0 1v1m0 11v1m0 1v1m0 13v1m0 13v1m0 1v1m0 13v1m0 1v1m0 15v1m0 1v1m0 15v1m0 1v1m0 1v1m0 16v2m0 1v1m0 1v1m0 20v5m0 28v4m0 1v1m0 1v1m0 1v1M320.5 208v1m0 9v1m0 1v1m0 9v1m0 1v1m0 11v1m0 11v1m0 11v1m0 1v1m0 11v1m0 1v1m0 11v1m0 1v1m0 11v1m0 1v1m0 11v1m0 1v1m0 13v1m0 1v1m0 13v1m0 1v1m0 1v1m0 13v1m0 1v1m0 1v1m0 15v1m0 1v1m0 1v1m0 17v6m0 20v1m0 1v1m0 1v1m0 1v3m0 29v1m0 1v1m0 1v2m0 1v1m0 1v4m0 1v1m0 1v4m0 1v1m0 1v2m0 1v1m0 1v2m0 1v1m0 1v4m0 1v1m0 2v1m0 1v1m0 2v1m0 1v1m0 2v1M321.5 198v1m0 1v1m0 3v1m0 5v1m0 5v1m0 5v1m0 5v1m0 5v1m0 5v1m0 5v1m0 1v1m0 5v1m0 3v1m0 1v1m0 5v1m0 5v1m0 1v1m0 5v1m0 5v1m0 5v1m0 7v1m0 5v1m0 7v1m0 1v1m0 5v1m0 5v1m0 1v1m0 5v1m0 7v1m0 1v1m0 5v1m0 9v1m0 1v1m0 5v1m0 9v1m0 1v1m0 5v1m0 11v1m0 1v1m0 1v1m0 5v1m0 12v3m0 1v1m0 1v1m0 5v1m0 17v1m0 1v1m0 1v1m0 4v1m0 70v1m0 2v1m0 1v1m0 2v1m0 1v2m0 1v1m0 1v2m0 1v1m0 2v1m0 1v2m0 1v1m0 1v2m0 1v1m0 2v1m0 1v2m0 1v1m0 1v2m0 1v1m0 2v1m0 1v2m0 1v1m0 1v2m0 1v1m0 2v1m0 1v2m0 1v1m0 1v2m0 1v1m0 2v1m0 1v2m0 1v1m0 1v2m0 1v1m0 2v1m0 1v2m0 1v1m0 1v2m0 1v1m0 2v1m0 1v1m0 2v1m0 2v1M322.5 208v1m0 11v1m0 11v1m0 11v1m0 11v1m0 11v1m0 1v1m0 11v1m0 13v1m0 13v1m0 13v1m0 1v1m0 13v1m0 1v1m0 13v1m0 1v1m0 15v1m0 1v1m0 15v1m0 1v1m0 17v1m0 1v1m0 1v1m0 1v1m0 18v1m0 1v1m0 1v1m0 1v1m0 28v1m0 2v1m0 1v1m0 1v1m0 1v2m0 1v1m0 1v1m0 155v1m0 2v1m0 1v1m0 2v1m0 1v2m0 1v1m0 2v1m0 1v2m0 1v1m0 1v2m0 1v1m0 2v1m0 1v2m0 1v1m0 1v2m0 1v1m0 2v1m0 1v2m0 1v1m0 1v2m0 1v1m0 2v1m0 1v1m0 2v1M323.5 200v1m0 9v1m0 11v1m0 11v1m0 11v1m0 1v1m0 11v1m0 11v1m0 1v1m0 11v1m0 13v1m0 13v1m0 1v1m0 11v1m0 1v1m0 13v1m0 1v1m0 15v1m0 15v1m0 1v1m0 1v1m0 15v1m0 1v1m0 1v1m0 17v1m0 1v1m0 1v1m0 1v1m0 21v1m0 1v1m0 1v1m0 1v1m0 36v1m0 1v1m0 2v1m0 1v1m0 1v2m0 1v1m0 1v1m0 2v1m0 1v1m0 2v1m0 1v1m0 1v2m0 1v1m0 1v2m0 1v1m0 1v2m0 1v1m0 1v2m0 1v1m0 2v1m0 1v1m0 2v1m0 1v1M324.5 404v1m0 23v1m0 137v1m0 2v1m0 1v1m0 2v1m0 1v2m0 1v1m0 2v1m0 1v1m0 2v1m0 1v2m0 1v1m0 2v1m0 1v1m0 2v1m0 1v2m0 1v1m0 2v1m0 1v1m0 2v1m0 1v2m0 1v1m0 2v1m0 1v1m0 2v1m0 1v2m0 1v1m0 2v1m0 1v1m0 2v1m0 1v2m0 1v1m0 2v1m0 1v1m0 2v1M325.5 675v1m0 2v1m0 4v1m0 2v1m0 1v1m0 2v1m0 4v1M329.5 205v2m0 10v1m0 11v1m0 11v2m0 11v1m0 11v2m0 12v1m0 12v2m0 12v2m0 13v2m0 14v2m0 14v2m0 16v2m0 17v2m0 19v1m0 1v1m0 24v1m0 1v1m0 1v1m0 33v1m0 1v4m0 1v1m0 1v1M330.5 207v3m0 9v2m0 10v3m0 9v3m0 10v3m0 9v4m0 10v3m0 11v3m0 11v3m0 12v4m0 11v5m0 12v4m0 14v5m0 14v6m0 16v1m0 1v3m0 1v1m0 22v4m0 1v1m0 1v1m0 1v1m0 34v1m0 1v1m0 1v4m0 1v1m0 1v2m0 1v1m0 1v4m0 1v1m0 1v2m0 1v1m0 1v2m0 1v1m0 1v2m0 1v1m0 1v2m0 1v1m0 1v2m0 1v1m0 1v2m0 1v1m0 1v2m0 1v2m0 1v1m0 1v2m0 1v1m0 1v2m0 1v2m0 1v1m0 1v2m0 1v1m0 1v2m0 1v1m0 2v1m0 1v2m0 1v1m0 2v1m0 1v1M331.5 199v2m0 4v1m0 4v3m0 4v1m0 4v3m0 4v1m0 4v3m0 4v1m0 4v3m0 5v1m0 4v3m0 4v2m0 4v3m0 5v1m0 5v3m0 4v1m0 5v4m0 4v2m0 5v3m0 5v2m0 5v4m0 12v4m0 5v1m0 7v5m0 13v6m0 5v1m0 9v6m0 17v1m0 1v7m0 24v1m0 5v4m0 1v1m0 1v1m0 116v1m0 1v2m0 1v1m0 2v1m0 1v1m0 2v1m0 1v2m0 1v1m0 1v2m0 1v2m0 1v1m0 1v2m0 1v1m0 1v2m0 1v2m0 1v1m0 1v2m0 1v1m0 1v2m0 1v2m0 1v1m0 1v2m0 1v1m0 1v2m0 1v2m0 1v1m0 1v2m0 1v1m0 1v2m0 1v2m0 1v1m0 1v2m0 1v1m0 1v2m0 1v2m0 1v1m0 1v2m0 1v1M332.5 207v3m0 9v3m0 9v3m0 9v3m0 10v2m0 4v1m0 6v3m0 10v2m0 11v3m0 12v3m0 12v3m0 12v4m0 13v3m0 7v1m0 5v5m0 8v1m0 6v5m0 17v5m0 21v1m0 1v1m0 1v1m0 1v1m0 24v1m0 3v1m0 2v1m0 1v1m0 1v1m0 1v2m0 1v1m0 1v4m0 1v1m0 1v1m0 2v1m0 1v1M333.5 199v2m0 10v1m0 10v2m0 11v1m0 11v2m0 10v3m0 11v2m0 10v3m0 11v3m0 12v3m0 12v3m0 13v3m0 13v5m0 13v5m0 15v5m0 18v5m0 1v1m0 22v2m0 1v1m0 1v1m0 1v1m0 58v1m0 1v1m0 2v1m0 1v1m0 2v1m0 1v1m0 2v1m0 1v2m0 1v1m0 1v2m0 1v1m0 1v2m0 1v1m0 2v1m0 1v2m0 1v1m0 1v2m0 1v1m0 2v1m0 1v2m0 1v1m0 1v2m0 1v1m0 2v1m0 1v2m0 1v1m0 1v2m0 1v1m0 2v1m0 1v1m0 2v1m0 4v1M334.5 201v1m0 131v1m0 15v1m0 17v1m0 17v2m0 20v1m0 22v1m0 1v1m0 30v1m0 1v1m0 1v1m0 1v2m0 1v1m0 139v1m0 2v1m0 1v1m0 2v1m0 2v1m0 1v1m0 2v1m0 1v1m0 2v1m0 1v2m0 1v1m0 2v1m0 1v2m0 1v1m0 1v2m0 1v1m0 2v1m0 1v2m0 1v1m0 1v2m0 1v1m0 2v1m0 1v2m0 1v1m0 1v2m0 1v1m0 2v1m0 1v1m0 2v1m0 4v1m0 2v1M339.5 204v2m0 10v1m0 11v1m0 11v2m0 11v1m0 11v1m0 13v1m0 12v2m0 12v2m0 13v1m0 15v1m0 15v1m0 17v1m0 18v2m0 21v1m0 24v1m0 1v1m0 1v1m0 36v3m0 1v1m0 1v4m0 1v1m0 1v1M340.5 206v2m0 9v3m0 9v3m0 10v2m0 11v2m0 10v3m0 11v3m0 10v4m0 11v3m0 11v4m0 12v4m0 12v5m0 13v5m0 15v5m0 17v1m0 1v3m0 1v1m0 1v1m0 21v1m0 1v1m0 1v1m0 1v1m0 1v1m0 41v1m0 1v1m0 1v2m0 1v1m0 1v1m0 2v1m0 1v1m0 1v2m0 1v1m0 1v2m0 1v1m0 1v2m0 1v1m0 1v2m0 1v1m0 1v2m0 1v1m0 1v2m0 1v1m0 1v2m0 1v2m0 1v1m0 1v2m0 1v1m0 1v2m0 1v2m0 1v1m0 1v2m0 1v1m0 1v2m0 1v2m0 1v1m0 1v2m0 1v1m0 1v2m0 1v2m0 1v1m0 1v2m0 1v1m0 1v2m0 1v1m0 2v1m0 4v1M341.5 199v1m0 4v1m0 4v3m0 4v1m0 4v3m0 4v1m0 4v3m0 4v1m0 4v3m0 9v3m0 6v1m0 4v3m0 10v4m0 4v1m0 5v4m0 4v1m0 6v3m0 11v5m0 11v5m0 13v5m0 13v5m0 15v7m0 19v6m0 1v1m0 23v1m0 1v1m0 3v4m0 1v1m0 1v1m0 137v1m0 1v1m0 2v1m0 1v2m0 1v1m0 1v2m0 1v2m0 1v1m0 1v2m0 1v1m0 1v2m0 1v2m0 1v1m0 1v2m0 1v1m0 1v2m0 1v2m0 1v1m0 1v2m0 1v1m0 1v2m0 1v2m0 1v1m0 1v2m0 1v1m0 1v2m0 1v2m0 1v1m0 1v2m0 1v1m0 1v2m0 1v2m0 1v1m0 1v1m0 2v1m0 2v1M342.5 206v1m0 11v1m0 11v1m0 11v1m0 1v1m0 9v1m0 1v1m0 11v1m0 13v1m0 11v1m0 1v1m0 11v1m0 1v1m0 13v1m0 1v1m0 5v1m0 5v1m0 1v1m0 15v1m0 1v1m0 7v1m0 5v1m0 1v1m0 1v1m0 8v1m0 6v1m0 1v1m0 1v1m0 10v1m0 6v4m0 22v1m0 1v1m0 1v1m0 1v1m0 27v1m0 5v1m0 1v1m0 2v1m0 1v1m0 1v1m0 2v1m0 1v1m0 1v2m0 1v1m0 1v1m0 2v1m0 1v1m0 4v1M343.5 198v1m0 11v1m0 11v1m0 11v1m0 11v1m0 11v1m0 1v1m0 11v1m0 11v1m0 1v1m0 11v1m0 1v1m0 11v1m0 1v1m0 13v1m0 1v1m0 13v1m0 1v1m0 13v1m0 1v1m0 15v1m0 1v1m0 1v1m0 15v1m0 1v1m0 1v1m0 18v1m0 1v1m0 1v1m0 1v1m0 23v1m0 1v1m0 1v1m0 1v1m0 75v1m0 2v1m0 1v1m0 2v1m0 1v2m0 1v1m0 2v1m0 1v1m0 2v1m0 1v2m0 1v1m0 2v1m0 1v1m0 2v1m0 1v2m0 1v1m0 2v1m0 1v1m0 2v1m0 1v2m0 1v1m0 2v1m0 1v1m0 2v1m0 1v2m0 1v1m0 2v1m0 1v1m0 2v1m0 4v1m0 4v1M344.5 200v1m0 47v1m0 25v1m0 57v1m0 15v1m0 17v1m0 17v1m0 21v1m0 24v1m0 1v1m0 30v1m0 1v1m0 1v2m0 1v1m0 1v1m0 168v1m0 2v1m0 4v1m0 2v1m0 1v1m0 2v1m0 1v2m0 1v1m0 2v1m0 1v1m0 2v1m0 1v2m0 1v1m0 2v1m0 1v1m0 2v1m0 4v1M349.5 207v1m0 10v2m0 10v2m0 10v2m0 11v1m0 12v2m0 11v1m0 13v1m0 13v2m0 13v2m0 14v2m0 15v1m0 17v3m0 17v3m0 21v1m0 1v1m0 27v1m0 1v1m0 1v1M350.5 197v1m0 10v3m0 9v2m0 10v2m0 11v2m0 10v3m0 10v3m0 10v3m0 11v3m0 11v4m0 12v3m0 13v3m0 13v5m0 15v5m0 15v5m0 19v1m0 1v6m0 24v2m0 1v1m0 3v4m0 1v1m0 1v1M351.5 199v3m0 9v3m0 4v1m0 4v3m0 4v1m0 4v3m0 4v1m0 4v3m0 11v3m0 4v1m0 4v3m0 6v1m0 4v3m0 11v3m0 6v1m0 4v5m0 4v1m0 6v4m0 5v1m0 6v5m0 13v5m0 15v5m0 15v1m0 1v1m0 1v3m0 20v1m0 1v1m0 1v1m0 1v1m0 1v1m0 30v1m0 2v1m0 1v1m0 1v4m0 1v1m0 1v1m0 1v2m0 1v1m0 1v4m0 1v1m0 1v2m0 1v1m0 1v4m0 1v1m0 1v2m0 1v1m0 1v2m0 1v1m0 1v2m0 1v1m0 1v2m0 1v1m0 1v1m0 2v1M352.5 198v1m0 9v1m0 1v1m0 9v1m0 1v1m0 9v1m0 1v1m0 9v1m0 1v1m0 11v1m0 11v1m0 1v1m0 11v1m0 13v1m0 13v1m0 1v1m0 11v1m0 1v1m0 6v1m0 6v1m0 1v1m0 15v1m0 1v1m0 15v1m0 1v1m0 17v1m0 1v1m0 12v1m0 7v1m0 1v1m0 1v1m0 17v1m0 6v2m0 1v1m0 1v1m0 1v1m0 81v1m0 2v1m0 1v1m0 2v1m0 1v2m0 1v1m0 1v2m0 1v1m0 1v2m0 1v2m0 1v1m0 1v2m0 1v1m0 1v2m0 1v2m0 1v1m0 1v2m0 1v1m0 1v2m0 1v2m0 1v1m0 1v2m0 1v1m0 1v2m0 1v2m0 1v1m0 1v2m0 1v1m0 1v2m0 1v2m0 1v1m0 1v2m0 1v1m0 1v2m0 1v2m0 1v1m0 1v2m0 1v1m0 2v1m0 1v2m0 1v1m0 2v1m0 1v1M353.5 200v1m0 11v1m0 11v1m0 11v1m0 11v1m0 11v1m0 1v1m0 11v1m0 13v1m0 13v1m0 13v1m0 1v1m0 13v1m0 15v1m0 1v1m0 13v1m0 1v1m0 17v1m0 1v1m0 17v1m0 1v1m0 1v1m0 20v1m0 1v1m0 1v1m0 1v1m0 28v1m0 1v1m0 1v2m0 1v1m0 1v1m0 1v1m0 175v1m0 1v1m0 2v1m0 2v1m0 1v1m0 2v1m0 1v2m0 1v1m0 1v2m0 1v1m0 1v2m0 1v2m0 1v1m0 1v2m0 1v1m0 2v1m0 1v2m0 1v1m0 2v1m0 1v1M354.5 352v1m0 17v1m0 19v1m0 21v1m0 27v1m0 1v1m0 44v1m0 1v1m0 2v1m0 1v1m0 1v1m0 2v1m0 1v1m0 2v1m0 1v1m0 1v1m0 2v1m0 1v1m0 2v1m0 1v1m0 2v1m0 1v1m0 2v1m0 1v1m0 2v1m0 1v1m0 2v1m0 1v1m0 2v1m0 4v1M355.5 572v1m0 4v1m0 2v1m0 1v1m0 2v1m0 2v1m0 1v1m0 2v1m0 1v1m0 2v1m0 2v1m0 1v1m0 2v1m0 1v1m0 2v1m0 2v1m0 1v1m0 2v1m0 1v1m0 2v1m0 2v1m0 1v1m0 2v1m0 1v1m0 2v1m0 2v1m0 1v1m0 2v1m0 1v1m0 2v1m0 2v1m0 1v1m0 2v1M359.5 205v2m0 10v2m0 10v2m0 10v2m0 10v2m0 11v2m0 12v1m0 12v2m0 13v1m0 14v2m0 13v3m0 14v2m0 16v4m0 16v4m0 19v6m0 24v1m0 1v6M360.5 207v2m0 10v2m0 10v2m0 10v3m0 10v3m0 9v4m0 10v3m0 11v3m0 11v4m0 12v3m0 13v3m0 13v5m0 15v5m0 15v7m0 18v3m0 1v1m0 1v1m0 25v1m0 1v1m0 4v1m0 1v1m0 1v1m0 1v4m0 1v1M361.5 199v2m0 5v1m0 3v3m0 9v3m0 9v3m0 5v1m0 3v3m0 5v1m0 4v3m0 4v1m0 5v3m0 5v1m0 5v3m0 5v1m0 5v3m0 5v1m0 5v4m0 6v1m0 5v4m0 4v1m0 7v5m0 5v1m0 7v5m0 5v1m0 9v5m0 5v1m0 11v3m0 1v1m0 1v1m0 3v1m0 14v1m0 1v1m0 1v6m0 1v1m0 3v1m0 28v1m0 1v2m0 1v1m0 1v1m0 1v2m0 1v1m0 1v4m0 1v1m0 1v4m0 1v1m0 1v2m0 1v1m0 1v2m0 1v1m0 1v4m0 1v4m0 1v1m0 1v2m0 1v1m0 1v2m0 1v4m0 1v2m0 1v1m0 1v2m0 1v1m0 1v2m0 1v1m0 2v1m0 1v2m0 1v1m0 2v1m0 1v1m0 2v1M362.5 208v1m0 11v1m0 11v1m0 11v1m0 11v1m0 1v1m0 11v1m0 11v1m0 1v1m0 11v1m0 1v1m0 11v1m0 1v1m0 13v1m0 1v1m0 13v1m0 1v1m0 13v1m0 1v1m0 15v1m0 1v1m0 1v1m0 15v1m0 1v1m0 1v1m0 19v1m0 1v1m0 1v1m0 1v1m0 23v1m0 1v1m0 1v1m0 1v2m0 114v1m0 2v1m0 1v1m0 2v1m0 1v2m0 1v1m0 1v2m0 1v2m0 1v1m0 1v2m0 1v1m0 1v2m0 1v2m0 1v1m0 1v2m0 1v1m0 1v2m0 1v2m0 1v1m0 1v2m0 1v1m0 1v2m0 1v2m0 1v1m0 1v2m0 1v1m0 1v2m0 1v2m0 1v1m0 1v2m0 1v1m0 1v2m0 1v2m0 1v1m0 1v2m0 1v1m0 1v2m0 1v1m0 2v1m0 1v1m0 2v1m0 2v1m0 1v1M363.5 200v1m0 9v1m0 1v1m0 9v1m0 1v1m0 9v1m0 1v1m0 9v1m0 1v1m0 11v1m0 11v1m0 1v1m0 11v1m0 1v1m0 11v1m0 1v1m0 11v1m0 1v1m0 13v1m0 1v1m0 13v1m0 1v1m0 15v1m0 1v1m0 15v1m0 1v1m0 1v1m0 17v1m0 1v1m0 1v1m0 19v4m0 1v1m0 1v1m0 30v1m0 1v1m0 1v1m0 1v1m0 2v1m0 1v1m0 1v1m0 2v1m0 1v1m0 1v1M364.5 368v1m0 19v1m0 21v1m0 1v1m0 26v1m0 1v1m0 56v1m0 4v1m0 1v1m0 2v1m0 1v1m0 2v1m0 1v1m0 1v2m0 1v1m0 1v2m0 1v1m0 1v2m0 1v1m0 1v2m0 1v1m0 2v1m0 1v1m0 2v1m0 1v1m0 2v1m0 1v2m0 1v1m0 2v1m0 1v1m0 2v1m0 1v2m0 1v1m0 2v1m0 1v1m0 2v1m0 4v1M365.5 600v1m0 4v1m0 2v1m0 1v1m0 2v1m0 1v2m0 1v1m0 2v1m0 1v1m0 2v1m0 1v2m0 1v1m0 2v1m0 1v1m0 2v1m0 1v2m0 1v1m0 2v1m0 1v1m0 2v1m0 1v2m0 1v1m0 2v1m0 1v1m0 2v1m0 1v2m0 1v1m0 2v1m0 1v1m0 2v1m0 1v2m0 1v1m0 2v1m0 1v1M369.5 201v3m0 9v2m0 10v2m0 10v2m0 11v2m0 10v3m0 11v3m0 10v3m0 11v4m0 11v3m0 13v3m0 13v4m0 14v5m0 15v5m0 17v7m0 22v2m0 1v1m0 1v1m0 1v1m0 1v1M370.5 204v3m0 9v3m0 9v3m0 9v3m0 9v3m0 11v3m0 10v3m0 10v4m0 11v4m0 11v3m0 13v4m0 12v5m0 15v5m0 15v7m0 17v6m0 1v1m0 25v1m0 1v1m0 1v1m0 1v1m0 4v1m0 1v1m0 1v1M371.5 201v2m0 4v2m0 4v2m0 4v2m0 4v2m0 4v2m0 4v2m0 5v2m0 4v2m0 4v2m0 4v3m0 4v2m0 5v3m0 3v3m0 4v3m0 4v3m0 4v4m0 4v3m0 4v3m0 5v3m0 4v4m0 5v4m0 4v3m0 7v4m0 4v3m0 9v4m0 4v3m0 11v4m0 4v1m0 1v1m0 14v1m0 1v1m0 1v1m0 1v1m0 5v1m0 1v1m0 29v1m0 1v1m0 1v4m0 1v1m0 1v4m0 1v1m0 1v4m0 1v1m0 1v2m0 1v1m0 1v1m0 1v2m0 1v1m0 1v2m0 1v1m0 1v2m0 1v1m0 1v4m0 1v4m0 1v4m0 1v2m0 1v1m0 1v2m0 1v1m0 1v2m0 1v1m0 2v1m0 1v1m0 2v1M372.5 204v3m0 9v3m0 9v3m0 9v3m0 9v3m0 11v3m0 10v3m0 10v4m0 11v4m0 11v3m0 13v3m0 13v5m0 13v5m0 15v5m0 19v3m0 1v1m0 1v1m0 23v1m0 1v1m0 1v1m0 1v1m0 1v1m0 104v1m0 2v1m0 1v1m0 2v1m0 1v2m0 1v1m0 1v2m0 1v2m0 1v1m0 1v2m0 1v1m0 1v2m0 1v2m0 1v1m0 1v2m0 1v1m0 1v2m0 1v2m0 1v1m0 1v2m0 1v1m0 1v2m0 1v2m0 1v1m0 1v2m0 1v1m0 1v2m0 1v2m0 1v1m0 1v2m0 1v1m0 1v2m0 1v2m0 1v1m0 1v2m0 1v1m0 1v2m0 1v1m0 2v1m0 1v2m0 1v1m0 2v1m0 1v1m0 2v1M373.5 208v1m0 10v2m0 10v2m0 11v2m0 10v2m0 11v2m0 11v3m0 11v3m0 12v3m0 12v3m0 13v4m0 14v3m0 15v5m0 15v1m0 1v5m0 19v1m0 1v6m0 31v4m0 1v1m0 1v1m0 1v4m0 1v1m0 1v1m0 196v1m0 2v1m0 1v1m0 2v1m0 1v1m0 2v1m0 2v1m0 1v1m0 2v1m0 1v1m0 2v1M374.5 433v1m0 50v1m0 1v1m0 2v1m0 1v1m0 1v1m0 2v1m0 1v1m0 1v2m0 1v1m0 1v2m0 1v1m0 1v1m0 1v2m0 1v1m0 1v2m0 1v1m0 1v2m0 1v1m0 1v2m0 1v1m0 1v2m0 1v1m0 1v2m0 1v1m0 2v1m0 1v2m0 1v1m0 1v2m0 1v1m0 2v1m0 1v1m0 2v1m0 1v2m0 1v1m0 2v1m0 1v1m0 2v1M375.5 582v1m0 1v1m0 2v1m0 4v1m0 2v1m0 1v1m0 2v1m0 1v2m0 1v1m0 2v1m0 1v1m0 2v1m0 1v2m0 1v1m0 2v1m0 1v1m0 2v1m0 1v2m0 1v1m0 2v1m0 1v1m0 2v1m0 1v2m0 1v1m0 2v1m0 1v1m0 2v1m0 1v2m0 1v1m0 2v1m0 1v1m0 2v1m0 1v2m0 1v1m0 2v1m0 1v1m0 2v1m0 1v2m0 1v1m0 2v1m0 1v1M378.5 201v1m0 47v1m0 12v1m0 12v1m0 13v1m0 13v1m0 14v1m0 15v1m0 15v1m0 17v1m0 20v1m0 22v1m0 30v1M379.5 202v3m0 9v3m0 9v3m0 9v3m0 9v3m0 10v3m0 10v4m0 10v4m0 10v4m0 12v3m0 12v4m0 13v5m0 13v5m0 15v7m0 17v3m0 1v3m0 1v1m0 23v3m0 1v1m0 1v1m0 1v4M380.5 201v1m0 3v3m0 9v3m0 9v3m0 5v1m0 3v3m0 5v1m0 4v3m0 10v3m0 5v1m0 4v3m0 6v1m0 4v3m0 6v1m0 4v4m0 12v4m0 12v4m0 13v5m0 14v6m0 16v7m0 19v1m0 1v1m0 1v5m0 30v1m0 1v2m0 1v1m0 1v1m0 1v4m0 1v1m0 1v4m0 1v1m0 1v4m0 1v1m0 1v4m0 1v1m0 1v2m0 1v1m0 1v4m0 1v1m0 1v2m0 1v1m0 1v2m0 1v1m0 1v2m0 1v1m0 1v1m0 2v1M381.5 203v1m0 4v1m0 6v1m0 4v1m0 6v1m0 4v1m0 6v1m0 4v2m0 5v1m0 5v1m0 5v1m0 1v1m0 4v1m0 6v1m0 1v1m0 4v1m0 6v1m0 1v1m0 4v1m0 6v1m0 1v1m0 5v1m0 5v1m0 1v1m0 6v2m0 5v1m0 1v1m0 7v1m0 5v1m0 1v1m0 1v1m0 7v1m0 5v1m0 1v1m0 1v1m0 8v2m0 5v1m0 1v1m0 1v1m0 12v2m0 5v1m0 1v1m0 1v1m0 17v1m0 1v1m0 5v1m0 1v1m0 1v1m0 1v1m0 85v1m0 2v1m0 1v1m0 2v1m0 1v1m0 2v1m0 1v2m0 1v1m0 1v2m0 1v2m0 1v1m0 1v2m0 1v1m0 1v2m0 1v2m0 1v1m0 1v2m0 1v1m0 1v2m0 1v2m0 1v1m0 1v2m0 1v1m0 1v2m0 1v2m0 1v1m0 1v2m0 1v1m0 1v2m0 1v2m0 1v1m0 1v2m0 1v1m0 1v2m0 1v2m0 1v1m0 1v2m0 1v1m0 1v2m0 1v1m0 2v1m0 1v2m0 1v1m0 2v1m0 1v1M382.5 205v1m0 1v1m0 9v1m0 1v1m0 9v1m0 1v1m0 9v1m0 1v1m0 11v1m0 11v1m0 1v1m0 11v1m0 13v1m0 13v1m0 1v1m0 13v1m0 13v1m0 1v1m0 15v1m0 1v1m0 15v1m0 1v1m0 1v1m0 15v1m0 1v1m0 1v1m0 1v1m0 19v2m0 1v1m0 1v1m0 27v1m0 1v1m0 1v1m0 4v1m0 1v1m0 1v1m0 1v1m0 182v1m0 4v1m0 2v1m0 1v1m0 2v1m0 1v2m0 1v1m0 1v2m0 1v2m0 1v1m0 1v2m0 1v1m0 1v2m0 1v1m0 2v1m0 1v2m0 1v1M383.5 245v1m0 11v1m0 55v1m0 15v1m0 15v1m0 17v1m0 17v1m0 1v1m0 19v1m0 1v1m0 1v1m0 22v1m0 1v1m0 1v1m0 1v1m0 39v1m0 2v1m0 1v1m0 1v1m0 2v1m0 1v1m0 1v1m0 2v1m0 1v1m0 1v2m0 1v1m0 1v1m0 2v1m0 1v1m0 1v2m0 1v1m0 1v1m0 2v1m0 1v1m0 2v1m0 1v1m0 2v1m0 1v1m0 2v1m0 1v1m0 2v1m0 1v1m0 2v1m0 4v1M384.5 568v1m0 4v1m0 2v1m0 1v1m0 2v1m0 1v2m0 1v1m0 2v1m0 1v1m0 2v1m0 1v2m0 1v1m0 2v1m0 1v1m0 2v1m0 1v2m0 1v1m0 2v1m0 1v1m0 2v1m0 1v2m0 1v1m0 2v1m0 1v1m0 2v1m0 1v2m0 1v1m0 2v1m0 1v1m0 2v1m0 1v2m0 1v1m0 2v1m0 1v1m0 2v1m0 4v1M388.5 206v1m0 11v1m0 11v1m0 11v1m0 11v1m0 1v1m0 11v1m0 13v1m0 13v1m0 13v1m0 13v1m0 1v1m0 13v1m0 1v1m0 15v1m0 1v1m0 17v1m0 1v1m0 17v1m0 1v1m0 1v1m0 22v3m0 1v1m0 1v1m0 34v1m0 1v4m0 1v1m0 1v1m0 1v4m0 1v1m0 1v4m0 1v1m0 1v2m0 1v1m0 1v1m0 1v2m0 1v1m0 1v2m0 1v1m0 1v1m0 2v1m0 1v1m0 2v1m0 1v1M389.5 198v1m0 9v1m0 1v1m0 9v1m0 1v1m0 9v1m0 1v1m0 9v1m0 1v1m0 11v1m0 11v1m0 1v1m0 11v1m0 1v1m0 11v1m0 1v1m0 11v1m0 1v1m0 13v1m0 1v1m0 13v1m0 1v1m0 1v1m0 13v1m0 1v1m0 1v1m0 15v1m0 1v1m0 1v1m0 17v7m0 22v1m0 1v1m0 1v6m0 1v1m0 78v1m0 4v1m0 2v1m0 1v1m0 1v2m0 1v1m0 1v2m0 1v2m0 1v1m0 1v2m0 1v1m0 1v2m0 1v2m0 1v1m0 1v2m0 1v1m0 1v2m0 1v2m0 1v1m0 1v2m0 1v1m0 1v2m0 1v2m0 1v1m0 1v2m0 1v1m0 1v2m0 1v2m0 1v1m0 1v2m0 1v1m0 1v2m0 1v2m0 1v1m0 1v2m0 1v1m0 1v2m0 1v2m0 1v1m0 1v2m0 1v1m0 1v2m0 1v1m0 2v1m0 4v1M390.5 200v1m0 5v2m0 4v1m0 5v1m0 5v1m0 5v1m0 5v1m0 5v2m0 4v1m0 5v2m0 4v1m0 1v1m0 4v3m0 4v1m0 1v1m0 4v2m0 5v1m0 1v1m0 4v2m0 5v1m0 1v1m0 4v3m0 4v1m0 1v1m0 5v3m0 5v1m0 1v1m0 5v3m0 7v1m0 1v1m0 5v2m0 8v1m0 1v1m0 1v1m0 4v2m0 9v1m0 1v1m0 1v1m0 5v3m0 11v1m0 1v1m0 1v5m0 5v1m0 19v1m0 1v1m0 1v4m0 1v1m0 1v1m0 4v1m0 3v1m0 1v1m0 1v1m0 174v1m0 1v1m0 2v1m0 1v2m0 1v1m0 1v2m0 1v2m0 1v1m0 1v2m0 1v1m0 1v2m0 1v2m0 1v1m0 1v2m0 1v1m0 1v2m0 1v2m0 1v1m0 1v2m0 1v1m0 1v2m0 1v1m0 2v1M391.5 198v1m0 9v3m0 9v3m0 9v3m0 9v3m0 10v3m0 10v3m0 11v3m0 11v3m0 11v4m0 12v3m0 13v4m0 13v5m0 14v5m0 17v7m0 19v1m0 1v6m0 1v1m0 34v1m0 1v2m0 1v1m0 1v1m0 1v2m0 1v1m0 1v1m0 1v2m0 1v1m0 1v1m0 1v2m0 1v1m0 1v2m0 1v1m0 1v1m0 1v2m0 1v1m0 1v2m0 1v1m0 1v2m0 1v1m0 1v2m0 1v1m0 1v2m0 1v1m0 1v2m0 1v1m0 1v1m0 2v1m0 4v1M392.5 200v2m0 9v3m0 9v3m0 9v3m0 10v2m0 11v2m0 11v3m0 10v4m0 11v3m0 12v3m0 12v4m0 13v4m0 14v4m0 16v5m0 18v5m0 1v1m0 22v1m0 1v1m0 1v1m0 1v4m0 1v1m0 1v1m0 95v1m0 1v1m0 2v1m0 4v1m0 2v1m0 1v1m0 2v1m0 1v2m0 1v1m0 1v2m0 1v1m0 2v1m0 1v2m0 1v1m0 1v2m0 1v1m0 2v1m0 1v2m0 1v1m0 1v2m0 1v1m0 2v1m0 1v2m0 1v1m0 1v2m0 1v1m0 2v1m0 1v2m0 1v1m0 1v2m0 1v1m0 2v1m0 1v2m0 1v1m0 1v2m0 1v1m0 2v1m0 1v2m0 1v1m0 2v1m0 1v1m0 2v1m0 4v1M393.5 372v1m0 45v1m0 1v1m0 33v1m0 1v3m0 211v1m0 4v1m0 2v1m0 1v1m0 2v1m0 1v2m0 1v1m0 2v1m0 1v1m0 2v1m0 1v1m0 2v1m0 4v1M398.5 207v2m0 9v3m0 9v3m0 10v2m0 11v3m0 9v3m0 11v3m0 11v3m0 11v5m0 11v4m0 12v5m0 13v5m0 15v5m0 17v7m0 22v1m0 1v6m0 1v1m0 1v1M399.5 198v3m0 9v3m0 4v1m0 4v3m0 4v1m0 4v3m0 5v1m0 3v3m0 5v1m0 4v3m0 5v1m0 4v3m0 11v3m0 11v3m0 12v4m0 11v5m0 13v4m0 6v1m0 7v5m0 15v7m0 18v7m0 1v1m0 24v1m0 1v6m0 1v1m0 1v1m0 1v2m0 3v1M400.5 207v2m0 4v1m0 4v3m0 4v1m0 4v3m0 4v1m0 5v2m0 11v3m0 3v1m0 5v3m0 5v1m0 5v3m0 5v1m0 5v3m0 5v1m0 5v4m0 6v1m0 5v3m0 7v1m0 5v3m0 7v2m0 6v3m0 9v2m0 4v5m0 11v2m0 4v7m0 14v1m0 5v5m0 1v1m0 1v1m0 28v1m0 1v1m0 1v2m0 1v1m0 1v1m0 1v2m0 1v1m0 1v1m0 6v1m0 1v2m0 1v1m0 1v1m0 1v2m0 1v1m0 1v4m0 1v1m0 1v2m0 1v1m0 1v2m0 1v1m0 1v2m0 1v1m0 1v2m0 1v1m0 1v2m0 1v1m0 1v2m0 1v1m0 1v2m0 1v1m0 1v2m0 1v2m0 1v1m0 1v2m0 1v1m0 1v2m0 1v1m0 2v1m0 1v1m0 2v1m0 2v1M401.5 198v3m0 9v3m0 9v3m0 9v3m0 9v3m0 10v3m0 10v3m0 11v3m0 11v3m0 12v4m0 11v5m0 12v4m0 13v5m0 15v7m0 17v1m0 1v3m0 1v1m0 22v1m0 1v1m0 1v4m0 1v1m0 1v1m0 1v1m0 121v1m0 2v1m0 1v1m0 2v1m0 1v2m0 1v1m0 2v1m0 1v2m0 1v1m0 1v2m0 1v2m0 1v1m0 1v2m0 1v1m0 1v2m0 1v2m0 1v1m0 1v2m0 1v1m0 1v2m0 1v2m0 1v1m0 1v2m0 1v1m0 1v2m0 1v2m0 1v1m0 1v2m0 1v1m0 1v2m0 1v2m0 1v1m0 1v2m0 1v1m0 1v2m0 1v2m0 1v1m0 1v2m0 1v1m0 1v2m0 1v1m0 2v1m0 1v2m0 1v1m0 2v1M402.5 213v1m0 11v1m0 11v1m0 24v1m0 13v1m0 13v1m0 13v1m0 15v1m0 15v1m0 15v2m0 16v4m0 18v4m0 20v1m0 1v1m0 1v1m0 1v1m0 31v2m0 1v1m0 5v2m0 1v1m0 1v1m0 1v1m0 1v2m0 1v1m0 1v1m0 8v1m0 2v1m0 1v1M403.5 498v1m0 2v1m0 1v1m0 2v1m0 1v1m0 1v1m0 2v1m0 1v1m0 2v1m0 1v1m0 1v2m0 1v1m0 1v2m0 1v1m0 2v1m0 1v1m0 2v1m0 1v2m0 1v1m0 1v2m0 1v1m0 1v2m0 1v1m0 2v1m0 1v2m0 1v1m0 1v2m0 1v1m0 2v1m0 1v2m0 1v1m0 2v1m0 1v1m0 2v1m0 4v1m0 4v1M404.5 600v1m0 4v1m0 2v1m0 2v1m0 1v1m0 2v1m0 1v1m0 2v1m0 1v2m0 1v1m0 1v2m0 1v1m0 2v1m0 1v2m0 1v1m0 1v2m0 1v1m0 2v1m0 1v2m0 1v1m0 1v2m0 1v1m0 2v1m0 1v2m0 1v1m0 1v2m0 1v1m0 2v1m0 1v2m0 1v1m0 1v2m0 1v1m0 2v1m0 1v1m0 2v1M407.5 200v2m0 9v3m0 9v3m0 9v3m0 10v2m0 11v3m0 10v3m0 10v4m0 11v3m0 12v3m0 13v3m0 13v5m0 14v5m0 16v6m0 20v1m0 1v3m0 1v1m0 29v1m0 1v6m0 3v1m0 1v4m0 1v1m0 1v1m0 1v2m0 1v1m0 1v1m0 1v1m0 2v1m0 1v1m0 4v1M408.5 203v2m0 10v2m0 10v2m0 10v3m0 9v3m0 10v3m0 10v3m0 11v3m0 12v4m0 11v4m0 12v5m0 13v5m0 15v5m0 17v7m0 19v1m0 1v1m0 1v6m0 1v1m0 57v1m0 2v1m0 1v1m0 1v1m0 2v1m0 1v1m0 1v2m0 1v1m0 1v2m0 1v1m0 1v2m0 1v1m0 1v4m0 1v2m0 1v1m0 1v2m0 1v1m0 1v2m0 1v1m0 1v2m0 1v1m0 1v2m0 1v2m0 1v1m0 1v2m0 1v1m0 1v2m0 1v2m0 1v1m0 1v2m0 1v1m0 1v2m0 1v2m0 1v1m0 1v2m0 1v1m0 1v2m0 1v2m0 1v1m0 1v2m0 1v1m0 1v2m0 1v1m0 2v1m0 1v1m0 2v1m0 2v1m0 1v1M409.5 200v1m0 5v2m0 4v1m0 4v2m0 5v1m0 4v2m0 5v1m0 5v2m0 4v1m0 1v1m0 4v2m0 5v1m0 5v2m0 4v1m0 1v1m0 4v2m0 5v1m0 1v1m0 4v3m0 4v1m0 1v1m0 5v3m0 5v1m0 7v2m0 4v1m0 1v1m0 8v2m0 5v1m0 1v1m0 8v3m0 4v1m0 1v1m0 10v4m0 5v1m0 1v1m0 12v5m0 4v3m0 1v1m0 17v1m0 1v1m0 1v1m0 1v4m0 4v4m0 1v1m0 1v1m0 159v1m0 1v1m0 2v1m0 2v1m0 1v1m0 2v1m0 1v2m0 1v1m0 1v2m0 1v2m0 1v1m0 1v2m0 1v1m0 1v2m0 1v2m0 1v1m0 1v2m0 1v1m0 1v2m0 1v2m0 1v1m0 1v2m0 1v1m0 1v2m0 1v2m0 1v1m0 1v2m0 1v1m0 1v2m0 1v1m0 2v1m0 1v1m0 2v1m0 2v1M410.5 204v1m0 9v1m0 1v1m0 9v1m0 1v1m0 9v1m0 1v1m0 11v1m0 11v1m0 1v1m0 11v1m0 1v1m0 11v1m0 1v1m0 11v1m0 1v1m0 13v1m0 1v1m0 13v1m0 1v1m0 13v1m0 1v1m0 1v1m0 13v1m0 1v1m0 1v1m0 17v1m0 1v1m0 1v1m0 1v1m0 19v6m0 1v1m0 1v1m0 32v1m0 1v1m0 1v1m0 1v4m0 1v1m0 1v1m0 1v2m0 1v1m0 1v1m0 1v2m0 1v1m0 1v1m0 1v2m0 1v1m0 1v1m0 1v2m0 1v1m0 1v2m0 1v1m0 1v1m0 2v1m0 1v1m0 2v1m0 1v1M411.5 206v1m0 11v1m0 11v1m0 11v1m0 11v1m0 1v1m0 11v1m0 13v1m0 13v1m0 13v1m0 1v1m0 13v1m0 15v1m0 1v1m0 15v1m0 1v1m0 17v1m0 1v1m0 1v1m0 17v1m0 1v1m0 1v3m0 22v1m0 1v1m0 1v1m0 1v4m0 1v1m0 85v1m0 2v1m0 1v1m0 2v1m0 1v1m0 2v1m0 1v2m0 1v1m0 1v2m0 1v1m0 1v2m0 1v1m0 2v1m0 1v2m0 1v1m0 1v2m0 1v1m0 2v1m0 1v2m0 1v1m0 1v2m0 1v1m0 2v1m0 1v2m0 1v1m0 1v2m0 1v1m0 2v1m0 1v2m0 1v1m0 1v2m0 1v1m0 2v1m0 1v2m0 1v1m0 2v1m0 1v1m0 2v1m0 4v1m0 4v1M412.5 444v1m0 202v1m0 2v1m0 4v1m0 2v1m0 1v1m0 2v1m0 1v2m0 1v1m0 1v2m0 1v1m0 2v1m0 1v2m0 1v1m0 1v2m0 1v1m0 2v1m0 1v2m0 1v1m0 2v1m0 1v1m0 2v1M416.5 201v2m0 9v2m0 10v2m0 10v3m0 10v2m0 11v2m0 11v2m0 12v2m0 12v3m0 12v3m0 13v3m0 14v4m0 15v5m0 17v5m0 21v3m0 1v1m0 1v1m0 1v1m0 37v3m0 1v1m0 1v1m0 1v4m0 1v1m0 1v4m0 1v1m0 1v4m0 1v1m0 1v4m0 1v1m0 1v2m0 1v1m0 1v4m0 1v1m0 1v2m0 1v1m0 1v2m0 1v1m0 1v2m0 1v1m0 1v2m0 1v1m0 1v2m0 1v1m0 2v1m0 1v1m0 2v1M417.5 203v3m0 9v2m0 10v2m0 10v3m0 10v3m0 9v4m0 10v3m0 11v3m0 11v4m0 12v4m0 12v5m0 13v5m0 15v5m0 17v7m0 23v8m0 1v1m0 1v1m0 105v1m0 2v1m0 1v2m0 1v1m0 2v1m0 1v1m0 2v1m0 1v2m0 1v1m0 1v2m0 1v2m0 1v1m0 1v2m0 1v1m0 1v2m0 1v2m0 1v1m0 1v2m0 1v1m0 1v2m0 1v2m0 1v1m0 1v2m0 1v1m0 1v2m0 1v2m0 1v1m0 1v2m0 1v1m0 1v2m0 1v2m0 1v1m0 1v2m0 1v1m0 1v2m0 1v2m0 1v1m0 1v2m0 1v1m0 1v2m0 1v2m0 1v1m0 1v2m0 1v1m0 2v1m0 1v1m0 2v1m0 4v1M418.5 201v1m0 4v3m0 3v2m0 4v2m0 4v2m0 4v2m0 4v2m0 4v3m0 4v2m0 4v3m0 4v2m0 4v3m0 4v3m0 4v3m0 4v3m0 4v3m0 4v3m0 5v3m0 4v2m0 6v4m0 4v2m0 7v4m0 4v3m0 8v4m0 4v2m0 10v6m0 4v2m0 12v7m0 5v3m0 20v1m0 1v6m0 1v1m0 1v1m0 1v4m0 7v1m0 1v1m0 1v1m0 203v1m0 1v1m0 2v1m0 1v2m0 1v1m0 2v1m0 1v1m0 2v1m0 1v1m0 2v1m0 2v1M419.5 203v3m0 9v3m0 9v3m0 9v3m0 9v3m0 11v3m0 10v3m0 11v4m0 11v3m0 11v5m0 11v5m0 13v5m0 15v5m0 15v1m0 1v5m0 22v3m0 1v1m0 1v1m0 1v1m0 41v1m0 1v1m0 2v1m0 1v1m0 1v1m0 2v1m0 1v1m0 1v4m0 1v1m0 1v2m0 1v1m0 1v1m0 1v2m0 1v1m0 1v2m0 1v1m0 1v2m0 1v1m0 1v2m0 1v1m0 1v1m0 2v1m0 1v1m0 2v1m0 1v2m0 1v1m0 1v2m0 1v1m0 1v2m0 1v1m0 2v1m0 1v1m0 2v1m0 4v1m0 2v1m0 4v1M420.5 206v2m0 10v2m0 10v2m0 11v2m0 10v3m0 10v3m0 10v4m0 11v3m0 12v3m0 12v4m0 13v3m0 15v5m0 15v5m0 17v1m0 1v1m0 1v1m0 1v3m0 22v1m0 1v6m0 1v1m0 1v1m0 1v1m0 1v1m0 123v1m0 2v1m0 1v1m0 2v1m0 2v1m0 1v1m0 2v1m0 1v1m0 2v1m0 1v2m0 1v1m0 2v1m0 1v2m0 1v1m0 1v2m0 1v1m0 2v1m0 1v2m0 1v1m0 1v2m0 1v1m0 2v1m0 1v2m0 1v1m0 1v2m0 1v1m0 2v1m0 1v2m0 1v1m0 1v2m0 1v1m0 2v1m0 1v2m0 1v1m0 1v2m0 1v1m0 2v1m0 1v2m0 1v1m0 1v2m0 1v1m0 2v1m0 1v1m0 2v1M421.5 387v1m0 25v1m0 38v1m0 1v1m0 1v1m0 1v1M425.5 197v1m0 10v2m0 10v2m0 10v2m0 11v1m0 11v3m0 11v1m0 12v2m0 13v1m0 14v2m0 13v3m0 15v3m0 15v3m0 19v3m0 23v1m0 1v3m0 1v1m0 42v4m0 1v1m0 1v1m0 1v4m0 1v1m0 1v1m0 1v2m0 1v1m0 1v1m0 1v2m0 1v1m0 1v4m0 1v1m0 1v2m0 1v1m0 1v1m0 1v2m0 1v1m0 1v2m0 1v1m0 1v2m0 1v1m0 1v1m0 2v1m0 1v1m0 2v1m0 1v1M426.5 199v3m0 9v2m0 10v2m0 10v2m0 10v3m0 10v3m0 10v3m0 11v3m0 11v4m0 12v3m0 13v4m0 14v4m0 14v7m0 15v1m0 1v5m0 1v1m0 21v1m0 1v1m0 1v6m0 1v1m0 101v1m0 4v1m0 2v1m0 1v1m0 2v1m0 1v1m0 2v1m0 1v2m0 1v1m0 1v2m0 1v2m0 1v1m0 1v2m0 1v1m0 1v2m0 1v2m0 1v1m0 1v2m0 1v1m0 1v2m0 1v2m0 1v1m0 1v2m0 1v1m0 1v2m0 1v2m0 1v1m0 1v2m0 1v1m0 1v2m0 1v2m0 1v1m0 1v2m0 1v1m0 1v2m0 1v2m0 1v1m0 1v2m0 1v1m0 1v2m0 1v2m0 1v1m0 1v2m0 1v1m0 2v1m0 1v1m0 2v1m0 4v1M427.5 202v2m0 4v2m0 3v3m0 4v1m0 4v3m0 4v2m0 3v3m0 5v2m0 4v2m0 4v2m0 4v3m0 5v2m0 4v3m0 4v3m0 4v3m0 5v2m0 4v4m0 5v1m0 6v4m0 4v2m0 6v5m0 5v2m0 6v5m0 5v2m0 10v5m0 5v2m0 12v7m0 5v2m0 19v1m0 1v1m0 1v1m0 1v1m0 1v6m0 1v1m0 1v1m0 1v1m0 210v1m0 1v1m0 2v1m0 1v2m0 1v1m0 2v1m0 1v1m0 2v1m0 1v2m0 1v1m0 2v1m0 1v1m0 2v1M428.5 199v2m0 9v3m0 9v3m0 9v3m0 10v2m0 11v3m0 11v2m0 11v3m0 12v3m0 11v4m0 12v5m0 13v3m0 15v5m0 17v7m0 19v8m0 1v1m0 40v1m0 1v1m0 2v1m0 1v1m0 1v1m0 2v1m0 1v1m0 1v1m0 1v2m0 1v1m0 1v1m0 1v2m0 1v1m0 1v2m0 1v1m0 1v1m0 1v2m0 1v1m0 1v2m0 1v1m0 1v1m0 2v1m0 1v1m0 1v2m0 1v1m0 1v2m0 1v1m0 1v2m0 1v1m0 2v1m0 1v1m0 2v1m0 1v1m0 2v1m0 2v1m0 1v1m0 2v1M429.5 202v3m0 9v2m0 10v2m0 10v3m0 9v3m0 11v3m0 10v3m0 11v3m0 12v3m0 12v4m0 13v3m0 14v4m0 15v7m0 17v7m0 24v1m0 1v1m0 1v1m0 1v6m0 1v1m0 121v1m0 2v1m0 1v1m0 2v1m0 2v1m0 1v1m0 2v1m0 1v2m0 1v1m0 1v2m0 1v1m0 2v1m0 1v2m0 1v1m0 1v2m0 1v1m0 2v1m0 1v2m0 1v1m0 1v2m0 1v1m0 2v1m0 1v2m0 1v1m0 1v2m0 1v1m0 2v1m0 1v2m0 1v1m0 1v2m0 1v1m0 2v1m0 1v2m0 1v1m0 1v2m0 1v1m0 2v1m0 1v2m0 1v1m0 2v1m0 1v1m0 2v1m0 1v1m0 2v1M430.5 360v1m0 21v1m0 23v1m0 1v1m0 35v1m0 1v1m0 1v4m0 1v1m0 1v1M434.5 204v1m0 11v1m0 11v1m0 11v1m0 11v1m0 13v1m0 11v1m0 1v1m0 13v1m0 13v1m0 15v1m0 15v1m0 1v1m0 17v1m0 19v1m0 1v1m0 1v1m0 22v4m0 1v1m0 49v1m0 1v1m0 1v1m0 1v4m0 1v1m0 1v4m0 1v1m0 1v1m0 1v2m0 1v1m0 1v1m0 1v2m0 1v1m0 1v4m0 1v1m0 1v2m0 1v1m0 1v2m0 1v1m0 1v4m0 1v1m0 2v1m0 1v1m0 2v1m0 1v1m0 2v1m0 1v1m0 2v1m0 1v1M435.5 206v1m0 11v1m0 11v1m0 11v1m0 1v1m0 9v1m0 1v1m0 11v1m0 1v1m0 11v1m0 1v1m0 11v1m0 1v1m0 11v1m0 1v1m0 1v1m0 11v1m0 1v1m0 1v1m0 13v1m0 1v1m0 1v1m0 13v1m0 1v1m0 1v1m0 1v1m0 17v1m0 1v1m0 1v1m0 1v1m0 21v10m0 1v1m0 115v1m0 4v1m0 2v1m0 1v1m0 2v1m0 1v2m0 1v1m0 1v2m0 1v1m0 1v2m0 1v2m0 1v1m0 1v2m0 1v1m0 1v2m0 1v2m0 1v1m0 1v2m0 1v1m0 1v2m0 1v2m0 1v1m0 1v2m0 1v1m0 1v2m0 1v2m0 1v1m0 1v2m0 1v1m0 1v2m0 1v2m0 1v1m0 1v2m0 1v1m0 1v2m0 1v2m0 1v1m0 1v2m0 1v1m0 1v2m0 1v2m0 1v1m0 1v2m0 1v1m0 2v1m0 1v1m0 2v1m0 2v1m0 1v1m0 2v1m0 1v1M436.5 198v1m0 4v2m0 3v1m0 1v1m0 4v2m0 3v1m0 1v1m0 4v2m0 3v1m0 1v1m0 4v2m0 5v1m0 5v1m0 5v1m0 1v1m0 4v2m0 5v1m0 5v2m0 6v1m0 1v1m0 4v2m0 5v1m0 1v1m0 4v2m0 7v1m0 1v1m0 4v2m0 7v1m0 1v1m0 5v1m0 9v1m0 1v1m0 1v1m0 4v2m0 9v1m0 1v1m0 1v1m0 5v1m0 13v1m0 1v1m0 1v1m0 1v1m0 7v1m0 18v1m0 1v1m0 1v1m0 1v1m0 1v6m0 1v1m0 1v1m0 1v1m0 1v1m0 1v1m0 225v1m0 4v1m0 2v1m0 1v1M437.5 206v1m0 10v2m0 10v2m0 11v2m0 10v3m0 11v2m0 12v2m0 12v3m0 11v3m0 13v3m0 15v3m0 15v5m0 17v5m0 13v1m0 7v1m0 1v1m0 1v3m0 1v1m0 34v1m0 23v1m0 1v1m0 2v1m0 1v1m0 1v1m0 1v2m0 1v1m0 1v4m0 1v1m0 1v2m0 1v1m0 1v1m0 2v1m0 1v1m0 1v2m0 1v1m0 1v2m0 1v1m0 1v2m0 1v1m0 1v2m0 1v1m0 1v2m0 1v1m0 1v2m0 1v1m0 2v1m0 1v1m0 2v1m0 1v1m0 2v1m0 4v1M438.5 198v1m0 9v3m0 9v3m0 9v3m0 10v2m0 11v3m0 10v3m0 11v3m0 12v3m0 12v3m0 14v3m0 13v5m0 15v5m0 19v5m0 1v1m0 23v1m0 1v1m0 1v1m0 1v6m0 1v1m0 138v1m0 4v1m0 2v1m0 1v1m0 2v1m0 1v1m0 2v1m0 2v1m0 1v1m0 2v1m0 1v2m0 1v1m0 1v2m0 1v1m0 2v1m0 1v2m0 1v1m0 1v2m0 1v1m0 2v1m0 1v2m0 1v1m0 1v2m0 1v1m0 2v1m0 1v2m0 1v1m0 1v2m0 1v1m0 2v1m0 1v2m0 1v1m0 1v2m0 1v1m0 2v1m0 1v1m0 2v1m0 2v1m0 1v1m0 2v1m0 1v1m0 2v1M439.5 354v1m0 45v3m0 36v1m0 1v1m0 1v4m0 1v1m0 1v1m0 1v1M443.5 205v3m0 9v2m0 10v2m0 11v2m0 10v2m0 12v2m0 12v2m0 12v2m0 13v3m0 14v2m0 15v3m0 17v5m0 19v5m0 1v1m0 29v8m0 1v1m0 1v1m0 1v1M444.5 197v1m0 10v2m0 9v3m0 9v3m0 10v3m0 10v3m0 11v3m0 11v3m0 11v3m0 13v3m0 13v5m0 13v5m0 17v5m0 21v9m0 34v1m0 1v1m0 1v2m0 1v1m0 1v1m0 1v1m0 1v4m0 1v1m0 3v4m0 1v1m0 1v1m0 1v4m0 1v1m0 1v4m0 1v1m0 1v1m0 1v2m0 1v1m0 1v4m0 1v1m0 1v2m0 1v1m0 1v4m0 1v1m0 1v2m0 1v1m0 1v2m0 1v1m0 1v2m0 1v1m0 1v2m0 1v1m0 1v2m0 1v1m0 1v2m0 1v1m0 1v2m0 1v1m0 2v1m0 1v1m0 2v1m0 2v1m0 1v1m0 2v1m0 1v1m0 2v1M445.5 199v3m0 3v2m0 4v2m0 4v2m0 4v2m0 4v2m0 4v3m0 4v1m0 4v3m0 4v3m0 4v3m0 4v1m0 6v2m0 5v1m0 6v3m0 4v3m0 4v4m0 4v2m0 6v4m0 5v1m0 8v4m0 4v2m0 8v6m0 4v2m0 10v1m0 1v6m0 4v2m0 16v1m0 1v3m0 1v1m0 1v3m0 1v1m0 5v1m0 1v1m0 142v1m0 2v1m0 1v1m0 2v1m0 2v1m0 1v1m0 2v1m0 1v2m0 1v1m0 1v2m0 1v1m0 1v2m0 1v2m0 1v1m0 1v2m0 1v1m0 1v2m0 1v2m0 1v1m0 1v2m0 1v1m0 1v2m0 1v2m0 1v1m0 1v2m0 1v1m0 1v2m0 1v2m0 1v1m0 1v2m0 1v1m0 1v2m0 1v2m0 1v1m0 1v2m0 1v1m0 1v2m0 1v2m0 1v1m0 1v2m0 1v1m0 2v1m0 1v2m0 1v1m0 1v2m0 1v1m0 2v1M446.5 198v1m0 9v2m0 10v2m0 10v3m0 9v3m0 11v2m0 10v3m0 11v3m0 13v3m0 11v4m0 14v3m0 15v3m0 17v5m0 19v7m0 30v1m0 1v1m0 1v6m0 1v1m0 1v1m0 1v1m0 1v4m0 1v1m0 1v1m0 1v1m0 4v1m0 1v1m0 1v1m0 1v1m0 2v1m0 1v1m0 1v1M447.5 200v1m0 10v2m0 10v2m0 11v1m0 11v3m0 10v2m0 11v3m0 11v3m0 13v3m0 13v3m0 13v5m0 13v1m0 1v3m0 17v7m0 21v1m0 1v1m0 1v5m0 81v1m0 4v1m0 1v1m0 2v1m0 1v1m0 1v1m0 2v1m0 1v1m0 2v1m0 1v1m0 2v1m0 1v1m0 1v2m0 1v1m0 2v1m0 1v1m0 2v1m0 1v2m0 1v1m0 1v2m0 1v1m0 2v1m0 1v1m0 2v1m0 1v1m0 2v1m0 2v1m0 1v1m0 2v1m0 1v1m0 2v1m0 4v1m0 2v1M448.5 384v1m0 32v3m0 186v1m0 4v1m0 2v1m0 1v1m0 2v1m0 1v1m0 2v1m0 2v1m0 1v1m0 2v1m0 1v1m0 2v1m0 2v1m0 1v1m0 2v1m0 1v2m0 1v1m0 1v2m0 1v1m0 2v1m0 1v2m0 1v1m0 1v2m0 1v1m0 2v1m0 1v2m0 1v1m0 1v2m0 1v1m0 2v1m0 1v1m0 2v1m0 2v1m0 1v1m0 2v1M452.5 206v2m0 10v2m0 10v2m0 10v3m0 10v2m0 11v3m0 11v3m0 12v3m0 12v4m0 13v4m0 15v5m0 16v6m0 21v9m0 1v1M453.5 198v1m0 9v3m0 9v3m0 9v3m0 10v3m0 10v3m0 11v3m0 11v3m0 11v5m0 11v5m0 13v5m0 15v5m0 17v7m0 1v1m0 23v1m0 1v5m0 1v3m0 1v1m0 1v1m0 1v1M454.5 200v2m0 5v1m0 4v2m0 5v1m0 4v2m0 5v1m0 4v2m0 5v1m0 4v3m0 4v1m0 1v1m0 4v2m0 5v1m0 6v2m0 5v1m0 6v3m0 4v1m0 1v1m0 6v2m0 5v1m0 1v1m0 6v3m0 4v1m0 1v1m0 8v4m0 5v1m0 10v5m0 4v1m0 1v1m0 14v6m0 5v1m0 1v1m0 26v1m0 1v6m0 1v1m0 1v1m0 1v1m0 1v6m0 1v1m0 1v1m0 1v1m0 1v4m0 5v4m0 1v1m0 1v1m0 1v4m0 1v1m0 1v4m0 1v1m0 1v4m0 1v1m0 1v2m0 1v1m0 1v1m0 1v2m0 1v1m0 1v2m0 1v1m0 1v1m0 2v1m0 1v1m0 1v2m0 1v1m0 1v2m0 1v1m0 2v1m0 1v1m0 2v1m0 1v1m0 2v1m0 1v1M455.5 209v1m0 11v1m0 11v1m0 11v1m0 1v1m0 11v1m0 13v1m0 13v1m0 13v1m0 1v1m0 13v1m0 1v1m0 15v1m0 1v1m0 15v1m0 1v1m0 1v1m0 17v1m0 1v1m0 1v1m0 23v1m0 1v1m0 1v1m0 1v1m0 1v1m0 1v1m0 129v1m0 4v1m0 2v1m0 1v1m0 2v1m0 1v1m0 2v1m0 2v1m0 1v1m0 2v1m0 1v2m0 1v1m0 1v2m0 1v1m0 2v1m0 1v2m0 1v1m0 1v2m0 1v1m0 2v1m0 1v2m0 1v1m0 1v2m0 1v1m0 2v1m0 1v2m0 1v1m0 1v2m0 1v1m0 2v1m0 1v2m0 1v1m0 1v2m0 1v1m0 2v1m0 1v2m0 1v1m0 1v2m0 1v1m0 2v1m0 1v2m0 1v1m0 1v2m0 1v1m0 2v1m0 1v2m0 1v1m0 2v1m0 1v1m0 2v1m0 1v1m0 2v1M456.5 201v1m0 11v1m0 11v1m0 11v1m0 11v1m0 13v1m0 13v1m0 13v1m0 13v1m0 1v1m0 13v1m0 1v1m0 15v1m0 1v1m0 1v1m0 15v1m0 1v1m0 1v1m0 19v1m0 1v1m0 1v1m0 1v1m0 30v1m0 1v1m0 1v1m0 1v1m0 1v1m0 1v1m0 1v1m0 1v1m0 1v4m0 1v1m0 1v1m0 1v1m0 1v1m0 1v1m0 4v1M457.5 481v1m0 4v1m0 1v1m0 1v1m0 2v1m0 1v1m0 4v1m0 1v1m0 2v1m0 1v1m0 2v1m0 1v1m0 1v2m0 1v1m0 1v1m0 2v1m0 1v1m0 2v1m0 1v1m0 2v1m0 4v1m0 4v1m0 4v1m0 2v1M458.5 594v1m0 4v1m0 2v1m0 4v1m0 2v1m0 1v1m0 2v1m0 2v1m0 1v1m0 2v1m0 1v1m0 2v1m0 1v2m0 1v1m0 2v1m0 1v1m0 2v1m0 1v2m0 1v1m0 2v1m0 1v1m0 2v1m0 1v2m0 1v1m0 2v1m0 1v1m0 2v1m0 4v1m0 2v1m0 1v1M460.5 252v1m0 41v1M461.5 204v3m0 9v2m0 10v3m0 9v3m0 10v3m0 10v3m0 11v3m0 12v4m0 11v5m0 13v5m0 13v7m0 15v1m0 1v7m0 21v1m0 1v5m0 1v1m0 1v5m0 1v1M462.5 207v2m0 9v3m0 10v2m0 6v1m0 4v3m0 9v3m0 6v1m0 4v3m0 6v1m0 4v3m0 13v3m0 13v3m0 15v4m0 16v5m0 19v9m0 29v1m0 1v1m0 1v1m0 1v10m0 1v1m0 1v1m0 1v1m0 1v6m0 1v1m0 1v1m0 1v1m0 1v4m0 1v1m0 4v3m0 1v1m0 1v1m0 1v4m0 1v1m0 1v1m0 1v2m0 1v1m0 1v1m0 1v2m0 1v1m0 1v1m0 1v2m0 1v1m0 1v2m0 1v1m0 1v1m0 2v1m0 1v1m0 1v1m0 2v1m0 1v1m0 2v1m0 1v1m0 2v1m0 1v1M463.5 198v1m0 5v2m0 4v1m0 4v3m0 4v1m0 4v3m0 4v1m0 5v3m0 4v1m0 5v3m0 4v1m0 6v3m0 4v1m0 6v3m0 4v2m0 5v3m0 6v2m0 5v3m0 6v3m0 4v5m0 6v3m0 4v5m0 10v3m0 4v7m0 14v5m0 4v9m0 1v1m0 120v1m0 1v1m0 2v1m0 1v1m0 2v1m0 1v2m0 1v1m0 2v1m0 1v1m0 2v1m0 1v2m0 1v1m0 1v2m0 1v1m0 2v1m0 1v2m0 1v1m0 1v2m0 1v1m0 2v1m0 1v2m0 1v1m0 1v31m0 1v1m0 1v2m0 1v1m0 1v2m0 1v1m0 2v1m0 1v2m0 1v1m0 1v2m0 1v1m0 2v1m0 1v2m0 1v1m0 2v1m0 1v1m0 2v1m0 1v1m0 2v1m0 2v1m0 1v1m0 2v1m0 1v1M464.5 207v3m0 9v3m0 9v3m0 9v3m0 11v3m0 10v3m0 12v3m0 11v4m0 12v5m0 13v5m0 15v5m0 17v9m0 27v10m0 1v1m0 1v1m0 1v1m0 1v1m0 1v1m0 1v1m0 1v2m0 1v1m0 1v1m0 1v1m0 1v1m0 1v1m0 227v1m0 2v1m0 1v1m0 2v1m0 1v1m0 2v1m0 2v1m0 1v1M465.5 210v1m0 11v1m0 11v1m0 12v1m0 12v1m0 13v1m0 14v1m0 13v3m0 15v2m0 16v2m0 18v4m0 22v8m0 63v1m0 6v1m0 1v1m0 1v1m0 2v1m0 1v1m0 1v1m0 2v1m0 1v1m0 1v1m0 1v2m0 1v1m0 1v1m0 1v2m0 1v1m0 1v2m0 1v1m0 1v1m0 1v2m0 1v1m0 1v2m0 1v1m0 1v1m0 1v2m0 1v1m0 1v2m0 1v1m0 2v1m0 1v1m0 2v1m0 1v1m0 2v1m0 1v1m0 2v1m0 1v1m0 2v1m0 4v1M466.5 563v1m0 4v1m0 2v1m0 4v1m0 2v1m0 1v1m0 2v1m0 1v2m0 1v1m0 2v1m0 1v1m0 2v1m0 1v2m0 1v1m0 2v1m0 1v1m0 2v1m0 1v2m0 1v1m0 1v2m0 1v1m0 2v1m0 1v2m0 1v1m0 1v2m0 1v1m0 2v1m0 1v2m0 1v1m0 1v2m0 1v1m0 2v1m0 1v2m0 1v1m0 2v1m0 1v1m0 2v1m0 1v2m0 1v1m0 2v1m0 1v1m0 2v1m0 4v1M469.5 199v1m0 11v1m0 10v2m0 11v1m0 11v2m0 12v1m0 12v2m0 13v2m0 14v1m0 15v3m0 16v3m0 19v4m0 27v6M470.5 201v2m0 9v3m0 9v3m0 10v2m0 10v3m0 11v3m0 11v3m0 12v3m0 12v4m0 13v5m0 15v5m0 18v8m0 27v13m0 1v1m0 1v1m0 1v3m0 1v1m0 1v1m0 1v1m0 1v4m0 1v1m0 1v1m0 1v1m0 1v1m0 1v1m0 1v1m0 2v1m0 1v1m0 1v1m0 1v1m0 8v1m0 4v1m0 1v1m0 1v1M471.5 199v1m0 4v2m0 5v1m0 3v3m0 5v1m0 4v2m0 5v1m0 4v3m0 4v1m0 5v3m0 5v1m0 5v3m0 5v1m0 5v3m0 5v1m0 6v4m0 5v1m0 6v4m0 5v1m0 8v5m0 6v1m0 9v6m0 6v1m0 13v9m0 7v1m0 69v1m0 4v1m0 1v1m0 1v1m0 2v1m0 1v1m0 1v1m0 1v112m0 1v2m0 1v1m0 2v1m0 1v1m0 2v1m0 2v1m0 1v1m0 2v1m0 1v1m0 2v1m0 4v1M472.5 201v1m0 11v1m0 11v1m0 11v1m0 5v1m0 7v1m0 11v1m0 1v1m0 11v1m0 1v1m0 13v1m0 6v1m0 6v1m0 1v1m0 15v1m0 1v1m0 15v1m0 1v1m0 1v1m0 17v1m0 1v1m0 1v1m0 1v1m0 16v1m0 8v1m0 1v1m0 1v1m0 1v1m0 1v1m0 1v1m0 1v1m0 1v1m0 193v1m0 4v1m0 2v1m0 1v1m0 2v1m0 2v1m0 1v1m0 2v1m0 1v2m0 1v1m0 1v38m0 1v2m0 1v1m0 1v2m0 1v2m0 1v1m0 1v2m0 1v1m0 1v2m0 1v2m0 1v1m0 2v1m0 1v1M473.5 205v1m0 9v1m0 1v1m0 11v1m0 11v1m0 11v1m0 1v1m0 11v1m0 1v1m0 11v1m0 1v1m0 13v1m0 1v1m0 13v1m0 1v1m0 15v1m0 1v1m0 17v1m0 1v1m0 21v1m0 1v1m0 1v1m0 1v1m0 46v1m0 1v1m0 1v1m0 1v1m0 1v1m0 1v1m0 2v1m0 1v1m0 1v1m0 1v1m0 1v1m0 1v2m0 1v1m0 1v1m0 1v1m0 3v2m0 1v1m0 1v1m0 1v1m0 2v1m0 1v1m0 1v1m0 4v1m0 1v1m0 4v1m0 1v1m0 4v1m0 1v1M474.5 243v1m0 91v1m0 21v1m0 27v1m0 1v1m0 136v1m0 4v1m0 2v1m0 1v1m0 2v1m0 1v1m0 2v1m0 4v1m0 2v1m0 1v1m0 2v1m0 1v1m0 2v1m0 2v1m0 1v1m0 2v1m0 1v1m0 2v1m0 2v1m0 1v1m0 2v1m0 1v1m0 2v1m0 2v1m0 1v1m0 2v1m0 1v1m0 2v1m0 2v1m0 1v1m0 2v1m0 1v1m0 2v1m0 4v1m0 2v1m0 4v1M475.5 664v1m0 4v1m0 2v1m0 4v1m0 2v1m0 1v1m0 2v1m0 4v1M478.5 203v1m0 9v1m0 1v1m0 11v1m0 11v1m0 11v1m0 1v1m0 11v1m0 1v1m0 11v1m0 1v1m0 11v1m0 1v1m0 1v1m0 13v1m0 1v1m0 15v1m0 1v1m0 17v1m0 1v1m0 1v1m0 21v1m0 1v1m0 1v1m0 1v1m0 1v1m0 1v1M479.5 205v1m0 1v1m0 9v1m0 1v1m0 9v1m0 1v1m0 9v1m0 1v1m0 11v1m0 1v1m0 11v1m0 1v1m0 11v1m0 1v1m0 13v1m0 1v1m0 13v1m0 1v1m0 1v1m0 13v1m0 1v1m0 1v1m0 1v1m0 15v1m0 1v1m0 1v1m0 1v1m0 1v1m0 23v1m0 1v1m0 1v1m0 1v1m0 1v1m0 1v1m0 1v1m0 1v1m0 1v1m0 1v1m0 1v1M480.5 197v1m0 4v2m0 5v1m0 4v2m0 5v1m0 4v2m0 5v1m0 4v3m0 4v1m0 5v3m0 5v1m0 5v2m0 6v1m0 5v3m0 5v1m0 6v3m0 6v1m0 1v1m0 4v3m0 8v1m0 6v3m0 10v1m0 1v1m0 4v5m0 12v1m0 1v1m0 1v1m0 4v6m0 29v1m0 1v1m0 1v1m0 1v1m0 1v1m0 1v1m0 1v1m0 2v1m0 1v1m0 1v1m0 1v1m0 1v1m0 1v1m0 1v1m0 1v4m0 1v1m0 1v1m0 1v1m0 1v10m0 3v112m0 2v1m0 1v1m0 2v1M481.5 205v2m0 10v2m0 10v2m0 11v2m0 11v2m0 12v2m0 12v3m0 13v3m0 13v3m0 16v4m0 18v5m0 24v9m0 153v1m0 2v1m0 1v1m0 2v121m0 1v1m0 1v2m0 1v2m0 1v1m0 1v2m0 1v1m0 2v1m0 1v1m0 2v1M482.5 208v2m0 10v2m0 11v1m0 11v2m0 12v1m0 13v1m0 13v2m0 14v3m0 15v2m0 17v4m0 20v6m0 35v1m0 1v3m0 1v1m0 1v1m0 1v1m0 1v1m0 1v1m0 1v1m0 1v1m0 1v1m0 1v1m0 1v1m0 1v4m0 1v1m0 1v1m0 1v1m0 1v1m0 1v1m0 4v1m0 1v1m0 1v1m0 1v1m0 2v1m0 3v1m0 1v1m0 4v1m0 1v1M483.5 480v1m0 4v1m0 1v1m0 2v1m0 1v1m0 1v1m0 2v1m0 1v1m0 2v1m0 1v1m0 1v1m0 2v1m0 1v1m0 2v1m0 1v1m0 2v1m0 1v1m0 1v2m0 1v1m0 1v2m0 1v1m0 2v1m0 1v1m0 2v1m0 1v1m0 2v1m0 1v1m0 2v1m0 2v1m0 1v1m0 2v1m0 1v1m0 2v1m0 2v1m0 1v1m0 2v1m0 1v1m0 2v1m0 4v1m0 2v1m0 4v1M484.5 601v1m0 4v1m0 2v1m0 4v1m0 2v1m0 1v1m0 2v1m0 1v1m0 2v1m0 2v1m0 1v1m0 2v1m0 1v1m0 2v1m0 2v1m0 1v1m0 2v1m0 1v1m0 2v1m0 2v1m0 1v1m0 2v1m0 1v1m0 2v1m0 2v1m0 1v1m0 2v1m0 1v1m0 2v1m0 2v1m0 1v1m0 2v1m0 1v1m0 2v1m0 4v1M486.5 206v1m0 11v1m0 11v1m0 11v2m0 12v1m0 12v2m0 13v2m0 13v3m0 14v3m0 16v3m0 20v4m0 31v9m0 1v1M487.5 197v1m0 10v2m0 9v3m0 10v3m0 10v3m0 10v3m0 10v4m0 11v4m0 12v4m0 13v5m0 15v6m0 18v9m0 38v1m0 1v1m0 1v1m0 1v1m0 1v1m0 1v1m0 1v1m0 1v1m0 1v1m0 1v1m0 1v1m0 1v4m0 1v1m0 1v1m0 1v1m0 1v16m0 3v113m0 1v1m0 2v1M488.5 199v3m0 4v1m0 4v2m0 5v1m0 4v3m0 4v1m0 4v3m0 4v2m0 4v3m0 5v1m0 4v4m0 4v2m0 4v4m0 5v2m0 5v3m0 5v3m0 5v5m0 4v2m0 7v5m0 5v3m0 8v7m0 5v2m0 14v12m0 7v1m0 1v1m0 139v1m0 4v1m0 3v132m0 1v2m0 1v1m0 2v1m0 1v2m0 1v1m0 2v1M494.5 201v1m0 35v1m0 55v1m0 15v1m0 39v1m0 29v1M495.5 203v1m0 9v1m0 1v1m0 9v1m0 1v1m0 11v1m0 11v1m0 1v1m0 11v1m0 1v1m0 11v1m0 1v1m0 13v1m0 1v1m0 13v1m0 1v1m0 1v1m0 13v1m0 1v1m0 1v1m0 17v1m0 1v1m0 1v1m0 1v1m0 23v1m0 1v1m0 1v1m0 1v1m0 1v1m0 1v1m0 1v1m0 1v1m0 1v1M496.5 205v1m0 1v1m0 9v1m0 1v1m0 9v1m0 1v1m0 5v1m0 3v1m0 1v1m0 11v1m0 1v1m0 11v1m0 1v1m0 11v1m0 1v1m0 13v1m0 1v1m0 7v1m0 7v1m0 1v1m0 15v1m0 1v1m0 1v1m0 1v1m0 17v1m0 1v1m0 1v1m0 1v1m0 1v1m0 31v1m0 1v1m0 1v1m0 1v1m0 1v1m0 1v1m0 1v1m0 1v1m0 1v1m0 1v6m0 1v1m0 1v3m0 1v1m0 1v1m0 1v1m0 1v23m0 3v92m0 1v1m0 2v1m0 1v1M497.5 202v2m0 9v3m0 10v2m0 10v3m0 4v1m0 5v3m0 5v1m0 5v3m0 5v1m0 5v3m0 5v1m0 7v3m0 5v1m0 7v3m0 7v1m0 1v1m0 5v5m0 9v1m0 7v5m0 13v1m0 1v1m0 1v1m0 5v9m0 1v1m0 127v1m0 4v1m0 1v149m0 2v1m0 1v1m0 2v1m0 1v2m0 1v1m0 2v1M498.5 205v3m0 9v2m0 10v3m0 9v3m0 11v3m0 11v3m0 11v3m0 13v3m0 14v4m0 15v5m0 19v7m0 29v1m0 1v15m0 1v3m0 1v1m0 1v1m0 1v1m0 1v1m0 1v1m0 1v1m0 1v4m0 1v1m0 1v1m0 1v1m0 1v1m0 1v1m0 1v1m0 2v1m0 1v1m0 1v1m0 1v1m0 1v1m0 2v1m0 3v1m0 6v1m0 205v1m0 1v1m0 2v1M499.5 208v1m0 11v1m0 24v1m0 13v1m0 13v1m0 13v2m0 14v2m0 16v3m0 17v4m0 22v7m0 77v1m0 1v1m0 4v1m0 3v1m0 1v1m0 2v1m0 1v1m0 1v1m0 1v2m0 1v1m0 1v1m0 1v1m0 2v1m0 1v52m0 2v1m0 1v1m0 2v1m0 1v2m0 1v1m0 2v1m0 1v1m0 2v1m0 4v1m0 2v1m0 1v1m0 2v1m0 4v1m0 2v1m0 4v1M500.5 557v1m0 4v1m0 2v1m0 1v1m0 2v1m0 4v1m0 2v1m0 1v1m0 2v1m0 1v2m0 1v1m0 2v1m0 1v1m0 2v1m0 1v2m0 1v1m0 2v1m0 1v2m0 1v1m0 1v54m0 1v1m0 2v1m0 1v2m0 1v1m0 1v2m0 1v1m0 2v1m0 1v1m0 2v1m0 4v1M503.5 198v1m0 10v2m0 10v2m0 10v2m0 11v3m0 10v3m0 11v4m0 11v3m0 13v3m0 15v5m0 15v5m0 21v9m0 1v1M504.5 200v3m0 9v3m0 9v3m0 9v3m0 10v3m0 10v4m0 11v4m0 11v4m0 12v5m0 15v5m0 15v1m0 1v7m0 23v15m0 1v1m0 1v1M505.5 198v1m0 4v2m0 5v1m0 4v2m0 5v1m0 4v2m0 5v1m0 5v2m0 4v1m0 5v3m0 5v1m0 5v3m0 5v1m0 6v3m0 4v1m0 1v1m0 5v4m0 4v1m0 1v1m0 7v3m0 5v1m0 1v1m0 9v4m0 4v1m0 1v1m0 1v1m0 11v6m0 4v1m0 1v1m0 1v1m0 1v1m0 25v1m0 1v1m0 1v1m0 1v1m0 1v1m0 1v1m0 1v1m0 1v1m0 2v1m0 1v1m0 1v1m0 1v1m0 1v1m0 1v1m0 1v1m0 1v1m0 1v1m0 1v4m0 1v19m0 3v109m0 1v1m0 2v1m0 1v1M506.5 200v1m0 1v1m0 9v1m0 11v1m0 11v1m0 1v1m0 11v1m0 13v1m0 13v1m0 13v1m0 1v1m0 15v1m0 1v1m0 15v1m0 1v1m0 17v1m0 1v1m0 1v1m0 1v1m0 23v1m0 1v1m0 1v1m0 1v1m0 1v1m0 1v1m0 144v1m0 2v1m0 4v134m0 1v1m0 1v2m0 1v2m0 1v1m0 1v2m0 1v1m0 2v1m0 1v1M507.5 204v1m0 11v1m0 11v1m0 11v1m0 13v1m0 11v1m0 1v1m0 13v1m0 15v1m0 15v1m0 1v1m0 17v1m0 1v1m0 19v1m0 1v1m0 1v1m0 1v1m0 31v1m0 1v1m0 1v1m0 1v1m0 1v1m0 1v1m0 1v1m0 1v1m0 1v1m0 1v1m0 1v1m0 1v1m0 1v1m0 1v1m0 1v1m0 1v1m0 1v4m0 1v1m0 1v1m0 1v1m0 1v1m0 1v1m0 1v1m0 4v1m0 1v1m0 1v1m0 1v1m0 4v1m0 8v1M508.5 475v1m0 1v1m0 4v1m0 1v1m0 1v1m0 2v1m0 1v1m0 4v1m0 1v1m0 2v1m0 1v1m0 1v2m0 1v1m0 1v1m0 2v1m0 1v1m0 2v1m0 1v1m0 2v1m0 1v1m0 2v1m0 1v1m0 2v1m0 1v1m0 2v1m0 1v1m0 2v1m0 1v2m0 1v1m0 2v1m0 1v1m0 2v1m0 1v1m0 2v1m0 2v1m0 1v1m0 2v1m0 4v1m0 4v1m0 2v1M509.5 592v1m0 2v1m0 4v1m0 4v1m0 2v1m0 1v1m0 2v1m0 2v1m0 1v1m0 2v1m0 1v1m0 2v1m0 2v1m0 1v1m0 2v1m0 1v1m0 2v1m0 2v1m0 1v1m0 2v1m0 1v1m0 2v1m0 2v1m0 1v1m0 2v1m0 1v1m0 2v1m0 2v1m0 1v1m0 2v1m0 1v1m0 2v1m0 2v1m0 1v1m0 2v1m0 1v1m0 2v1M511.5 203v2m0 9v3m0 9v3m0 10v2m0 11v3m0 11v3m0 11v3m0 13v3m0 13v4m0 15v4m0 19v7m0 29v19m0 1v1m0 1v1m0 1v1m0 1v1m0 1v1m0 1v6m0 1v1m0 1v1m0 1v1m0 1v1m0 1v1m0 1v1m0 1v2m0 1v1m0 1v15m0 3v10m0 1v1m0 1v1m0 4v1M512.5 205v3m0 9v2m0 10v3m0 10v3m0 10v3m0 11v4m0 11v3m0 13v3m0 13v5m0 15v7m0 19v9m0 1v1m0 69v1m0 1v1m0 1v1m0 1v1m0 1v9m0 3v171m0 1v1m0 2v1M513.5 198v1m0 4v2m0 3v3m0 3v3m0 3v3m0 3v3m0 3v3m0 4v2m0 5v2m0 4v3m0 3v4m0 4v2m0 5v3m0 4v3m0 5v3m0 5v3m0 5v4m0 4v4m0 6v5m0 4v4m0 9v6m0 4v5m0 15v12m0 4v9m0 1v1m0 192v1m0 1v1m0 2v1m0 3v78m0 1v1m0 1v2m0 1v2m0 1v1m0 1v2m0 1v1m0 1v2m0 1v1m0 2v1m0 1v1m0 2v1M514.5 205v3m0 9v3m0 9v3m0 10v3m0 10v3m0 11v3m0 12v3m0 12v4m0 13v5m0 15v6m0 18v9m0 43v1m0 1v1m0 1v1m0 1v1m0 1v1m0 1v1m0 1v1m0 1v1m0 1v1m0 1v1m0 1v4m0 1v1m0 1v1m0 1v1m0 1v1m0 1v14m0 3v25m0 1v2m0 1v1m0 1v1m0 1v2m0 1v1m0 1v1m0 2v1m0 1v1m0 2v1m0 1v1m0 4v1m0 4v1M515.5 198v1m0 9v3m0 9v3m0 9v3m0 10v3m0 11v3m0 11v3m0 12v3m0 13v4m0 14v5m0 16v6m0 21v13m0 115v1m0 4v1m0 1v1m0 2v1m0 1v1m0 4v1m0 1v1m0 2v1m0 1v1m0 2v1m0 1v1m0 2v1m0 1v84m0 2v1m0 1v2m0 1v1m0 2v1m0 1v1m0 2v1m0 1v2m0 1v1m0 2v1m0 1v1m0 2v1m0 4v1m0 2v1m0 1v1m0 2v1m0 4v1m0 2v1m0 1v1M516.5 628v1m0 2v1m0 4v1m0 2v1m0 1v1m0 2v1m0 4v1m0 2v1m0 1v1m0 2v1m0 1v2m0 1v1m0 2v1m0 1v1m0 2v1m0 1v2m0 1v1m0 2v1m0 1v1m0 2v1m0 1v2m0 1v1m0 2v1m0 1v1m0 2v1m0 4v1m0 2v1M519.5 201v1m0 10v2m0 10v2m0 11v2m0 11v2m0 11v3m0 12v2m0 13v3m0 14v3m0 16v3m0 19v5m0 29v13m0 1v1m0 1v1m0 1v1m0 1v1m0 1v1M520.5 203v3m0 9v3m0 9v3m0 9v3m0 11v3m0 11v3m0 11v3m0 13v3m0 13v5m0 15v7m0 17v1m0 1v7m0 1v1m0 52v1m0 1v1m0 1v1m0 1v1m0 1v1m0 1v1m0 1v1m0 1v4m0 1v1m0 1v18m0 3v136m0 4v1m0 2v1M521.5 201v1m0 4v2m0 4v2m0 4v2m0 4v2m0 4v3m0 4v2m0 4v3m0 4v2m0 5v2m0 4v3m0 5v3m0 4v2m0 5v4m0 4v3m0 5v5m0 4v2m0 7v5m0 5v3m0 9v6m0 4v3m0 15v11m0 5v5m0 1v1m0 1v1m0 164v1m0 4v1m0 2v113m0 1v1m0 1v2m0 1v2m0 1v1m0 1v2m0 1v1m0 2v1m0 1v1M522.5 203v3m0 9v3m0 9v3m0 9v3m0 11v3m0 11v3m0 11v3m0 13v3m0 13v5m0 15v5m0 19v7m0 31v1m0 1v1m0 1v1m0 1v1m0 1v1m0 1v3m0 1v1m0 1v3m0 1v1m0 1v1m0 1v3m0 1v8m0 1v1m0 1v1m0 1v1m0 1v1m0 1v19m0 3v4m0 1v1m0 1v1m0 1v1m0 2v1m0 1v1m0 1v1m0 2v1m0 1v1m0 1v1m0 2v1m0 1v1m0 1v1m0 2v1m0 1v1M523.5 206v2m0 10v2m0 10v3m0 10v3m0 11v2m0 12v3m0 11v4m0 12v5m0 13v5m0 15v7m0 19v1m0 1v9m0 1v1m0 96v1m0 1v1m0 1v1m0 2v1m0 1v1m0 1v1m0 2v1m0 1v1m0 1v1m0 2v1m0 1v1m0 1v2m0 1v1m0 1v1m0 2v75m0 1v1m0 2v1m0 1v1m0 2v1m0 2v1m0 1v1m0 2v1m0 1v1m0 2v1m0 2v1m0 1v1m0 2v1m0 1v1m0 2v1m0 2v1m0 1v1m0 2v1m0 4v1m0 4v1M524.5 379v1m0 211v1m0 4v1m0 2v1m0 4v1m0 2v1m0 1v1m0 2v1m0 1v1m0 2v1m0 2v1m0 1v1m0 2v1m0 1v1m0 2v1m0 2v1m0 1v1m0 2v1m0 1v2m0 1v1m0 1v20m0 1v2m0 1v1m0 1v2m0 1v1m0 2v1m0 1v2m0 1v1m0 1v2m0 1v1m0 2v1m0 1v1m0 2v1m0 4v1M527.5 197v1m0 10v2m0 10v2m0 11v1m0 11v3m0 11v2m0 12v3m0 12v2m0 14v4m0 14v4m0 18v4m0 25v9m0 1v1M528.5 199v3m0 9v3m0 9v3m0 9v3m0 10v3m0 10v4m0 11v4m0 11v5m0 12v4m0 15v5m0 17v9m0 27v1m0 1v1m0 1v21m0 1v3m0 1v1m0 1v1m0 1v3m0 1v36m0 3v38m0 2v1m0 1v1m0 2v1M529.5 198v1m0 3v3m0 3v3m0 3v2m0 4v3m0 3v3m0 4v2m0 4v3m0 3v2m0 4v4m0 4v2m0 4v4m0 4v2m0 6v3m0 4v3m0 5v4m0 4v3m0 6v5m0 4v3m0 8v7m0 4v3m0 12v9m0 5v4m0 1v1m0 83v1m0 2v1m0 1v1m0 1v193m0 2v1m0 4v1M530.5 200v1m0 10v2m0 10v2m0 11v2m0 10v3m0 11v3m0 11v3m0 13v3m0 13v5m0 13v5m0 17v7m0 1v1m0 23v1m0 1v15m0 1v1m0 1v1m0 1v1m0 1v1m0 1v1m0 1v1m0 1v1m0 214v1m0 4v1m0 1v41m0 1v2m0 1v1m0 1v2m0 1v1m0 1v2m0 1v1m0 2v1m0 1v1m0 2v1m0 2v1m0 1v1M531.5 202v3m0 9v3m0 9v3m0 9v3m0 11v3m0 11v3m0 11v3m0 13v4m0 14v3m0 15v7m0 19v7m0 1v1m0 56v1m0 1v1m0 1v1m0 1v1m0 1v1m0 1v1m0 1v2m0 1v1m0 1v1m0 1v1m0 1v1m0 1v13m0 3v43m0 1v1m0 1v2m0 1v1m0 1v1m0 2v1m0 1v1m0 2v1m0 1v1m0 2v1m0 1v1m0 2v1m0 1v1m0 2v1m0 4v1M532.5 368v1m0 147v1m0 1v1m0 2v1m0 1v1m0 2v1m0 1v1m0 2v1m0 1v1m0 2v1m0 1v1m0 2v1m0 1v2m0 1v1m0 2v1m0 1v93m0 1v1m0 1v2m0 1v1m0 2v1m0 1v1m0 2v1m0 1v2m0 1v1m0 2v1m0 1v1m0 2v1m0 4v1m0 2v1m0 1v1m0 2v1M533.5 658v1m0 4v1m0 2v1m0 1v1m0 2v1m0 4v1m0 2v1m0 1v1m0 2v1m0 4v1m0 2v1m0 1v1M535.5 198v1m0 9v3m0 9v3m0 9v3m0 10v3m0 11v2m0 12v2m0 13v3m0 13v3m0 15v5m0 17v5m0 1v1m0 24v10m0 1v1m0 1v1m0 1v1M536.5 200v2m0 9v2m0 10v2m0 11v2m0 10v3m0 11v3m0 11v4m0 12v3m0 13v5m0 15v5m0 19v7m0 1v1m0 31v1m0 1v1m0 1v1m0 1v1m0 1v1m0 1v1m0 1v1m0 1v1m0 1v1m0 1v1m0 1v1m0 1v10m0 1v1m0 1v1m0 1v30m0 3v90m0 2v1m0 4v1M537.5 202v2m0 4v1m0 5v2m0 4v1m0 5v3m0 3v1m0 1v1m0 3v3m0 5v1m0 5v3m0 5v1m0 5v3m0 5v1m0 5v4m0 4v1m0 1v1m0 5v4m0 4v1m0 1v1m0 7v4m0 4v1m0 1v1m0 9v6m0 4v1m0 1v1m0 15v9m0 5v1m0 1v1m0 1v1m0 132v1m0 2v1m0 1v1m0 2v154m0 1v1m0 2v1m0 1v1m0 2v1m0 1v2m0 1v1m0 2v1M540.5 579v1m0 2v1m0 4v1m0 4v1m0 2v1m0 1v1m0 2v1m0 4v1m0 2v1m0 1v1m0 2v1m0 2v1m0 1v1m0 2v1m0 1v1m0 2v1m0 1v2m0 1v1m0 2v1m0 1v1m0 2v1m0 1v2m0 1v1m0 2v1m0 1v1m0 2v1m0 1v2m0 1v1m0 2v1m0 1v1m0 2v1m0 1v2m0 1v1m0 2v1m0 1v1m0 2v1m0 1v1m0 2v1m0 2v1M543.5 199v3m0 9v2m0 10v3m0 9v3m0 10v3m0 10v4m0 11v4m0 11v4m0 13v5m0 14v6m0 18v8m0 32v1m0 1v20m0 1v3m0 1v1m0 1v1m0 1v3m0 1v1m0 1v31m0 3v85m0 1v1m0 1v1m0 2v1M544.5 202v3m0 9v2m0 10v3m0 10v3m0 9v4m0 10v4m0 11v4m0 12v4m0 13v5m0 16v6m0 21v11m0 138v1m0 4v159m0 1v1m0 2v1m0 1v1m0 2v1m0 1v2m0 1v1M545.5 199v3m0 3v2m0 4v2m0 4v2m0 4v3m0 3v2m0 4v3m0 4v2m0 5v2m0 4v2m0 4v3m0 5v3m0 4v4m0 5v2m0 4v4m0 6v3m0 5v3m0 7v4m0 4v5m0 9v5m0 4v6m0 17v13m0 4v18m0 1v1m0 1v1m0 1v1m0 1v1m0 1v1m0 1v1m0 1v1m0 1v4m0 1v1m0 1v1m0 1v1m0 1v1m0 1v1m0 1v1m0 1v1m0 2v1m0 1v1m0 1v1m0 1v1m0 6v1m0 1v1m0 216v1m0 2v1m0 1v1m0 2v1M546.5 202v2m0 10v2m0 10v2m0 11v3m0 10v2m0 11v3m0 13v3m0 13v3m0 13v5m0 15v5m0 1v1m0 19v7m0 1v1m0 77v1m0 1v1m0 1v1m0 4v1m0 1v1m0 1v1m0 6v1m0 1v1m0 1v1m0 1v2m0 1v1m0 1v1m0 1v2m0 1v1m0 1v1m0 1v43m0 1v1m0 2v1m0 1v1m0 2v1m0 1v1m0 2v1m0 1v1m0 2v1m0 4v1m0 2v1m0 1v1m0 2v1m0 4v1m0 2v1m0 4v1M547.5 205v2m0 10v2m0 10v2m0 11v2m0 11v2m0 12v3m0 13v2m0 14v3m0 15v4m0 18v5m0 25v1m0 1v9m0 1v1m0 1v1m0 166v1m0 2v1m0 4v1m0 4v1m0 2v1m0 1v1m0 2v1m0 4v1m0 2v1m0 1v1m0 2v1m0 1v2m0 1v1m0 2v1m0 1v1m0 2v1m0 1v2m0 1v1m0 2v1m0 1v2m0 1v1m0 1v49m0 1v1m0 1v2m0 1v1m0 2v1m0 1v2m0 1v1m0 1v2m0 1v1m0 2v1m0 1v1m0 2v1m0 4v1M550.5 234v1m0 12v1m0 42v1m0 16v1m0 18v1m0 22v2m0 41v7m0 1v1m0 6v1m0 1v1m0 1v1m0 1v1m0 1v1m0 1v1m0 1v1m0 1v1m0 1v1m0 1v1m0 1v1m0 1v1m0 6v1m0 1v1m0 1v1m0 1v1m0 1v1m0 4v1M551.5 199v3m0 9v2m0 10v2m0 10v3m0 10v3m0 11v3m0 11v4m0 12v4m0 12v5m0 15v6m0 18v9m0 58v1m0 1v1m0 1v1m0 1v1m0 1v1m0 1v1m0 1v1m0 2v25m0 3v145m0 2v1m0 4v1M552.5 202v3m0 9v3m0 9v3m0 5v1m0 3v4m0 10v3m0 11v3m0 11v4m0 6v1m0 5v5m0 13v5m0 7v1m0 8v7m0 21v14m0 190v1m0 2v1m0 4v103m0 1v1m0 1v2m0 1v2m0 1v1m0 1v2m0 1v1m0 2v1m0 1v1M553.5 200v1m0 4v1m0 5v2m0 4v1m0 5v2m0 4v1m0 6v2m0 4v1m0 5v3m0 4v1m0 6v3m0 5v1m0 5v3m0 6v1m0 6v3m0 6v2m0 5v5m0 7v2m0 6v5m0 10v2m0 7v7m0 21v7m0 7v1m0 1v1m0 1v1m0 1v1m0 1v1m0 1v1m0 1v1m0 1v1m0 1v1m0 1v1m0 1v1m0 1v1m0 1v1m0 1v1m0 1v6m0 1v1m0 1v1m0 1v1m0 1v1m0 1v17m0 1v1m0 1v1m0 4v1m0 1v1m0 1v1m0 1v1m0 1v2m0 1v1m0 1v1m0 1v1m0 2v1m0 1v1m0 1v1m0 2v1m0 1v1m0 4v1m0 1v1M554.5 202v3m0 9v3m0 9v3m0 9v3m0 11v3m0 11v3m0 11v3m0 13v5m0 13v5m0 15v5m0 1v1m0 21v7m0 1v1m0 113v1m0 4v1m0 4v1m0 1v1m0 4v1m0 1v1m0 2v1m0 1v1m0 2v1m0 1v1m0 1v2m0 1v1m0 1v1m0 2v1m0 1v45m0 2v1m0 1v1m0 2v1m0 1v2m0 1v1m0 2v1m0 1v1m0 2v1m0 1v2m0 1v1m0 2v1m0 1v1m0 2v1m0 4v1m0 2v1m0 1v1m0 2v1m0 4v1m0 2v1m0 1v1m0 2v1M555.5 217v1m0 24v1m0 27v1m0 14v1m0 16v1m0 17v2m0 20v3m0 29v1m0 1v1m0 1v9m0 229v1m0 4v1m0 2v1m0 1v1m0 2v1m0 4v1m0 2v1m0 1v1m0 2v1m0 4v1m0 2v1m0 1v1m0 2v1m0 1v2m0 1v1m0 2v1m0 1v1m0 2v1m0 1v2m0 1v1m0 2v1m0 1v1m0 2v1m0 1v2m0 1v1m0 2v1m0 1v1m0 2v1M558.5 202v1m0 11v1m0 11v1m0 13v1m0 11v1m0 13v1m0 13v1m0 1v1m0 13v1m0 1v1m0 15v1m0 1v1m0 17v1m0 1v1m0 1v1m0 23v1m0 1v1m0 1v1m0 1v1M559.5 204v1m0 1v1m0 9v1m0 1v1m0 9v1m0 1v1m0 11v1m0 11v1m0 1v1m0 11v1m0 1v1m0 13v1m0 1v1m0 13v1m0 1v1m0 15v1m0 1v1m0 1v1m0 17v1m0 1v1m0 1v1m0 1v1m0 23v1m0 1v1m0 1v1m0 1v1m0 1v1m0 1v1m0 1v1m0 1v1m0 1v1m0 1v1m0 1v1m0 1v1m0 1v1m0 1v1m0 1v1m0 1v1m0 1v1m0 1v1m0 1v1m0 1v1m0 1v1m0 1v1m0 1v1m0 1v1m0 1v1M560.5 202v2m0 4v1m0 5v2m0 4v1m0 5v2m0 4v1m0 1v1m0 4v1m0 4v1m0 1v1m0 5v2m0 4v1m0 1v1m0 4v3m0 4v1m0 1v1m0 5v2m0 6v1m0 1v1m0 5v3m0 5v1m0 1v1m0 1v1m0 5v2m0 8v1m0 1v1m0 1v1m0 5v3m0 11v1m0 1v1m0 1v1m0 1v1m0 1v1m0 4v4m0 47v1m0 1v1m0 1v1m0 1v1m0 1v1m0 1v1m0 2v1m0 1v1m0 1v1m0 1v28m0 3v134m0 2v1m0 4v1M561.5 204v3m0 9v3m0 9v3m0 10v3m0 10v3m0 11v4m0 11v4m0 12v5m0 13v5m0 16v7m0 23v13m0 175v1m0 2v1m0 4v116m0 1v1m0 1v2m0 1v1m0 2v1m0 1v2m0 1v1m0 2v1M562.5 207v3m0 9v3m0 10v2m0 10v3m0 11v3m0 11v4m0 12v4m0 13v4m0 14v6m0 18v8m0 34v28m0 1v1m0 1v1m0 1v1m0 1v1m0 1v1m0 1v1m0 1v29m0 4v1m0 1v1m0 2v1m0 1v1m0 1v1m0 1v2m0 1v1m0 1v1m0 1v1m0 2v1m0 1v1m0 1v1m0 2v1m0 1v1m0 4v1M563.5 356v1m0 113v1m0 1v1m0 4v1m0 1v1m0 1v1m0 2v1m0 1v1m0 1v2m0 1v1m0 1v1m0 1v2m0 1v1m0 1v2m0 1v80m0 1v1m0 1v2m0 1v1m0 2v1m0 1v2m0 1v1m0 2v1m0 1v1m0 2v1m0 1v2m0 1v1m0 2v1m0 1v1m0 2v1m0 4v1m0 4v1m0 2v1m0 4v1M564.5 589v1m0 2v1m0 4v1m0 2v1m0 1v1m0 2v1m0 4v1m0 2v1m0 1v1m0 2v1m0 1v2m0 1v1m0 2v1m0 1v1m0 2v1m0 1v2m0 1v1m0 1v2m0 1v1m0 2v22m0 1v1m0 2v1m0 1v2m0 1v1m0 1v2m0 1v1m0 2v1m0 1v2m0 1v1m0 2v1m0 1v1m0 2v1m0 4v1M565.5 269v1M566.5 206v3m0 9v3m0 9v3m0 10v3m0 10v4m0 10v4m0 11v4m0 12v5m0 13v5m0 17v7m0 21v13m0 1v1M567.5 199v1m0 9v3m0 9v3m0 10v3m0 10v3m0 10v4m0 11v3m0 12v4m0 13v5m0 13v7m0 17v9m0 31v1m0 1v1m0 1v1m0 1v1m0 1v22m0 1v1m0 1v1m0 1v1m0 1v1m0 1v31m0 3v76m0 2v1m0 4v1M568.5 201v1m0 5v1m0 5v1m0 5v1m0 5v1m0 5v1m0 5v2m0 4v1m0 1v1m0 5v1m0 5v1m0 7v1m0 5v1m0 1v1m0 5v2m0 4v1m0 1v1m0 7v2m0 4v1m0 1v1m0 1v1m0 7v1m0 5v1m0 1v1m0 1v1m0 9v2m0 4v1m0 1v1m0 1v1m0 1v1m0 13v4m0 4v1m0 1v1m0 1v1m0 1v1m0 1v1m0 1v1m0 120v1m0 1v1m0 2v1m0 1v1m0 1v164m0 1v2m0 1v1m0 1v2m0 1v1m0 2v1m0 1v1m0 2v1M569.5 199v1m0 9v1m0 1v1m0 9v1m0 1v1m0 11v1m0 11v1m0 1v1m0 11v1m0 1v1m0 11v1m0 1v1m0 13v1m0 1v1m0 13v1m0 1v1m0 15v1m0 1v1m0 1v1m0 19v1m0 1v1m0 1v1m0 1v1m0 27v1m0 1v1m0 1v1m0 1v1m0 1v1m0 1v1m0 1v1m0 1v1m0 1v1m0 1v1m0 1v1m0 1v1m0 1v1m0 1v1m0 1v1m0 1v1m0 1v1m0 1v1m0 1v1m0 1v1m0 8v1m0 1v1m0 1v1m0 227v1m0 2v1m0 1v1m0 2v1m0 1v1m0 2v1m0 2v1m0 1v1m0 2v1m0 1v1m0 2v1m0 2v1m0 1v1M570.5 201v1m0 11v1m0 11v1m0 25v1m0 13v1m0 13v1m0 15v1m0 17v1m0 19v1m0 25v1m0 1v1m0 94v1m0 1v1m0 3v1m0 2v1m0 1v1m0 1v1m0 4v1m0 1v1m0 1v1m0 2v1m0 1v1m0 1v1m0 2v1m0 1v1m0 1v1m0 2v1m0 1v1m0 1v2m0 1v1m0 1v1m0 2v1m0 1v1m0 2v1m0 1v1m0 1v2m0 1v1m0 1v2m0 1v1m0 4v1m0 4v1m0 2v1m0 1v1m0 2v1m0 1v1m0 2v1M571.5 565v1m0 4v1m0 2v1m0 4v1m0 2v1m0 1v1m0 2v1m0 4v1m0 2v1m0 1v1m0 2v1m0 2v1m0 1v1m0 2v1m0 1v1m0 2v1m0 1v2m0 1v1m0 2v1m0 1v1m0 2v1m0 1v2m0 1v1m0 2v1m0 1v1m0 2v1m0 1v2m0 1v1m0 2v1m0 1v1m0 2v1m0 1v2m0 1v1m0 2v1m0 1v1m0 2v1m0 1v2m0 1v1m0 2v1m0 1v1m0 2v1m0 4v1m0 2v1m0 1v1M573.5 202v2m0 10v2m0 10v2m0 10v3m0 10v2m0 12v2m0 12v3m0 13v2m0 15v3m0 16v4m0 19v5m0 31v13m0 1v1m0 1v1m0 1v1m0 1v1m0 1v1m0 1v1m0 1v1m0 1v1m0 1v1m0 1v1m0 2v1m0 1v1m0 1v1m0 1v1m0 1v1m0 1v1m0 1v1m0 1v1m0 2v1m0 1v1m0 1v1m0 1v10m0 6v1M574.5 204v4m0 8v4m0 8v4m0 10v3m0 9v5m0 9v5m0 9v5m0 11v5m0 13v5m0 15v7m0 17v1m0 1v9m0 1v1m0 60v1m0 1v1m0 1v1m0 1v1m0 2v1m0 1v1m0 1v13m0 3v156m0 3v1m0 2v1m0 1v1M575.5 198v1m0 3v2m0 4v3m0 3v2m0 4v3m0 3v2m0 4v3m0 3v2m0 6v2m0 3v3m0 5v3m0 3v2m0 7v2m0 3v3m0 6v4m0 3v3m0 6v4m0 4v2m0 8v5m0 4v2m0 11v6m0 4v2m0 18v1m0 1v10m0 4v2m0 190v1m0 2v1m0 1v90m0 1v2m0 1v1m0 1v2m0 1v1m0 2v1m0 1v1m0 2v1M576.5 205v3m0 9v3m0 9v3m0 9v3m0 11v3m0 11v3m0 11v4m0 12v4m0 13v5m0 14v7m0 17v9m0 48v1m0 1v1m0 1v1m0 1v1m0 1v1m0 1v1m0 1v1m0 1v1m0 1v4m0 1v1m0 1v1m0 1v1m0 1v1m0 1v1m0 1v2m0 1v1m0 1v1m0 1v1m0 1v1m0 6v1m0 1v1m0 2v1m0 1v1m0 1v1m0 1v2m0 1v1m0 1v1m0 1v1m0 2v1m0 1v1m0 1v1m0 2v1m0 1v1m0 4v1m0 1v1M577.5 209v2m0 10v2m0 10v2m0 11v2m0 11v3m0 11v3m0 13v3m0 13v3m0 15v4m0 17v6m0 23v11m0 116v1m0 2v1m0 1v1m0 4v1m0 1v1m0 2v1m0 1v1m0 2v1m0 1v1m0 2v1m0 1v1m0 2v1m0 1v1m0 2v1m0 1v1m0 2v1m0 1v2m0 1v1m0 2v1m0 1v1m0 2v1m0 1v1m0 2v1m0 2v1m0 1v1m0 2v1m0 1v1m0 2v1m0 2v1m0 1v1m0 2v1m0 1v1m0 2v1m0 2v1m0 1v1m0 2v1m0 1v1m0 2v1m0 2v1m0 1v1m0 2v1m0 1v1m0 2v1m0 2v1m0 1v1m0 2v1m0 1v1m0 2v1m0 4v1m0 2v1M578.5 636v1m0 4v1m0 2v1m0 4v1m0 2v1m0 1v1m0 2v1m0 1v1m0 2v1m0 2v1m0 1v1m0 2v1m0 1v1m0 2v1m0 2v1m0 1v1m0 2v1m0 4v1M580.5 203v1m0 35v1m0 55v1m0 35v1m0 21v1m0 29v1m0 1v1M581.5 205v1m0 1v1m0 7v1m0 1v1m0 1v1m0 7v1m0 1v1m0 1v1m0 9v1m0 1v1m0 9v1m0 1v1m0 1v1m0 9v1m0 1v1m0 1v1m0 9v1m0 1v1m0 1v1m0 11v1m0 1v1m0 1v1m0 11v1m0 1v1m0 1v1m0 1v1m0 13v1m0 1v1m0 1v1m0 1v1m0 15v1m0 1v1m0 1v1m0 1v1m0 1v1m0 1v1m0 21v1m0 1v1m0 1v1m0 1v1m0 1v1m0 1v1m0 1v1m0 1v1m0 1v1m0 1v1m0 1v5m0 1v1m0 1v1m0 1v1m0 1v1m0 1v6m0 1v1m0 1v1m0 1v1m0 1v1m0 1v1m0 1v4m0 1v1m0 1v1m0 1v1m0 1v1m0 1v8m0 3v8m0 2v1m0 1v1m0 1v1M585.5 504v1m0 4v1m0 1v1m0 2v1m0 1v1m0 2v1m0 1v1m0 4v1m0 1v2m0 1v1m0 2v1m0 1v1m0 2v1m0 1v1m0 2v1m0 1v2m0 1v1m0 1v2m0 1v1m0 2v1m0 1v2m0 1v1m0 1v2m0 1v1m0 2v1m0 1v2m0 1v1m0 1v2m0 1v1m0 2v1m0 1v2m0 1v1m0 1v2m0 1v1m0 2v1m0 1v1m0 2v1m0 1v2m0 1v1m0 2v1m0 1v1m0 2v1m0 1v2m0 1v1m0 2v1m0 1v1m0 2v1m0 4v1m0 2v1m0 1v1m0 2v1m0 4v1m0 2v1m0 4v1M586.5 640v1m0 4v1m0 2v1m0 4v1m0 4v1m0 2v1m0 1v1m0 2v1m0 2v1m0 1v1m0 2v1m0 1v1m0 2v1m0 4v1m0 2v1M588.5 199v5m0 7v4m0 8v5m0 7v5m0 8v4m0 9v5m0 9v5m0 10v6m0 10v6m0 11v7m0 13v9m0 15v11m0 1v1m0 29v1m0 1v1m0 1v1m0 1v1m0 1v1m0 1v1m0 1v1m0 1v1m0 1v6m0 1v1m0 1v1m0 1v1m0 1v1m0 1v6m0 1v1m0 1v1m0 1v8m0 3v61m0 1v1m0 1v2m0 1v1m0 2v1m0 1v1m0 2v1m0 1v1m0 2v1m0 1v1m0 2v1m0 1v1m0 2v1m0 2v1m0 1v1M589.5 204v4m0 7v5m0 8v4m0 9v5m0 7v5m0 9v5m0 9v7m0 9v5m0 11v7m0 11v9m0 13v11m0 17v1m0 1v15m0 1v1m0 1v1m0 1v1m0 115v1m0 4v1m0 4v1m0 4v1m0 2v1m0 1v1m0 2v1m0 1v1m0 2v1m0 1v2m0 1v1m0 2v110m0 1v2m0 1v1m0 2v1m0 1v1m0 2v1m0 1v2m0 1v1m0 2v1M590.5 200v1m0 1v1m0 9v1m0 1v1m0 9v1m0 1v1m0 9v1m0 1v1m0 9v1m0 1v1m0 1v1m0 9v1m0 1v1m0 11v1m0 1v1m0 1v1m0 9v1m0 1v1m0 1v1m0 11v1m0 1v1m0 1v1m0 13v1m0 1v1m0 1v1m0 15v1m0 1v1m0 1v1m0 19v1m0 1v1m0 1v1m0 1v1m0 35v8m0 1v1m0 1v1m0 1v1m0 1v1m0 1v1m0 1v1m0 1v1m0 1v1m0 6v1m0 1v1m0 1v1m0 1v1m0 4v1m0 1v1m0 1v1M591.5 204v1m0 1v1m0 9v1m0 1v1m0 9v1m0 1v1m0 1v1m0 9v1m0 1v1m0 9v1m0 1v1m0 1v1m0 9v1m0 1v1m0 11v1m0 1v1m0 1v1m0 11v1m0 1v1m0 1v1m0 11v1m0 1v1m0 1v1m0 13v1m0 1v1m0 1v1m0 1v1m0 13v1m0 1v1m0 1v1m0 1v1m0 1v1m0 17v1m0 1v1m0 1v1m0 1v1m0 1v1m0 1v1m0 1v1m0 1v1m0 69v1m0 1v1m0 1v1m0 2v1m0 1v1m0 1v1m0 1v1m0 2v1m0 1v1m0 1v1m0 2v1m0 1v1m0 1v1m0 2v1m0 1v1m0 1v2m0 1v1m0 1v1m0 2v1m0 1v1m0 1v2m0 1v1m0 1v2m0 1v1m0 1v1m0 2v1m0 1v1m0 2v1m0 1v1m0 2v1m0 1v1m0 2v1m0 4v1m0 2v1m0 1v1m0 2v1m0 1v1m0 2v1m0 4v1m0 2v1M592.5 398v1m0 1v1m0 1v1m0 1v1m0 175v1m0 4v1m0 2v1m0 4v1m0 4v1m0 2v1m0 1v1m0 2v1m0 4v1m0 2v1m0 1v1m0 2v1m0 1v2m0 1v1m0 2v1m0 1v1m0 2v1m0 1v2m0 1v1m0 2v1m0 1v1m0 2v1m0 1v2m0 1v1m0 2v1m0 1v1m0 2v1m0 1v2m0 1v1m0 2v1m0 1v1m0 2v1m0 4v1m0 2v1M595.5 201v4m0 8v4m0 8v4m0 8v4m0 9v4m0 9v4m0 10v5m0 10v5m0 11v5m0 12v6m0 14v6m0 17v9m0 27v14m0 1v3m0 1v1m0 1v1m0 1v1m0 1v1m0 1v1m0 1v2m0 1v1m0 1v1m0 1v1m0 1v1m0 1v1m0 1v1m0 2v1m0 1v1m0 1v1m0 1v1m0 1v1m0 4v1m0 1v1m0 1v1m0 2v1m0 1v1m0 1v1m0 2v1m0 1v1m0 1v1M596.5 205v6m0 6v6m0 6v6m0 7v5m0 8v6m0 7v7m0 7v7m0 9v7m0 9v8m0 10v9m0 12v12m0 15v17m0 58v1m0 6v1m0 1v1m0 1v1m0 2v1m0 1v1m0 1v1m0 1v2m0 1v1m0 1v1m0 1v2m0 1v1m0 1v1m0 1v2m0 1v1m0 1v4m0 1v1m0 1v2m0 1v1m0 1v4m0 1v1m0 1v2m0 1v1m0 1v2m0 1v1m0 1v2m0 1v1m0 1v2m0 1v1m0 1v2m0 1v1m0 1v2m0 1v2m0 1v1m0 1v2m0 1v1m0 1v2m0 1v1m0 1v2m0 1v2m0 1v1m0 1v2m0 1v1m0 1v2m0 1v2m0 1v1m0 1v2m0 1v1m0 1v2m0 1v2m0 1v1m0 1v2m0 1v1m0 1v2m0 1v2m0 1v1m0 1v2m0 1v1m0 2v1m0 1v2m0 1v1m0 2v1m0 1v1m0 2v1m0 1v1m0 2v1m0 4v1M597.5 202v1m0 11v1m0 11v1m0 11v1m0 1v1m0 9v1m0 1v1m0 11v1m0 1v1m0 11v1m0 1v1m0 11v1m0 1v1m0 1v1m0 11v1m0 1v1m0 1v1m0 13v1m0 1v1m0 17v1m0 1v1m0 19v1m0 1v1m0 1v1m0 31v1m0 1v1m0 1v1m0 187v1m0 1v1m0 2v1m0 4v1m0 2v1m0 1v1m0 2v1m0 2v1m0 1v1m0 2v1m0 1v2m0 1v1m0 1v2m0 1v1m0 2v1m0 1v2m0 1v1m0 1v2m0 1v1m0 2v1m0 1v2m0 1v1m0 1v2m0 1v1m0 1v2m0 1v2m0 1v1m0 1v2m0 1v1m0 1v2m0 1v2m0 1v1m0 1v2m0 1v1m0 2v1m0 1v1m0 2v1m0 2v1m0 1v1M598.5 206v1m0 1v1m0 9v1m0 1v1m0 9v1m0 1v1m0 1v1m0 7v1m0 1v1m0 1v1m0 9v1m0 1v1m0 1v1m0 9v1m0 1v1m0 11v1m0 1v1m0 1v1m0 9v1m0 1v1m0 1v1m0 1v1m0 9v1m0 1v1m0 1v1m0 1v1m0 11v1m0 1v1m0 1v1m0 1v1m0 13v1m0 1v1m0 1v1m0 1v1m0 1v1m0 15v1m0 1v1m0 1v1m0 1v1m0 1v1m0 1v1m0 1v1m0 40v1m0 1v1m0 1v1m0 1v1m0 1v1m0 1v1m0 2v1m0 1v1m0 1v1m0 1v1m0 1v1m0 1v2m0 1v1m0 1v1m0 6v1m0 1v1m0 1v1m0 1v1m0 2v1m0 1v1m0 1v1m0 2v1m0 1v1m0 1v1m0 2v1m0 1v1m0 1v1m0 2v1m0 1v1m0 1v1m0 2v1m0 1v1M599.5 364v1m0 29v1m0 1v1m0 1v1m0 124v1m0 4v1m0 1v1m0 2v1m0 1v1m0 2v1m0 4v1m0 2v1m0 1v1m0 2v1m0 1v1m0 2v1m0 2v1m0 1v1m0 2v1m0 1v1m0 2v1m0 2v1m0 1v1m0 2v1m0 1v1m0 2v1m0 2v1m0 1v1m0 2v1m0 1v1m0 2v1m0 2v1m0 1v1m0 2v1m0 1v1m0 2v1m0 2v1m0 1v1m0 2v1m0 1v1m0 2v1m0 2v1m0 1v1m0 2v1m0 4v1M600.5 660v1m0 4v1m0 2v1m0 1v1m0 2v1m0 2v1m0 1v1m0 2v1M602.5 204v3m0 9v3m0 9v3m0 10v2m0 10v4m0 10v4m0 10v4m0 11v3m0 13v3m0 1v1m0 12v4m0 1v1m0 13v5m0 1v1m0 17v7m0 27v12m0 1v1m0 1v1m0 1v1m0 1v1m0 1v1m0 1v1m0 1v1m0 1v1m0 4v1m0 1v1m0 1v1M603.5 198v5m0 5v5m0 7v5m0 7v7m0 5v7m0 7v7m0 7v7m0 7v7m0 7v1m0 1v7m0 9v7m0 1v1m0 9v9m0 11v11m0 1v1m0 11v1m0 1v17m0 1v1m0 1v1m0 41v1m0 1v1m0 4v1m0 1v1m0 1v1m0 1v1m0 4v1m0 1v1m0 1v1m0 1v2m0 1v1m0 1v1m0 1v2m0 1v1m0 1v1m0 1v4m0 1v1m0 1v2m0 1v1m0 1v1m0 1v2m0 1v1m0 1v2m0 1v1m0 1v1m0 1v2m0 1v1m0 1v2m0 1v1m0 1v2m0 1v1m0 1v2m0 1v1m0 1v2m0 1v1m0 1v2m0 1v1m0 1v2m0 1v1m0 1v2m0 1v2m0 1v1m0 1v2m0 1v1m0 1v2m0 1v2m0 1v1m0 1v2m0 1v1m0 1v2m0 1v1m0 2v1m0 1v1m0 2v1m0 2v1m0 1v1m0 2v1M604.5 204v3m0 9v3m0 9v3m0 10v2m0 10v4m0 10v4m0 10v4m0 11v3m0 13v3m0 14v4m0 15v3m0 1v1m0 19v3m0 31v1m0 1v1m0 1v1m0 177v1m0 4v1m0 2v1m0 1v1m0 2v1m0 1v1m0 2v1m0 2v1m0 1v1m0 2v1m0 1v2m0 1v1m0 1v2m0 1v1m0 2v1m0 1v2m0 1v1m0 1v2m0 1v2m0 1v1m0 1v2m0 1v1m0 1v2m0 1v2m0 1v1m0 1v2m0 1v1m0 1v2m0 1v1m0 2v1m0 1v2m0 1v1m0 1v2m0 1v2m0 1v1m0 1v2m0 1v1m0 1v2m0 1v1m0 2v1M605.5 198v5m0 5v5m0 7v5m0 7v7m0 5v7m0 7v7m0 7v7m0 7v7m0 7v1m0 1v7m0 7v1m0 1v7m0 9v9m0 1v1m0 9v11m0 11v1m0 1v15m0 1v1m0 17v1m0 1v1m0 1v1m0 1v1m0 1v1m0 1v1m0 1v8m0 1v1m0 1v1m0 1v1m0 1v1m0 1v4m0 1v1m0 1v1m0 1v1m0 1v4m0 1v1m0 5v2m0 1v1m0 1v1m0 1v1m0 1v2m0 1v1m0 1v1m0 1v2m0 1v1m0 1v1m0 1v2m0 1v1m0 1v1m0 1v1m0 2v1m0 1v1M606.5 326v1m0 39v1m0 1v2m0 26v1m0 1v5m0 81v1m0 4v1m0 1v1m0 4v1m0 1v1m0 2v1m0 1v1m0 4v1m0 1v1m0 2v1m0 1v1m0 2v1m0 1v1m0 1v2m0 1v1m0 1v2m0 1v1m0 2v1m0 1v1m0 2v1m0 1v2m0 1v1m0 1v2m0 1v1m0 1v2m0 1v1m0 2v1m0 1v2m0 1v1m0 1v2m0 1v1m0 2v1m0 1v2m0 1v1m0 1v2m0 1v1m0 2v1m0 1v2m0 1v1m0 2v1m0 1v1m0 2v1m0 4v1m0 2v1m0 1v1m0 2v1m0 4v1m0 4v1m0 2v1m0 4v1m0 4v1m0 2v1m0 4v1M607.5 618v1m0 2v1m0 4v1m0 2v1m0 1v1m0 2v1m0 1v2m0 1v1m0 2v1m0 1v1m0 2v1m0 1v2m0 1v1m0 2v1m0 1v1m0 2v1m0 1v2m0 1v1m0 2v1m0 1v1m0 2v1m0 1v2m0 1v1m0 1v2m0 1v1m0 2v1m0 1v1m0 2v1M609.5 202v3m0 9v3m0 9v3m0 9v3m0 10v3m0 10v3m0 11v3m0 12v3m0 12v4m0 13v4m0 14v5m0 16v6m0 22v9M610.5 198v3m0 5v7m0 5v7m0 5v7m0 6v7m0 6v7m0 6v8m0 6v8m0 7v9m0 7v9m0 8v11m0 8v13m0 10v17m0 16v10m0 1v3m0 1v1m0 1v1m0 1v1m0 1v1m0 1v8m0 1v1m0 1v1m0 1v1m0 1v6m0 1v1m0 1v1m0 1v1m0 1v2m0 3v1m0 1v1m0 1v2m0 1v1m0 1v1m0 1v2m0 1v1m0 1v1m0 1v1m0 1v2m0 1v1m0 1v1m0 2v1m0 1v1m0 4v1m0 1v1m0 4v1m0 4v1m0 1v1M611.5 202v1m0 1v1m0 9v1m0 1v1m0 9v1m0 1v1m0 9v1m0 1v1m0 11v1m0 1v1m0 9v1m0 1v1m0 11v1m0 1v1m0 13v1m0 1v1m0 11v1m0 1v1m0 15v1m0 1v1m0 15v1m0 1v1m0 17v1m0 1v1m0 25v1m0 83v1m0 1v1m0 1v1m0 2v1m0 1v1m0 1v1m0 2v1m0 1v1m0 4v1m0 1v1m0 1v2m0 1v1m0 1v2m0 1v1m0 1v1m0 2v1m0 1v1m0 2v1m0 1v1m0 2v1m0 1v1m0 1v2m0 1v1m0 1v2m0 1v1m0 1v2m0 1v2m0 1v1m0 1v2m0 1v1m0 1v2m0 1v1m0 2v1m0 1v2m0 1v1m0 1v2m0 1v1m0 2v1m0 1v2m0 1v1m0 1v2m0 1v2m0 1v1m0 1v2m0 1v1m0 1v2m0 1v2m0 1v1m0 1v2m0 1v1m0 1v2m0 1v2m0 1v1m0 1v2m0 1v1m0 1v2m0 1v1m0 2v1m0 1v1m0 2v1m0 2v1m0 22v1m0 2v1m0 1v1M612.5 198v1m0 1v1m0 5v1m0 1v1m0 1v1m0 1v1m0 5v1m0 1v1m0 1v1m0 1v1m0 5v1m0 1v1m0 1v1m0 1v1m0 5v1m0 1v1m0 1v1m0 1v1m0 7v1m0 1v1m0 1v1m0 1v1m0 5v1m0 1v1m0 1v1m0 1v1m0 1v1m0 5v1m0 1v1m0 1v1m0 1v1m0 1v1m0 7v1m0 1v1m0 1v1m0 1v1m0 1v1m0 7v1m0 1v1m0 1v1m0 1v1m0 1v1m0 7v1m0 1v1m0 1v1m0 1v1m0 1v1m0 1v1m0 7v1m0 1v1m0 1v1m0 1v1m0 1v1m0 1v1m0 1v1m0 7v1m0 1v1m0 1v1m0 1v1m0 1v1m0 1v1m0 1v1m0 1v1m0 1v1m0 11v1m0 1v1m0 1v1m0 1v1m0 1v1m0 1v5m0 1v1m0 1v1m0 1v1m0 1v1m0 1v1m0 1v1m0 4v1m0 217v1m0 2v1m0 1v1m0 2v1m0 1v2m0 1v1m0 2v1m0 1v2m0 1v1m0 1v2m0 1v1m0 2v1m0 4v1m0 2v1m0 1v1m0 2v1M613.5 362v1m0 23v1m0 1v1m0 42v1m0 1v1m0 1v1m0 1v1m0 1v1m0 2v1m0 1v1m0 1v1m0 1v1m0 1v1m0 1v2m0 1v1m0 1v1m0 4v3m0 1v1m0 1v1m0 1v2m0 1v1m0 1v1m0 1v4m0 1v1m0 1v4m0 1v1m0 1v1m0 2v1m0 1v1m0 1v2m0 1v1m0 1v2m0 1v1m0 1v1m0 1v2m0 1v1m0 4v1m0 9v1m0 4v1m0 4v1M614.5 533v1m0 1v2m0 1v1m0 2v1m0 1v1m0 2v1m0 1v1m0 2v1m0 4v1m0 2v1m0 1v1m0 2v1m0 4v1m0 2v1m0 1v1m0 2v1m0 1v2m0 1v1m0 2v1m0 1v1m0 2v1m0 1v2m0 1v1m0 2v1m0 1v1m0 2v1m0 1v2m0 1v1m0 2v1m0 1v1m0 2v1m0 1v2m0 1v1m0 2v1m0 1v1m0 2v1m0 4v1m0 2v1m0 1v1m0 2v1m0 4v1m0 2v1m0 1v1m0 2v1m0 1v2m0 1v1m0 2v1m0 1v1m0 2v1M615.5 655v1m0 4v1m0 2v1m0 1v1m0 2v1m0 4v1m0 12v1m0 2v1M616.5 208v3m0 8v4m0 9v3m0 9v3m0 10v4m0 9v3m0 11v3m0 12v4m0 12v4m0 13v5m0 14v4m0 1v1m0 16v6m0 23v10m0 1v1M617.5 200v6m0 6v6m0 6v6m0 6v7m0 5v7m0 7v7m0 7v7m0 7v8m0 6v9m0 7v1m0 1v8m0 8v1m0 1v9m0 9v1m0 1v11m0 11v1m0 1v15m0 18v1m0 1v1m0 1v1m0 1v1m0 1v1m0 1v1m0 1v1m0 1v8m0 1v1m0 1v1m0 1v1m0 1v4m0 1v1m0 1v1m0 1v1m0 1v2m0 3v1m0 1v1m0 1v4m0 1v1m0 1v4m0 1v1m0 1v1m0 1v2m0 1v1m0 1v1m0 1v2m0 1v1m0 1v4m0 1v1m0 1v2m0 1v1m0 1v1m0 9v1m0 1v2m0 1v1m0 1v2m0 1v1m0 1v2m0 1v1M618.5 208v1m0 11v1m0 11v1m0 11v1m0 1v1m0 11v1m0 11v1m0 1v1m0 11v1m0 1v1m0 13v1m0 1v1m0 13v1m0 15v1m0 1v1m0 17v1m0 21v1m0 146v1m0 1v2m0 1v1m0 1v2m0 1v1m0 1v2m0 1v1m0 9v1m0 2v1m0 1v2m0 1v1m0 1v2m0 1v2m0 1v1m0 1v2m0 1v1m0 1v2m0 1v2m0 1v1m0 1v2m0 1v1m0 1v2m0 1v2m0 1v1m0 1v2m0 1v1m0 1v2m0 1v1m0 2v1m0 1v2m0 1v1m0 1v2m0 1v2m0 1v1m0 1v2m0 1v1m0 1v2m0 1v2m0 1v1m0 1v2m0 1v1m0 1v2m0 1v2m0 1v1m0 1v2m0 1v1m0 2v1m0 1v1m0 12v1m0 2v1m0 1v2m0 1v1m0 2v1m0 1v1M619.5 200v1m0 1v1m0 1v1m0 7v1m0 1v1m0 1v1m0 7v1m0 1v1m0 1v1m0 7v1m0 1v1m0 1v1m0 1v1m0 7v1m0 1v1m0 1v1m0 7v1m0 1v1m0 1v1m0 1v1m0 7v1m0 1v1m0 1v1m0 1v1m0 7v1m0 1v1m0 1v1m0 1v1m0 9v1m0 1v1m0 1v1m0 1v1m0 7v1m0 1v1m0 1v1m0 1v1m0 1v1m0 9v1m0 1v1m0 1v1m0 1v1m0 1v1m0 9v1m0 1v1m0 1v1m0 1v1m0 1v1m0 1v1m0 11v1m0 1v1m0 1v1m0 1v1m0 1v1m0 1v1m0 1v1m0 1v1m0 15v1m0 1v1m0 1v1m0 1v1m0 1v1m0 1v1m0 1v1m0 1v1m0 1v4m0 1v1m0 1v1m0 1v1m0 1v1m0 1v1m0 228v1m0 1v2m0 1v1m0 2v1m0 1v1m0 2v1M620.5 398v1m0 69v1m0 6v1m0 1v1m0 2v1m0 1v1m0 1v1m0 4v1m0 1v1m0 2v1m0 1v1m0 1v1m0 2v1m0 1v1m0 14v1m0 1v1m0 2v1m0 1v1m0 2v1m0 1v1m0 2v1M621.5 561v1m0 2v1m0 4v1m0 4v1m0 2v1m0 4v1m0 4v1m0 2v1m0 4v1m0 4v1m0 2v1m0 1v1m0 2v1m0 2v1m0 1v1m0 2v1m0 1v1m0 2v1m0 2v1m0 1v1m0 2v1m0 1v1m0 2v1m0 2v1m0 1v1m0 2v1m0 1v1m0 2v1m0 17v1m0 2v1m0 1v1m0 2v1m0 4v1M623.5 207v1m0 1v1m0 9v1m0 1v1m0 9v1m0 1v1m0 9v1m0 1v1m0 11v1m0 1v1m0 11v1m0 1v1m0 9v1m0 1v1m0 1v1m0 11v1m0 1v1m0 11v1m0 1v1m0 1v1m0 13v1m0 1v1m0 1v1m0 13v1m0 1v1m0 1v1m0 15v1m0 1v1m0 1v1m0 1v1m0 19v1m0 1v1m0 1v1m0 1v1m0 1v1m0 30v1m0 1v1m0 1v4m0 1v1m0 1v1m0 1v1m0 1v4m0 1v1m0 1v1m0 1v1m0 4v1m0 1v1m0 1v1m0 1v2m0 1v1m0 1v1m0 1v1m0 2v1m0 1v1m0 1v1m0 2v1m0 1v1m0 1v2m0 1v1m0 1v1m0 16v1m0 4v1M624.5 201v1m0 1v1m0 1v1m0 7v1m0 1v1m0 1v1m0 7v1m0 1v1m0 1v1m0 7v1m0 1v1m0 1v1m0 7v1m0 1v1m0 1v1m0 9v1m0 1v1m0 1v1m0 7v1m0 1v1m0 1v1m0 1v1m0 7v1m0 1v1m0 1v1m0 1v1m0 9v1m0 1v1m0 1v1m0 1v1m0 9v1m0 1v1m0 1v1m0 1v1m0 9v1m0 1v1m0 1v1m0 1v1m0 1v1m0 11v1m0 1v1m0 1v1m0 1v1m0 1v1m0 13v1m0 1v1m0 1v1m0 1v1m0 1v1m0 1v1m0 1v1m0 15v1m0 1v1m0 1v1m0 1v1m0 1v1m0 1v6m0 1v1m0 1v1m0 1v1m0 1v1m0 57v1m0 1v1m0 2v1m0 1v1m0 11v1m0 2v1m0 1v1m0 1v2m0 1v1m0 1v2m0 1v1m0 1v1m0 7v1m0 1v1m0 2v1m0 1v2m0 1v1m0 1v2m0 1v2m0 1v1m0 1v2m0 1v1m0 1v2m0 1v1m0 2v1m0 1v1m0 2v1m0 2v1m0 1v1m0 2v1m0 1v1m0 2v1m0 2v1m0 1v1m0 2v1m0 1v2m0 1v1m0 1v2m0 1v1m0 2v1m0 1v1m0 2v1m0 2v1m0 1v1m0 2v1m0 30v1m0 2v1m0 1v1m0 2v1M625.5 207v1m0 1v1m0 9v1m0 1v1m0 9v1m0 1v1m0 9v1m0 1v1m0 11v1m0 13v1m0 11v1m0 1v1m0 13v1m0 13v1m0 1v1m0 15v1m0 17v1m0 19v1m0 271v1m0 1v1m0 2v1m0 1v2m0 1v1m0 2v1m0 1v2m0 1v1m0 1v2m0 1v1m0 7v1m0 2v1m0 1v1m0 2v1m0 1v2m0 1v1m0 1v2m0 1v1M626.5 201v1m0 1v1m0 1v1m0 7v1m0 1v1m0 1v1m0 7v1m0 1v1m0 1v1m0 7v1m0 1v1m0 1v1m0 9v1m0 1v1m0 9v1m0 1v1m0 1v1m0 9v1m0 1v1m0 1v1m0 9v1m0 1v1m0 1v1m0 9v1m0 1v1m0 1v1m0 1v1m0 9v1m0 1v1m0 1v1m0 1v1m0 9v1m0 1v1m0 1v1m0 1v1m0 11v1m0 1v1m0 1v1m0 1v1m0 1v1m0 13v1m0 1v1m0 1v1m0 1v1m0 1v1m0 17v1m0 1v1m0 1v1m0 1v1m0 1v1m0 1v1m0 1v1m0 1v1m0 31v1m0 1v1m0 1v1m0 4v1m0 3v1m0 1v1m0 2v1m0 1v1m0 1v1m0 1v2m0 1v1m0 1v1m0 1v1m0 2v1m0 1v1m0 1v2m0 1v1m0 1v1m0 1v2m0 1v1m0 1v1m0 9v1m0 1v1m0 2v1m0 1v1m0 2v1m0 1v1M627.5 539v1m0 1v1m0 2v1m0 4v1m0 2v1m0 1v1m0 2v1m0 25v1m0 4v1m0 2v1m0 1v1m0 2v1m0 4v1m0 2v1m0 1v1m0 2v1m0 4v1m0 2v1m0 22v1m0 2v1m0 1v1m0 2v1m0 4v1m0 2v1m0 1v1M631.5 207v1m0 1v1m0 9v1m0 1v1m0 9v1m0 1v1m0 9v1m0 1v1m0 9v1m0 1v1m0 1v1m0 9v1m0 1v1m0 11v1m0 1v1m0 11v1m0 1v1m0 1v1m0 9v1m0 1v1m0 1v1m0 11v1m0 1v1m0 1v1m0 1v1m0 11v1m0 1v1m0 1v1m0 1v1m0 13v1m0 1v1m0 1v1m0 1v1m0 15v1m0 1v1m0 1v1m0 1v1m0 1v1m0 19v1m0 1v1m0 1v1m0 1v1m0 1v1m0 1v1m0 1v4m0 71v1m0 1v1m0 2v1m0 1v1m0 1v2m0 1v1m0 9v1m0 1v2m0 1v1m0 1v2m0 1v1m0 1v2m0 1v1m0 1v2m0 1v1m0 2v1m0 9v1m0 2v1m0 1v2m0 1v1m0 1v2m0 1v1m0 1v2m0 1v2m0 1v1m0 1v2m0 1v1m0 1v2m0 1v2m0 1v1m0 1v2m0 1v1m0 1v2m0 1v2m0 1v1m0 1v2m0 1v1m0 2v1m0 1v2m0 1v1m0 1v2m0 1v1m0 2v1m0 1v1m0 2v1m0 2v1m0 1v1M632.5 200v1m0 1v1m0 9v1m0 1v1m0 9v1m0 1v1m0 9v1m0 1v1m0 9v1m0 1v1m0 1v1m0 9v1m0 1v1m0 11v1m0 1v1m0 11v1m0 1v1m0 11v1m0 1v1m0 1v1m0 11v1m0 1v1m0 13v1m0 1v1m0 15v1m0 1v1m0 17v1m0 1v1m0 21v1m0 1v1m0 32v1m0 178v1m0 1v1m0 2v1m0 2v1m0 1v1m0 2v1m0 1v1m0 2v1m0 2v1m0 1v1m0 2v1m0 17v1m0 1v2m0 1v1m0 1v2m0 1v2m0 1v1m0 1v2m0 1v1m0 12v1m0 2v1m0 1v1m0 2v1M633.5 208v1m0 1v1m0 9v1m0 11v1m0 1v1m0 9v1m0 1v1m0 9v1m0 1v1m0 11v1m0 1v1m0 11v1m0 1v1m0 11v1m0 1v1m0 11v1m0 1v1m0 1v1m0 11v1m0 1v1m0 1v1m0 11v1m0 1v1m0 1v1m0 1v1m0 11v1m0 1v1m0 1v1m0 1v1m0 1v1m0 13v1m0 1v1m0 1v1m0 1v1m0 1v1m0 1v1m0 13v1m0 1v1m0 1v1m0 1v1m0 1v1m0 2v1m0 1v1m0 1v1m0 29v1m0 1v1m0 1v1m0 4v1m0 1v1m0 1v1m0 1v2m0 1v1m0 1v1m0 1v1m0 2v1m0 1v1m0 1v1m0 1v2m0 1v1m0 1v1m0 4v1m0 4v1m0 1v1m0 1v2m0 1v1m0 1v1m0 2v1m0 19v1M634.5 531v1m0 1v1m0 2v1m0 1v1m0 23v1m0 1v1m0 2v1m0 1v1m0 2v1m0 2v1m0 1v1m0 2v1m0 1v1m0 2v1m0 2v1m0 1v1m0 2v1m0 1v1m0 2v1m0 2v1m0 1v1m0 2v1m0 1v1m0 2v1m0 2v1m0 1v1m0 2v1m0 1v1m0 2v1m0 2v1m0 1v1m0 2v1m0 1v1M635.5 663v1m0 4v1m0 2v1M637.5 198v1m0 5v1m0 1v1m0 1v1m0 1v1m0 5v1m0 1v1m0 1v1m0 1v1m0 5v1m0 1v1m0 1v1m0 1v1m0 5v1m0 1v1m0 1v1m0 1v1m0 7v1m0 1v1m0 1v1m0 7v1m0 1v1m0 1v1m0 1v1m0 7v1m0 1v1m0 1v1m0 1v1m0 7v1m0 1v1m0 1v1m0 1v1m0 7v1m0 1v1m0 1v1m0 1v1m0 1v1m0 7v1m0 1v1m0 1v1m0 1v1m0 1v1m0 7v1m0 1v1m0 1v1m0 1v1m0 1v1m0 1v1m0 7v1m0 1v1m0 1v1m0 1v1m0 1v1m0 1v1m0 9v1m0 1v1m0 1v1m0 1v1m0 1v1m0 1v1m0 1v1m0 11v1m0 1v1m0 1v1m0 1v1m0 1v1m0 1v1m0 1v1m0 1v1m0 1v1m0 14v1m0 1v1m0 1v1m0 1v1m0 1v6m0 1v1m0 1v1m0 1v6m0 5v2m0 1v1m0 1v1m0 1v1m0 1v2m0 1v1m0 1v1m0 1v1m0 2v1m0 1v1m0 11v1m0 1v1m0 2v1M638.5 200v1m0 1v1m0 9v1m0 1v1m0 9v1m0 1v1m0 9v1m0 1v1m0 11v1m0 11v1m0 1v1m0 11v1m0 13v1m0 13v1m0 1v1m0 11v1m0 1v1m0 15v1m0 1v1m0 13v1m0 1v1m0 17v1m0 1v1m0 19v1m0 1v1m0 1v1m0 23v1m0 1v1m0 1v1m0 1v3m0 65v1m0 1v1m0 2v1m0 1v1m0 14v1m0 1v1m0 1v2m0 1v1m0 1v2m0 1v1m0 2v1m0 9v1m0 1v2m0 1v1m0 1v2m0 1v2m0 1v1m0 1v2m0 1v1m0 1v2m0 1v1m0 2v1m0 1v1m0 67v1m0 2v1M639.5 205v1m0 1v1m0 1v1m0 7v1m0 1v1m0 1v1m0 7v1m0 1v1m0 1v1m0 7v1m0 1v1m0 1v1m0 9v1m0 1v1m0 1v1m0 7v1m0 1v1m0 1v1m0 9v1m0 1v1m0 1v1m0 9v1m0 1v1m0 1v1m0 9v1m0 1v1m0 1v1m0 11v1m0 1v1m0 1v1m0 11v1m0 1v1m0 1v1m0 13v1m0 1v1m0 1v1m0 15v1m0 1v1m0 1v1m0 17v1m0 1v1m0 1v1m0 1v1m0 26v1m0 1v1m0 2v1m0 1v1m0 1v1m0 190v1m0 1v2m0 1v1m0 1v2m0 1v2m0 1v1m0 1v2m0 1v1m0 2v1m0 12v1m0 1v2m0 1v1m0 1v2m0 1v1m0 1v2M640.5 201v1m0 11v1m0 11v1m0 11v1m0 13v1m0 11v1m0 13v1m0 13v1m0 13v1m0 13v1m0 1v1m0 13v1m0 1v1m0 13v1m0 1v1m0 1v1m0 15v1m0 1v1m0 1v1m0 15v1m0 1v1m0 1v1m0 1v1m0 1v1m0 20v1m0 1v1m0 1v1m0 1v1m0 1v1m0 1v1m0 23v1m0 1v1m0 1v1m0 4v1m0 1v1m0 1v1m0 1v2m0 1v1m0 1v1m0 1v2m0 1v1m0 1v1m0 1v1m0 2v1m0 1v1m0 4v1m0 1v1m0 1v2m0 1v1m0 1v1m0 19v1m0 4v1M641.5 547v1m0 2v1m0 2v1m0 1v1m0 2v1m0 1v1m0 2v1m0 4v1m0 67v1m0 1v1m0 2v1m0 4v1M642.5 672v1m0 2v1m0 1v1m0 2v1M643.5 204v1m0 35v1m0 11v1m0 25v1m0 13v1m0 13v1m0 15v1m0 15v1m0 17v1m0 17v1m0 21v1m0 25v1m0 39v1m0 1v1m0 1v1m0 1v1m0 4v1M644.5 198v1m0 1v1m0 5v1m0 1v1m0 1v1m0 1v1m0 5v1m0 1v1m0 1v1m0 1v1m0 5v1m0 1v1m0 1v1m0 1v1m0 5v1m0 1v1m0 1v1m0 1v1m0 5v1m0 1v1m0 1v1m0 1v1m0 7v1m0 1v1m0 1v1m0 1v1m0 7v1m0 1v1m0 1v1m0 1v1m0 7v1m0 1v1m0 1v1m0 1v1m0 7v1m0 1v1m0 1v1m0 1v1m0 9v1m0 1v1m0 1v1m0 1v1m0 9v1m0 1v1m0 1v1m0 1v1m0 1v1m0 7v1m0 1v1m0 1v1m0 1v1m0 1v1m0 1v1m0 9v1m0 1v1m0 1v1m0 1v1m0 1v1m0 1v1m0 1v1m0 9v1m0 1v1m0 1v1m0 1v1m0 1v1m0 1v1m0 1v1m0 1v1m0 14v1m0 1v1m0 1v1m0 1v1m0 1v1m0 1v6m0 1v1m0 1v1m0 1v1m0 1v1m0 22v1m0 1v1m0 9v1m0 1v1m0 1v1m0 2v1m0 1v1m0 11v1m0 1v2m0 1v1m0 1v2m0 1v1m0 1v2m0 1v1m0 9v1m0 1v2m0 1v1m0 1v2m0 1v1m0 1v2m0 1v2m0 1v1m0 1v1m0 15v1m0 2v1m0 1v1m0 2v1m0 1v2m0 1v1m0 2v1m0 1v1m0 2v1m0 1v2m0 1v1m0 2v1m0 1v1m0 2v1m0 1v2m0 1v1m0 2v1m0 1v1m0 2v1M645.5 203v1m0 35v1m0 10v1m0 39v1m0 127v1m0 36v1m0 129v1m0 1v1m0 2v1m0 1v2m0 1v1m0 2v1m0 1v1m0 2v1m0 1v2m0 1v1m0 2v1m0 1v1m0 2v1m0 1v2m0 1v1m0 2v1m0 1v1m0 2v1m0 17v1m0 2v1m0 1v2m0 1v1m0 1v2m0 1v1m0 1v2m0 1v1m0 12v1m0 2v1m0 1v2m0 1v1M646.5 199v1m0 7v1m0 1v1m0 1v1m0 7v1m0 1v1m0 1v1m0 7v1m0 1v1m0 1v1m0 7v1m0 1v1m0 1v1m0 7v1m0 1v1m0 1v1m0 9v1m0 1v1m0 1v1m0 9v1m0 1v1m0 1v1m0 9v1m0 1v1m0 1v1m0 9v1m0 1v1m0 1v1m0 9v1m0 1v1m0 1v1m0 1v1m0 9v1m0 1v1m0 1v1m0 1v1m0 9v1m0 1v1m0 1v1m0 1v1m0 13v1m0 1v1m0 1v1m0 1v1m0 13v1m0 1v1m0 1v1m0 1v1m0 1v1m0 16v1m0 1v1m0 1v1m0 1v1m0 1v1m0 1v1m0 30v1m0 1v4m0 1v1m0 1v1m0 1v4m0 1v1m0 1v1m0 2v1m0 1v1m0 1v1m0 2v1m0 1v1m0 1v1M647.5 371v1m0 19v1m0 22v1m0 1v1m0 1v1m0 22v1m0 1v1m0 1v6m0 1v1m0 1v1m0 1v1m0 78v1m0 1v1m0 2v1m0 1v1m0 2v1m0 1v2m0 1v1m0 20v1m0 2v1m0 1v1m0 2v1m0 1v2m0 1v1m0 1v2m0 1v1m0 2v1m0 1v1m0 2v1m0 2v1m0 1v1m0 2v1m0 1v1m0 2v1m0 2v1m0 1v1m0 2v1M648.5 649v1m0 2v1m0 1v1m0 2v1m0 1v1m0 2v1m0 17v1m0 2v1m0 1v1m0 2v1M650.5 206v1m0 1v1m0 7v1m0 1v1m0 1v1m0 7v1m0 1v1m0 1v1m0 9v1m0 1v1m0 9v1m0 1v1m0 9v1m0 1v1m0 1v1m0 9v1m0 1v1m0 11v1m0 1v1m0 11v1m0 1v1m0 1v1m0 9v1m0 1v1m0 1v1m0 11v1m0 1v1m0 1v1m0 13v1m0 1v1m0 1v1m0 13v1m0 1v1m0 1v1m0 1v1m0 13v1m0 1v1m0 1v1m0 1v1m0 16v3m0 1v1m0 1v1m0 1v1m0 1v1m0 21v3m0 1v1m0 1v1m0 1v2m0 3v1m0 1v1m0 1v1M651.5 200v1m0 1v1m0 7v1m0 1v1m0 1v1m0 7v1m0 1v1m0 1v1m0 7v1m0 1v1m0 1v1m0 7v1m0 1v1m0 1v1m0 9v1m0 1v1m0 1v1m0 7v1m0 1v1m0 1v1m0 9v1m0 1v1m0 1v1m0 9v1m0 1v1m0 1v1m0 9v1m0 1v1m0 1v1m0 1v1m0 9v1m0 1v1m0 1v1m0 1v1m0 9v1m0 1v1m0 1v1m0 1v1m0 11v1m0 1v1m0 1v1m0 1v1m0 13v1m0 1v1m0 1v1m0 1v1m0 13v1m0 1v1m0 1v1m0 1v1m0 1v3m0 16v1m0 1v1m0 1v4m0 1v1m0 1v1m0 1v1m0 26v1m0 1v1m0 1v1m0 2v1m0 1v1m0 1v4m0 1v1m0 1v2m0 1v1m0 1v1m0 6v1m0 2v1m0 1v1m0 1v2m0 1v1m0 1v2m0 1v1m0 9v1m0 1v2m0 1v1m0 1v2m0 1v1m0 1v2m0 1v1m0 12v1m0 1v2m0 1v1m0 1v2m0 1v2m0 1v1m0 1v2m0 1v1m0 2v1m0 1v1M652.5 206v1m0 9v1m0 1v1m0 9v1m0 1v1m0 11v1m0 1v1m0 9v1m0 1v1m0 9v1m0 1v1m0 11v1m0 1v1m0 11v1m0 1v1m0 11v1m0 1v1m0 11v1m0 1v1m0 13v1m0 1v1m0 15v1m0 17v1m0 19v1m0 23v1m0 143v1m0 1v1m0 2v1m0 2v1m0 1v1m0 2v1m0 1v1m0 36v1m0 1v1m0 2v1m0 1v2m0 1v1m0 1v2m0 1v2m0 1v1m0 1v2m0 1v1m0 1v2m0 1v2m0 1v1m0 12v1m0 1v2m0 1v1m0 1v2m0 1v2m0 1v1M653.5 200v1m0 1v1m0 9v1m0 1v1m0 9v1m0 1v1m0 9v1m0 1v1m0 9v1m0 1v1m0 9v1m0 1v1m0 1v1m0 9v1m0 1v1m0 11v1m0 1v1m0 11v1m0 1v1m0 11v1m0 1v1m0 1v1m0 9v1m0 1v1m0 1v1m0 1v1m0 9v1m0 1v1m0 1v1m0 1v1m0 9v1m0 1v1m0 1v1m0 1v1m0 1v1m0 9v1m0 1v1m0 1v1m0 1v1m0 1v1m0 11v1m0 1v1m0 1v1m0 1v1m0 1v1m0 1v1m0 13v1m0 1v1m0 2v1m0 1v1m0 1v1m0 1v1m0 1v1m0 19v1m0 5v2m0 1v1m0 1v1m0 1v1m0 1v2m0 1v1m0 1v1m0 1v1m0 2v1m0 1v1M654.5 528v1m0 1v1m0 2v1m0 1v1m0 2v1m0 1v1m0 15v1m0 1v1m0 2v1m0 2v1m0 1v1m0 2v1m0 1v1m0 2v1M655.5 626v1m0 2v1m0 1v1m0 2v1m0 1v1m0 2v1m0 2v1m0 1v1m0 15v1m0 1v1m0 2v1m0 2v1m0 1v1m0 2v1M656.5 467v1M657.5 203v1m0 1v1m0 1v1m0 1v1m0 5v1m0 1v1m0 1v1m0 1v1m0 5v1m0 1v1m0 1v1m0 1v1m0 5v1m0 1v1m0 1v1m0 1v1m0 5v1m0 1v1m0 1v1m0 1v1m0 7v1m0 1v1m0 1v1m0 1v1m0 5v1m0 1v1m0 1v1m0 1v1m0 7v1m0 1v1m0 1v1m0 1v1m0 7v1m0 1v1m0 1v1m0 1v1m0 1v1m0 5v1m0 1v1m0 1v1m0 1v1m0 1v1m0 7v1m0 1v1m0 1v1m0 1v1m0 1v1m0 7v1m0 1v1m0 1v1m0 1v1m0 1v1m0 1v1m0 7v1m0 1v1m0 1v1m0 1v1m0 1v1m0 1v1m0 9v1m0 1v1m0 1v1m0 1v1m0 1v1m0 1v1m0 9v1m0 1v1m0 1v1m0 1v1m0 1v1m0 1v1m0 1v1m0 1v1m0 12v1m0 1v1m0 1v1m0 1v6m0 1v1m0 1v1m0 1v1m0 15v1m0 1v1m0 1v2m0 1v1m0 1v1m0 1v2m0 1v1m0 1v1m0 1v2m0 1v1m0 1v1m0 2v1m0 1v1m0 1v2m0 1v1m0 1v1m0 1v2m0 1v1m0 9v1m0 1v2m0 1v1m0 1v2m0 1v1m0 1v1m0 12v1m0 2v1m0 1v1m0 2v1m0 1v2m0 1v1M658.5 211v1m0 11v1m0 11v1m0 11v1m0 13v1m0 11v1m0 13v1m0 13v1m0 13v1m0 15v1m0 15v1m0 15v1m0 19v1m0 19v1m0 25v1m0 28v1m0 3v2m0 83v1m0 1v1m0 2v1m0 1v2m0 1v1m0 2v1m0 22v1m0 2v1m0 1v1m0 2v1m0 1v2m0 1v1m0 1v2m0 1v2m0 1v1m0 1v2m0 1v1m0 2v1m0 1v1m0 2v1m0 20v1m0 1v1m0 2v1m0 1v2m0 1v1m0 1v2m0 1v1m0 2v1M659.5 204v1m0 1v1m0 1v1m0 7v1m0 1v1m0 1v1m0 7v1m0 1v1m0 1v1m0 7v1m0 1v1m0 1v1m0 7v1m0 1v1m0 1v1m0 9v1m0 1v1m0 1v1m0 7v1m0 1v1m0 1v1m0 1v1m0 7v1m0 1v1m0 1v1m0 1v1m0 7v1m0 1v1m0 1v1m0 1v1m0 7v1m0 1v1m0 1v1m0 1v1m0 7v1m0 1v1m0 1v1m0 1v1m0 1v1m0 7v1m0 1v1m0 1v1m0 1v1m0 1v1m0 9v1m0 1v1m0 1v1m0 1v1m0 11v1m0 1v1m0 1v1m0 1v1m0 1v1m0 13v1m0 1v1m0 1v1m0 1v1m0 18v1m0 1v1m0 1v2m0 1v1m0 1v1m0 25v4m0 1v1m0 1v1m0 2v1m0 1v1m0 1v1m0 168v1M660.5 200v1m0 11v1m0 23v1m0 11v1m0 25v1m0 41v1m0 13v1m0 15v1m0 15v1m0 1v1m0 15v1m0 1v1m0 15v1m0 1v1m0 1v1m0 1v1m0 16v1m0 1v1m0 1v1m0 1v1m0 1v1m0 16v1m0 1v1m0 1v2m0 1v1m0 1v1m0 1v1m0 4v1m0 36v1m0 1v1m0 2v1m0 1v1m0 11v1m0 2v1m0 1v1m0 1v2m0 1v1m0 2v1m0 14v1m0 2v1m0 1v1m0 2v1m0 1v1m0 2v1M661.5 590v1m0 2v1m0 1v1m0 2v1m0 2v1m0 1v1m0 2v1m0 1v1m0 2v1m0 2v1m0 1v1m0 20v1m0 2v1m0 1v1m0 2v1m0 1v2m0 1v1m0 1v2m0 1v1m0 15v1m0 1v1m0 2v1M663.5 201v1m0 1v1m0 9v1m0 1v1m0 9v1m0 1v1m0 9v1m0 1v1m0 9v1m0 1v1m0 9v1m0 1v1m0 11v1m0 1v1m0 9v1m0 1v1m0 1v1m0 9v1m0 1v1m0 1v1m0 9v1m0 1v1m0 1v1m0 11v1m0 1v1m0 13v1m0 1v1m0 13v1m0 1v1m0 1v1m0 13v1m0 1v1m0 1v1m0 15v1m0 1v1m0 1v1m0 1v1m0 15v1m0 1v1m0 1v1m0 1v1m0 21v1m0 1v6m0 3v1m0 31v2m0 1v1m0 1v4m0 1v1m0 9v1m0 1v2m0 1v1m0 1v1m0 2v1m0 11v1m0 2v1m0 1v2m0 1v1m0 2v1m0 22v1M664.5 207v1m0 1v1m0 9v1m0 1v1m0 9v1m0 1v1m0 9v1m0 1v1m0 9v1m0 1v1m0 1v1m0 7v1m0 1v1m0 1v1m0 9v1m0 1v1m0 1v1m0 9v1m0 1v1m0 1v1m0 9v1m0 1v1m0 1v1m0 9v1m0 1v1m0 1v1m0 11v1m0 1v1m0 1v1m0 11v1m0 1v1m0 1v1m0 11v1m0 1v1m0 1v1m0 1v1m0 13v1m0 1v1m0 1v1m0 1v1m0 13v1m0 1v1m0 1v1m0 1v1m0 1v1m0 14v1m0 1v1m0 1v1m0 1v1m0 1v6m0 19v1m0 1v1m0 1v4m0 1v1m0 1v1m0 1v2m0 1v1m0 1v1m0 1v2m0 76v1m0 1v2m0 1v1m0 1v2m0 1v2m0 1v1m0 1v2m0 1v1m0 1v2m0 1v2m0 1v1m0 1v2m0 1v1m0 1v2m0 1v2m0 1v1m0 1v2m0 1v1m0 1v2m0 1v2m0 1v1m0 1v2m0 1v1m0 1v2m0 1v2m0 1v1m0 1v2m0 1v1m0 15v1m0 1v1m0 2v1m0 1v2m0 1v1M665.5 200v1m0 1v1m0 9v1m0 1v1m0 9v1m0 1v1m0 9v1m0 1v1m0 9v1m0 1v1m0 11v1m0 1v1m0 9v1m0 1v1m0 11v1m0 1v1m0 11v1m0 1v1m0 11v1m0 1v1m0 11v1m0 1v1m0 13v1m0 1v1m0 15v1m0 17v1m0 17v1m0 252v1m0 2v1m0 1v1m0 2v1m0 17v1M666.5 206v1m0 1v1m0 1v1m0 7v1m0 1v1m0 1v1m0 7v1m0 1v1m0 1v1m0 7v1m0 1v1m0 1v1m0 9v1m0 1v1m0 9v1m0 1v1m0 1v1m0 7v1m0 1v1m0 1v1m0 9v1m0 1v1m0 1v1m0 9v1m0 1v1m0 1v1m0 9v1m0 1v1m0 1v1m0 1v1m0 9v1m0 1v1m0 1v1m0 1v1m0 7v1m0 1v1m0 1v1m0 1v1m0 1v1m0 9v1m0 1v1m0 1v1m0 1v1m0 11v1m0 1v1m0 1v1m0 1v1m0 11v1m0 1v1m0 1v1m0 1v1m0 1v1m0 14v1m0 1v1m0 1v1m0 1v1m0 1v1m0 2v1m0 1v1m0 10v1m0 1v1m0 1v1m0 4v1m0 1v1m0 1v1m0 1v1m0 2v1m0 1v1m0 1v1m0 20v1m0 2v1m0 1v1m0 11v1m0 2v1m0 1v1m0 2v1m0 1v1m0 12v1m0 1v1m0 2v1m0 1v1m0 2v1m0 22v1m0 2v1m0 4v1M667.5 446v1m0 33v1m0 1v1m0 4v1m0 89v1m0 4v1m0 2v1m0 4v1m0 2v1m0 1v1m0 2v1m0 4v1m0 2v1m0 1v1m0 2v1m0 1v2m0 1v1m0 2v1m0 1v1m0 2v1m0 1v2m0 1v1m0 2v1m0 1v1m0 15v1m0 2v1m0 1v1m0 2v1m0 1v1m0 2v1M669.5 212v1m0 11v1m0 11v1m0 11v1m0 25v1m0 55v1m0 15v1m0 15v1m0 17v1m0 17v1m0 21v1m0 22v2m0 1v1m0 28v1m0 1v1M670.5 202v1m0 1v1m0 1v1m0 1v1m0 5v1m0 1v1m0 1v1m0 1v1m0 5v1m0 1v1m0 1v1m0 1v1m0 5v1m0 1v1m0 1v1m0 1v1m0 5v1m0 1v1m0 1v1m0 1v1m0 7v1m0 1v1m0 1v1m0 1v1m0 5v1m0 1v1m0 1v1m0 1v1m0 7v1m0 1v1m0 1v1m0 1v1m0 7v1m0 1v1m0 1v1m0 1v1m0 7v1m0 1v1m0 1v1m0 1v1m0 1v1m0 5v1m0 1v1m0 1v1m0 1v1m0 1v1m0 7v1m0 1v1m0 1v1m0 1v1m0 1v1m0 9v1m0 1v1m0 1v1m0 1v1m0 1v1m0 7v1m0 1v1m0 1v1m0 1v1m0 1v1m0 1v1m0 9v1m0 1v1m0 1v1m0 1v1m0 1v1m0 1v1m0 11v1m0 1v4m0 1v1m0 1v1m0 1v1m0 1v1m0 10v1m0 1v1m0 1v4m0 1v1m0 4v5m0 1v1m0 15v1m0 1v2m0 1v1m0 1v1m0 1v2m0 1v1m0 1v1m0 2v1m0 4v1m0 1v1m0 1v2m0 1v1m0 1v1m0 2v1m0 9v1m0 1v1m0 2v1m0 1v1m0 2v1m0 17v1M671.5 222v1m0 11v1m0 37v1m0 14v1m0 128v1m0 53v1m0 1v1m0 83v1m0 1v2m0 1v1m0 2v1m0 1v2m0 1v1m0 56v1m0 2v1m0 1v2m0 1v1m0 1v2m0 1v1m0 2v1m0 1v1M672.5 203v1m0 1v1m0 1v1m0 7v1m0 1v1m0 1v1m0 7v1m0 1v1m0 1v1m0 7v1m0 1v1m0 1v1m0 7v1m0 1v1m0 1v1m0 1v1m0 7v1m0 1v1m0 1v1m0 7v1m0 1v1m0 1v1m0 1v1m0 7v1m0 1v1m0 1v1m0 9v1m0 1v1m0 1v1m0 9v1m0 1v1m0 1v1m0 9v1m0 1v1m0 1v1m0 1v1m0 7v1m0 1v1m0 1v1m0 1v1m0 9v1m0 1v1m0 1v1m0 1v1m0 1v1m0 9v1m0 1v1m0 1v1m0 1v1m0 11v1m0 1v1m0 1v1m0 1v1m0 1v1m0 12v1m0 1v1m0 1v1m0 1v1m0 1v1m0 14v1m0 1v1m0 1v4m0 1v1m0 1v1m0 21v2m0 1v1m0 1v1m0 4v1m0 1v1m0 150v1m0 2v1m0 1v1m0 15v1m0 1v2m0 1v1m0 2v1m0 1v1M673.5 313v1m0 29v1m0 15v1m0 15v1m0 17v1m0 1v1m0 17v1m0 23v1m0 1v1m0 23v1m0 1v1m0 1v4m0 1v1m0 34v1m0 2v1m0 1v1m0 1v2m0 1v1m0 9v1m0 1v2m0 1v1m0 2v1m0 1v1m0 2v1m0 14v1m0 2v1m0 1v1m0 2v1M674.5 628v1m0 2v1m0 1v1m0 2v1m0 1v2m0 1v1m0 2v1m0 1v1m0 15v1m0 1v1m0 2v1" stroke="#ffffff" stroke-width="1" fill="none"/></g>
<rect x="305" y="113" width="371" height="696" fill="none" stroke="#1c1c1c" stroke-width="2"/>
<line x1="298" y1="809" x2="305" y2="809" stroke="#1c1c1c" stroke-width="2"/>
<text x="291" y="813" font-size="11.01" text-anchor="end" textLength="6.63" lengthAdjust="spacingAndGlyphs" >0</text>
<line x1="298" y1="659.3" x2="305" y2="659.3" stroke="#1c1c1c" stroke-width="2"/>
<text x="291" y="663.3" font-size="11.01" text-anchor="end" textLength="26.51" lengthAdjust="spacingAndGlyphs" >1000</text>
<line x1="298" y1="509.6" x2="305" y2="509.6" stroke="#1c1c1c" stroke-width="2"/>
<text x="291" y="513.6" font-size="11.01" text-anchor="end" textLength="26.51" lengthAdjust="spacingAndGlyphs" >2000</text>
<line x1="298" y1="359.9" x2="305" y2="359.9" stroke="#1c1c1c" stroke-width="2"/>
<text x="291" y="363.9" font-size="11.01" text-anchor="end" textLength="26.51" lengthAdjust="spacingAndGlyphs" >3000</text>
<line x1="298" y1="210.2" x2="305" y2="210.2" stroke="#1c1c1c" stroke-width="2"/>
<text x="291" y="214.2" font-size="11.01" text-anchor="end" textLength="26.51" lengthAdjust="spacingAndGlyphs" >4000</text>
<line x1="305" y1="809" x2="305" y2="816" stroke="#1c1c1c" stroke-width="2"/>
<text x="305" y="832" font-size="11.01" text-anchor="middle" textLength="6.63" lengthAdjust="spacingAndGlyphs" >0</text>
<line x1="380" y1="809" x2="380" y2="816" stroke="#1c1c1c" stroke-width="2"/>
<text x="380" y="832" font-size="11.01" text-anchor="middle" textLength="19.88" lengthAdjust="spacingAndGlyphs" >500</text>
<line x1="455" y1="809" x2="455" y2="816" stroke="#1c1c1c" stroke-width="2"/>
<text x="455" y="832" font-size="11.01" text-anchor="middle" textLength="26.51" lengthAdjust="spacingAndGlyphs" >1000</text>
<line x1="530" y1="809" x2="530" y2="816" stroke="#1c1c1c" stroke-width="2"/>
<text x="530" y="832" font-size="11.01" text-anchor="middle" textLength="26.51" lengthAdjust="spacingAndGlyphs" >1500</text>
<line x1="604" y1="809" x2="604" y2="816" stroke="#1c1c1c" stroke-width="2"/>
<text x="604" y="832" font-size="11.01" text-anchor="middle" textLength="26.51" lengthAdjust="spacingAndGlyphs" >2000</text>
<text x="490.5" y="850" font-size="11.01" text-anchor="middle" textLength="7.14" lengthAdjust="spacingAndGlyphs" >X</text>
<text x="0" y="0" font-size="11.01" text-anchor="middle" textLength="6.36" lengthAdjust="spacingAndGlyphs" transform="translate(253,460.5) rotate(-90)">Y</text>
<defs><linearGradient id="hot" x1="0" y1="1" x2="0" y2="0"><stop offset="0" stop-color="rgb(10,0,0)"/><stop offset="0.365" stop-color="rgb(255,0,0)"/><stop offset="0.746" stop-color="rgb(255,255,0)"/><stop offset="1" stop-color="rgb(255,255,255)"/></linearGradient></defs>
<rect x="712" y="113" width="35" height="696" fill="url(#hot)" stroke="#1c1c1c" stroke-width="2"/>
<line x1="747" y1="809" x2="754" y2="809" stroke="#1c1c1c" stroke-width="2"/>
<text x="762.5" y="813" font-size="11.01" text-anchor="start" textLength="6.63" lengthAdjust="spacingAndGlyphs" >0</text>
<line x1="747" y1="693" x2="754" y2="693" stroke="#1c1c1c" stroke-width="2"/>
<text x="762.5" y="697" font-size="11.01" text-anchor="start" textLength="19.88" lengthAdjust="spacingAndGlyphs" >500</text>
<line x1="747" y1="577" x2="754" y2="577" stroke="#1c1c1c" stroke-width="2"/>
<text x="762.5" y="581" font-size="11.01" text-anchor="start" textLength="26.51" lengthAdjust="spacingAndGlyphs" >1000</text>
<line x1="747" y1="461" x2="754" y2="461" stroke="#1c1c1c" stroke-width="2"/>
<text x="762.5" y="465" font-size="11.01" text-anchor="start" textLength="26.51" lengthAdjust="spacingAndGlyphs" >1500</text>
<line x1="747" y1="345" x2="754" y2="345" stroke="#1c1c1c" stroke-width="2"/>
<text x="762.5" y="349" font-size="11.01" text-anchor="start" textLength="26.51" lengthAdjust="spacingAndGlyphs" >2000</text>
<line x1="747" y1="229" x2="754" y2="229" stroke="#1c1c1c" stroke-width="2"/>
<text x="762.5" y="233" font-size="11.01" text-anchor="start" textLength="26.51" lengthAdjust="spacingAndGlyphs" >2500</text>
<line x1="747" y1="113" x2="754" y2="113" stroke="#1c1c1c" stroke-width="2"/>
<text x="762.5" y="117" font-size="11.01" text-anchor="start" textLength="26.51" lengthAdjust="spacingAndGlyphs" >3000</text>
<path d="M911,233 H991.8 V139.8 H997.4 V118.7 H1003.0 V130.8 H1008.6 V139.8 H1014.2 V143.8 H1019.8 V145.8 H1025.4 V147.9 H1031.0 V150.0 H1036.6 V151.0 H1042.1 V152.0 H1047.7 V153.0 H1053.3 V154.0 H1058.9 V154.0 H1064.5 V155.0 H1070.1 V155.0 H1075.7 V156.0 H1081.3 V156.0 H1086.9 V157.0 H1092.5 V157.0 H1098.1 V158.0 H1103.7 V158.0 H1109.3 V158.0 H1114.9 V159.0 H1120.5 V159.0 H1126.1 V160.0 H1131.7 V160.0 H1137.2 V160.0 H1142.8 V161.0 H1148.4 V161.0 H1154.0 V161.0 H1159.6 V162.0 H1165.2 V162.0 H1170.8 V162.0 H1176.4 V162.0 H1182.0 V133.8 H1185" fill="none" stroke="#0000ff" stroke-width="1.8" stroke-linejoin="miter"/>
<rect x="911" y="113" width="274" height="120" fill="none" stroke="#1c1c1c" stroke-width="2"/>
<line x1="911.3" y1="233" x2="911.3" y2="240" stroke="#1c1c1c" stroke-width="2"/>
<text x="911.3" y="256" font-size="11.01" text-anchor="middle" textLength="6.63" lengthAdjust="spacingAndGlyphs" >0</text>
<line x1="957.8" y1="233" x2="957.8" y2="240" stroke="#1c1c1c" stroke-width="2"/>
<line x1="1004.3" y1="233" x2="1004.3" y2="240" stroke="#1c1c1c" stroke-width="2"/>
<text x="1004.3" y="256" font-size="11.01" text-anchor="middle" textLength="26.51" lengthAdjust="spacingAndGlyphs" >1000</text>
<line x1="1050.7" y1="233" x2="1050.7" y2="240" stroke="#1c1c1c" stroke-width="2"/>
<line x1="1097.2" y1="233" x2="1097.2" y2="240" stroke="#1c1c1c" stroke-width="2"/>
<text x="1097.2" y="256" font-size="11.01" text-anchor="middle" textLength="26.51" lengthAdjust="spacingAndGlyphs" >2000</text>
<line x1="1143.7" y1="233" x2="1143.7" y2="240" stroke="#1c1c1c" stroke-width="2"/>
<line x1="904" y1="233.0" x2="911" y2="233.0" stroke="#1c1c1c" stroke-width="2"/>
<text x="896" y="237.0" font-size="11.01" text-anchor="end" textLength="6.63" lengthAdjust="spacingAndGlyphs" >0</text>
<line x1="904" y1="199.7" x2="911" y2="199.7" stroke="#1c1c1c" stroke-width="2"/>
<text x="896" y="203.7" font-size="11.01" text-anchor="end" textLength="6.63" lengthAdjust="spacingAndGlyphs" >2</text>
<line x1="904" y1="166.4" x2="911" y2="166.4" stroke="#1c1c1c" stroke-width="2"/>
<text x="896" y="170.4" font-size="11.01" text-anchor="end" textLength="6.63" lengthAdjust="spacingAndGlyphs" >4</text>
<line x1="904" y1="133.10000000000002" x2="911" y2="133.10000000000002" stroke="#1c1c1c" stroke-width="2"/>
<text x="896" y="137.10000000000002" font-size="11.01" text-anchor="end" textLength="6.63" lengthAdjust="spacingAndGlyphs" >6</text>
<text x="0" y="0" font-size="11.01" text-anchor="middle" textLength="71.44" lengthAdjust="spacingAndGlyphs" transform="translate(879,174) rotate(-90)">log frequency</text>
<text x="0" y="0" font-size="11.01" text-anchor="middle" textLength="93.52" lengthAdjust="spacingAndGlyphs" transform="translate(1194,175) rotate(90)">histogram (detail)</text>
<text x="1047.7" y="274" font-size="11.01" text-anchor="middle" textLength="34.82" lengthAdjust="spacingAndGlyphs" >counts</text>
<path d="M911,405 H925 V290.7 H930.6 V294.1 H936.2 V311.2 H941.7 V317.3 H947.3 V320.9 H952.9 V322.9 H958.5 V324.9 H964.0 V326.7 H969.6 V328.9 H975.2 V331.0 H980.8 V333.0 H986.3 V334.0 H991.9 V336.0 H997.5 V337.0 H1003.1 V338.0 H1008.6 V340.0 H1014.2 V341.0 H1019.8 V343.0 H1025.4 V345.0 H1030.9 V348.0 H1036.5 V351.0 H1042.1 V353.0 H1047.7 V357.5 H1053.2 V367.0 H1058.8 V384.0 H1064.4 V405 H1185" fill="none" stroke="#0000ff" stroke-width="1.8" stroke-linejoin="miter"/>
<rect x="911" y="285" width="274" height="120" fill="none" stroke="#1c1c1c" stroke-width="2"/>
<line x1="929.0" y1="405" x2="929.0" y2="412" stroke="#1c1c1c" stroke-width="2"/>
<text x="929.0" y="428" font-size="11.01" text-anchor="middle" textLength="6.63" lengthAdjust="spacingAndGlyphs" >0</text>
<line x1="966.3" y1="405" x2="966.3" y2="412" stroke="#1c1c1c" stroke-width="2"/>
<line x1="1003.6" y1="405" x2="1003.6" y2="412" stroke="#1c1c1c" stroke-width="2"/>
<text x="1003.6" y="428" font-size="11.01" text-anchor="middle" textLength="33.14" lengthAdjust="spacingAndGlyphs" >20000</text>
<line x1="1040.9" y1="405" x2="1040.9" y2="412" stroke="#1c1c1c" stroke-width="2"/>
<line x1="1078.2" y1="405" x2="1078.2" y2="412" stroke="#1c1c1c" stroke-width="2"/>
<text x="1078.2" y="428" font-size="11.01" text-anchor="middle" textLength="33.14" lengthAdjust="spacingAndGlyphs" >40000</text>
<line x1="1115.5" y1="405" x2="1115.5" y2="412" stroke="#1c1c1c" stroke-width="2"/>
<line x1="1152.8" y1="405" x2="1152.8" y2="412" stroke="#1c1c1c" stroke-width="2"/>
<text x="1152.8" y="428" font-size="11.01" text-anchor="middle" textLength="33.14" lengthAdjust="spacingAndGlyphs" >60000</text>
<line x1="904" y1="405.0" x2="911" y2="405.0" stroke="#1c1c1c" stroke-width="2"/>
<text x="896" y="409.0" font-size="11.01" text-anchor="end" textLength="6.63" lengthAdjust="spacingAndGlyphs" >0</text>
<line x1="904" y1="371.7" x2="911" y2="371.7" stroke="#1c1c1c" stroke-width="2"/>
<text x="896" y="375.7" font-size="11.01" text-anchor="end" textLength="6.63" lengthAdjust="spacingAndGlyphs" >2</text>
<line x1="904" y1="338.4" x2="911" y2="338.4" stroke="#1c1c1c" stroke-width="2"/>
<text x="896" y="342.4" font-size="11.01" text-anchor="end" textLength="6.63" lengthAdjust="spacingAndGlyphs" >4</text>
<line x1="904" y1="305.1" x2="911" y2="305.1" stroke="#1c1c1c" stroke-width="2"/>
<text x="896" y="309.1" font-size="11.01" text-anchor="end" textLength="6.63" lengthAdjust="spacingAndGlyphs" >6</text>
<text x="0" y="0" font-size="11.01" text-anchor="middle" textLength="71.44" lengthAdjust="spacingAndGlyphs" transform="translate(879,347) rotate(-90)">log frequency</text>
<text x="0" y="0" font-size="11.01" text-anchor="middle" textLength="80.30" lengthAdjust="spacingAndGlyphs" transform="translate(1194,349.5) rotate(90)">histogram (full)</text>
<text x="1047.7" y="446" font-size="11.01" text-anchor="middle" textLength="34.82" lengthAdjust="spacingAndGlyphs" >counts</text>
<text x="1046" y="577" font-size="11.01" text-anchor="middle" textLength="117.93" lengthAdjust="spacingAndGlyphs" >cut in x not configured</text>
<text x="1046" y="751" font-size="11.01" text-anchor="middle" textLength="117.93" lengthAdjust="spacingAndGlyphs" >cut in y not configured</text></svg></body></html>
